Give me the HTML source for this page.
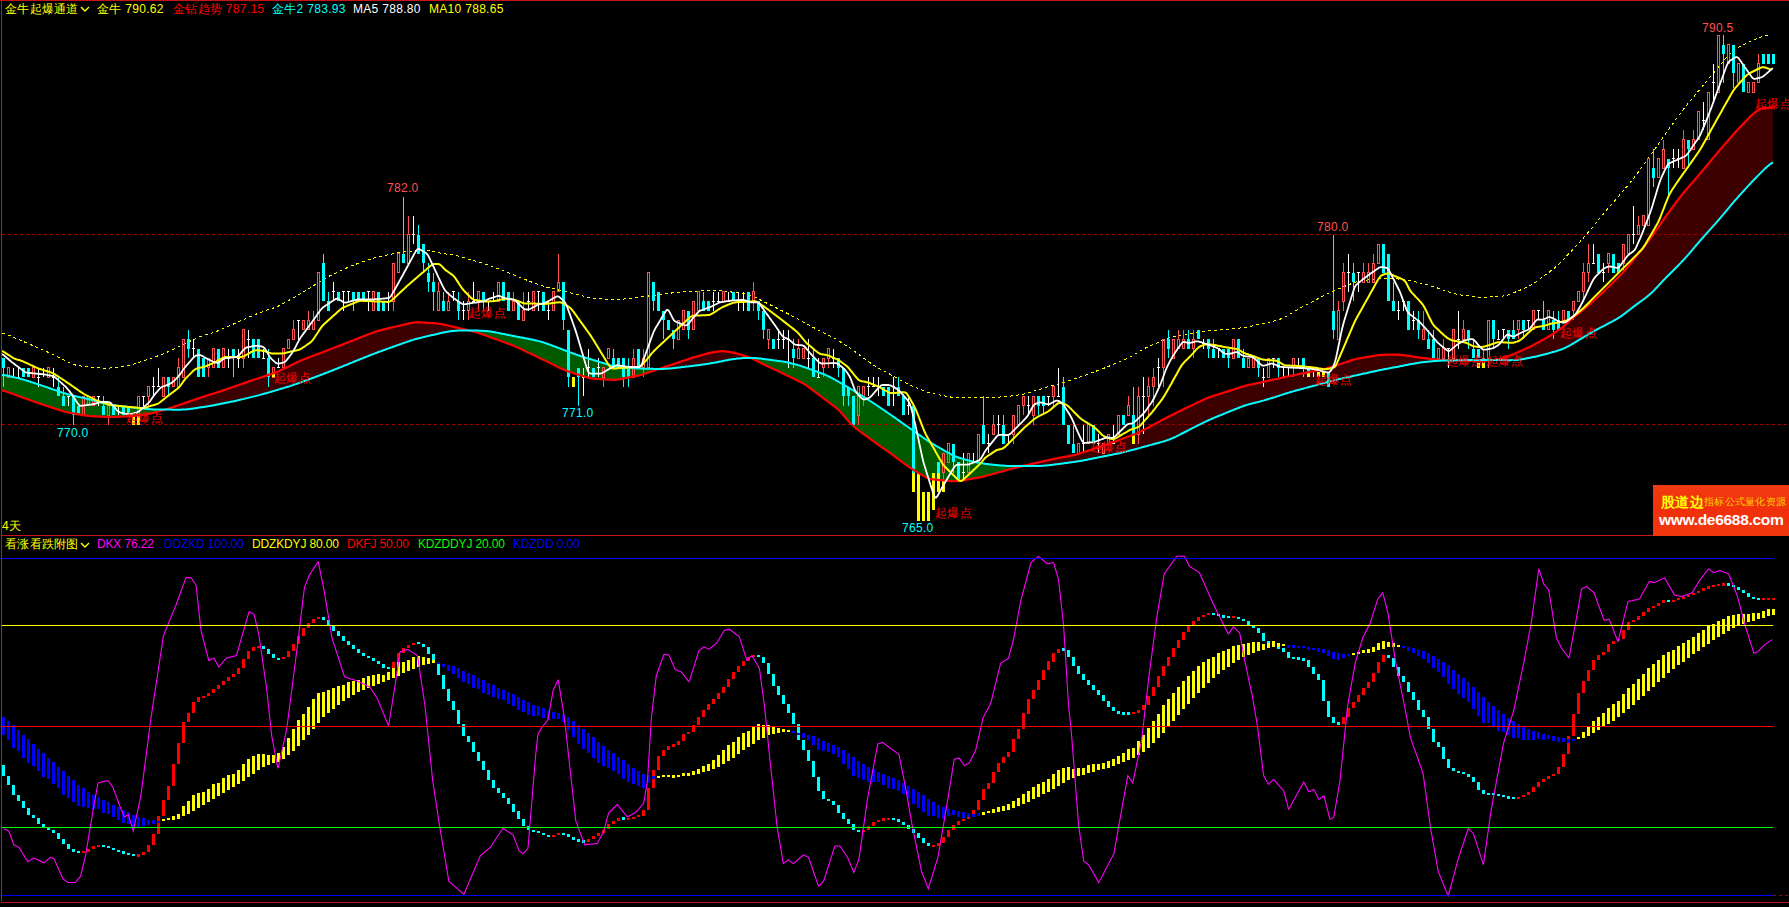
<!DOCTYPE html>
<html><head><meta charset="utf-8"><style>
html,body{margin:0;padding:0;background:#000;width:1789px;height:907px;overflow:hidden}
.t{position:absolute;font-family:"Liberation Sans",sans-serif;font-size:12px;line-height:12px;white-space:pre;letter-spacing:0.3px}
</style></head><body>
<svg width="1789" height="907" viewBox="0 0 1789 907" style="position:absolute;left:0;top:0">
<polygon points="2.0,390.4 3.0,390.6 4.0,390.8 5.0,391.1 6.0,391.4 7.0,391.8 8.0,392.1 9.0,392.5 10.0,392.9 11.0,393.2 12.0,393.6 13.0,394.0 14.0,394.3 15.0,394.7 16.0,395.1 17.0,395.5 18.0,395.8 19.0,396.2 20.0,396.6 21.0,396.9 22.0,397.3 23.0,397.6 24.0,398.0 25.0,398.3 26.0,398.7 27.0,399.0 28.0,399.4 29.0,399.7 30.0,400.1 31.0,400.5 32.0,400.8 33.0,401.2 34.0,401.5 35.0,401.9 36.0,402.2 37.0,402.5 38.0,402.9 39.0,403.2 40.0,403.6 41.0,403.9 42.0,404.3 43.0,404.6 44.0,405.0 45.0,405.3 46.0,405.6 47.0,406.0 48.0,406.3 49.0,406.6 50.0,406.9 51.0,407.3 52.0,407.6 53.0,407.9 54.0,408.2 55.0,408.6 56.0,408.9 57.0,409.2 58.0,409.5 59.0,409.9 60.0,410.2 61.0,410.5 62.0,410.8 63.0,411.1 64.0,411.4 65.0,411.7 66.0,412.0 67.0,412.2 68.0,412.4 69.0,412.6 70.0,412.8 71.0,413.0 72.0,413.2 73.0,413.4 74.0,413.5 75.0,413.7 76.0,413.9 77.0,414.1 78.0,414.2 79.0,414.4 80.0,414.6 81.0,414.8 82.0,414.9 83.0,415.1 84.0,415.3 85.0,415.4 86.0,415.6 87.0,415.7 88.0,415.8 89.0,415.9 90.0,416.0 91.0,416.1 92.0,416.2 93.0,416.2 94.0,416.3 95.0,416.3 96.0,416.4 97.0,416.4 98.0,416.5 99.0,416.5 100.0,416.6 101.0,416.6 102.0,416.7 103.0,416.7 104.0,416.8 105.0,416.8 106.0,416.9 107.0,416.9 108.0,416.9 109.0,417.0 110.0,417.0 111.0,417.0 112.0,417.0 113.0,416.9 114.0,416.9 115.0,416.9 116.0,416.8 117.0,416.8 118.0,416.7 119.0,416.7 120.0,416.6 121.0,416.6 122.0,416.5 123.0,416.5 124.0,416.4 125.0,416.4 126.0,416.3 127.0,416.3 128.0,416.2 129.0,416.2 130.0,416.1 131.0,416.0 132.0,415.9 133.0,415.9 134.0,415.8 135.0,415.7 136.0,415.5 137.0,415.4 138.0,415.3 139.0,415.2 140.0,415.0 141.0,414.9 142.0,414.8 143.0,414.7 144.0,414.5 145.0,414.4 146.0,414.3 147.0,414.1 148.0,414.0 149.0,413.8 150.0,413.6 151.0,413.4 152.0,413.2 153.0,412.9 154.0,412.7 155.0,412.4 156.0,412.1 157.0,411.8 158.0,411.5 159.0,411.3 160.0,411.0 161.0,410.7 162.0,410.4 163.0,410.1 164.0,409.8 165.0,409.6 165.0,409.6 164.0,409.6 163.0,409.5 162.0,409.5 161.0,409.5 160.0,409.5 159.0,409.5 158.0,409.5 157.0,409.5 156.0,409.4 155.0,409.4 154.0,409.4 153.0,409.4 152.0,409.3 151.0,409.3 150.0,409.2 149.0,409.1 148.0,409.1 147.0,409.0 146.0,408.9 145.0,408.8 144.0,408.7 143.0,408.6 142.0,408.5 141.0,408.4 140.0,408.3 139.0,408.2 138.0,408.1 137.0,408.0 136.0,407.8 135.0,407.7 134.0,407.6 133.0,407.5 132.0,407.4 131.0,407.3 130.0,407.2 129.0,407.1 128.0,407.0 127.0,406.9 126.0,406.7 125.0,406.6 124.0,406.5 123.0,406.4 122.0,406.3 121.0,406.2 120.0,406.1 119.0,406.0 118.0,405.8 117.0,405.7 116.0,405.6 115.0,405.4 114.0,405.3 113.0,405.2 112.0,405.0 111.0,404.8 110.0,404.6 109.0,404.4 108.0,404.2 107.0,404.0 106.0,403.7 105.0,403.5 104.0,403.3 103.0,403.0 102.0,402.7 101.0,402.5 100.0,402.2 99.0,401.9 98.0,401.7 97.0,401.4 96.0,401.1 95.0,400.9 94.0,400.6 93.0,400.3 92.0,400.1 91.0,399.8 90.0,399.5 89.0,399.3 88.0,399.0 87.0,398.8 86.0,398.5 85.0,398.3 84.0,398.1 83.0,397.8 82.0,397.6 81.0,397.4 80.0,397.1 79.0,396.9 78.0,396.7 77.0,396.5 76.0,396.2 75.0,396.0 74.0,395.8 73.0,395.5 72.0,395.3 71.0,395.0 70.0,394.8 69.0,394.5 68.0,394.3 67.0,394.0 66.0,393.7 65.0,393.4 64.0,393.1 63.0,392.8 62.0,392.5 61.0,392.1 60.0,391.8 59.0,391.5 58.0,391.1 57.0,390.8 56.0,390.4 55.0,390.1 54.0,389.7 53.0,389.4 52.0,389.0 51.0,388.7 50.0,388.3 49.0,388.0 48.0,387.6 47.0,387.3 46.0,386.9 45.0,386.6 44.0,386.2 43.0,385.9 42.0,385.6 41.0,385.2 40.0,384.9 39.0,384.6 38.0,384.2 37.0,383.9 36.0,383.6 35.0,383.3 34.0,382.9 33.0,382.6 32.0,382.3 31.0,382.0 30.0,381.6 29.0,381.3 28.0,381.0 27.0,380.7 26.0,380.4 25.0,380.1 24.0,379.8 23.0,379.5 22.0,379.2 21.0,378.9 20.0,378.7 19.0,378.4 18.0,378.1 17.0,377.9 16.0,377.6 15.0,377.4 14.0,377.2 13.0,376.9 12.0,376.7 11.0,376.5 10.0,376.3 9.0,376.1 8.0,375.8 7.0,375.6 6.0,375.5 5.0,375.3 4.0,375.1 3.0,375.0 2.0,374.9" fill="#005a00"/>
<polygon points="165.0,409.6 166.0,409.3 167.0,409.0 168.0,408.7 169.0,408.4 170.0,408.0 171.0,407.7 172.0,407.4 173.0,407.1 174.0,406.7 175.0,406.4 176.0,406.0 177.0,405.7 178.0,405.3 179.0,405.0 180.0,404.7 181.0,404.3 182.0,404.0 183.0,403.6 184.0,403.3 185.0,402.9 186.0,402.6 187.0,402.2 188.0,401.9 189.0,401.6 190.0,401.2 191.0,400.9 192.0,400.5 193.0,400.2 194.0,399.8 195.0,399.5 196.0,399.2 197.0,398.8 198.0,398.5 199.0,398.2 200.0,397.8 201.0,397.5 202.0,397.2 203.0,396.9 204.0,396.5 205.0,396.2 206.0,395.9 207.0,395.6 208.0,395.3 209.0,394.9 210.0,394.6 211.0,394.3 212.0,394.0 213.0,393.7 214.0,393.3 215.0,393.0 216.0,392.7 217.0,392.4 218.0,392.1 219.0,391.7 220.0,391.4 221.0,391.1 222.0,390.8 223.0,390.4 224.0,390.1 225.0,389.8 226.0,389.4 227.0,389.1 228.0,388.7 229.0,388.4 230.0,388.0 231.0,387.7 232.0,387.3 233.0,387.0 234.0,386.6 235.0,386.3 236.0,385.9 237.0,385.6 238.0,385.2 239.0,384.9 240.0,384.5 241.0,384.2 242.0,383.8 243.0,383.4 244.0,383.1 245.0,382.7 246.0,382.4 247.0,382.0 248.0,381.7 249.0,381.3 250.0,381.0 251.0,380.7 252.0,380.3 253.0,380.0 254.0,379.7 255.0,379.3 256.0,379.0 257.0,378.7 258.0,378.3 259.0,378.0 260.0,377.7 261.0,377.4 262.0,377.0 263.0,376.7 264.0,376.4 265.0,376.0 266.0,375.7 267.0,375.4 268.0,375.1 269.0,374.7 270.0,374.4 271.0,374.1 272.0,373.7 273.0,373.4 274.0,373.1 275.0,372.7 276.0,372.3 277.0,371.9 278.0,371.5 279.0,371.1 280.0,370.6 281.0,370.1 282.0,369.7 283.0,369.2 284.0,368.7 285.0,368.2 286.0,367.7 287.0,367.2 288.0,366.7 289.0,366.2 290.0,365.7 291.0,365.2 292.0,364.7 293.0,364.3 294.0,363.8 295.0,363.3 296.0,362.8 297.0,362.3 298.0,361.8 299.0,361.4 300.0,360.9 301.0,360.5 302.0,360.1 303.0,359.7 304.0,359.3 305.0,358.9 306.0,358.5 307.0,358.1 308.0,357.7 309.0,357.4 310.0,357.0 311.0,356.6 312.0,356.2 313.0,355.8 314.0,355.5 315.0,355.1 316.0,354.7 317.0,354.3 318.0,353.9 319.0,353.6 320.0,353.2 321.0,352.8 322.0,352.4 323.0,352.0 324.0,351.6 325.0,351.3 326.0,350.9 327.0,350.5 328.0,350.1 329.0,349.7 330.0,349.3 331.0,348.9 332.0,348.5 333.0,348.2 334.0,347.8 335.0,347.4 336.0,347.0 337.0,346.6 338.0,346.2 339.0,345.8 340.0,345.4 341.0,345.0 342.0,344.7 343.0,344.3 344.0,343.9 345.0,343.5 346.0,343.1 347.0,342.7 348.0,342.3 349.0,341.9 350.0,341.5 351.0,341.1 352.0,340.8 353.0,340.4 354.0,340.0 355.0,339.6 356.0,339.2 357.0,338.8 358.0,338.4 359.0,338.0 360.0,337.6 361.0,337.2 362.0,336.9 363.0,336.5 364.0,336.1 365.0,335.7 366.0,335.3 367.0,334.9 368.0,334.5 369.0,334.1 370.0,333.7 371.0,333.3 372.0,333.0 373.0,332.6 374.0,332.2 375.0,331.8 376.0,331.5 377.0,331.2 378.0,330.9 379.0,330.6 380.0,330.3 381.0,330.1 382.0,329.8 383.0,329.6 384.0,329.3 385.0,329.1 386.0,328.9 387.0,328.6 388.0,328.4 389.0,328.2 390.0,327.9 391.0,327.7 392.0,327.4 393.0,327.2 394.0,327.0 395.0,326.7 396.0,326.5 397.0,326.3 398.0,326.0 399.0,325.8 400.0,325.6 401.0,325.3 402.0,325.1 403.0,324.8 404.0,324.6 405.0,324.4 406.0,324.1 407.0,323.9 408.0,323.7 409.0,323.4 410.0,323.2 411.0,323.0 412.0,322.8 413.0,322.6 414.0,322.5 415.0,322.4 416.0,322.3 417.0,322.3 418.0,322.3 419.0,322.3 420.0,322.3 421.0,322.4 422.0,322.5 423.0,322.5 424.0,322.6 425.0,322.6 426.0,322.7 427.0,322.8 428.0,322.8 429.0,322.9 430.0,323.0 431.0,323.0 432.0,323.1 433.0,323.2 434.0,323.2 435.0,323.3 436.0,323.4 437.0,323.4 438.0,323.5 439.0,323.7 440.0,323.8 441.0,324.0 442.0,324.2 443.0,324.4 444.0,324.6 445.0,324.8 446.0,325.0 447.0,325.3 448.0,325.5 449.0,325.7 450.0,326.0 451.0,326.2 452.0,326.5 453.0,326.7 454.0,326.9 455.0,327.2 456.0,327.4 457.0,327.7 458.0,327.9 459.0,328.1 460.0,328.4 461.0,328.6 462.0,328.9 463.0,329.1 464.0,329.3 465.0,329.6 466.0,329.8 467.0,330.0 468.0,330.3 469.0,330.5 469.0,330.4 468.0,330.4 467.0,330.4 466.0,330.4 465.0,330.4 464.0,330.4 463.0,330.4 462.0,330.4 461.0,330.5 460.0,330.5 459.0,330.6 458.0,330.6 457.0,330.7 456.0,330.7 455.0,330.8 454.0,330.9 453.0,331.0 452.0,331.1 451.0,331.2 450.0,331.3 449.0,331.5 448.0,331.7 447.0,331.8 446.0,332.0 445.0,332.2 444.0,332.4 443.0,332.6 442.0,332.8 441.0,333.1 440.0,333.3 439.0,333.5 438.0,333.7 437.0,334.0 436.0,334.2 435.0,334.4 434.0,334.7 433.0,334.9 432.0,335.1 431.0,335.3 430.0,335.6 429.0,335.8 428.0,336.0 427.0,336.3 426.0,336.5 425.0,336.7 424.0,337.0 423.0,337.2 422.0,337.4 421.0,337.7 420.0,337.9 419.0,338.2 418.0,338.4 417.0,338.7 416.0,339.0 415.0,339.3 414.0,339.5 413.0,339.9 412.0,340.2 411.0,340.5 410.0,340.8 409.0,341.2 408.0,341.5 407.0,341.9 406.0,342.2 405.0,342.6 404.0,342.9 403.0,343.3 402.0,343.6 401.0,344.0 400.0,344.3 399.0,344.7 398.0,345.0 397.0,345.4 396.0,345.8 395.0,346.1 394.0,346.5 393.0,346.8 392.0,347.2 391.0,347.5 390.0,347.9 389.0,348.2 388.0,348.6 387.0,348.9 386.0,349.3 385.0,349.7 384.0,350.0 383.0,350.4 382.0,350.7 381.0,351.1 380.0,351.5 379.0,351.8 378.0,352.2 377.0,352.6 376.0,353.0 375.0,353.4 374.0,353.7 373.0,354.1 372.0,354.5 371.0,354.9 370.0,355.3 369.0,355.7 368.0,356.1 367.0,356.5 366.0,356.9 365.0,357.3 364.0,357.7 363.0,358.1 362.0,358.5 361.0,358.9 360.0,359.3 359.0,359.7 358.0,360.1 357.0,360.5 356.0,360.9 355.0,361.3 354.0,361.7 353.0,362.1 352.0,362.6 351.0,363.0 350.0,363.4 349.0,363.8 348.0,364.2 347.0,364.6 346.0,365.0 345.0,365.4 344.0,365.8 343.0,366.2 342.0,366.6 341.0,367.0 340.0,367.4 339.0,367.8 338.0,368.2 337.0,368.6 336.0,369.0 335.0,369.4 334.0,369.8 333.0,370.2 332.0,370.6 331.0,371.0 330.0,371.4 329.0,371.8 328.0,372.2 327.0,372.5 326.0,372.9 325.0,373.3 324.0,373.7 323.0,374.1 322.0,374.5 321.0,374.8 320.0,375.2 319.0,375.6 318.0,376.0 317.0,376.3 316.0,376.7 315.0,377.1 314.0,377.5 313.0,377.8 312.0,378.2 311.0,378.6 310.0,379.0 309.0,379.3 308.0,379.7 307.0,380.1 306.0,380.4 305.0,380.8 304.0,381.2 303.0,381.6 302.0,381.9 301.0,382.3 300.0,382.6 299.0,383.0 298.0,383.4 297.0,383.7 296.0,384.1 295.0,384.4 294.0,384.7 293.0,385.1 292.0,385.4 291.0,385.7 290.0,386.1 289.0,386.4 288.0,386.7 287.0,387.0 286.0,387.3 285.0,387.6 284.0,387.9 283.0,388.2 282.0,388.5 281.0,388.8 280.0,389.1 279.0,389.4 278.0,389.7 277.0,390.0 276.0,390.3 275.0,390.6 274.0,390.9 273.0,391.2 272.0,391.5 271.0,391.8 270.0,392.1 269.0,392.4 268.0,392.7 267.0,393.0 266.0,393.2 265.0,393.5 264.0,393.8 263.0,394.1 262.0,394.3 261.0,394.6 260.0,394.9 259.0,395.1 258.0,395.4 257.0,395.6 256.0,395.9 255.0,396.1 254.0,396.4 253.0,396.6 252.0,396.9 251.0,397.1 250.0,397.4 249.0,397.6 248.0,397.9 247.0,398.1 246.0,398.4 245.0,398.6 244.0,398.9 243.0,399.1 242.0,399.4 241.0,399.6 240.0,399.8 239.0,400.1 238.0,400.3 237.0,400.5 236.0,400.8 235.0,401.0 234.0,401.2 233.0,401.4 232.0,401.6 231.0,401.8 230.0,402.0 229.0,402.2 228.0,402.4 227.0,402.6 226.0,402.8 225.0,403.0 224.0,403.2 223.0,403.4 222.0,403.6 221.0,403.8 220.0,404.0 219.0,404.2 218.0,404.4 217.0,404.6 216.0,404.8 215.0,405.0 214.0,405.2 213.0,405.4 212.0,405.5 211.0,405.7 210.0,405.9 209.0,406.1 208.0,406.2 207.0,406.4 206.0,406.6 205.0,406.7 204.0,406.9 203.0,407.0 202.0,407.2 201.0,407.3 200.0,407.5 199.0,407.6 198.0,407.8 197.0,407.9 196.0,408.1 195.0,408.2 194.0,408.4 193.0,408.5 192.0,408.7 191.0,408.8 190.0,408.9 189.0,409.1 188.0,409.2 187.0,409.3 186.0,409.4 185.0,409.5 184.0,409.5 183.0,409.6 182.0,409.6 181.0,409.7 180.0,409.7 179.0,409.7 178.0,409.7 177.0,409.7 176.0,409.7 175.0,409.7 174.0,409.7 173.0,409.7 172.0,409.7 171.0,409.6 170.0,409.6 169.0,409.6 168.0,409.6 167.0,409.6 166.0,409.6 165.0,409.6" fill="#3c0000"/>
<polygon points="469.0,330.5 470.0,330.8 471.0,331.0 472.0,331.2 473.0,331.5 474.0,331.7 475.0,332.0 476.0,332.3 477.0,332.5 478.0,332.8 479.0,333.2 480.0,333.5 481.0,333.8 482.0,334.2 483.0,334.5 484.0,334.9 485.0,335.2 486.0,335.6 487.0,336.0 488.0,336.3 489.0,336.7 490.0,337.1 491.0,337.4 492.0,337.8 493.0,338.1 494.0,338.5 495.0,338.9 496.0,339.2 497.0,339.6 498.0,340.0 499.0,340.3 500.0,340.7 501.0,341.0 502.0,341.4 503.0,341.8 504.0,342.1 505.0,342.5 506.0,342.9 507.0,343.2 508.0,343.6 509.0,343.9 510.0,344.3 511.0,344.7 512.0,345.1 513.0,345.4 514.0,345.8 515.0,346.2 516.0,346.7 517.0,347.1 518.0,347.6 519.0,348.0 520.0,348.5 521.0,349.0 522.0,349.5 523.0,349.9 524.0,350.4 525.0,350.9 526.0,351.4 527.0,351.9 528.0,352.4 529.0,352.8 530.0,353.3 531.0,353.8 532.0,354.3 533.0,354.8 534.0,355.3 535.0,355.8 536.0,356.2 537.0,356.7 538.0,357.2 539.0,357.7 540.0,358.2 541.0,358.7 542.0,359.2 543.0,359.6 544.0,360.1 545.0,360.6 546.0,361.1 547.0,361.6 548.0,362.1 549.0,362.6 550.0,363.0 551.0,363.5 552.0,364.0 553.0,364.5 554.0,365.0 555.0,365.5 556.0,365.9 557.0,366.4 558.0,366.9 559.0,367.4 560.0,367.9 561.0,368.4 562.0,368.8 563.0,369.3 564.0,369.7 565.0,370.2 566.0,370.6 567.0,371.0 568.0,371.3 569.0,371.7 570.0,372.0 571.0,372.3 572.0,372.6 573.0,373.0 574.0,373.3 575.0,373.6 576.0,373.9 577.0,374.2 578.0,374.5 579.0,374.8 580.0,375.2 581.0,375.5 582.0,375.8 583.0,376.1 584.0,376.4 585.0,376.7 586.0,377.0 587.0,377.3 588.0,377.6 589.0,377.9 590.0,378.1 591.0,378.3 592.0,378.5 593.0,378.6 594.0,378.7 595.0,378.8 596.0,378.9 597.0,378.9 598.0,379.0 599.0,379.0 600.0,379.1 601.0,379.2 602.0,379.2 603.0,379.3 604.0,379.3 605.0,379.4 606.0,379.4 607.0,379.5 608.0,379.6 609.0,379.6 610.0,379.7 611.0,379.7 612.0,379.7 613.0,379.8 614.0,379.8 615.0,379.8 616.0,379.7 617.0,379.6 618.0,379.5 619.0,379.3 620.0,379.2 621.0,379.0 622.0,378.8 623.0,378.6 624.0,378.4 625.0,378.2 626.0,378.0 627.0,377.8 628.0,377.6 629.0,377.4 630.0,377.2 631.0,377.0 632.0,376.8 633.0,376.6 634.0,376.4 635.0,376.2 636.0,376.0 637.0,375.8 638.0,375.6 639.0,375.3 640.0,375.1 641.0,374.8 642.0,374.6 643.0,374.3 644.0,374.0 645.0,373.6 646.0,373.3 647.0,373.0 648.0,372.6 649.0,372.3 650.0,372.0 651.0,371.6 652.0,371.3 653.0,371.0 654.0,370.6 655.0,370.3 656.0,370.0 657.0,369.6 658.0,369.3 659.0,369.0 660.0,368.6 660.0,368.9 659.0,368.9 658.0,368.9 657.0,368.9 656.0,368.9 655.0,368.9 654.0,368.9 653.0,368.8 652.0,368.8 651.0,368.8 650.0,368.8 649.0,368.8 648.0,368.8 647.0,368.8 646.0,368.7 645.0,368.7 644.0,368.7 643.0,368.7 642.0,368.6 641.0,368.6 640.0,368.5 639.0,368.5 638.0,368.4 637.0,368.4 636.0,368.3 635.0,368.3 634.0,368.2 633.0,368.2 632.0,368.1 631.0,368.0 630.0,368.0 629.0,367.9 628.0,367.8 627.0,367.7 626.0,367.7 625.0,367.6 624.0,367.5 623.0,367.4 622.0,367.3 621.0,367.2 620.0,367.1 619.0,367.0 618.0,366.9 617.0,366.7 616.0,366.5 615.0,366.3 614.0,366.1 613.0,365.9 612.0,365.6 611.0,365.4 610.0,365.1 609.0,364.8 608.0,364.5 607.0,364.2 606.0,363.9 605.0,363.6 604.0,363.3 603.0,363.0 602.0,362.7 601.0,362.4 600.0,362.1 599.0,361.8 598.0,361.5 597.0,361.1 596.0,360.8 595.0,360.5 594.0,360.2 593.0,359.9 592.0,359.6 591.0,359.3 590.0,359.0 589.0,358.7 588.0,358.4 587.0,358.1 586.0,357.8 585.0,357.4 584.0,357.1 583.0,356.8 582.0,356.5 581.0,356.2 580.0,355.8 579.0,355.5 578.0,355.2 577.0,354.8 576.0,354.5 575.0,354.1 574.0,353.8 573.0,353.4 572.0,353.0 571.0,352.6 570.0,352.3 569.0,351.9 568.0,351.5 567.0,351.2 566.0,350.8 565.0,350.4 564.0,350.0 563.0,349.6 562.0,349.3 561.0,348.9 560.0,348.5 559.0,348.1 558.0,347.8 557.0,347.4 556.0,347.0 555.0,346.6 554.0,346.3 553.0,345.9 552.0,345.5 551.0,345.1 550.0,344.8 549.0,344.4 548.0,344.0 547.0,343.7 546.0,343.3 545.0,343.0 544.0,342.6 543.0,342.3 542.0,342.0 541.0,341.7 540.0,341.4 539.0,341.1 538.0,340.9 537.0,340.6 536.0,340.4 535.0,340.2 534.0,340.0 533.0,339.8 532.0,339.6 531.0,339.4 530.0,339.2 529.0,339.0 528.0,338.8 527.0,338.6 526.0,338.4 525.0,338.2 524.0,338.0 523.0,337.8 522.0,337.6 521.0,337.4 520.0,337.3 519.0,337.1 518.0,336.9 517.0,336.7 516.0,336.5 515.0,336.3 514.0,336.1 513.0,335.9 512.0,335.7 511.0,335.5 510.0,335.3 509.0,335.1 508.0,334.9 507.0,334.7 506.0,334.5 505.0,334.3 504.0,334.1 503.0,333.9 502.0,333.7 501.0,333.5 500.0,333.3 499.0,333.1 498.0,332.9 497.0,332.6 496.0,332.4 495.0,332.2 494.0,332.0 493.0,331.9 492.0,331.7 491.0,331.5 490.0,331.4 489.0,331.3 488.0,331.2 487.0,331.1 486.0,331.0 485.0,330.9 484.0,330.9 483.0,330.8 482.0,330.8 481.0,330.7 480.0,330.7 479.0,330.7 478.0,330.6 477.0,330.6 476.0,330.6 475.0,330.5 474.0,330.5 473.0,330.5 472.0,330.4 471.0,330.4 470.0,330.4 469.0,330.4" fill="#005a00"/>
<polygon points="660.0,368.6 661.0,368.3 662.0,367.9 663.0,367.6 664.0,367.3 665.0,366.9 666.0,366.6 667.0,366.3 668.0,365.9 669.0,365.6 670.0,365.3 671.0,364.9 672.0,364.6 673.0,364.2 674.0,363.9 675.0,363.6 676.0,363.2 677.0,362.9 678.0,362.6 679.0,362.2 680.0,361.9 681.0,361.5 682.0,361.2 683.0,360.9 684.0,360.5 685.0,360.2 686.0,359.9 687.0,359.5 688.0,359.2 689.0,358.9 690.0,358.5 691.0,358.2 692.0,357.9 693.0,357.6 694.0,357.3 695.0,357.0 696.0,356.7 697.0,356.4 698.0,356.1 699.0,355.9 700.0,355.6 701.0,355.3 702.0,355.0 703.0,354.7 704.0,354.4 705.0,354.1 706.0,353.9 707.0,353.6 708.0,353.3 709.0,353.1 710.0,352.9 711.0,352.6 712.0,352.4 713.0,352.3 714.0,352.1 715.0,351.9 716.0,351.8 717.0,351.6 718.0,351.5 719.0,351.4 720.0,351.3 721.0,351.2 722.0,351.2 723.0,351.2 724.0,351.2 725.0,351.3 726.0,351.4 727.0,351.6 728.0,351.7 729.0,351.9 730.0,352.0 731.0,352.2 732.0,352.4 733.0,352.6 734.0,352.8 735.0,353.0 736.0,353.3 737.0,353.6 738.0,353.9 739.0,354.1 740.0,354.4 741.0,354.8 742.0,355.1 743.0,355.4 744.0,355.7 745.0,356.0 746.0,356.3 747.0,356.6 748.0,357.0 749.0,357.3 750.0,357.7 751.0,358.1 751.0,357.9 750.0,357.9 749.0,357.9 748.0,357.9 747.0,357.9 746.0,358.0 745.0,358.0 744.0,358.1 743.0,358.1 742.0,358.2 741.0,358.3 740.0,358.4 739.0,358.5 738.0,358.5 737.0,358.6 736.0,358.8 735.0,358.9 734.0,359.0 733.0,359.2 732.0,359.3 731.0,359.5 730.0,359.6 729.0,359.8 728.0,360.0 727.0,360.2 726.0,360.4 725.0,360.6 724.0,360.8 723.0,361.0 722.0,361.2 721.0,361.4 720.0,361.6 719.0,361.8 718.0,362.0 717.0,362.2 716.0,362.4 715.0,362.6 714.0,362.8 713.0,362.9 712.0,363.1 711.0,363.3 710.0,363.5 709.0,363.6 708.0,363.8 707.0,363.9 706.0,364.1 705.0,364.2 704.0,364.4 703.0,364.5 702.0,364.6 701.0,364.8 700.0,364.9 699.0,365.0 698.0,365.2 697.0,365.3 696.0,365.4 695.0,365.5 694.0,365.7 693.0,365.8 692.0,365.9 691.0,366.0 690.0,366.2 689.0,366.3 688.0,366.4 687.0,366.5 686.0,366.6 685.0,366.8 684.0,366.9 683.0,367.0 682.0,367.1 681.0,367.2 680.0,367.4 679.0,367.5 678.0,367.6 677.0,367.7 676.0,367.8 675.0,367.9 674.0,368.0 673.0,368.2 672.0,368.3 671.0,368.4 670.0,368.5 669.0,368.5 668.0,368.6 667.0,368.7 666.0,368.7 665.0,368.8 664.0,368.8 663.0,368.9 662.0,368.9 661.0,368.9 660.0,368.9" fill="#3c0000"/>
<polygon points="751.0,358.1 752.0,358.6 753.0,359.0 754.0,359.5 755.0,360.0 756.0,360.5 757.0,361.0 758.0,361.5 759.0,362.0 760.0,362.5 761.0,363.0 762.0,363.5 763.0,364.0 764.0,364.5 765.0,365.0 766.0,365.4 767.0,365.9 768.0,366.4 769.0,366.9 770.0,367.3 771.0,367.8 772.0,368.3 773.0,368.7 774.0,369.2 775.0,369.7 776.0,370.1 777.0,370.6 778.0,371.1 779.0,371.5 780.0,372.0 781.0,372.5 782.0,372.9 783.0,373.4 784.0,373.9 785.0,374.4 786.0,374.9 787.0,375.4 788.0,375.9 789.0,376.3 790.0,376.8 791.0,377.3 792.0,377.8 793.0,378.3 794.0,378.8 795.0,379.3 796.0,379.8 797.0,380.3 798.0,380.8 799.0,381.3 800.0,381.8 801.0,382.3 802.0,382.8 803.0,383.3 804.0,383.9 805.0,384.5 806.0,385.2 807.0,385.8 808.0,386.5 809.0,387.3 810.0,388.0 811.0,388.8 812.0,389.5 813.0,390.3 814.0,391.0 815.0,391.8 816.0,392.5 817.0,393.3 818.0,394.0 819.0,394.8 820.0,395.6 821.0,396.3 822.0,397.1 823.0,397.8 824.0,398.6 825.0,399.3 826.0,400.1 827.0,400.8 828.0,401.6 829.0,402.3 830.0,403.1 831.0,403.8 832.0,404.6 833.0,405.3 834.0,406.1 835.0,406.9 836.0,407.7 837.0,408.5 838.0,409.4 839.0,410.3 840.0,411.3 841.0,412.4 842.0,413.5 843.0,414.7 844.0,415.8 845.0,417.0 846.0,418.2 847.0,419.4 848.0,420.6 849.0,421.7 850.0,422.8 851.0,423.8 852.0,424.8 853.0,425.7 854.0,426.6 855.0,427.4 856.0,428.2 857.0,429.0 858.0,429.8 859.0,430.5 860.0,431.3 861.0,432.0 862.0,432.8 863.0,433.5 864.0,434.3 865.0,435.0 866.0,435.7 867.0,436.5 868.0,437.2 869.0,438.0 870.0,438.7 871.0,439.5 872.0,440.2 873.0,440.9 874.0,441.6 875.0,442.3 876.0,443.0 877.0,443.8 878.0,444.5 879.0,445.2 880.0,445.9 881.0,446.6 882.0,447.3 883.0,448.0 884.0,448.7 885.0,449.4 886.0,450.1 887.0,450.8 888.0,451.5 889.0,452.2 890.0,452.9 891.0,453.6 892.0,454.4 893.0,455.1 894.0,455.8 895.0,456.6 896.0,457.3 897.0,458.1 898.0,458.8 899.0,459.6 900.0,460.3 901.0,461.1 902.0,461.8 903.0,462.6 904.0,463.3 905.0,464.0 906.0,464.8 907.0,465.5 908.0,466.2 909.0,466.9 910.0,467.6 911.0,468.3 912.0,468.9 913.0,469.6 914.0,470.2 915.0,470.8 916.0,471.4 917.0,472.0 918.0,472.6 919.0,473.2 920.0,473.8 921.0,474.4 922.0,475.0 923.0,475.6 924.0,476.1 925.0,476.7 926.0,477.2 927.0,477.7 928.0,478.1 929.0,478.5 930.0,478.8 931.0,479.0 932.0,479.2 933.0,479.3 934.0,479.5 935.0,479.6 936.0,479.7 937.0,479.8 938.0,479.9 939.0,480.0 940.0,480.1 941.0,480.1 942.0,480.2 943.0,480.3 944.0,480.4 945.0,480.5 946.0,480.6 947.0,480.7 948.0,480.8 949.0,480.9 950.0,481.0 951.0,481.1 952.0,481.1 953.0,481.2 954.0,481.2 955.0,481.2 956.0,481.2 957.0,481.1 958.0,481.0 959.0,480.9 960.0,480.7 961.0,480.6 962.0,480.4 963.0,480.2 964.0,480.1 965.0,479.9 966.0,479.7 967.0,479.6 968.0,479.4 969.0,479.2 970.0,479.1 971.0,478.9 972.0,478.7 973.0,478.6 974.0,478.4 975.0,478.2 976.0,478.1 977.0,477.9 978.0,477.7 979.0,477.5 980.0,477.3 981.0,477.1 982.0,476.9 983.0,476.6 984.0,476.4 985.0,476.1 986.0,475.8 987.0,475.5 988.0,475.3 989.0,475.0 990.0,474.7 991.0,474.5 992.0,474.2 993.0,473.9 994.0,473.6 995.0,473.4 996.0,473.1 997.0,472.8 998.0,472.5 999.0,472.3 1000.0,472.0 1001.0,471.7 1002.0,471.5 1003.0,471.2 1004.0,470.9 1005.0,470.6 1006.0,470.4 1007.0,470.1 1008.0,469.8 1009.0,469.5 1010.0,469.3 1011.0,469.0 1012.0,468.7 1013.0,468.4 1014.0,468.2 1015.0,467.9 1016.0,467.6 1017.0,467.4 1018.0,467.1 1019.0,466.9 1020.0,466.6 1021.0,466.4 1022.0,466.2 1023.0,465.9 1023.0,466.0 1022.0,466.0 1021.0,466.0 1020.0,466.0 1019.0,466.0 1018.0,466.0 1017.0,466.0 1016.0,466.0 1015.0,466.0 1014.0,466.0 1013.0,466.0 1012.0,466.0 1011.0,466.0 1010.0,465.9 1009.0,465.9 1008.0,465.9 1007.0,465.9 1006.0,465.8 1005.0,465.8 1004.0,465.7 1003.0,465.6 1002.0,465.5 1001.0,465.5 1000.0,465.4 999.0,465.3 998.0,465.2 997.0,465.1 996.0,465.0 995.0,464.9 994.0,464.8 993.0,464.7 992.0,464.6 991.0,464.5 990.0,464.4 989.0,464.3 988.0,464.1 987.0,464.0 986.0,463.9 985.0,463.8 984.0,463.6 983.0,463.5 982.0,463.3 981.0,463.2 980.0,463.0 979.0,462.8 978.0,462.6 977.0,462.4 976.0,462.2 975.0,461.9 974.0,461.7 973.0,461.4 972.0,461.2 971.0,460.9 970.0,460.7 969.0,460.4 968.0,460.2 967.0,459.9 966.0,459.7 965.0,459.4 964.0,459.1 963.0,458.9 962.0,458.6 961.0,458.3 960.0,458.0 959.0,457.7 958.0,457.3 957.0,457.0 956.0,456.6 955.0,456.2 954.0,455.7 953.0,455.2 952.0,454.8 951.0,454.3 950.0,453.7 949.0,453.2 948.0,452.6 947.0,452.1 946.0,451.5 945.0,450.9 944.0,450.4 943.0,449.8 942.0,449.2 941.0,448.7 940.0,448.1 939.0,447.5 938.0,446.9 937.0,446.3 936.0,445.8 935.0,445.2 934.0,444.6 933.0,444.0 932.0,443.4 931.0,442.8 930.0,442.1 929.0,441.5 928.0,440.9 927.0,440.2 926.0,439.5 925.0,438.9 924.0,438.2 923.0,437.5 922.0,436.8 921.0,436.1 920.0,435.4 919.0,434.7 918.0,434.0 917.0,433.3 916.0,432.6 915.0,431.9 914.0,431.2 913.0,430.5 912.0,429.8 911.0,429.1 910.0,428.4 909.0,427.7 908.0,427.0 907.0,426.3 906.0,425.6 905.0,424.9 904.0,424.2 903.0,423.5 902.0,422.8 901.0,422.1 900.0,421.4 899.0,420.6 898.0,419.9 897.0,419.2 896.0,418.5 895.0,417.8 894.0,417.1 893.0,416.4 892.0,415.7 891.0,415.0 890.0,414.3 889.0,413.7 888.0,413.0 887.0,412.3 886.0,411.6 885.0,410.9 884.0,410.2 883.0,409.5 882.0,408.9 881.0,408.2 880.0,407.5 879.0,406.8 878.0,406.1 877.0,405.5 876.0,404.8 875.0,404.1 874.0,403.5 873.0,402.8 872.0,402.2 871.0,401.5 870.0,400.9 869.0,400.2 868.0,399.6 867.0,398.9 866.0,398.3 865.0,397.7 864.0,397.1 863.0,396.4 862.0,395.8 861.0,395.2 860.0,394.6 859.0,393.9 858.0,393.3 857.0,392.7 856.0,392.1 855.0,391.5 854.0,390.9 853.0,390.2 852.0,389.6 851.0,389.0 850.0,388.4 849.0,387.8 848.0,387.2 847.0,386.6 846.0,386.1 845.0,385.5 844.0,384.9 843.0,384.3 842.0,383.7 841.0,383.2 840.0,382.6 839.0,382.0 838.0,381.4 837.0,380.9 836.0,380.3 835.0,379.7 834.0,379.2 833.0,378.6 832.0,378.1 831.0,377.6 830.0,377.0 829.0,376.5 828.0,376.1 827.0,375.6 826.0,375.2 825.0,374.7 824.0,374.3 823.0,373.9 822.0,373.5 821.0,373.1 820.0,372.7 819.0,372.4 818.0,372.0 817.0,371.6 816.0,371.3 815.0,370.9 814.0,370.5 813.0,370.2 812.0,369.8 811.0,369.4 810.0,369.1 809.0,368.7 808.0,368.4 807.0,368.0 806.0,367.7 805.0,367.3 804.0,367.0 803.0,366.7 802.0,366.4 801.0,366.0 800.0,365.7 799.0,365.4 798.0,365.1 797.0,364.8 796.0,364.5 795.0,364.3 794.0,364.0 793.0,363.7 792.0,363.5 791.0,363.2 790.0,363.0 789.0,362.7 788.0,362.5 787.0,362.3 786.0,362.1 785.0,362.0 784.0,361.8 783.0,361.6 782.0,361.5 781.0,361.3 780.0,361.2 779.0,361.0 778.0,360.9 777.0,360.8 776.0,360.6 775.0,360.5 774.0,360.4 773.0,360.2 772.0,360.1 771.0,360.0 770.0,359.8 769.0,359.7 768.0,359.5 767.0,359.4 766.0,359.3 765.0,359.2 764.0,359.0 763.0,358.9 762.0,358.8 761.0,358.6 760.0,358.5 759.0,358.4 758.0,358.3 757.0,358.2 756.0,358.1 755.0,358.0 754.0,358.0 753.0,357.9 752.0,357.9 751.0,357.9" fill="#005a00"/>
<polygon points="1023.0,465.9 1024.0,465.7 1025.0,465.5 1026.0,465.2 1027.0,465.0 1028.0,464.8 1029.0,464.6 1030.0,464.3 1031.0,464.1 1032.0,463.9 1033.0,463.6 1034.0,463.4 1035.0,463.2 1036.0,463.0 1037.0,462.7 1038.0,462.5 1039.0,462.3 1040.0,462.0 1041.0,461.8 1042.0,461.6 1043.0,461.4 1044.0,461.1 1045.0,460.9 1046.0,460.7 1047.0,460.5 1048.0,460.2 1049.0,460.0 1050.0,459.8 1051.0,459.5 1052.0,459.3 1053.0,459.1 1054.0,458.9 1055.0,458.7 1056.0,458.5 1057.0,458.3 1058.0,458.1 1059.0,457.9 1060.0,457.7 1061.0,457.5 1062.0,457.3 1063.0,457.1 1064.0,457.0 1065.0,456.8 1066.0,456.6 1067.0,456.4 1068.0,456.3 1069.0,456.1 1070.0,455.9 1071.0,455.7 1072.0,455.5 1073.0,455.3 1074.0,455.1 1075.0,454.8 1076.0,454.6 1077.0,454.3 1078.0,454.0 1079.0,453.7 1080.0,453.4 1081.0,453.0 1082.0,452.7 1083.0,452.4 1084.0,452.0 1085.0,451.7 1086.0,451.4 1087.0,451.1 1088.0,450.7 1089.0,450.4 1090.0,450.1 1091.0,449.8 1092.0,449.4 1093.0,449.1 1094.0,448.8 1095.0,448.4 1096.0,448.1 1097.0,447.8 1098.0,447.5 1099.0,447.1 1100.0,446.8 1101.0,446.5 1102.0,446.1 1103.0,445.8 1104.0,445.5 1105.0,445.1 1106.0,444.8 1107.0,444.4 1108.0,444.1 1109.0,443.7 1110.0,443.4 1111.0,443.0 1112.0,442.6 1113.0,442.2 1114.0,441.9 1115.0,441.5 1116.0,441.1 1117.0,440.8 1118.0,440.4 1119.0,440.0 1120.0,439.6 1121.0,439.3 1122.0,438.9 1123.0,438.5 1124.0,438.1 1125.0,437.8 1126.0,437.4 1127.0,437.0 1128.0,436.6 1129.0,436.3 1130.0,435.9 1131.0,435.5 1132.0,435.1 1133.0,434.7 1134.0,434.4 1135.0,434.0 1136.0,433.6 1137.0,433.2 1138.0,432.8 1139.0,432.3 1140.0,431.8 1141.0,431.4 1142.0,430.8 1143.0,430.3 1144.0,429.8 1145.0,429.3 1146.0,428.7 1147.0,428.2 1148.0,427.7 1149.0,427.1 1150.0,426.6 1151.0,426.0 1152.0,425.5 1153.0,425.0 1154.0,424.4 1155.0,423.9 1156.0,423.3 1157.0,422.8 1158.0,422.3 1159.0,421.7 1160.0,421.2 1161.0,420.6 1162.0,420.1 1163.0,419.6 1164.0,419.0 1165.0,418.5 1166.0,418.0 1167.0,417.4 1168.0,416.9 1169.0,416.4 1170.0,415.9 1171.0,415.4 1172.0,414.9 1173.0,414.4 1174.0,413.9 1175.0,413.4 1176.0,412.9 1177.0,412.4 1178.0,412.0 1179.0,411.5 1180.0,411.0 1181.0,410.5 1182.0,410.0 1183.0,409.5 1184.0,409.1 1185.0,408.6 1186.0,408.1 1187.0,407.6 1188.0,407.1 1189.0,406.7 1190.0,406.2 1191.0,405.7 1192.0,405.2 1193.0,404.7 1194.0,404.3 1195.0,403.8 1196.0,403.3 1197.0,402.8 1198.0,402.3 1199.0,401.8 1200.0,401.4 1201.0,400.9 1202.0,400.4 1203.0,399.9 1204.0,399.5 1205.0,399.0 1206.0,398.6 1207.0,398.2 1208.0,397.8 1209.0,397.4 1210.0,397.1 1211.0,396.7 1212.0,396.4 1213.0,396.1 1214.0,395.8 1215.0,395.4 1216.0,395.1 1217.0,394.8 1218.0,394.5 1219.0,394.1 1220.0,393.8 1221.0,393.5 1222.0,393.2 1223.0,392.9 1224.0,392.5 1225.0,392.2 1226.0,391.9 1227.0,391.6 1228.0,391.3 1229.0,390.9 1230.0,390.6 1231.0,390.3 1232.0,390.0 1233.0,389.7 1234.0,389.3 1235.0,389.0 1236.0,388.7 1237.0,388.4 1238.0,388.0 1239.0,387.7 1240.0,387.4 1241.0,387.1 1242.0,386.8 1243.0,386.5 1244.0,386.2 1245.0,385.9 1246.0,385.7 1247.0,385.4 1248.0,385.2 1249.0,384.9 1250.0,384.7 1251.0,384.5 1252.0,384.3 1253.0,384.0 1254.0,383.8 1255.0,383.6 1256.0,383.4 1257.0,383.2 1258.0,383.0 1259.0,382.7 1260.0,382.5 1261.0,382.3 1262.0,382.1 1263.0,381.9 1264.0,381.6 1265.0,381.4 1266.0,381.2 1267.0,381.0 1268.0,380.8 1269.0,380.5 1270.0,380.3 1271.0,380.1 1272.0,379.9 1273.0,379.7 1274.0,379.5 1275.0,379.2 1276.0,379.0 1277.0,378.8 1278.0,378.6 1279.0,378.4 1280.0,378.2 1281.0,378.0 1282.0,377.7 1283.0,377.5 1284.0,377.3 1285.0,377.1 1286.0,376.9 1287.0,376.7 1288.0,376.5 1289.0,376.2 1290.0,376.0 1291.0,375.8 1292.0,375.6 1293.0,375.4 1294.0,375.2 1295.0,374.9 1296.0,374.7 1297.0,374.5 1298.0,374.3 1299.0,374.1 1300.0,373.9 1301.0,373.7 1302.0,373.5 1303.0,373.3 1304.0,373.1 1305.0,372.9 1306.0,372.7 1307.0,372.5 1308.0,372.3 1309.0,372.1 1310.0,371.9 1311.0,371.7 1312.0,371.5 1313.0,371.3 1314.0,371.1 1315.0,370.9 1316.0,370.7 1317.0,370.5 1318.0,370.3 1319.0,370.1 1320.0,369.9 1321.0,369.7 1322.0,369.4 1323.0,369.2 1324.0,369.0 1325.0,368.7 1326.0,368.5 1327.0,368.2 1328.0,367.9 1329.0,367.6 1330.0,367.4 1331.0,367.1 1332.0,366.8 1333.0,366.5 1334.0,366.2 1335.0,365.8 1336.0,365.5 1337.0,365.2 1338.0,364.9 1339.0,364.5 1340.0,364.2 1341.0,363.8 1342.0,363.5 1343.0,363.1 1344.0,362.8 1345.0,362.5 1346.0,362.1 1347.0,361.8 1348.0,361.4 1349.0,361.1 1350.0,360.7 1351.0,360.4 1352.0,360.1 1353.0,359.8 1354.0,359.5 1355.0,359.2 1356.0,359.0 1357.0,358.7 1358.0,358.5 1359.0,358.4 1360.0,358.2 1361.0,358.0 1362.0,357.8 1363.0,357.7 1364.0,357.5 1365.0,357.3 1366.0,357.2 1367.0,357.0 1368.0,356.8 1369.0,356.7 1370.0,356.5 1371.0,356.3 1372.0,356.2 1373.0,356.0 1374.0,355.8 1375.0,355.7 1376.0,355.5 1377.0,355.4 1378.0,355.2 1379.0,355.1 1380.0,355.0 1381.0,354.9 1382.0,354.9 1383.0,354.8 1384.0,354.8 1385.0,354.8 1386.0,354.7 1387.0,354.7 1388.0,354.7 1389.0,354.7 1390.0,354.7 1391.0,354.7 1392.0,354.7 1393.0,354.7 1394.0,354.7 1395.0,354.7 1396.0,354.7 1397.0,354.7 1398.0,354.7 1399.0,354.7 1400.0,354.8 1401.0,354.9 1402.0,355.0 1403.0,355.1 1404.0,355.2 1405.0,355.4 1406.0,355.5 1407.0,355.6 1408.0,355.8 1409.0,355.9 1410.0,356.1 1411.0,356.2 1412.0,356.4 1413.0,356.5 1414.0,356.7 1415.0,356.8 1416.0,357.0 1417.0,357.1 1418.0,357.3 1419.0,357.4 1420.0,357.6 1421.0,357.7 1422.0,357.8 1423.0,357.9 1424.0,358.1 1425.0,358.2 1426.0,358.3 1427.0,358.5 1428.0,358.6 1429.0,358.7 1430.0,358.8 1431.0,359.0 1432.0,359.1 1433.0,359.2 1434.0,359.3 1435.0,359.4 1436.0,359.6 1437.0,359.6 1438.0,359.7 1439.0,359.8 1440.0,359.9 1441.0,359.9 1442.0,359.9 1443.0,360.0 1444.0,360.0 1445.0,360.0 1446.0,360.1 1447.0,360.1 1448.0,360.1 1449.0,360.2 1450.0,360.2 1451.0,360.2 1452.0,360.3 1453.0,360.3 1454.0,360.3 1455.0,360.4 1455.0,360.3 1454.0,360.4 1453.0,360.4 1452.0,360.4 1451.0,360.4 1450.0,360.4 1449.0,360.5 1448.0,360.5 1447.0,360.5 1446.0,360.5 1445.0,360.6 1444.0,360.6 1443.0,360.6 1442.0,360.6 1441.0,360.7 1440.0,360.7 1439.0,360.8 1438.0,360.8 1437.0,360.9 1436.0,361.0 1435.0,361.0 1434.0,361.1 1433.0,361.2 1432.0,361.3 1431.0,361.4 1430.0,361.5 1429.0,361.6 1428.0,361.7 1427.0,361.8 1426.0,361.9 1425.0,362.0 1424.0,362.1 1423.0,362.2 1422.0,362.3 1421.0,362.5 1420.0,362.6 1419.0,362.7 1418.0,362.9 1417.0,363.1 1416.0,363.2 1415.0,363.4 1414.0,363.6 1413.0,363.8 1412.0,363.9 1411.0,364.1 1410.0,364.3 1409.0,364.5 1408.0,364.7 1407.0,364.9 1406.0,365.1 1405.0,365.3 1404.0,365.5 1403.0,365.7 1402.0,365.9 1401.0,366.1 1400.0,366.3 1399.0,366.5 1398.0,366.7 1397.0,366.9 1396.0,367.0 1395.0,367.2 1394.0,367.4 1393.0,367.6 1392.0,367.8 1391.0,368.0 1390.0,368.2 1389.0,368.4 1388.0,368.6 1387.0,368.7 1386.0,368.9 1385.0,369.1 1384.0,369.3 1383.0,369.5 1382.0,369.7 1381.0,369.9 1380.0,370.1 1379.0,370.3 1378.0,370.5 1377.0,370.8 1376.0,371.0 1375.0,371.2 1374.0,371.4 1373.0,371.6 1372.0,371.8 1371.0,372.1 1370.0,372.3 1369.0,372.5 1368.0,372.7 1367.0,372.9 1366.0,373.2 1365.0,373.4 1364.0,373.6 1363.0,373.8 1362.0,374.0 1361.0,374.3 1360.0,374.5 1359.0,374.7 1358.0,374.9 1357.0,375.1 1356.0,375.4 1355.0,375.6 1354.0,375.8 1353.0,376.0 1352.0,376.2 1351.0,376.5 1350.0,376.7 1349.0,376.9 1348.0,377.1 1347.0,377.4 1346.0,377.6 1345.0,377.8 1344.0,378.0 1343.0,378.2 1342.0,378.5 1341.0,378.7 1340.0,378.9 1339.0,379.1 1338.0,379.4 1337.0,379.6 1336.0,379.9 1335.0,380.1 1334.0,380.4 1333.0,380.6 1332.0,380.9 1331.0,381.1 1330.0,381.4 1329.0,381.7 1328.0,381.9 1327.0,382.2 1326.0,382.5 1325.0,382.7 1324.0,383.0 1323.0,383.3 1322.0,383.6 1321.0,383.8 1320.0,384.1 1319.0,384.4 1318.0,384.6 1317.0,384.9 1316.0,385.2 1315.0,385.5 1314.0,385.7 1313.0,386.0 1312.0,386.3 1311.0,386.5 1310.0,386.8 1309.0,387.1 1308.0,387.3 1307.0,387.6 1306.0,387.9 1305.0,388.1 1304.0,388.4 1303.0,388.7 1302.0,388.9 1301.0,389.2 1300.0,389.5 1299.0,389.7 1298.0,390.0 1297.0,390.3 1296.0,390.6 1295.0,390.8 1294.0,391.1 1293.0,391.4 1292.0,391.7 1291.0,392.0 1290.0,392.3 1289.0,392.6 1288.0,392.9 1287.0,393.2 1286.0,393.5 1285.0,393.8 1284.0,394.1 1283.0,394.4 1282.0,394.8 1281.0,395.1 1280.0,395.4 1279.0,395.8 1278.0,396.1 1277.0,396.4 1276.0,396.7 1275.0,397.1 1274.0,397.4 1273.0,397.7 1272.0,398.0 1271.0,398.3 1270.0,398.6 1269.0,398.9 1268.0,399.2 1267.0,399.5 1266.0,399.8 1265.0,400.1 1264.0,400.4 1263.0,400.6 1262.0,400.9 1261.0,401.2 1260.0,401.4 1259.0,401.7 1258.0,401.9 1257.0,402.2 1256.0,402.4 1255.0,402.7 1254.0,403.0 1253.0,403.2 1252.0,403.5 1251.0,403.7 1250.0,404.0 1249.0,404.3 1248.0,404.6 1247.0,404.9 1246.0,405.2 1245.0,405.5 1244.0,405.8 1243.0,406.2 1242.0,406.5 1241.0,406.9 1240.0,407.3 1239.0,407.7 1238.0,408.1 1237.0,408.5 1236.0,408.9 1235.0,409.3 1234.0,409.7 1233.0,410.1 1232.0,410.5 1231.0,410.9 1230.0,411.3 1229.0,411.7 1228.0,412.1 1227.0,412.5 1226.0,412.9 1225.0,413.3 1224.0,413.8 1223.0,414.2 1222.0,414.6 1221.0,415.0 1220.0,415.4 1219.0,415.8 1218.0,416.2 1217.0,416.6 1216.0,417.0 1215.0,417.4 1214.0,417.9 1213.0,418.3 1212.0,418.7 1211.0,419.1 1210.0,419.6 1209.0,420.0 1208.0,420.5 1207.0,420.9 1206.0,421.4 1205.0,421.8 1204.0,422.3 1203.0,422.8 1202.0,423.3 1201.0,423.8 1200.0,424.3 1199.0,424.8 1198.0,425.3 1197.0,425.8 1196.0,426.4 1195.0,426.9 1194.0,427.4 1193.0,427.9 1192.0,428.4 1191.0,428.9 1190.0,429.4 1189.0,429.9 1188.0,430.5 1187.0,431.0 1186.0,431.5 1185.0,432.0 1184.0,432.5 1183.0,433.0 1182.0,433.5 1181.0,434.0 1180.0,434.6 1179.0,435.1 1178.0,435.6 1177.0,436.1 1176.0,436.6 1175.0,437.0 1174.0,437.5 1173.0,438.0 1172.0,438.4 1171.0,438.8 1170.0,439.2 1169.0,439.6 1168.0,440.0 1167.0,440.3 1166.0,440.6 1165.0,441.0 1164.0,441.3 1163.0,441.6 1162.0,441.9 1161.0,442.1 1160.0,442.4 1159.0,442.7 1158.0,443.0 1157.0,443.2 1156.0,443.5 1155.0,443.8 1154.0,444.1 1153.0,444.3 1152.0,444.6 1151.0,444.9 1150.0,445.1 1149.0,445.4 1148.0,445.7 1147.0,446.0 1146.0,446.2 1145.0,446.5 1144.0,446.8 1143.0,447.1 1142.0,447.3 1141.0,447.6 1140.0,447.9 1139.0,448.1 1138.0,448.4 1137.0,448.7 1136.0,449.0 1135.0,449.2 1134.0,449.5 1133.0,449.8 1132.0,450.0 1131.0,450.3 1130.0,450.6 1129.0,450.8 1128.0,451.1 1127.0,451.4 1126.0,451.6 1125.0,451.9 1124.0,452.1 1123.0,452.4 1122.0,452.6 1121.0,452.8 1120.0,453.0 1119.0,453.3 1118.0,453.5 1117.0,453.7 1116.0,453.9 1115.0,454.1 1114.0,454.3 1113.0,454.5 1112.0,454.7 1111.0,454.9 1110.0,455.1 1109.0,455.3 1108.0,455.5 1107.0,455.7 1106.0,455.9 1105.0,456.1 1104.0,456.3 1103.0,456.5 1102.0,456.7 1101.0,456.9 1100.0,457.1 1099.0,457.3 1098.0,457.5 1097.0,457.7 1096.0,457.9 1095.0,458.1 1094.0,458.3 1093.0,458.5 1092.0,458.7 1091.0,458.9 1090.0,459.1 1089.0,459.3 1088.0,459.5 1087.0,459.7 1086.0,459.9 1085.0,460.1 1084.0,460.3 1083.0,460.5 1082.0,460.7 1081.0,460.8 1080.0,461.0 1079.0,461.2 1078.0,461.3 1077.0,461.5 1076.0,461.6 1075.0,461.8 1074.0,461.9 1073.0,462.1 1072.0,462.2 1071.0,462.3 1070.0,462.5 1069.0,462.6 1068.0,462.7 1067.0,462.9 1066.0,463.0 1065.0,463.1 1064.0,463.3 1063.0,463.4 1062.0,463.5 1061.0,463.7 1060.0,463.8 1059.0,463.9 1058.0,464.1 1057.0,464.2 1056.0,464.3 1055.0,464.5 1054.0,464.6 1053.0,464.7 1052.0,464.9 1051.0,465.0 1050.0,465.1 1049.0,465.2 1048.0,465.3 1047.0,465.4 1046.0,465.5 1045.0,465.6 1044.0,465.7 1043.0,465.8 1042.0,465.8 1041.0,465.9 1040.0,465.9 1039.0,465.9 1038.0,466.0 1037.0,466.0 1036.0,466.0 1035.0,466.0 1034.0,466.0 1033.0,466.0 1032.0,466.0 1031.0,466.0 1030.0,466.0 1029.0,466.0 1028.0,466.0 1027.0,466.0 1026.0,466.0 1025.0,466.0 1024.0,466.0 1023.0,466.0" fill="#3c0000"/>
<polygon points="1455.0,360.4 1456.0,360.4 1457.0,360.4 1458.0,360.5 1459.0,360.5 1460.0,360.5 1461.0,360.6 1462.0,360.6 1463.0,360.6 1464.0,360.7 1465.0,360.7 1466.0,360.7 1467.0,360.8 1468.0,360.8 1469.0,360.8 1470.0,360.9 1471.0,360.9 1472.0,360.9 1473.0,361.0 1474.0,361.0 1475.0,361.0 1476.0,361.1 1477.0,361.1 1478.0,361.1 1479.0,361.1 1480.0,361.0 1481.0,361.0 1482.0,360.9 1483.0,360.9 1484.0,360.8 1485.0,360.7 1486.0,360.6 1487.0,360.5 1488.0,360.4 1489.0,360.3 1490.0,360.2 1491.0,360.1 1492.0,360.0 1493.0,359.9 1493.0,360.0 1492.0,360.0 1491.0,359.9 1490.0,359.9 1489.0,359.9 1488.0,359.9 1487.0,359.9 1486.0,359.9 1485.0,359.9 1484.0,359.9 1483.0,359.9 1482.0,359.9 1481.0,359.9 1480.0,359.9 1479.0,359.9 1478.0,359.9 1477.0,359.9 1476.0,359.9 1475.0,359.9 1474.0,359.9 1473.0,360.0 1472.0,360.0 1471.0,360.0 1470.0,360.0 1469.0,360.0 1468.0,360.1 1467.0,360.1 1466.0,360.1 1465.0,360.1 1464.0,360.1 1463.0,360.2 1462.0,360.2 1461.0,360.2 1460.0,360.2 1459.0,360.2 1458.0,360.3 1457.0,360.3 1456.0,360.3 1455.0,360.3" fill="#005a00"/>
<polygon points="1493.0,359.9 1494.0,359.8 1495.0,359.7 1496.0,359.6 1497.0,359.4 1498.0,359.2 1499.0,359.0 1500.0,358.7 1501.0,358.5 1502.0,358.2 1503.0,357.8 1504.0,357.5 1505.0,357.2 1506.0,356.9 1507.0,356.5 1508.0,356.2 1509.0,355.8 1510.0,355.5 1511.0,355.1 1512.0,354.7 1513.0,354.4 1514.0,353.9 1515.0,353.5 1516.0,353.1 1517.0,352.6 1518.0,352.2 1519.0,351.7 1520.0,351.3 1521.0,350.8 1522.0,350.4 1523.0,349.9 1524.0,349.5 1525.0,349.0 1526.0,348.6 1527.0,348.1 1528.0,347.6 1529.0,347.2 1530.0,346.7 1531.0,346.2 1532.0,345.7 1533.0,345.2 1534.0,344.6 1535.0,344.1 1536.0,343.6 1537.0,343.0 1538.0,342.5 1539.0,341.9 1540.0,341.4 1541.0,340.8 1542.0,340.3 1543.0,339.7 1544.0,339.2 1545.0,338.6 1546.0,338.1 1547.0,337.5 1548.0,336.9 1549.0,336.3 1550.0,335.7 1551.0,335.1 1552.0,334.5 1553.0,333.8 1554.0,333.1 1555.0,332.5 1556.0,331.8 1557.0,331.1 1558.0,330.4 1559.0,329.7 1560.0,329.0 1561.0,328.3 1562.0,327.6 1563.0,326.8 1564.0,326.0 1565.0,325.1 1566.0,324.2 1567.0,323.3 1568.0,322.4 1569.0,321.4 1570.0,320.5 1571.0,319.7 1572.0,318.8 1573.0,318.0 1574.0,317.1 1575.0,316.3 1576.0,315.5 1577.0,314.7 1578.0,313.9 1579.0,313.1 1580.0,312.3 1581.0,311.5 1582.0,310.7 1583.0,309.9 1584.0,309.1 1585.0,308.3 1586.0,307.5 1587.0,306.7 1588.0,305.8 1589.0,305.0 1590.0,304.1 1591.0,303.2 1592.0,302.3 1593.0,301.4 1594.0,300.5 1595.0,299.5 1596.0,298.6 1597.0,297.7 1598.0,296.7 1599.0,295.8 1600.0,294.9 1601.0,293.9 1602.0,293.0 1603.0,292.1 1604.0,291.1 1605.0,290.2 1606.0,289.2 1607.0,288.3 1608.0,287.3 1609.0,286.4 1610.0,285.4 1611.0,284.5 1612.0,283.5 1613.0,282.5 1614.0,281.5 1615.0,280.5 1616.0,279.5 1617.0,278.5 1618.0,277.6 1619.0,276.5 1620.0,275.5 1621.0,274.5 1622.0,273.5 1623.0,272.4 1624.0,271.3 1625.0,270.2 1626.0,269.0 1627.0,267.8 1628.0,266.6 1629.0,265.4 1630.0,264.1 1631.0,262.9 1632.0,261.6 1633.0,260.4 1634.0,259.2 1635.0,257.9 1636.0,256.7 1637.0,255.4 1638.0,254.2 1639.0,252.9 1640.0,251.7 1641.0,250.5 1642.0,249.2 1643.0,248.0 1644.0,246.7 1645.0,245.4 1646.0,244.2 1647.0,242.9 1648.0,241.6 1649.0,240.3 1650.0,238.9 1651.0,237.6 1652.0,236.2 1653.0,234.8 1654.0,233.4 1655.0,231.9 1656.0,230.5 1657.0,229.0 1658.0,227.6 1659.0,226.1 1660.0,224.7 1661.0,223.2 1662.0,221.8 1663.0,220.3 1664.0,218.9 1665.0,217.5 1666.0,216.1 1667.0,214.7 1668.0,213.3 1669.0,211.9 1670.0,210.6 1671.0,209.2 1672.0,207.9 1673.0,206.5 1674.0,205.2 1675.0,203.8 1676.0,202.5 1677.0,201.2 1678.0,199.8 1679.0,198.5 1680.0,197.2 1681.0,195.9 1682.0,194.7 1683.0,193.4 1684.0,192.2 1685.0,191.0 1686.0,189.9 1687.0,188.7 1688.0,187.5 1689.0,186.4 1690.0,185.2 1691.0,184.1 1692.0,182.9 1693.0,181.8 1694.0,180.6 1695.0,179.5 1696.0,178.3 1697.0,177.2 1698.0,176.0 1699.0,174.8 1700.0,173.6 1701.0,172.5 1702.0,171.3 1703.0,170.1 1704.0,168.9 1705.0,167.7 1706.0,166.5 1707.0,165.3 1708.0,164.1 1709.0,162.9 1710.0,161.7 1711.0,160.5 1712.0,159.3 1713.0,158.1 1714.0,156.9 1715.0,155.7 1716.0,154.5 1717.0,153.4 1718.0,152.2 1719.0,151.0 1720.0,149.8 1721.0,148.7 1722.0,147.5 1723.0,146.4 1724.0,145.2 1725.0,144.1 1726.0,142.9 1727.0,141.8 1728.0,140.6 1729.0,139.5 1730.0,138.3 1731.0,137.2 1732.0,136.0 1733.0,134.9 1734.0,133.8 1735.0,132.6 1736.0,131.6 1737.0,130.5 1738.0,129.4 1739.0,128.3 1740.0,127.3 1741.0,126.2 1742.0,125.2 1743.0,124.1 1744.0,123.1 1745.0,122.1 1746.0,121.0 1747.0,120.0 1748.0,118.9 1749.0,117.9 1750.0,116.9 1751.0,115.9 1752.0,115.0 1753.0,114.1 1754.0,113.2 1755.0,112.4 1756.0,111.6 1757.0,110.9 1758.0,110.3 1759.0,109.7 1760.0,109.2 1761.0,108.8 1762.0,108.4 1763.0,108.2 1764.0,108.0 1765.0,107.9 1766.0,107.9 1767.0,107.8 1768.0,107.8 1769.0,107.7 1770.0,107.7 1771.0,107.7 1772.0,107.7 1773.0,107.6 1773.0,162.5 1772.0,163.0 1771.0,163.6 1770.0,164.3 1769.0,165.1 1768.0,165.9 1767.0,166.8 1766.0,167.7 1765.0,168.6 1764.0,169.6 1763.0,170.6 1762.0,171.6 1761.0,172.6 1760.0,173.6 1759.0,174.6 1758.0,175.6 1757.0,176.6 1756.0,177.7 1755.0,178.7 1754.0,179.7 1753.0,180.8 1752.0,181.8 1751.0,182.9 1750.0,184.0 1749.0,185.0 1748.0,186.1 1747.0,187.2 1746.0,188.3 1745.0,189.4 1744.0,190.5 1743.0,191.6 1742.0,192.7 1741.0,193.8 1740.0,194.9 1739.0,196.0 1738.0,197.1 1737.0,198.3 1736.0,199.4 1735.0,200.5 1734.0,201.7 1733.0,202.9 1732.0,204.0 1731.0,205.2 1730.0,206.4 1729.0,207.6 1728.0,208.8 1727.0,210.0 1726.0,211.2 1725.0,212.4 1724.0,213.6 1723.0,214.8 1722.0,215.9 1721.0,217.1 1720.0,218.3 1719.0,219.5 1718.0,220.6 1717.0,221.8 1716.0,222.9 1715.0,224.1 1714.0,225.2 1713.0,226.3 1712.0,227.4 1711.0,228.6 1710.0,229.7 1709.0,230.8 1708.0,231.9 1707.0,233.0 1706.0,234.1 1705.0,235.2 1704.0,236.3 1703.0,237.5 1702.0,238.6 1701.0,239.7 1700.0,240.9 1699.0,242.0 1698.0,243.2 1697.0,244.4 1696.0,245.5 1695.0,246.7 1694.0,247.9 1693.0,249.1 1692.0,250.3 1691.0,251.4 1690.0,252.6 1689.0,253.8 1688.0,254.9 1687.0,256.1 1686.0,257.2 1685.0,258.3 1684.0,259.4 1683.0,260.5 1682.0,261.5 1681.0,262.6 1680.0,263.6 1679.0,264.6 1678.0,265.7 1677.0,266.7 1676.0,267.7 1675.0,268.7 1674.0,269.7 1673.0,270.7 1672.0,271.7 1671.0,272.7 1670.0,273.7 1669.0,274.7 1668.0,275.7 1667.0,276.7 1666.0,277.7 1665.0,278.8 1664.0,279.8 1663.0,280.8 1662.0,281.9 1661.0,283.0 1660.0,284.0 1659.0,285.1 1658.0,286.2 1657.0,287.3 1656.0,288.3 1655.0,289.4 1654.0,290.4 1653.0,291.4 1652.0,292.4 1651.0,293.3 1650.0,294.2 1649.0,295.1 1648.0,295.9 1647.0,296.7 1646.0,297.5 1645.0,298.3 1644.0,299.0 1643.0,299.8 1642.0,300.5 1641.0,301.2 1640.0,301.9 1639.0,302.7 1638.0,303.4 1637.0,304.1 1636.0,304.9 1635.0,305.6 1634.0,306.4 1633.0,307.1 1632.0,307.9 1631.0,308.7 1630.0,309.5 1629.0,310.3 1628.0,311.0 1627.0,311.8 1626.0,312.6 1625.0,313.4 1624.0,314.1 1623.0,314.8 1622.0,315.6 1621.0,316.3 1620.0,316.9 1619.0,317.6 1618.0,318.2 1617.0,318.8 1616.0,319.4 1615.0,320.0 1614.0,320.5 1613.0,321.1 1612.0,321.6 1611.0,322.2 1610.0,322.7 1609.0,323.2 1608.0,323.7 1607.0,324.2 1606.0,324.8 1605.0,325.3 1604.0,325.8 1603.0,326.3 1602.0,326.9 1601.0,327.4 1600.0,327.9 1599.0,328.4 1598.0,329.0 1597.0,329.5 1596.0,330.1 1595.0,330.6 1594.0,331.2 1593.0,331.7 1592.0,332.3 1591.0,332.9 1590.0,333.4 1589.0,334.0 1588.0,334.6 1587.0,335.2 1586.0,335.8 1585.0,336.4 1584.0,337.0 1583.0,337.6 1582.0,338.2 1581.0,338.8 1580.0,339.4 1579.0,340.0 1578.0,340.6 1577.0,341.2 1576.0,341.8 1575.0,342.4 1574.0,343.0 1573.0,343.6 1572.0,344.2 1571.0,344.8 1570.0,345.3 1569.0,345.9 1568.0,346.4 1567.0,346.9 1566.0,347.4 1565.0,347.9 1564.0,348.4 1563.0,348.8 1562.0,349.2 1561.0,349.5 1560.0,349.9 1559.0,350.2 1558.0,350.5 1557.0,350.9 1556.0,351.2 1555.0,351.5 1554.0,351.7 1553.0,352.0 1552.0,352.3 1551.0,352.6 1550.0,352.9 1549.0,353.2 1548.0,353.5 1547.0,353.7 1546.0,354.0 1545.0,354.3 1544.0,354.6 1543.0,354.8 1542.0,355.1 1541.0,355.3 1540.0,355.6 1539.0,355.8 1538.0,356.0 1537.0,356.3 1536.0,356.5 1535.0,356.7 1534.0,356.9 1533.0,357.1 1532.0,357.3 1531.0,357.5 1530.0,357.7 1529.0,357.9 1528.0,358.1 1527.0,358.3 1526.0,358.5 1525.0,358.7 1524.0,358.9 1523.0,359.1 1522.0,359.2 1521.0,359.4 1520.0,359.5 1519.0,359.7 1518.0,359.8 1517.0,359.9 1516.0,360.0 1515.0,360.0 1514.0,360.1 1513.0,360.1 1512.0,360.1 1511.0,360.2 1510.0,360.2 1509.0,360.2 1508.0,360.2 1507.0,360.2 1506.0,360.1 1505.0,360.1 1504.0,360.1 1503.0,360.1 1502.0,360.1 1501.0,360.1 1500.0,360.1 1499.0,360.1 1498.0,360.0 1497.0,360.0 1496.0,360.0 1495.0,360.0 1494.0,360.0 1493.0,360.0" fill="#3c0000"/>
<line x1="2" y1="234.5" x2="1789" y2="234.5" stroke="#a00000" stroke-width="1" stroke-dasharray="3 3"/>
<line x1="2" y1="424.5" x2="1789" y2="424.5" stroke="#a00000" stroke-width="1" stroke-dasharray="3 3"/>
<polyline points="2.0,333.1 3.0,333.3 4.0,333.6 5.0,333.9 6.0,334.2 7.0,334.6 8.0,335.0 9.0,335.4 10.0,335.8 11.0,336.3 12.0,336.7 13.0,337.1 14.0,337.5 15.0,338.0 16.0,338.4 17.0,338.8 18.0,339.3 19.0,339.7 20.0,340.1 21.0,340.5 22.0,341.0 23.0,341.4 24.0,341.8 25.0,342.3 26.0,342.7 27.0,343.1 28.0,343.6 29.0,344.0 30.0,344.4 31.0,344.8 32.0,345.3 33.0,345.7 34.0,346.1 35.0,346.6 36.0,347.0 37.0,347.4 38.0,347.8 39.0,348.3 40.0,348.7 41.0,349.1 42.0,349.6 43.0,350.0 44.0,350.4 45.0,350.9 46.0,351.3 47.0,351.7 48.0,352.2 49.0,352.7 50.0,353.1 51.0,353.6 52.0,354.1 53.0,354.5 54.0,355.0 55.0,355.5 56.0,356.0 57.0,356.5 58.0,357.0 59.0,357.5 60.0,358.0 61.0,358.5 62.0,359.0 63.0,359.5 64.0,360.0 65.0,360.5 66.0,361.0 67.0,361.5 68.0,362.0 69.0,362.5 70.0,362.9 71.0,363.4 72.0,363.8 73.0,364.2 74.0,364.5 75.0,364.9 76.0,365.1 77.0,365.4 78.0,365.6 79.0,365.7 80.0,365.9 81.0,366.0 82.0,366.1 83.0,366.2 84.0,366.3 85.0,366.4 86.0,366.5 87.0,366.6 88.0,366.7 89.0,366.8 90.0,366.9 91.0,367.0 92.0,367.1 93.0,367.2 94.0,367.3 95.0,367.4 96.0,367.5 97.0,367.6 98.0,367.6 99.0,367.7 100.0,367.8 101.0,367.9 102.0,368.0 103.0,368.0 104.0,368.1 105.0,368.1 106.0,368.1 107.0,368.1 108.0,368.1 109.0,368.0 110.0,368.0 111.0,367.9 112.0,367.8 113.0,367.8 114.0,367.7 115.0,367.6 116.0,367.5 117.0,367.4 118.0,367.3 119.0,367.2 120.0,367.1 121.0,367.0 122.0,366.9 123.0,366.7 124.0,366.6 125.0,366.4 126.0,366.2 127.0,366.0 128.0,365.7 129.0,365.5 130.0,365.2 131.0,364.9 132.0,364.6 133.0,364.2 134.0,363.9 135.0,363.6 136.0,363.2 137.0,362.9 138.0,362.6 139.0,362.2 140.0,361.9 141.0,361.6 142.0,361.2 143.0,360.9 144.0,360.6 145.0,360.2 146.0,359.9 147.0,359.5 148.0,359.2 149.0,358.9 150.0,358.5 151.0,358.2 152.0,357.9 153.0,357.5 154.0,357.2 155.0,356.9 156.0,356.5 157.0,356.2 158.0,355.8 159.0,355.5 160.0,355.1 161.0,354.7 162.0,354.4 163.0,354.0 164.0,353.6 165.0,353.1 166.0,352.7 167.0,352.3 168.0,351.8 169.0,351.3 170.0,350.9 171.0,350.4 172.0,349.9 173.0,349.4 174.0,349.0 175.0,348.5 176.0,348.0 177.0,347.5 178.0,347.0 179.0,346.6 180.0,346.1 181.0,345.6 182.0,345.1 183.0,344.6 184.0,344.2 185.0,343.7 186.0,343.2 187.0,342.7 188.0,342.2 189.0,341.8 190.0,341.3 191.0,340.8 192.0,340.3 193.0,339.8 194.0,339.4 195.0,338.9 196.0,338.4 197.0,338.0 198.0,337.6 199.0,337.1 200.0,336.7 201.0,336.3 202.0,336.0 203.0,335.6 204.0,335.3 205.0,335.0 206.0,334.7 207.0,334.4 208.0,334.2 209.0,333.9 210.0,333.6 211.0,333.3 212.0,333.0 213.0,332.7 214.0,332.3 215.0,332.0 216.0,331.6 217.0,331.2 218.0,330.8 219.0,330.4 220.0,329.9 221.0,329.5 222.0,329.1 223.0,328.6 224.0,328.2 225.0,327.7 226.0,327.3 227.0,326.8 228.0,326.4 229.0,326.0 230.0,325.5 231.0,325.1 232.0,324.6 233.0,324.2 234.0,323.7 235.0,323.3 236.0,322.9 237.0,322.4 238.0,322.0 239.0,321.5 240.0,321.1 241.0,320.6 242.0,320.2 243.0,319.8 244.0,319.3 245.0,318.9 246.0,318.4 247.0,318.0 248.0,317.6 249.0,317.1 250.0,316.7 251.0,316.3 252.0,315.9 253.0,315.4 254.0,315.0 255.0,314.6 256.0,314.2 257.0,313.8 258.0,313.4 259.0,313.0 260.0,312.6 261.0,312.2 262.0,311.9 263.0,311.5 264.0,311.1 265.0,310.8 266.0,310.5 267.0,310.1 268.0,309.8 269.0,309.5 270.0,309.1 271.0,308.8 272.0,308.5 273.0,308.2 274.0,307.8 275.0,307.4 276.0,307.0 277.0,306.6 278.0,306.2 279.0,305.7 280.0,305.2 281.0,304.7 282.0,304.2 283.0,303.6 284.0,303.1 285.0,302.5 286.0,302.0 287.0,301.4 288.0,300.8 289.0,300.3 290.0,299.7 291.0,299.2 292.0,298.6 293.0,298.0 294.0,297.5 295.0,296.9 296.0,296.4 297.0,295.8 298.0,295.2 299.0,294.6 300.0,294.1 301.0,293.5 302.0,292.9 303.0,292.3 304.0,291.7 305.0,291.0 306.0,290.4 307.0,289.8 308.0,289.2 309.0,288.5 310.0,287.9 311.0,287.2 312.0,286.6 313.0,286.0 314.0,285.3 315.0,284.7 316.0,284.0 317.0,283.4 318.0,282.8 319.0,282.1 320.0,281.5 321.0,280.9 322.0,280.2 323.0,279.6 324.0,279.0 325.0,278.4 326.0,277.8 327.0,277.3 328.0,276.7 329.0,276.2 330.0,275.7 331.0,275.2 332.0,274.7 333.0,274.3 334.0,273.8 335.0,273.3 336.0,272.9 337.0,272.4 338.0,271.9 339.0,271.5 340.0,271.0 341.0,270.6 342.0,270.1 343.0,269.6 344.0,269.2 345.0,268.7 346.0,268.3 347.0,267.8 348.0,267.4 349.0,266.9 350.0,266.5 351.0,266.1 352.0,265.7 353.0,265.3 354.0,264.9 355.0,264.5 356.0,264.2 357.0,263.8 358.0,263.5 359.0,263.1 360.0,262.8 361.0,262.4 362.0,262.1 363.0,261.8 364.0,261.4 365.0,261.1 366.0,260.7 367.0,260.4 368.0,260.1 369.0,259.7 370.0,259.4 371.0,259.1 372.0,258.7 373.0,258.4 374.0,258.1 375.0,257.8 376.0,257.5 377.0,257.2 378.0,257.0 379.0,256.7 380.0,256.5 381.0,256.2 382.0,256.0 383.0,255.8 384.0,255.6 385.0,255.4 386.0,255.2 387.0,255.0 388.0,254.8 389.0,254.6 390.0,254.4 391.0,254.2 392.0,254.0 393.0,253.8 394.0,253.6 395.0,253.4 396.0,253.2 397.0,253.0 398.0,252.8 399.0,252.7 400.0,252.5 401.0,252.3 402.0,252.2 403.0,252.1 404.0,251.9 405.0,251.8 406.0,251.7 407.0,251.6 408.0,251.5 409.0,251.5 410.0,251.4 411.0,251.3 412.0,251.2 413.0,251.1 414.0,251.1 415.0,251.0 416.0,250.9 417.0,250.8 418.0,250.8 419.0,250.7 420.0,250.6 421.0,250.5 422.0,250.5 423.0,250.4 424.0,250.4 425.0,250.4 426.0,250.4 427.0,250.5 428.0,250.6 429.0,250.7 430.0,250.9 431.0,251.1 432.0,251.3 433.0,251.5 434.0,251.8 435.0,252.0 436.0,252.3 437.0,252.5 438.0,252.7 439.0,252.9 440.0,253.1 441.0,253.3 442.0,253.5 443.0,253.6 444.0,253.8 445.0,253.9 446.0,254.0 447.0,254.1 448.0,254.3 449.0,254.4 450.0,254.5 451.0,254.6 452.0,254.8 453.0,254.9 454.0,255.1 455.0,255.3 456.0,255.5 457.0,255.7 458.0,256.0 459.0,256.3 460.0,256.5 461.0,256.8 462.0,257.1 463.0,257.4 464.0,257.7 465.0,258.0 466.0,258.3 467.0,258.6 468.0,258.9 469.0,259.2 470.0,259.5 471.0,259.8 472.0,260.1 473.0,260.4 474.0,260.7 475.0,261.0 476.0,261.3 477.0,261.6 478.0,261.9 479.0,262.2 480.0,262.5 481.0,262.8 482.0,263.1 483.0,263.4 484.0,263.7 485.0,264.0 486.0,264.3 487.0,264.6 488.0,265.0 489.0,265.3 490.0,265.7 491.0,266.0 492.0,266.4 493.0,266.7 494.0,267.1 495.0,267.5 496.0,267.9 497.0,268.3 498.0,268.7 499.0,269.1 500.0,269.5 501.0,269.9 502.0,270.3 503.0,270.7 504.0,271.1 505.0,271.5 506.0,271.9 507.0,272.3 508.0,272.7 509.0,273.0 510.0,273.4 511.0,273.8 512.0,274.2 513.0,274.6 514.0,275.0 515.0,275.4 516.0,275.8 517.0,276.2 518.0,276.6 519.0,277.0 520.0,277.4 521.0,277.8 522.0,278.2 523.0,278.6 524.0,279.0 525.0,279.4 526.0,279.8 527.0,280.2 528.0,280.6 529.0,281.0 530.0,281.4 531.0,281.8 532.0,282.2 533.0,282.6 534.0,283.0 535.0,283.4 536.0,283.7 537.0,284.1 538.0,284.5 539.0,284.8 540.0,285.2 541.0,285.5 542.0,285.8 543.0,286.1 544.0,286.4 545.0,286.6 546.0,286.9 547.0,287.2 548.0,287.4 549.0,287.7 550.0,287.9 551.0,288.2 552.0,288.4 553.0,288.7 554.0,288.9 555.0,289.1 556.0,289.4 557.0,289.6 558.0,289.9 559.0,290.1 560.0,290.4 561.0,290.6 562.0,290.9 563.0,291.1 564.0,291.4 565.0,291.6 566.0,291.8 567.0,292.1 568.0,292.3 569.0,292.6 570.0,292.8 571.0,293.1 572.0,293.3 573.0,293.6 574.0,293.8 575.0,294.1 576.0,294.3 577.0,294.6 578.0,294.8 579.0,295.0 580.0,295.3 581.0,295.5 582.0,295.8 583.0,296.0 584.0,296.3 585.0,296.5 586.0,296.7 587.0,297.0 588.0,297.2 589.0,297.4 590.0,297.6 591.0,297.7 592.0,297.9 593.0,298.0 594.0,298.2 595.0,298.3 596.0,298.4 597.0,298.5 598.0,298.6 599.0,298.6 600.0,298.7 601.0,298.8 602.0,298.9 603.0,299.0 604.0,299.0 605.0,299.1 606.0,299.2 607.0,299.3 608.0,299.4 609.0,299.4 610.0,299.5 611.0,299.6 612.0,299.6 613.0,299.7 614.0,299.7 615.0,299.7 616.0,299.7 617.0,299.7 618.0,299.6 619.0,299.5 620.0,299.5 621.0,299.4 622.0,299.3 623.0,299.1 624.0,299.0 625.0,298.9 626.0,298.8 627.0,298.7 628.0,298.6 629.0,298.4 630.0,298.3 631.0,298.2 632.0,298.1 633.0,298.0 634.0,297.8 635.0,297.7 636.0,297.6 637.0,297.5 638.0,297.4 639.0,297.2 640.0,297.1 641.0,297.0 642.0,296.9 643.0,296.7 644.0,296.6 645.0,296.5 646.0,296.3 647.0,296.2 648.0,296.1 649.0,295.9 650.0,295.8 651.0,295.7 652.0,295.6 653.0,295.4 654.0,295.3 655.0,295.2 656.0,295.0 657.0,294.9 658.0,294.8 659.0,294.6 660.0,294.5 661.0,294.4 662.0,294.2 663.0,294.1 664.0,294.0 665.0,293.8 666.0,293.7 667.0,293.6 668.0,293.4 669.0,293.3 670.0,293.2 671.0,293.1 672.0,292.9 673.0,292.8 674.0,292.7 675.0,292.6 676.0,292.4 677.0,292.3 678.0,292.2 679.0,292.1 680.0,292.0 681.0,292.0 682.0,291.9 683.0,291.8 684.0,291.7 685.0,291.7 686.0,291.6 687.0,291.6 688.0,291.5 689.0,291.5 690.0,291.4 691.0,291.4 692.0,291.3 693.0,291.3 694.0,291.2 695.0,291.2 696.0,291.1 697.0,291.0 698.0,291.0 699.0,290.9 700.0,290.9 701.0,290.8 702.0,290.8 703.0,290.7 704.0,290.7 705.0,290.6 706.0,290.6 707.0,290.5 708.0,290.5 709.0,290.4 710.0,290.4 711.0,290.3 712.0,290.3 713.0,290.3 714.0,290.3 715.0,290.3 716.0,290.3 717.0,290.3 718.0,290.4 719.0,290.4 720.0,290.5 721.0,290.6 722.0,290.7 723.0,290.9 724.0,291.0 725.0,291.1 726.0,291.3 727.0,291.4 728.0,291.5 729.0,291.7 730.0,291.8 731.0,291.9 732.0,292.1 733.0,292.2 734.0,292.3 735.0,292.5 736.0,292.6 737.0,292.7 738.0,292.9 739.0,293.0 740.0,293.1 741.0,293.3 742.0,293.4 743.0,293.6 744.0,293.7 745.0,293.9 746.0,294.1 747.0,294.3 748.0,294.6 749.0,294.9 750.0,295.2 751.0,295.5 752.0,295.9 753.0,296.4 754.0,296.8 755.0,297.3 756.0,297.7 757.0,298.2 758.0,298.7 759.0,299.2 760.0,299.7 761.0,300.2 762.0,300.7 763.0,301.2 764.0,301.7 765.0,302.2 766.0,302.7 767.0,303.2 768.0,303.7 769.0,304.2 770.0,304.7 771.0,305.3 772.0,305.8 773.0,306.3 774.0,306.8 775.0,307.3 776.0,307.8 777.0,308.3 778.0,308.8 779.0,309.3 780.0,309.8 781.0,310.3 782.0,310.8 783.0,311.3 784.0,311.8 785.0,312.3 786.0,312.8 787.0,313.3 788.0,313.8 789.0,314.3 790.0,314.8 791.0,315.3 792.0,315.9 793.0,316.4 794.0,316.9 795.0,317.5 796.0,318.0 797.0,318.5 798.0,319.1 799.0,319.6 800.0,320.2 801.0,320.7 802.0,321.3 803.0,321.8 804.0,322.4 805.0,322.9 806.0,323.4 807.0,324.0 808.0,324.5 809.0,325.1 810.0,325.6 811.0,326.2 812.0,326.7 813.0,327.3 814.0,327.8 815.0,328.3 816.0,328.9 817.0,329.4 818.0,329.9 819.0,330.4 820.0,330.9 821.0,331.5 822.0,332.0 823.0,332.5 824.0,333.0 825.0,333.5 826.0,334.0 827.0,334.5 828.0,334.9 829.0,335.5 830.0,336.0 831.0,336.5 832.0,337.0 833.0,337.5 834.0,338.1 835.0,338.6 836.0,339.2 837.0,339.8 838.0,340.4 839.0,341.1 840.0,341.7 841.0,342.3 842.0,343.0 843.0,343.6 844.0,344.3 845.0,344.9 846.0,345.6 847.0,346.2 848.0,346.9 849.0,347.5 850.0,348.2 851.0,348.9 852.0,349.5 853.0,350.2 854.0,350.9 855.0,351.6 856.0,352.4 857.0,353.1 858.0,353.8 859.0,354.6 860.0,355.3 861.0,356.1 862.0,356.8 863.0,357.6 864.0,358.3 865.0,359.1 866.0,359.8 867.0,360.5 868.0,361.3 869.0,362.0 870.0,362.7 871.0,363.4 872.0,364.0 873.0,364.7 874.0,365.3 875.0,365.9 876.0,366.5 877.0,367.1 878.0,367.7 879.0,368.3 880.0,368.8 881.0,369.4 882.0,369.9 883.0,370.5 884.0,371.0 885.0,371.6 886.0,372.1 887.0,372.7 888.0,373.2 889.0,373.8 890.0,374.3 891.0,374.9 892.0,375.4 893.0,376.0 894.0,376.5 895.0,377.1 896.0,377.6 897.0,378.2 898.0,378.7 899.0,379.3 900.0,379.8 901.0,380.4 902.0,380.9 903.0,381.4 904.0,382.0 905.0,382.5 906.0,383.1 907.0,383.6 908.0,384.1 909.0,384.6 910.0,385.1 911.0,385.5 912.0,386.0 913.0,386.4 914.0,386.9 915.0,387.3 916.0,387.7 917.0,388.1 918.0,388.5 919.0,388.9 920.0,389.3 921.0,389.7 922.0,390.1 923.0,390.5 924.0,390.9 925.0,391.2 926.0,391.6 927.0,391.9 928.0,392.2 929.0,392.5 930.0,392.8 931.0,393.1 932.0,393.3 933.0,393.6 934.0,393.8 935.0,394.0 936.0,394.2 937.0,394.4 938.0,394.6 939.0,394.8 940.0,395.0 941.0,395.2 942.0,395.4 943.0,395.6 944.0,395.8 945.0,396.0 946.0,396.2 947.0,396.3 948.0,396.5 949.0,396.7 950.0,396.9 951.0,397.1 952.0,397.2 953.0,397.4 954.0,397.5 955.0,397.6 956.0,397.7 957.0,397.8 958.0,397.8 959.0,397.9 960.0,397.9 961.0,397.9 962.0,397.9 963.0,397.9 964.0,397.9 965.0,397.8 966.0,397.8 967.0,397.8 968.0,397.8 969.0,397.8 970.0,397.8 971.0,397.8 972.0,397.7 973.0,397.7 974.0,397.7 975.0,397.7 976.0,397.7 977.0,397.7 978.0,397.6 979.0,397.6 980.0,397.6 981.0,397.6 982.0,397.5 983.0,397.5 984.0,397.5 985.0,397.5 986.0,397.4 987.0,397.4 988.0,397.4 989.0,397.3 990.0,397.3 991.0,397.3 992.0,397.2 993.0,397.2 994.0,397.2 995.0,397.1 996.0,397.1 997.0,397.1 998.0,397.0 999.0,397.0 1000.0,397.0 1001.0,396.9 1002.0,396.9 1003.0,396.8 1004.0,396.8 1005.0,396.7 1006.0,396.6 1007.0,396.5 1008.0,396.4 1009.0,396.3 1010.0,396.1 1011.0,396.0 1012.0,395.9 1013.0,395.7 1014.0,395.6 1015.0,395.4 1016.0,395.3 1017.0,395.1 1018.0,395.0 1019.0,394.8 1020.0,394.7 1021.0,394.5 1022.0,394.3 1023.0,394.2 1024.0,394.0 1025.0,393.7 1026.0,393.5 1027.0,393.3 1028.0,393.0 1029.0,392.7 1030.0,392.4 1031.0,392.1 1032.0,391.8 1033.0,391.5 1034.0,391.1 1035.0,390.8 1036.0,390.5 1037.0,390.2 1038.0,389.8 1039.0,389.5 1040.0,389.2 1041.0,388.9 1042.0,388.5 1043.0,388.2 1044.0,387.9 1045.0,387.6 1046.0,387.3 1047.0,387.1 1048.0,386.8 1049.0,386.5 1050.0,386.2 1051.0,385.9 1052.0,385.6 1053.0,385.4 1054.0,385.1 1055.0,384.8 1056.0,384.5 1057.0,384.2 1058.0,384.0 1059.0,383.7 1060.0,383.4 1061.0,383.1 1062.0,382.9 1063.0,382.6 1064.0,382.3 1065.0,382.0 1066.0,381.7 1067.0,381.4 1068.0,381.1 1069.0,380.8 1070.0,380.5 1071.0,380.1 1072.0,379.8 1073.0,379.5 1074.0,379.1 1075.0,378.8 1076.0,378.4 1077.0,378.1 1078.0,377.7 1079.0,377.4 1080.0,377.0 1081.0,376.7 1082.0,376.3 1083.0,376.0 1084.0,375.6 1085.0,375.2 1086.0,374.9 1087.0,374.5 1088.0,374.1 1089.0,373.8 1090.0,373.4 1091.0,373.0 1092.0,372.7 1093.0,372.3 1094.0,371.9 1095.0,371.6 1096.0,371.2 1097.0,370.8 1098.0,370.5 1099.0,370.1 1100.0,369.7 1101.0,369.4 1102.0,369.0 1103.0,368.6 1104.0,368.2 1105.0,367.8 1106.0,367.5 1107.0,367.1 1108.0,366.6 1109.0,366.2 1110.0,365.8 1111.0,365.4 1112.0,365.0 1113.0,364.5 1114.0,364.1 1115.0,363.7 1116.0,363.2 1117.0,362.8 1118.0,362.4 1119.0,361.9 1120.0,361.5 1121.0,361.1 1122.0,360.6 1123.0,360.2 1124.0,359.7 1125.0,359.3 1126.0,358.9 1127.0,358.4 1128.0,357.9 1129.0,357.5 1130.0,357.0 1131.0,356.4 1132.0,355.9 1133.0,355.3 1134.0,354.8 1135.0,354.2 1136.0,353.6 1137.0,353.0 1138.0,352.3 1139.0,351.7 1140.0,351.1 1141.0,350.5 1142.0,349.9 1143.0,349.4 1144.0,348.8 1145.0,348.3 1146.0,347.8 1147.0,347.3 1148.0,346.9 1149.0,346.4 1150.0,346.0 1151.0,345.5 1152.0,345.1 1153.0,344.7 1154.0,344.2 1155.0,343.8 1156.0,343.4 1157.0,343.0 1158.0,342.5 1159.0,342.1 1160.0,341.7 1161.0,341.2 1162.0,340.8 1163.0,340.4 1164.0,340.0 1165.0,339.6 1166.0,339.2 1167.0,338.8 1168.0,338.4 1169.0,338.1 1170.0,337.8 1171.0,337.5 1172.0,337.2 1173.0,336.9 1174.0,336.6 1175.0,336.4 1176.0,336.1 1177.0,335.9 1178.0,335.6 1179.0,335.4 1180.0,335.2 1181.0,335.0 1182.0,334.8 1183.0,334.6 1184.0,334.4 1185.0,334.3 1186.0,334.1 1187.0,334.0 1188.0,333.8 1189.0,333.6 1190.0,333.5 1191.0,333.4 1192.0,333.2 1193.0,333.1 1194.0,332.9 1195.0,332.8 1196.0,332.6 1197.0,332.5 1198.0,332.3 1199.0,332.2 1200.0,332.0 1201.0,331.9 1202.0,331.7 1203.0,331.6 1204.0,331.5 1205.0,331.3 1206.0,331.2 1207.0,331.1 1208.0,331.0 1209.0,330.9 1210.0,330.8 1211.0,330.7 1212.0,330.6 1213.0,330.5 1214.0,330.4 1215.0,330.3 1216.0,330.2 1217.0,330.1 1218.0,330.0 1219.0,329.9 1220.0,329.8 1221.0,329.7 1222.0,329.6 1223.0,329.6 1224.0,329.5 1225.0,329.4 1226.0,329.3 1227.0,329.2 1228.0,329.1 1229.0,329.0 1230.0,328.9 1231.0,328.8 1232.0,328.7 1233.0,328.7 1234.0,328.6 1235.0,328.5 1236.0,328.4 1237.0,328.3 1238.0,328.2 1239.0,328.1 1240.0,328.0 1241.0,327.9 1242.0,327.8 1243.0,327.6 1244.0,327.5 1245.0,327.3 1246.0,327.2 1247.0,327.0 1248.0,326.8 1249.0,326.6 1250.0,326.4 1251.0,326.2 1252.0,326.0 1253.0,325.8 1254.0,325.5 1255.0,325.3 1256.0,325.1 1257.0,324.9 1258.0,324.7 1259.0,324.4 1260.0,324.2 1261.0,324.0 1262.0,323.8 1263.0,323.5 1264.0,323.3 1265.0,323.1 1266.0,322.9 1267.0,322.6 1268.0,322.4 1269.0,322.2 1270.0,321.9 1271.0,321.7 1272.0,321.5 1273.0,321.2 1274.0,321.0 1275.0,320.7 1276.0,320.4 1277.0,320.1 1278.0,319.9 1279.0,319.5 1280.0,319.2 1281.0,318.8 1282.0,318.4 1283.0,318.0 1284.0,317.5 1285.0,317.0 1286.0,316.4 1287.0,315.8 1288.0,315.2 1289.0,314.6 1290.0,314.0 1291.0,313.4 1292.0,312.8 1293.0,312.2 1294.0,311.6 1295.0,311.0 1296.0,310.4 1297.0,309.8 1298.0,309.3 1299.0,308.7 1300.0,308.2 1301.0,307.7 1302.0,307.1 1303.0,306.6 1304.0,306.1 1305.0,305.6 1306.0,305.0 1307.0,304.5 1308.0,304.0 1309.0,303.5 1310.0,303.0 1311.0,302.4 1312.0,301.9 1313.0,301.4 1314.0,300.9 1315.0,300.3 1316.0,299.8 1317.0,299.3 1318.0,298.8 1319.0,298.3 1320.0,297.7 1321.0,297.2 1322.0,296.7 1323.0,296.2 1324.0,295.6 1325.0,295.1 1326.0,294.6 1327.0,294.1 1328.0,293.6 1329.0,293.1 1330.0,292.7 1331.0,292.2 1332.0,291.7 1333.0,291.3 1334.0,290.9 1335.0,290.4 1336.0,290.0 1337.0,289.6 1338.0,289.1 1339.0,288.7 1340.0,288.3 1341.0,287.9 1342.0,287.5 1343.0,287.0 1344.0,286.6 1345.0,286.2 1346.0,285.8 1347.0,285.4 1348.0,285.0 1349.0,284.5 1350.0,284.2 1351.0,283.8 1352.0,283.4 1353.0,283.0 1354.0,282.7 1355.0,282.4 1356.0,282.1 1357.0,281.9 1358.0,281.7 1359.0,281.5 1360.0,281.3 1361.0,281.1 1362.0,280.9 1363.0,280.7 1364.0,280.6 1365.0,280.4 1366.0,280.3 1367.0,280.1 1368.0,279.9 1369.0,279.8 1370.0,279.6 1371.0,279.5 1372.0,279.3 1373.0,279.2 1374.0,279.0 1375.0,278.9 1376.0,278.7 1377.0,278.6 1378.0,278.5 1379.0,278.4 1380.0,278.4 1381.0,278.3 1382.0,278.3 1383.0,278.3 1384.0,278.3 1385.0,278.3 1386.0,278.3 1387.0,278.4 1388.0,278.4 1389.0,278.5 1390.0,278.5 1391.0,278.6 1392.0,278.7 1393.0,278.7 1394.0,278.8 1395.0,278.8 1396.0,278.9 1397.0,278.9 1398.0,279.0 1399.0,279.1 1400.0,279.1 1401.0,279.2 1402.0,279.3 1403.0,279.4 1404.0,279.5 1405.0,279.6 1406.0,279.8 1407.0,280.0 1408.0,280.1 1409.0,280.3 1410.0,280.6 1411.0,280.8 1412.0,281.0 1413.0,281.3 1414.0,281.5 1415.0,281.7 1416.0,282.0 1417.0,282.2 1418.0,282.5 1419.0,282.7 1420.0,283.0 1421.0,283.2 1422.0,283.5 1423.0,283.7 1424.0,284.0 1425.0,284.2 1426.0,284.5 1427.0,284.8 1428.0,285.0 1429.0,285.3 1430.0,285.6 1431.0,285.9 1432.0,286.2 1433.0,286.5 1434.0,286.8 1435.0,287.2 1436.0,287.5 1437.0,287.8 1438.0,288.2 1439.0,288.5 1440.0,288.9 1441.0,289.2 1442.0,289.6 1443.0,289.9 1444.0,290.3 1445.0,290.6 1446.0,291.0 1447.0,291.3 1448.0,291.7 1449.0,292.0 1450.0,292.3 1451.0,292.7 1452.0,293.0 1453.0,293.3 1454.0,293.6 1455.0,293.8 1456.0,294.1 1457.0,294.3 1458.0,294.5 1459.0,294.7 1460.0,294.9 1461.0,295.0 1462.0,295.1 1463.0,295.3 1464.0,295.4 1465.0,295.5 1466.0,295.7 1467.0,295.8 1468.0,295.9 1469.0,296.0 1470.0,296.1 1471.0,296.3 1472.0,296.4 1473.0,296.5 1474.0,296.6 1475.0,296.7 1476.0,296.8 1477.0,296.9 1478.0,297.0 1479.0,297.1 1480.0,297.2 1481.0,297.2 1482.0,297.2 1483.0,297.2 1484.0,297.2 1485.0,297.2 1486.0,297.2 1487.0,297.1 1488.0,297.1 1489.0,297.0 1490.0,297.0 1491.0,296.9 1492.0,296.8 1493.0,296.8 1494.0,296.7 1495.0,296.7 1496.0,296.6 1497.0,296.5 1498.0,296.5 1499.0,296.4 1500.0,296.3 1501.0,296.2 1502.0,296.1 1503.0,296.0 1504.0,295.8 1505.0,295.7 1506.0,295.4 1507.0,295.2 1508.0,294.9 1509.0,294.6 1510.0,294.2 1511.0,293.9 1512.0,293.5 1513.0,293.1 1514.0,292.7 1515.0,292.3 1516.0,291.8 1517.0,291.4 1518.0,291.0 1519.0,290.6 1520.0,290.2 1521.0,289.8 1522.0,289.3 1523.0,288.9 1524.0,288.5 1525.0,288.1 1526.0,287.6 1527.0,287.2 1528.0,286.7 1529.0,286.2 1530.0,285.7 1531.0,285.1 1532.0,284.5 1533.0,283.9 1534.0,283.2 1535.0,282.5 1536.0,281.8 1537.0,281.1 1538.0,280.4 1539.0,279.7 1540.0,278.9 1541.0,278.2 1542.0,277.5 1543.0,276.7 1544.0,276.0 1545.0,275.2 1546.0,274.5 1547.0,273.8 1548.0,273.0 1549.0,272.3 1550.0,271.5 1551.0,270.7 1552.0,270.0 1553.0,269.2 1554.0,268.4 1555.0,267.5 1556.0,266.7 1557.0,265.8 1558.0,264.8 1559.0,263.9 1560.0,262.9 1561.0,261.9 1562.0,260.9 1563.0,259.8 1564.0,258.8 1565.0,257.7 1566.0,256.7 1567.0,255.7 1568.0,254.6 1569.0,253.5 1570.0,252.5 1571.0,251.4 1572.0,250.4 1573.0,249.3 1574.0,248.3 1575.0,247.2 1576.0,246.2 1577.0,245.1 1578.0,244.0 1579.0,242.9 1580.0,241.8 1581.0,240.7 1582.0,239.6 1583.0,238.4 1584.0,237.3 1585.0,236.1 1586.0,234.9 1587.0,233.7 1588.0,232.5 1589.0,231.3 1590.0,230.1 1591.0,228.9 1592.0,227.7 1593.0,226.5 1594.0,225.3 1595.0,224.1 1596.0,222.9 1597.0,221.7 1598.0,220.5 1599.0,219.3 1600.0,218.1 1601.0,216.9 1602.0,215.7 1603.0,214.5 1604.0,213.3 1605.0,212.1 1606.0,210.9 1607.0,209.7 1608.0,208.6 1609.0,207.4 1610.0,206.2 1611.0,205.0 1612.0,203.9 1613.0,202.7 1614.0,201.6 1615.0,200.4 1616.0,199.3 1617.0,198.1 1618.0,196.9 1619.0,195.8 1620.0,194.6 1621.0,193.5 1622.0,192.3 1623.0,191.2 1624.0,190.0 1625.0,188.8 1626.0,187.7 1627.0,186.5 1628.0,185.3 1629.0,184.1 1630.0,182.9 1631.0,181.6 1632.0,180.4 1633.0,179.1 1634.0,177.8 1635.0,176.4 1636.0,175.1 1637.0,173.7 1638.0,172.4 1639.0,171.0 1640.0,169.6 1641.0,168.2 1642.0,166.8 1643.0,165.4 1644.0,164.1 1645.0,162.7 1646.0,161.3 1647.0,159.9 1648.0,158.5 1649.0,157.1 1650.0,155.7 1651.0,154.3 1652.0,152.9 1653.0,151.5 1654.0,150.2 1655.0,148.8 1656.0,147.4 1657.0,146.0 1658.0,144.6 1659.0,143.2 1660.0,141.8 1661.0,140.3 1662.0,138.9 1663.0,137.5 1664.0,136.1 1665.0,134.7 1666.0,133.3 1667.0,131.9 1668.0,130.5 1669.0,129.1 1670.0,127.6 1671.0,126.2 1672.0,124.8 1673.0,123.4 1674.0,122.0 1675.0,120.6 1676.0,119.2 1677.0,117.8 1678.0,116.4 1679.0,115.0 1680.0,113.7 1681.0,112.4 1682.0,111.0 1683.0,109.8 1684.0,108.5 1685.0,107.2 1686.0,106.0 1687.0,104.8 1688.0,103.6 1689.0,102.4 1690.0,101.2 1691.0,100.0 1692.0,98.8 1693.0,97.6 1694.0,96.4 1695.0,95.2 1696.0,94.0 1697.0,92.8 1698.0,91.6 1699.0,90.4 1700.0,89.2 1701.0,88.0 1702.0,86.8 1703.0,85.6 1704.0,84.4 1705.0,83.2 1706.0,82.0 1707.0,80.9 1708.0,79.7 1709.0,78.5 1710.0,77.3 1711.0,76.1 1712.0,74.9 1713.0,73.7 1714.0,72.5 1715.0,71.3 1716.0,70.1 1717.0,68.9 1718.0,67.7 1719.0,66.5 1720.0,65.3 1721.0,64.1 1722.0,62.9 1723.0,61.7 1724.0,60.5 1725.0,59.3 1726.0,58.1 1727.0,57.0 1728.0,55.9 1729.0,54.8 1730.0,53.7 1731.0,52.8 1732.0,51.8 1733.0,51.0 1734.0,50.2 1735.0,49.5 1736.0,48.8 1737.0,48.2 1738.0,47.6 1739.0,47.0 1740.0,46.5 1741.0,46.0 1742.0,45.4 1743.0,44.9 1744.0,44.4 1745.0,43.9 1746.0,43.4 1747.0,42.9 1748.0,42.4 1749.0,41.9 1750.0,41.4 1751.0,41.0 1752.0,40.5 1753.0,40.1 1754.0,39.7 1755.0,39.3 1756.0,38.9 1757.0,38.5 1758.0,38.2 1759.0,37.8 1760.0,37.5 1761.0,37.1 1762.0,36.8 1763.0,36.4 1764.0,36.1 1765.0,35.8 1766.0,35.5 1767.0,35.2 1768.0,35.0 1769.0,34.7 1770.0,34.5" fill="none" stroke="#ffff00" stroke-width="1" stroke-dasharray="3 3" shape-rendering="crispEdges"/>
<g shape-rendering="crispEdges"><line x1="3.5" y1="358.0" x2="3.5" y2="386.5" stroke="#00ffff"/><rect x="2" y="358.0" width="3" height="9.5" fill="#00ffff"/><rect x="7.5" y="367.5" width="2" height="9.5" fill="none" stroke="#ff5252" stroke-width="1"/><line x1="8.5" y1="367.5" x2="8.5" y2="367.5" stroke="#ff5252"/><line x1="8.5" y1="377.0" x2="8.5" y2="377.0" stroke="#ff5252"/><line x1="13.5" y1="367.5" x2="13.5" y2="377.0" stroke="#ffffff"/><line x1="12" y1="377.0" x2="15" y2="377.0" stroke="#ffffff"/><line x1="18.5" y1="367.5" x2="18.5" y2="377.0" stroke="#ffffff"/><line x1="17" y1="377.0" x2="20" y2="377.0" stroke="#ffffff"/><line x1="23.5" y1="367.5" x2="23.5" y2="377.0" stroke="#00ffff"/><rect x="22" y="367.5" width="3" height="9.5" fill="#00ffff"/><line x1="28.5" y1="367.5" x2="28.5" y2="377.0" stroke="#00ffff"/><rect x="27" y="367.5" width="3" height="9.5" fill="#00ffff"/><rect x="32.5" y="367.5" width="2" height="9.5" fill="none" stroke="#ff5252" stroke-width="1"/><line x1="33.5" y1="367.5" x2="33.5" y2="367.5" stroke="#ff5252"/><line x1="33.5" y1="377.0" x2="33.5" y2="377.0" stroke="#ff5252"/><line x1="38.5" y1="367.5" x2="38.5" y2="386.5" stroke="#ffffff"/><line x1="37" y1="377.0" x2="40" y2="377.0" stroke="#ffffff"/><line x1="43.5" y1="367.5" x2="43.5" y2="377.0" stroke="#ffffff"/><line x1="42" y1="374.0" x2="45" y2="374.0" stroke="#ffffff"/><rect x="47.5" y="367.5" width="2" height="9.5" fill="none" stroke="#ff5252" stroke-width="1"/><line x1="48.5" y1="367.5" x2="48.5" y2="367.5" stroke="#ff5252"/><line x1="48.5" y1="377.0" x2="48.5" y2="377.0" stroke="#ff5252"/><line x1="53.5" y1="367.5" x2="53.5" y2="386.5" stroke="#ffffff"/><line x1="52" y1="377.0" x2="55" y2="377.0" stroke="#ffffff"/><line x1="58.5" y1="377.0" x2="58.5" y2="396.0" stroke="#00ffff"/><rect x="57" y="386.5" width="3" height="9.5" fill="#00ffff"/><line x1="63.5" y1="386.5" x2="63.5" y2="405.5" stroke="#00ffff"/><rect x="62" y="396.0" width="3" height="9.5" fill="#00ffff"/><line x1="68.5" y1="396.0" x2="68.5" y2="405.5" stroke="#ffffff"/><line x1="67" y1="396.0" x2="70" y2="396.0" stroke="#ffffff"/><line x1="73.5" y1="396.0" x2="73.5" y2="424.5" stroke="#00ffff"/><rect x="72" y="396.0" width="3" height="19.0" fill="#00ffff"/><line x1="78.5" y1="405.5" x2="78.5" y2="415.0" stroke="#00ffff"/><rect x="77" y="405.5" width="3" height="9.5" fill="#00ffff"/><rect x="82.5" y="396.0" width="2" height="19.0" fill="none" stroke="#ff5252" stroke-width="1"/><line x1="83.5" y1="396.0" x2="83.5" y2="396.0" stroke="#ff5252"/><line x1="83.5" y1="415.0" x2="83.5" y2="415.0" stroke="#ff5252"/><rect x="87.5" y="396.0" width="2" height="9.5" fill="none" stroke="#ff5252" stroke-width="1"/><line x1="88.5" y1="396.0" x2="88.5" y2="396.0" stroke="#ff5252"/><line x1="88.5" y1="405.5" x2="88.5" y2="405.5" stroke="#ff5252"/><rect x="92.5" y="396.0" width="2" height="9.5" fill="none" stroke="#ff5252" stroke-width="1"/><line x1="93.5" y1="396.0" x2="93.5" y2="396.0" stroke="#ff5252"/><line x1="93.5" y1="405.5" x2="93.5" y2="405.5" stroke="#ff5252"/><line x1="98.5" y1="396.0" x2="98.5" y2="405.5" stroke="#ffffff"/><line x1="97" y1="396.0" x2="100" y2="396.0" stroke="#ffffff"/><line x1="103.5" y1="396.0" x2="103.5" y2="415.0" stroke="#00ffff"/><rect x="102" y="405.5" width="3" height="9.5" fill="#00ffff"/><rect x="107.5" y="405.5" width="2" height="9.5" fill="none" stroke="#ff5252" stroke-width="1"/><line x1="108.5" y1="405.5" x2="108.5" y2="405.5" stroke="#ff5252"/><line x1="108.5" y1="415.0" x2="108.5" y2="424.5" stroke="#ff5252"/><line x1="113.5" y1="405.5" x2="113.5" y2="415.0" stroke="#00ffff"/><rect x="112" y="405.5" width="3" height="9.5" fill="#00ffff"/><line x1="118.5" y1="405.5" x2="118.5" y2="415.0" stroke="#ffffff"/><line x1="117" y1="405.5" x2="120" y2="405.5" stroke="#ffffff"/><line x1="123.5" y1="405.5" x2="123.5" y2="415.0" stroke="#00ffff"/><rect x="122" y="405.5" width="3" height="9.5" fill="#00ffff"/><line x1="128.5" y1="405.5" x2="128.5" y2="415.0" stroke="#00ffff"/><rect x="127" y="405.5" width="3" height="9.5" fill="#00ffff"/><rect x="132" y="415.0" width="3" height="9.5" fill="#ffff00"/><rect x="137.5" y="396.0" width="2" height="19.0" fill="none" stroke="#ff5252" stroke-width="1"/><line x1="138.5" y1="396.0" x2="138.5" y2="396.0" stroke="#ff5252"/><line x1="138.5" y1="415.0" x2="138.5" y2="415.0" stroke="#ff5252"/><line x1="143.5" y1="396.0" x2="143.5" y2="405.5" stroke="#ffffff"/><line x1="142" y1="396.0" x2="145" y2="396.0" stroke="#ffffff"/><rect x="147.5" y="386.5" width="2" height="9.5" fill="none" stroke="#ff5252" stroke-width="1"/><line x1="148.5" y1="386.5" x2="148.5" y2="386.5" stroke="#ff5252"/><line x1="148.5" y1="396.0" x2="148.5" y2="405.5" stroke="#ff5252"/><line x1="153.5" y1="377.0" x2="153.5" y2="396.0" stroke="#ffffff"/><line x1="152" y1="386.5" x2="155" y2="386.5" stroke="#ffffff"/><line x1="158.5" y1="367.5" x2="158.5" y2="386.5" stroke="#ffffff"/><line x1="157" y1="386.5" x2="160" y2="386.5" stroke="#ffffff"/><rect x="162.5" y="377.0" width="2" height="19.0" fill="none" stroke="#ff5252" stroke-width="1"/><line x1="163.5" y1="377.0" x2="163.5" y2="377.0" stroke="#ff5252"/><line x1="163.5" y1="396.0" x2="163.5" y2="396.0" stroke="#ff5252"/><line x1="168.5" y1="377.0" x2="168.5" y2="396.0" stroke="#00ffff"/><rect x="167" y="377.0" width="3" height="9.5" fill="#00ffff"/><rect x="172.5" y="377.0" width="2" height="9.5" fill="none" stroke="#ff5252" stroke-width="1"/><line x1="173.5" y1="377.0" x2="173.5" y2="377.0" stroke="#ff5252"/><line x1="173.5" y1="386.5" x2="173.5" y2="386.5" stroke="#ff5252"/><rect x="177.5" y="367.5" width="2" height="19.0" fill="none" stroke="#ff5252" stroke-width="1"/><line x1="178.5" y1="358.0" x2="178.5" y2="367.5" stroke="#ff5252"/><line x1="178.5" y1="386.5" x2="178.5" y2="386.5" stroke="#ff5252"/><rect x="182.5" y="339.0" width="2" height="38.0" fill="none" stroke="#ff5252" stroke-width="1"/><line x1="183.5" y1="339.0" x2="183.5" y2="339.0" stroke="#ff5252"/><line x1="183.5" y1="377.0" x2="183.5" y2="377.0" stroke="#ff5252"/><line x1="188.5" y1="329.5" x2="188.5" y2="358.0" stroke="#00ffff"/><rect x="187" y="339.0" width="3" height="9.5" fill="#00ffff"/><line x1="193.5" y1="339.0" x2="193.5" y2="358.0" stroke="#ffffff"/><line x1="192" y1="348.5" x2="195" y2="348.5" stroke="#ffffff"/><line x1="198.5" y1="348.5" x2="198.5" y2="377.0" stroke="#00ffff"/><rect x="197" y="348.5" width="3" height="28.5" fill="#00ffff"/><line x1="203.5" y1="358.0" x2="203.5" y2="377.0" stroke="#00ffff"/><rect x="202" y="358.0" width="3" height="19.0" fill="#00ffff"/><rect x="207.5" y="358.0" width="2" height="9.5" fill="none" stroke="#ff5252" stroke-width="1"/><line x1="208.5" y1="358.0" x2="208.5" y2="358.0" stroke="#ff5252"/><line x1="208.5" y1="367.5" x2="208.5" y2="377.0" stroke="#ff5252"/><rect x="212.5" y="348.5" width="2" height="19.0" fill="none" stroke="#ff5252" stroke-width="1"/><line x1="213.5" y1="348.5" x2="213.5" y2="348.5" stroke="#ff5252"/><line x1="213.5" y1="367.5" x2="213.5" y2="367.5" stroke="#ff5252"/><line x1="218.5" y1="348.5" x2="218.5" y2="367.5" stroke="#00ffff"/><rect x="217" y="348.5" width="3" height="19.0" fill="#00ffff"/><rect x="222.5" y="348.5" width="2" height="19.0" fill="none" stroke="#ff5252" stroke-width="1"/><line x1="223.5" y1="348.5" x2="223.5" y2="348.5" stroke="#ff5252"/><line x1="223.5" y1="367.5" x2="223.5" y2="367.5" stroke="#ff5252"/><line x1="228.5" y1="348.5" x2="228.5" y2="367.5" stroke="#ffffff"/><line x1="227" y1="358.0" x2="230" y2="358.0" stroke="#ffffff"/><line x1="233.5" y1="348.5" x2="233.5" y2="377.0" stroke="#00ffff"/><rect x="232" y="348.5" width="3" height="9.5" fill="#00ffff"/><line x1="238.5" y1="348.5" x2="238.5" y2="367.5" stroke="#ffffff"/><line x1="237" y1="358.0" x2="240" y2="358.0" stroke="#ffffff"/><rect x="242.5" y="329.5" width="2" height="28.5" fill="none" stroke="#ff5252" stroke-width="1"/><line x1="243.5" y1="329.5" x2="243.5" y2="329.5" stroke="#ff5252"/><line x1="243.5" y1="358.0" x2="243.5" y2="367.5" stroke="#ff5252"/><line x1="248.5" y1="329.5" x2="248.5" y2="358.0" stroke="#ffffff"/><line x1="247" y1="339.0" x2="250" y2="339.0" stroke="#ffffff"/><line x1="253.5" y1="339.0" x2="253.5" y2="358.0" stroke="#00ffff"/><rect x="252" y="339.0" width="3" height="19.0" fill="#00ffff"/><line x1="258.5" y1="339.0" x2="258.5" y2="358.0" stroke="#00ffff"/><rect x="257" y="339.0" width="3" height="19.0" fill="#00ffff"/><line x1="263.5" y1="348.5" x2="263.5" y2="358.0" stroke="#ffffff"/><line x1="262" y1="358.0" x2="265" y2="358.0" stroke="#ffffff"/><line x1="268.5" y1="348.5" x2="268.5" y2="386.5" stroke="#00ffff"/><rect x="267" y="358.0" width="3" height="19.0" fill="#00ffff"/><rect x="272.5" y="367.5" width="2" height="9.5" fill="none" stroke="#ff5252" stroke-width="1"/><line x1="273.5" y1="367.5" x2="273.5" y2="367.5" stroke="#ff5252"/><line x1="273.5" y1="377.0" x2="273.5" y2="377.0" stroke="#ff5252"/><line x1="278.5" y1="358.0" x2="278.5" y2="367.5" stroke="#ffffff"/><line x1="277" y1="367.5" x2="280" y2="367.5" stroke="#ffffff"/><rect x="282.5" y="348.5" width="2" height="19.0" fill="none" stroke="#ff5252" stroke-width="1"/><line x1="283.5" y1="348.5" x2="283.5" y2="348.5" stroke="#ff5252"/><line x1="283.5" y1="367.5" x2="283.5" y2="367.5" stroke="#ff5252"/><rect x="287.5" y="339.0" width="2" height="9.5" fill="none" stroke="#ff5252" stroke-width="1"/><line x1="288.5" y1="339.0" x2="288.5" y2="339.0" stroke="#ff5252"/><line x1="288.5" y1="348.5" x2="288.5" y2="348.5" stroke="#ff5252"/><rect x="292.5" y="329.5" width="2" height="9.5" fill="none" stroke="#ff5252" stroke-width="1"/><line x1="293.5" y1="320.0" x2="293.5" y2="329.5" stroke="#ff5252"/><line x1="293.5" y1="339.0" x2="293.5" y2="339.0" stroke="#ff5252"/><line x1="298.5" y1="320.0" x2="298.5" y2="339.5" stroke="#ffffff"/><line x1="297" y1="320.0" x2="300" y2="320.0" stroke="#ffffff"/><rect x="302.5" y="320.0" width="2" height="9.5" fill="none" stroke="#ff5252" stroke-width="1"/><line x1="303.5" y1="320.0" x2="303.5" y2="320.0" stroke="#ff5252"/><line x1="303.5" y1="329.5" x2="303.5" y2="329.5" stroke="#ff5252"/><rect x="307.5" y="320.0" width="2" height="9.5" fill="none" stroke="#ff5252" stroke-width="1"/><line x1="308.5" y1="310.5" x2="308.5" y2="320.0" stroke="#ff5252"/><line x1="308.5" y1="329.5" x2="308.5" y2="329.5" stroke="#ff5252"/><rect x="312.5" y="320.0" width="2" height="9.5" fill="none" stroke="#ff5252" stroke-width="1"/><line x1="313.5" y1="310.5" x2="313.5" y2="320.0" stroke="#ff5252"/><line x1="313.5" y1="329.5" x2="313.5" y2="329.5" stroke="#ff5252"/><rect x="317.5" y="272.5" width="2" height="47.5" fill="none" stroke="#ff5252" stroke-width="1"/><line x1="318.5" y1="272.5" x2="318.5" y2="272.5" stroke="#ff5252"/><line x1="318.5" y1="320.0" x2="318.5" y2="320.0" stroke="#ff5252"/><line x1="323.5" y1="253.5" x2="323.5" y2="301.0" stroke="#00ffff"/><rect x="322" y="263.0" width="3" height="38.0" fill="#00ffff"/><line x1="328.5" y1="291.5" x2="328.5" y2="310.5" stroke="#00ffff"/><rect x="327" y="301.0" width="3" height="9.5" fill="#00ffff"/><line x1="333.5" y1="282.0" x2="333.5" y2="301.0" stroke="#ffffff"/><line x1="332" y1="291.5" x2="335" y2="291.5" stroke="#ffffff"/><line x1="338.5" y1="291.5" x2="338.5" y2="301.0" stroke="#00ffff"/><rect x="337" y="291.5" width="3" height="9.5" fill="#00ffff"/><line x1="343.5" y1="291.5" x2="343.5" y2="310.5" stroke="#ffffff"/><line x1="342" y1="291.5" x2="345" y2="291.5" stroke="#ffffff"/><line x1="348.5" y1="291.5" x2="348.5" y2="301.0" stroke="#ffffff"/><line x1="347" y1="291.5" x2="350" y2="291.5" stroke="#ffffff"/><line x1="353.5" y1="291.5" x2="353.5" y2="310.5" stroke="#00ffff"/><rect x="352" y="291.5" width="3" height="9.5" fill="#00ffff"/><line x1="358.5" y1="291.5" x2="358.5" y2="301.0" stroke="#00ffff"/><rect x="357" y="291.5" width="3" height="9.5" fill="#00ffff"/><line x1="363.5" y1="291.5" x2="363.5" y2="301.0" stroke="#00ffff"/><rect x="362" y="291.5" width="3" height="9.5" fill="#00ffff"/><line x1="368.5" y1="291.5" x2="368.5" y2="310.5" stroke="#ffffff"/><line x1="367" y1="291.5" x2="370" y2="291.5" stroke="#ffffff"/><rect x="372.5" y="291.5" width="2" height="19.0" fill="none" stroke="#ff5252" stroke-width="1"/><line x1="373.5" y1="291.5" x2="373.5" y2="291.5" stroke="#ff5252"/><line x1="373.5" y1="310.5" x2="373.5" y2="310.5" stroke="#ff5252"/><line x1="378.5" y1="291.5" x2="378.5" y2="310.5" stroke="#00ffff"/><rect x="377" y="291.5" width="3" height="19.0" fill="#00ffff"/><line x1="383.5" y1="301.0" x2="383.5" y2="310.5" stroke="#00ffff"/><rect x="382" y="301.0" width="3" height="9.5" fill="#00ffff"/><line x1="388.5" y1="291.5" x2="388.5" y2="310.5" stroke="#ffffff"/><line x1="387" y1="301.0" x2="390" y2="301.0" stroke="#ffffff"/><rect x="392.5" y="263.0" width="2" height="38.0" fill="none" stroke="#ff5252" stroke-width="1"/><line x1="393.5" y1="263.0" x2="393.5" y2="263.0" stroke="#ff5252"/><line x1="393.5" y1="301.0" x2="393.5" y2="310.5" stroke="#ff5252"/><rect x="397.5" y="253.5" width="2" height="19.0" fill="none" stroke="#ff5252" stroke-width="1"/><line x1="398.5" y1="253.5" x2="398.5" y2="253.5" stroke="#ff5252"/><line x1="398.5" y1="272.5" x2="398.5" y2="272.5" stroke="#ff5252"/><line x1="403.5" y1="196.5" x2="403.5" y2="263.0" stroke="#00ffff"/><rect x="402" y="253.5" width="3" height="9.5" fill="#00ffff"/><rect x="407.5" y="234.5" width="2" height="28.5" fill="none" stroke="#ff5252" stroke-width="1"/><line x1="408.5" y1="215.5" x2="408.5" y2="234.5" stroke="#ff5252"/><line x1="408.5" y1="263.0" x2="408.5" y2="263.0" stroke="#ff5252"/><line x1="413.5" y1="215.5" x2="413.5" y2="244.0" stroke="#ffffff"/><line x1="412" y1="234.5" x2="415" y2="234.5" stroke="#ffffff"/><line x1="418.5" y1="225.0" x2="418.5" y2="253.5" stroke="#00ffff"/><rect x="417" y="234.5" width="3" height="19.0" fill="#00ffff"/><line x1="423.5" y1="244.0" x2="423.5" y2="272.5" stroke="#00ffff"/><rect x="422" y="244.0" width="3" height="19.0" fill="#00ffff"/><line x1="428.5" y1="263.0" x2="428.5" y2="291.5" stroke="#00ffff"/><rect x="427" y="272.5" width="3" height="9.5" fill="#00ffff"/><line x1="433.5" y1="272.5" x2="433.5" y2="310.5" stroke="#00ffff"/><rect x="432" y="282.0" width="3" height="9.5" fill="#00ffff"/><rect x="437.5" y="291.5" width="2" height="19.0" fill="none" stroke="#ff5252" stroke-width="1"/><line x1="438.5" y1="282.0" x2="438.5" y2="291.5" stroke="#ff5252"/><line x1="438.5" y1="310.5" x2="438.5" y2="310.5" stroke="#ff5252"/><line x1="443.5" y1="291.5" x2="443.5" y2="310.5" stroke="#00ffff"/><rect x="442" y="301.0" width="3" height="9.5" fill="#00ffff"/><rect x="447.5" y="301.0" width="2" height="9.5" fill="none" stroke="#ff5252" stroke-width="1"/><line x1="448.5" y1="291.5" x2="448.5" y2="301.0" stroke="#ff5252"/><line x1="448.5" y1="310.5" x2="448.5" y2="310.5" stroke="#ff5252"/><line x1="453.5" y1="291.5" x2="453.5" y2="301.0" stroke="#ffffff"/><line x1="452" y1="291.5" x2="455" y2="291.5" stroke="#ffffff"/><line x1="458.5" y1="291.5" x2="458.5" y2="320.0" stroke="#00ffff"/><rect x="457" y="301.0" width="3" height="9.5" fill="#00ffff"/><line x1="463.5" y1="301.0" x2="463.5" y2="320.0" stroke="#ffffff"/><line x1="462" y1="310.5" x2="465" y2="310.5" stroke="#ffffff"/><rect x="467.5" y="301.0" width="2" height="9.5" fill="none" stroke="#ff5252" stroke-width="1"/><line x1="468.5" y1="291.5" x2="468.5" y2="301.0" stroke="#ff5252"/><line x1="468.5" y1="310.5" x2="468.5" y2="320.0" stroke="#ff5252"/><line x1="473.5" y1="282.0" x2="473.5" y2="301.0" stroke="#ffffff"/><line x1="472" y1="301.0" x2="475" y2="301.0" stroke="#ffffff"/><rect x="477.5" y="291.5" width="2" height="9.5" fill="none" stroke="#ff5252" stroke-width="1"/><line x1="478.5" y1="291.5" x2="478.5" y2="291.5" stroke="#ff5252"/><line x1="478.5" y1="301.0" x2="478.5" y2="310.5" stroke="#ff5252"/><line x1="483.5" y1="291.5" x2="483.5" y2="310.5" stroke="#00ffff"/><rect x="482" y="291.5" width="3" height="9.5" fill="#00ffff"/><line x1="488.5" y1="301.0" x2="488.5" y2="310.5" stroke="#ffffff"/><line x1="487" y1="310.5" x2="490" y2="310.5" stroke="#ffffff"/><line x1="493.5" y1="291.5" x2="493.5" y2="301.0" stroke="#ffffff"/><line x1="492" y1="301.0" x2="495" y2="301.0" stroke="#ffffff"/><rect x="497.5" y="282.0" width="2" height="19.0" fill="none" stroke="#ff5252" stroke-width="1"/><line x1="498.5" y1="282.0" x2="498.5" y2="282.0" stroke="#ff5252"/><line x1="498.5" y1="301.0" x2="498.5" y2="301.0" stroke="#ff5252"/><line x1="503.5" y1="282.0" x2="503.5" y2="301.0" stroke="#00ffff"/><rect x="502" y="282.0" width="3" height="19.0" fill="#00ffff"/><line x1="508.5" y1="291.5" x2="508.5" y2="310.5" stroke="#00ffff"/><rect x="507" y="291.5" width="3" height="19.0" fill="#00ffff"/><rect x="512.5" y="301.0" width="2" height="9.5" fill="none" stroke="#ff5252" stroke-width="1"/><line x1="513.5" y1="291.5" x2="513.5" y2="301.0" stroke="#ff5252"/><line x1="513.5" y1="310.5" x2="513.5" y2="310.5" stroke="#ff5252"/><line x1="518.5" y1="301.0" x2="518.5" y2="320.0" stroke="#00ffff"/><rect x="517" y="301.0" width="3" height="19.0" fill="#00ffff"/><rect x="522.5" y="310.5" width="2" height="9.5" fill="none" stroke="#ff5252" stroke-width="1"/><line x1="523.5" y1="291.5" x2="523.5" y2="310.5" stroke="#ff5252"/><line x1="523.5" y1="320.0" x2="523.5" y2="320.0" stroke="#ff5252"/><line x1="528.5" y1="291.5" x2="528.5" y2="310.5" stroke="#ffffff"/><line x1="527" y1="301.0" x2="530" y2="301.0" stroke="#ffffff"/><rect x="532.5" y="291.5" width="2" height="19.0" fill="none" stroke="#ff5252" stroke-width="1"/><line x1="533.5" y1="291.5" x2="533.5" y2="291.5" stroke="#ff5252"/><line x1="533.5" y1="310.5" x2="533.5" y2="310.5" stroke="#ff5252"/><line x1="538.5" y1="291.5" x2="538.5" y2="310.5" stroke="#ffffff"/><line x1="537" y1="291.5" x2="540" y2="291.5" stroke="#ffffff"/><line x1="543.5" y1="291.5" x2="543.5" y2="310.5" stroke="#00ffff"/><rect x="542" y="291.5" width="3" height="19.0" fill="#00ffff"/><line x1="548.5" y1="301.0" x2="548.5" y2="320.0" stroke="#ffffff"/><line x1="547" y1="310.5" x2="550" y2="310.5" stroke="#ffffff"/><rect x="552.5" y="291.5" width="2" height="19.0" fill="none" stroke="#ff5252" stroke-width="1"/><line x1="553.5" y1="291.5" x2="553.5" y2="291.5" stroke="#ff5252"/><line x1="553.5" y1="310.5" x2="553.5" y2="310.5" stroke="#ff5252"/><rect x="557.5" y="282.0" width="2" height="9.5" fill="none" stroke="#ff5252" stroke-width="1"/><line x1="558.5" y1="253.5" x2="558.5" y2="282.0" stroke="#ff5252"/><line x1="558.5" y1="291.5" x2="558.5" y2="291.5" stroke="#ff5252"/><line x1="563.5" y1="282.0" x2="563.5" y2="329.5" stroke="#00ffff"/><rect x="562" y="282.0" width="3" height="38.0" fill="#00ffff"/><line x1="568.5" y1="329.5" x2="568.5" y2="386.5" stroke="#00ffff"/><rect x="567" y="329.5" width="3" height="47.5" fill="#00ffff"/><rect x="572" y="377.0" width="3" height="9.5" fill="#ffff00"/><line x1="578.5" y1="367.5" x2="578.5" y2="405.5" stroke="#00ffff"/><rect x="577" y="367.5" width="3" height="9.5" fill="#00ffff"/><line x1="583.5" y1="367.5" x2="583.5" y2="396.0" stroke="#ffffff"/><line x1="582" y1="377.0" x2="585" y2="377.0" stroke="#ffffff"/><line x1="588.5" y1="348.5" x2="588.5" y2="377.0" stroke="#ffffff"/><line x1="587" y1="367.5" x2="590" y2="367.5" stroke="#ffffff"/><line x1="593.5" y1="367.5" x2="593.5" y2="377.0" stroke="#00ffff"/><rect x="592" y="367.5" width="3" height="9.5" fill="#00ffff"/><line x1="598.5" y1="358.0" x2="598.5" y2="377.0" stroke="#ffffff"/><line x1="597" y1="367.5" x2="600" y2="367.5" stroke="#ffffff"/><rect x="602.5" y="367.5" width="2" height="9.5" fill="none" stroke="#ff5252" stroke-width="1"/><line x1="603.5" y1="367.5" x2="603.5" y2="367.5" stroke="#ff5252"/><line x1="603.5" y1="377.0" x2="603.5" y2="386.5" stroke="#ff5252"/><rect x="607.5" y="348.5" width="2" height="9.5" fill="none" stroke="#ff5252" stroke-width="1"/><line x1="608.5" y1="348.5" x2="608.5" y2="348.5" stroke="#ff5252"/><line x1="608.5" y1="358.0" x2="608.5" y2="358.0" stroke="#ff5252"/><line x1="613.5" y1="348.5" x2="613.5" y2="367.5" stroke="#00ffff"/><rect x="612" y="358.0" width="3" height="9.5" fill="#00ffff"/><line x1="618.5" y1="358.0" x2="618.5" y2="367.5" stroke="#00ffff"/><rect x="617" y="358.0" width="3" height="9.5" fill="#00ffff"/><line x1="623.5" y1="358.0" x2="623.5" y2="386.5" stroke="#00ffff"/><rect x="622" y="358.0" width="3" height="19.0" fill="#00ffff"/><line x1="628.5" y1="358.0" x2="628.5" y2="386.5" stroke="#00ffff"/><rect x="627" y="367.5" width="3" height="9.5" fill="#00ffff"/><rect x="632.5" y="358.0" width="2" height="19.0" fill="none" stroke="#ff5252" stroke-width="1"/><line x1="633.5" y1="348.5" x2="633.5" y2="358.0" stroke="#ff5252"/><line x1="633.5" y1="377.0" x2="633.5" y2="377.0" stroke="#ff5252"/><line x1="638.5" y1="348.5" x2="638.5" y2="367.5" stroke="#00ffff"/><rect x="637" y="348.5" width="3" height="19.0" fill="#00ffff"/><rect x="642.5" y="358.0" width="2" height="9.5" fill="none" stroke="#ff5252" stroke-width="1"/><line x1="643.5" y1="348.5" x2="643.5" y2="358.0" stroke="#ff5252"/><line x1="643.5" y1="367.5" x2="643.5" y2="377.0" stroke="#ff5252"/><rect x="647.5" y="272.5" width="2" height="95.0" fill="none" stroke="#ff5252" stroke-width="1"/><line x1="648.5" y1="272.5" x2="648.5" y2="272.5" stroke="#ff5252"/><line x1="648.5" y1="367.5" x2="648.5" y2="367.5" stroke="#ff5252"/><line x1="653.5" y1="282.0" x2="653.5" y2="310.5" stroke="#00ffff"/><rect x="652" y="282.0" width="3" height="19.0" fill="#00ffff"/><line x1="658.5" y1="291.5" x2="658.5" y2="310.5" stroke="#00ffff"/><rect x="657" y="291.5" width="3" height="19.0" fill="#00ffff"/><line x1="663.5" y1="310.5" x2="663.5" y2="339.0" stroke="#00ffff"/><rect x="662" y="310.5" width="3" height="9.5" fill="#00ffff"/><line x1="668.5" y1="320.0" x2="668.5" y2="329.5" stroke="#00ffff"/><rect x="667" y="320.0" width="3" height="9.5" fill="#00ffff"/><line x1="673.5" y1="329.5" x2="673.5" y2="348.5" stroke="#00ffff"/><rect x="672" y="329.5" width="3" height="9.5" fill="#00ffff"/><rect x="677.5" y="320.0" width="2" height="19.0" fill="none" stroke="#ff5252" stroke-width="1"/><line x1="678.5" y1="320.0" x2="678.5" y2="320.0" stroke="#ff5252"/><line x1="678.5" y1="339.0" x2="678.5" y2="339.0" stroke="#ff5252"/><rect x="682.5" y="310.5" width="2" height="19.0" fill="none" stroke="#ff5252" stroke-width="1"/><line x1="683.5" y1="310.5" x2="683.5" y2="310.5" stroke="#ff5252"/><line x1="683.5" y1="329.5" x2="683.5" y2="329.5" stroke="#ff5252"/><line x1="688.5" y1="310.5" x2="688.5" y2="339.0" stroke="#00ffff"/><rect x="687" y="310.5" width="3" height="19.0" fill="#00ffff"/><rect x="692.5" y="301.0" width="2" height="28.5" fill="none" stroke="#ff5252" stroke-width="1"/><line x1="693.5" y1="301.0" x2="693.5" y2="301.0" stroke="#ff5252"/><line x1="693.5" y1="329.5" x2="693.5" y2="329.5" stroke="#ff5252"/><rect x="697.5" y="291.5" width="2" height="19.0" fill="none" stroke="#ff5252" stroke-width="1"/><line x1="698.5" y1="291.5" x2="698.5" y2="291.5" stroke="#ff5252"/><line x1="698.5" y1="310.5" x2="698.5" y2="310.5" stroke="#ff5252"/><line x1="703.5" y1="291.5" x2="703.5" y2="310.5" stroke="#00ffff"/><rect x="702" y="301.0" width="3" height="9.5" fill="#00ffff"/><line x1="708.5" y1="301.0" x2="708.5" y2="310.5" stroke="#00ffff"/><rect x="707" y="301.0" width="3" height="9.5" fill="#00ffff"/><line x1="713.5" y1="291.5" x2="713.5" y2="310.5" stroke="#ffffff"/><line x1="712" y1="301.0" x2="715" y2="301.0" stroke="#ffffff"/><line x1="718.5" y1="291.5" x2="718.5" y2="301.0" stroke="#ffffff"/><line x1="717" y1="301.0" x2="720" y2="301.0" stroke="#ffffff"/><rect x="722.5" y="291.5" width="2" height="9.5" fill="none" stroke="#ff5252" stroke-width="1"/><line x1="723.5" y1="291.5" x2="723.5" y2="291.5" stroke="#ff5252"/><line x1="723.5" y1="301.0" x2="723.5" y2="301.0" stroke="#ff5252"/><line x1="728.5" y1="291.5" x2="728.5" y2="301.0" stroke="#ffffff"/><line x1="727" y1="301.0" x2="730" y2="301.0" stroke="#ffffff"/><line x1="733.5" y1="291.5" x2="733.5" y2="301.0" stroke="#00ffff"/><rect x="732" y="291.5" width="3" height="9.5" fill="#00ffff"/><line x1="738.5" y1="291.5" x2="738.5" y2="310.5" stroke="#ffffff"/><line x1="737" y1="301.0" x2="740" y2="301.0" stroke="#ffffff"/><line x1="743.5" y1="291.5" x2="743.5" y2="310.5" stroke="#ffffff"/><line x1="742" y1="301.0" x2="745" y2="301.0" stroke="#ffffff"/><line x1="748.5" y1="291.5" x2="748.5" y2="310.5" stroke="#00ffff"/><rect x="747" y="291.5" width="3" height="19.0" fill="#00ffff"/><rect x="752.5" y="291.5" width="2" height="9.5" fill="none" stroke="#ff5252" stroke-width="1"/><line x1="753.5" y1="282.0" x2="753.5" y2="291.5" stroke="#ff5252"/><line x1="753.5" y1="301.0" x2="753.5" y2="310.5" stroke="#ff5252"/><line x1="758.5" y1="301.0" x2="758.5" y2="320.0" stroke="#00ffff"/><rect x="757" y="301.0" width="3" height="9.5" fill="#00ffff"/><line x1="763.5" y1="310.5" x2="763.5" y2="339.0" stroke="#00ffff"/><rect x="762" y="310.5" width="3" height="19.0" fill="#00ffff"/><rect x="767.5" y="329.5" width="2" height="9.5" fill="none" stroke="#ff5252" stroke-width="1"/><line x1="768.5" y1="329.5" x2="768.5" y2="329.5" stroke="#ff5252"/><line x1="768.5" y1="339.0" x2="768.5" y2="348.5" stroke="#ff5252"/><line x1="773.5" y1="339.0" x2="773.5" y2="348.5" stroke="#00ffff"/><rect x="772" y="339.0" width="3" height="9.5" fill="#00ffff"/><line x1="778.5" y1="329.5" x2="778.5" y2="348.5" stroke="#ffffff"/><line x1="777" y1="339.0" x2="780" y2="339.0" stroke="#ffffff"/><line x1="783.5" y1="329.5" x2="783.5" y2="348.5" stroke="#ffffff"/><line x1="782" y1="339.0" x2="785" y2="339.0" stroke="#ffffff"/><line x1="788.5" y1="329.5" x2="788.5" y2="367.5" stroke="#ffffff"/><line x1="787" y1="339.0" x2="790" y2="339.0" stroke="#ffffff"/><line x1="793.5" y1="339.0" x2="793.5" y2="367.5" stroke="#00ffff"/><rect x="792" y="348.5" width="3" height="9.5" fill="#00ffff"/><rect x="797.5" y="348.5" width="2" height="9.5" fill="none" stroke="#ff5252" stroke-width="1"/><line x1="798.5" y1="339.0" x2="798.5" y2="348.5" stroke="#ff5252"/><line x1="798.5" y1="358.0" x2="798.5" y2="358.0" stroke="#ff5252"/><rect x="802.5" y="348.5" width="2" height="9.5" fill="none" stroke="#ff5252" stroke-width="1"/><line x1="803.5" y1="348.5" x2="803.5" y2="348.5" stroke="#ff5252"/><line x1="803.5" y1="358.0" x2="803.5" y2="358.0" stroke="#ff5252"/><line x1="808.5" y1="339.0" x2="808.5" y2="367.5" stroke="#ffffff"/><line x1="807" y1="358.0" x2="810" y2="358.0" stroke="#ffffff"/><line x1="813.5" y1="348.5" x2="813.5" y2="377.0" stroke="#00ffff"/><rect x="812" y="358.0" width="3" height="19.0" fill="#00ffff"/><line x1="818.5" y1="358.0" x2="818.5" y2="377.0" stroke="#ffffff"/><line x1="817" y1="377.0" x2="820" y2="377.0" stroke="#ffffff"/><rect x="822.5" y="358.0" width="2" height="9.5" fill="none" stroke="#ff5252" stroke-width="1"/><line x1="823.5" y1="358.0" x2="823.5" y2="358.0" stroke="#ff5252"/><line x1="823.5" y1="367.5" x2="823.5" y2="377.0" stroke="#ff5252"/><rect x="827.5" y="348.5" width="2" height="9.5" fill="none" stroke="#ff5252" stroke-width="1"/><line x1="828.5" y1="348.5" x2="828.5" y2="348.5" stroke="#ff5252"/><line x1="828.5" y1="358.0" x2="828.5" y2="367.5" stroke="#ff5252"/><line x1="833.5" y1="348.5" x2="833.5" y2="367.5" stroke="#ffffff"/><line x1="832" y1="358.0" x2="835" y2="358.0" stroke="#ffffff"/><line x1="838.5" y1="358.0" x2="838.5" y2="377.0" stroke="#00ffff"/><rect x="837" y="358.0" width="3" height="9.5" fill="#00ffff"/><line x1="843.5" y1="367.5" x2="843.5" y2="405.5" stroke="#00ffff"/><rect x="842" y="367.5" width="3" height="28.5" fill="#00ffff"/><line x1="848.5" y1="386.5" x2="848.5" y2="405.5" stroke="#00ffff"/><rect x="847" y="386.5" width="3" height="9.5" fill="#00ffff"/><line x1="853.5" y1="396.0" x2="853.5" y2="424.5" stroke="#00ffff"/><rect x="852" y="396.0" width="3" height="28.5" fill="#00ffff"/><rect x="857.5" y="386.5" width="2" height="28.5" fill="none" stroke="#ff5252" stroke-width="1"/><line x1="858.5" y1="386.5" x2="858.5" y2="386.5" stroke="#ff5252"/><line x1="858.5" y1="415.0" x2="858.5" y2="424.5" stroke="#ff5252"/><rect x="862.5" y="386.5" width="2" height="9.5" fill="none" stroke="#ff5252" stroke-width="1"/><line x1="863.5" y1="386.5" x2="863.5" y2="386.5" stroke="#ff5252"/><line x1="863.5" y1="396.0" x2="863.5" y2="405.5" stroke="#ff5252"/><line x1="868.5" y1="377.0" x2="868.5" y2="396.0" stroke="#ffffff"/><line x1="867" y1="386.5" x2="870" y2="386.5" stroke="#ffffff"/><line x1="873.5" y1="377.0" x2="873.5" y2="386.5" stroke="#ffffff"/><line x1="872" y1="386.5" x2="875" y2="386.5" stroke="#ffffff"/><line x1="878.5" y1="377.0" x2="878.5" y2="396.0" stroke="#ffffff"/><line x1="877" y1="386.5" x2="880" y2="386.5" stroke="#ffffff"/><line x1="883.5" y1="386.5" x2="883.5" y2="396.0" stroke="#00ffff"/><rect x="882" y="386.5" width="3" height="9.5" fill="#00ffff"/><line x1="888.5" y1="386.5" x2="888.5" y2="405.5" stroke="#00ffff"/><rect x="887" y="386.5" width="3" height="19.0" fill="#00ffff"/><line x1="893.5" y1="377.0" x2="893.5" y2="405.5" stroke="#ffffff"/><line x1="892" y1="386.5" x2="895" y2="386.5" stroke="#ffffff"/><line x1="898.5" y1="377.0" x2="898.5" y2="396.0" stroke="#00ffff"/><rect x="897" y="386.5" width="3" height="9.5" fill="#00ffff"/><line x1="903.5" y1="396.0" x2="903.5" y2="415.0" stroke="#00ffff"/><rect x="902" y="396.0" width="3" height="19.0" fill="#00ffff"/><line x1="908.5" y1="396.0" x2="908.5" y2="415.0" stroke="#ffffff"/><line x1="907" y1="405.5" x2="910" y2="405.5" stroke="#ffffff"/><line x1="913.5" y1="405.5" x2="913.5" y2="491.5" stroke="#00ffff"/><rect x="912" y="405.5" width="3" height="67.0" fill="#00ffff"/><rect x="917" y="472.5" width="3" height="48.0" fill="#ffff00"/><rect x="922" y="491.5" width="3" height="29.0" fill="#ffff00"/><rect x="927" y="491.5" width="3" height="29.0" fill="#ffff00"/><rect x="932" y="472.5" width="3" height="37.5" fill="#ffff00"/><line x1="938.5" y1="462.0" x2="938.5" y2="491.5" stroke="#00ffff"/><rect x="937" y="462.0" width="3" height="10.5" fill="#00ffff"/><rect x="942.5" y="453.0" width="2" height="19.5" fill="none" stroke="#ff5252" stroke-width="1"/><line x1="943.5" y1="453.0" x2="943.5" y2="453.0" stroke="#ff5252"/><line x1="943.5" y1="472.5" x2="943.5" y2="491.5" stroke="#ff5252"/><rect x="947.5" y="443.5" width="2" height="18.5" fill="none" stroke="#ff5252" stroke-width="1"/><line x1="948.5" y1="443.5" x2="948.5" y2="443.5" stroke="#ff5252"/><line x1="948.5" y1="462.0" x2="948.5" y2="462.0" stroke="#ff5252"/><line x1="953.5" y1="443.5" x2="953.5" y2="472.5" stroke="#00ffff"/><rect x="952" y="443.5" width="3" height="18.5" fill="#00ffff"/><line x1="958.5" y1="462.0" x2="958.5" y2="481.0" stroke="#00ffff"/><rect x="957" y="462.0" width="3" height="19.0" fill="#00ffff"/><line x1="963.5" y1="453.0" x2="963.5" y2="481.0" stroke="#ffffff"/><line x1="962" y1="472.5" x2="965" y2="472.5" stroke="#ffffff"/><rect x="967.5" y="453.0" width="2" height="19.5" fill="none" stroke="#ff5252" stroke-width="1"/><line x1="968.5" y1="453.0" x2="968.5" y2="453.0" stroke="#ff5252"/><line x1="968.5" y1="472.5" x2="968.5" y2="472.5" stroke="#ff5252"/><line x1="973.5" y1="453.0" x2="973.5" y2="462.0" stroke="#ffffff"/><line x1="972" y1="462.0" x2="975" y2="462.0" stroke="#ffffff"/><rect x="977.5" y="434.0" width="2" height="28.0" fill="none" stroke="#ff5252" stroke-width="1"/><line x1="978.5" y1="434.0" x2="978.5" y2="434.0" stroke="#ff5252"/><line x1="978.5" y1="462.0" x2="978.5" y2="462.0" stroke="#ff5252"/><line x1="983.5" y1="396.0" x2="983.5" y2="443.5" stroke="#00ffff"/><rect x="982" y="424.5" width="3" height="19.0" fill="#00ffff"/><line x1="988.5" y1="434.0" x2="988.5" y2="453.0" stroke="#ffffff"/><line x1="987" y1="443.5" x2="990" y2="443.5" stroke="#ffffff"/><rect x="992.5" y="424.5" width="2" height="9.5" fill="none" stroke="#ff5252" stroke-width="1"/><line x1="993.5" y1="415.0" x2="993.5" y2="424.5" stroke="#ff5252"/><line x1="993.5" y1="434.0" x2="993.5" y2="434.0" stroke="#ff5252"/><line x1="998.5" y1="415.0" x2="998.5" y2="434.0" stroke="#ffffff"/><line x1="997" y1="424.5" x2="1000" y2="424.5" stroke="#ffffff"/><line x1="1003.5" y1="415.0" x2="1003.5" y2="443.5" stroke="#00ffff"/><rect x="1002" y="424.5" width="3" height="19.0" fill="#00ffff"/><line x1="1008.5" y1="434.0" x2="1008.5" y2="443.5" stroke="#ffffff"/><line x1="1007" y1="434.0" x2="1010" y2="434.0" stroke="#ffffff"/><rect x="1012.5" y="415.0" width="2" height="19.0" fill="none" stroke="#ff5252" stroke-width="1"/><line x1="1013.5" y1="415.0" x2="1013.5" y2="415.0" stroke="#ff5252"/><line x1="1013.5" y1="434.0" x2="1013.5" y2="443.5" stroke="#ff5252"/><rect x="1017.5" y="405.5" width="2" height="19.0" fill="none" stroke="#ff5252" stroke-width="1"/><line x1="1018.5" y1="405.5" x2="1018.5" y2="405.5" stroke="#ff5252"/><line x1="1018.5" y1="424.5" x2="1018.5" y2="424.5" stroke="#ff5252"/><rect x="1022.5" y="396.0" width="2" height="9.5" fill="none" stroke="#ff5252" stroke-width="1"/><line x1="1023.5" y1="396.0" x2="1023.5" y2="396.0" stroke="#ff5252"/><line x1="1023.5" y1="405.5" x2="1023.5" y2="415.0" stroke="#ff5252"/><line x1="1028.5" y1="396.0" x2="1028.5" y2="415.0" stroke="#ffffff"/><line x1="1027" y1="405.5" x2="1030" y2="405.5" stroke="#ffffff"/><rect x="1032.5" y="396.0" width="2" height="19.0" fill="none" stroke="#ff5252" stroke-width="1"/><line x1="1033.5" y1="396.0" x2="1033.5" y2="396.0" stroke="#ff5252"/><line x1="1033.5" y1="415.0" x2="1033.5" y2="424.5" stroke="#ff5252"/><line x1="1038.5" y1="396.0" x2="1038.5" y2="415.0" stroke="#00ffff"/><rect x="1037" y="396.0" width="3" height="9.5" fill="#00ffff"/><line x1="1043.5" y1="396.0" x2="1043.5" y2="415.0" stroke="#00ffff"/><rect x="1042" y="396.0" width="3" height="9.5" fill="#00ffff"/><line x1="1048.5" y1="396.0" x2="1048.5" y2="405.5" stroke="#ffffff"/><line x1="1047" y1="396.0" x2="1050" y2="396.0" stroke="#ffffff"/><rect x="1052.5" y="386.5" width="2" height="9.5" fill="none" stroke="#ff5252" stroke-width="1"/><line x1="1053.5" y1="386.5" x2="1053.5" y2="386.5" stroke="#ff5252"/><line x1="1053.5" y1="396.0" x2="1053.5" y2="405.5" stroke="#ff5252"/><line x1="1058.5" y1="367.5" x2="1058.5" y2="396.0" stroke="#ffffff"/><line x1="1057" y1="396.0" x2="1060" y2="396.0" stroke="#ffffff"/><line x1="1063.5" y1="377.0" x2="1063.5" y2="424.5" stroke="#00ffff"/><rect x="1062" y="386.5" width="3" height="38.0" fill="#00ffff"/><line x1="1068.5" y1="424.5" x2="1068.5" y2="443.5" stroke="#00ffff"/><rect x="1067" y="424.5" width="3" height="19.0" fill="#00ffff"/><line x1="1073.5" y1="424.5" x2="1073.5" y2="453.0" stroke="#00ffff"/><rect x="1072" y="443.5" width="3" height="9.5" fill="#00ffff"/><rect x="1077.5" y="443.5" width="2" height="9.5" fill="none" stroke="#ff5252" stroke-width="1"/><line x1="1078.5" y1="443.5" x2="1078.5" y2="443.5" stroke="#ff5252"/><line x1="1078.5" y1="453.0" x2="1078.5" y2="453.0" stroke="#ff5252"/><line x1="1083.5" y1="424.5" x2="1083.5" y2="453.0" stroke="#ffffff"/><line x1="1082" y1="443.5" x2="1085" y2="443.5" stroke="#ffffff"/><rect x="1087.5" y="424.5" width="2" height="19.0" fill="none" stroke="#ff5252" stroke-width="1"/><line x1="1088.5" y1="424.5" x2="1088.5" y2="424.5" stroke="#ff5252"/><line x1="1088.5" y1="443.5" x2="1088.5" y2="443.5" stroke="#ff5252"/><line x1="1093.5" y1="424.5" x2="1093.5" y2="443.5" stroke="#00ffff"/><rect x="1092" y="424.5" width="3" height="19.0" fill="#00ffff"/><line x1="1098.5" y1="434.0" x2="1098.5" y2="453.0" stroke="#ffffff"/><line x1="1097" y1="443.5" x2="1100" y2="443.5" stroke="#ffffff"/><rect x="1102.5" y="443.5" width="2" height="9.5" fill="none" stroke="#ff5252" stroke-width="1"/><line x1="1103.5" y1="443.5" x2="1103.5" y2="443.5" stroke="#ff5252"/><line x1="1103.5" y1="453.0" x2="1103.5" y2="453.0" stroke="#ff5252"/><rect x="1107.5" y="434.0" width="2" height="9.5" fill="none" stroke="#ff5252" stroke-width="1"/><line x1="1108.5" y1="434.0" x2="1108.5" y2="434.0" stroke="#ff5252"/><line x1="1108.5" y1="443.5" x2="1108.5" y2="443.5" stroke="#ff5252"/><line x1="1113.5" y1="424.5" x2="1113.5" y2="443.5" stroke="#ffffff"/><line x1="1112" y1="443.5" x2="1115" y2="443.5" stroke="#ffffff"/><rect x="1117.5" y="415.0" width="2" height="19.0" fill="none" stroke="#ff5252" stroke-width="1"/><line x1="1118.5" y1="415.0" x2="1118.5" y2="415.0" stroke="#ff5252"/><line x1="1118.5" y1="434.0" x2="1118.5" y2="434.0" stroke="#ff5252"/><line x1="1123.5" y1="415.0" x2="1123.5" y2="424.5" stroke="#00ffff"/><rect x="1122" y="415.0" width="3" height="9.5" fill="#00ffff"/><rect x="1127.5" y="405.5" width="2" height="9.5" fill="none" stroke="#ff5252" stroke-width="1"/><line x1="1128.5" y1="396.0" x2="1128.5" y2="405.5" stroke="#ff5252"/><line x1="1128.5" y1="415.0" x2="1128.5" y2="415.0" stroke="#ff5252"/><line x1="1133.5" y1="386.5" x2="1133.5" y2="434.0" stroke="#00ffff"/><rect x="1132" y="415.0" width="3" height="19.0" fill="#00ffff"/><rect x="1137.5" y="396.0" width="2" height="38.0" fill="none" stroke="#ff5252" stroke-width="1"/><line x1="1138.5" y1="386.5" x2="1138.5" y2="396.0" stroke="#ff5252"/><line x1="1138.5" y1="434.0" x2="1138.5" y2="443.5" stroke="#ff5252"/><line x1="1143.5" y1="377.0" x2="1143.5" y2="434.0" stroke="#ffffff"/><line x1="1142" y1="396.0" x2="1145" y2="396.0" stroke="#ffffff"/><rect x="1147.5" y="386.5" width="2" height="9.5" fill="none" stroke="#ff5252" stroke-width="1"/><line x1="1148.5" y1="377.0" x2="1148.5" y2="386.5" stroke="#ff5252"/><line x1="1148.5" y1="396.0" x2="1148.5" y2="415.0" stroke="#ff5252"/><rect x="1152.5" y="377.0" width="2" height="9.5" fill="none" stroke="#ff5252" stroke-width="1"/><line x1="1153.5" y1="367.5" x2="1153.5" y2="377.0" stroke="#ff5252"/><line x1="1153.5" y1="386.5" x2="1153.5" y2="405.5" stroke="#ff5252"/><line x1="1158.5" y1="358.0" x2="1158.5" y2="386.5" stroke="#ffffff"/><line x1="1157" y1="367.5" x2="1160" y2="367.5" stroke="#ffffff"/><rect x="1162.5" y="339.0" width="2" height="28.5" fill="none" stroke="#ff5252" stroke-width="1"/><line x1="1163.5" y1="339.0" x2="1163.5" y2="339.0" stroke="#ff5252"/><line x1="1163.5" y1="367.5" x2="1163.5" y2="386.5" stroke="#ff5252"/><line x1="1168.5" y1="329.5" x2="1168.5" y2="358.0" stroke="#00ffff"/><rect x="1167" y="339.0" width="3" height="9.5" fill="#00ffff"/><rect x="1172.5" y="339.0" width="2" height="19.0" fill="none" stroke="#ff5252" stroke-width="1"/><line x1="1173.5" y1="339.0" x2="1173.5" y2="339.0" stroke="#ff5252"/><line x1="1173.5" y1="358.0" x2="1173.5" y2="358.0" stroke="#ff5252"/><rect x="1177.5" y="339.0" width="2" height="9.5" fill="none" stroke="#ff5252" stroke-width="1"/><line x1="1178.5" y1="329.5" x2="1178.5" y2="339.0" stroke="#ff5252"/><line x1="1178.5" y1="348.5" x2="1178.5" y2="348.5" stroke="#ff5252"/><rect x="1182.5" y="339.0" width="2" height="9.5" fill="none" stroke="#ff5252" stroke-width="1"/><line x1="1183.5" y1="329.5" x2="1183.5" y2="339.0" stroke="#ff5252"/><line x1="1183.5" y1="348.5" x2="1183.5" y2="348.5" stroke="#ff5252"/><line x1="1188.5" y1="329.5" x2="1188.5" y2="348.5" stroke="#00ffff"/><rect x="1187" y="339.0" width="3" height="9.5" fill="#00ffff"/><rect x="1192.5" y="339.0" width="2" height="9.5" fill="none" stroke="#ff5252" stroke-width="1"/><line x1="1193.5" y1="329.5" x2="1193.5" y2="339.0" stroke="#ff5252"/><line x1="1193.5" y1="348.5" x2="1193.5" y2="358.0" stroke="#ff5252"/><line x1="1198.5" y1="329.5" x2="1198.5" y2="339.0" stroke="#00ffff"/><rect x="1197" y="329.5" width="3" height="9.5" fill="#00ffff"/><line x1="1203.5" y1="339.0" x2="1203.5" y2="348.5" stroke="#ffffff"/><line x1="1202" y1="343.0" x2="1205" y2="343.0" stroke="#ffffff"/><line x1="1208.5" y1="339.0" x2="1208.5" y2="358.0" stroke="#00ffff"/><rect x="1207" y="339.0" width="3" height="9.5" fill="#00ffff"/><line x1="1213.5" y1="339.0" x2="1213.5" y2="358.0" stroke="#00ffff"/><rect x="1212" y="348.5" width="3" height="9.5" fill="#00ffff"/><line x1="1218.5" y1="348.5" x2="1218.5" y2="358.0" stroke="#ffffff"/><line x1="1217" y1="348.5" x2="1220" y2="348.5" stroke="#ffffff"/><line x1="1223.5" y1="348.5" x2="1223.5" y2="358.0" stroke="#00ffff"/><rect x="1222" y="348.5" width="3" height="9.5" fill="#00ffff"/><line x1="1228.5" y1="348.5" x2="1228.5" y2="367.5" stroke="#00ffff"/><rect x="1227" y="348.5" width="3" height="9.5" fill="#00ffff"/><rect x="1232.5" y="339.0" width="2" height="19.0" fill="none" stroke="#ff5252" stroke-width="1"/><line x1="1233.5" y1="339.0" x2="1233.5" y2="339.0" stroke="#ff5252"/><line x1="1233.5" y1="358.0" x2="1233.5" y2="358.0" stroke="#ff5252"/><line x1="1238.5" y1="339.0" x2="1238.5" y2="358.0" stroke="#00ffff"/><rect x="1237" y="339.0" width="3" height="19.0" fill="#00ffff"/><line x1="1243.5" y1="348.5" x2="1243.5" y2="367.5" stroke="#00ffff"/><rect x="1242" y="358.0" width="3" height="9.5" fill="#00ffff"/><rect x="1247.5" y="358.0" width="2" height="9.5" fill="none" stroke="#ff5252" stroke-width="1"/><line x1="1248.5" y1="358.0" x2="1248.5" y2="358.0" stroke="#ff5252"/><line x1="1248.5" y1="367.5" x2="1248.5" y2="367.5" stroke="#ff5252"/><rect x="1252.5" y="358.0" width="2" height="9.5" fill="none" stroke="#ff5252" stroke-width="1"/><line x1="1253.5" y1="358.0" x2="1253.5" y2="358.0" stroke="#ff5252"/><line x1="1253.5" y1="367.5" x2="1253.5" y2="367.5" stroke="#ff5252"/><line x1="1258.5" y1="358.0" x2="1258.5" y2="377.0" stroke="#00ffff"/><rect x="1257" y="358.0" width="3" height="9.5" fill="#00ffff"/><line x1="1263.5" y1="367.5" x2="1263.5" y2="386.5" stroke="#ffffff"/><line x1="1262" y1="377.0" x2="1265" y2="377.0" stroke="#ffffff"/><rect x="1267.5" y="358.0" width="2" height="19.0" fill="none" stroke="#ff5252" stroke-width="1"/><line x1="1268.5" y1="358.0" x2="1268.5" y2="358.0" stroke="#ff5252"/><line x1="1268.5" y1="377.0" x2="1268.5" y2="377.0" stroke="#ff5252"/><line x1="1273.5" y1="358.0" x2="1273.5" y2="367.5" stroke="#ffffff"/><line x1="1272" y1="358.0" x2="1275" y2="358.0" stroke="#ffffff"/><line x1="1278.5" y1="358.0" x2="1278.5" y2="377.0" stroke="#00ffff"/><rect x="1277" y="358.0" width="3" height="9.5" fill="#00ffff"/><line x1="1283.5" y1="367.5" x2="1283.5" y2="377.0" stroke="#ffffff"/><line x1="1282" y1="367.5" x2="1285" y2="367.5" stroke="#ffffff"/><line x1="1288.5" y1="367.5" x2="1288.5" y2="377.0" stroke="#ffffff"/><line x1="1287" y1="367.5" x2="1290" y2="367.5" stroke="#ffffff"/><rect x="1292.5" y="358.0" width="2" height="9.5" fill="none" stroke="#ff5252" stroke-width="1"/><line x1="1293.5" y1="358.0" x2="1293.5" y2="358.0" stroke="#ff5252"/><line x1="1293.5" y1="367.5" x2="1293.5" y2="377.0" stroke="#ff5252"/><line x1="1298.5" y1="358.0" x2="1298.5" y2="367.5" stroke="#ffffff"/><line x1="1297" y1="367.5" x2="1300" y2="367.5" stroke="#ffffff"/><line x1="1303.5" y1="358.0" x2="1303.5" y2="377.0" stroke="#00ffff"/><rect x="1302" y="358.0" width="3" height="9.5" fill="#00ffff"/><line x1="1308.5" y1="367.5" x2="1308.5" y2="377.0" stroke="#00ffff"/><rect x="1307" y="367.5" width="3" height="4.5" fill="#00ffff"/><line x1="1313.5" y1="367.5" x2="1313.5" y2="377.0" stroke="#ffffff"/><line x1="1312" y1="367.5" x2="1315" y2="367.5" stroke="#ffffff"/><rect x="1317" y="372.0" width="3" height="5.0" fill="#ffff00"/><rect x="1322" y="372.0" width="3" height="5.0" fill="#ffff00"/><line x1="1328.5" y1="372.0" x2="1328.5" y2="386.5" stroke="#00ffff"/><rect x="1327" y="372.0" width="3" height="14.5" fill="#00ffff"/><line x1="1333.5" y1="234.5" x2="1333.5" y2="339.0" stroke="#00ffff"/><rect x="1332" y="310.5" width="3" height="19.0" fill="#00ffff"/><rect x="1337.5" y="310.5" width="2" height="28.5" fill="none" stroke="#ff5252" stroke-width="1"/><line x1="1338.5" y1="301.0" x2="1338.5" y2="310.5" stroke="#ff5252"/><line x1="1338.5" y1="339.0" x2="1338.5" y2="339.0" stroke="#ff5252"/><rect x="1342.5" y="272.5" width="2" height="28.5" fill="none" stroke="#ff5252" stroke-width="1"/><line x1="1343.5" y1="263.0" x2="1343.5" y2="272.5" stroke="#ff5252"/><line x1="1343.5" y1="301.0" x2="1343.5" y2="310.5" stroke="#ff5252"/><line x1="1348.5" y1="253.5" x2="1348.5" y2="291.5" stroke="#ffffff"/><line x1="1347" y1="272.5" x2="1350" y2="272.5" stroke="#ffffff"/><line x1="1353.5" y1="263.0" x2="1353.5" y2="301.0" stroke="#00ffff"/><rect x="1352" y="272.5" width="3" height="9.5" fill="#00ffff"/><line x1="1358.5" y1="272.5" x2="1358.5" y2="291.5" stroke="#ffffff"/><line x1="1357" y1="272.5" x2="1360" y2="272.5" stroke="#ffffff"/><rect x="1362.5" y="272.5" width="2" height="9.5" fill="none" stroke="#ff5252" stroke-width="1"/><line x1="1363.5" y1="263.0" x2="1363.5" y2="272.5" stroke="#ff5252"/><line x1="1363.5" y1="282.0" x2="1363.5" y2="282.0" stroke="#ff5252"/><rect x="1367.5" y="272.5" width="2" height="9.5" fill="none" stroke="#ff5252" stroke-width="1"/><line x1="1368.5" y1="263.0" x2="1368.5" y2="272.5" stroke="#ff5252"/><line x1="1368.5" y1="282.0" x2="1368.5" y2="282.0" stroke="#ff5252"/><rect x="1372.5" y="263.0" width="2" height="19.0" fill="none" stroke="#ff5252" stroke-width="1"/><line x1="1373.5" y1="253.5" x2="1373.5" y2="263.0" stroke="#ff5252"/><line x1="1373.5" y1="282.0" x2="1373.5" y2="282.0" stroke="#ff5252"/><rect x="1377.5" y="244.0" width="2" height="19.0" fill="none" stroke="#ff5252" stroke-width="1"/><line x1="1378.5" y1="244.0" x2="1378.5" y2="244.0" stroke="#ff5252"/><line x1="1378.5" y1="263.0" x2="1378.5" y2="263.0" stroke="#ff5252"/><line x1="1383.5" y1="244.0" x2="1383.5" y2="272.5" stroke="#00ffff"/><rect x="1382" y="244.0" width="3" height="28.5" fill="#00ffff"/><line x1="1388.5" y1="253.5" x2="1388.5" y2="301.0" stroke="#00ffff"/><rect x="1387" y="253.5" width="3" height="47.5" fill="#00ffff"/><line x1="1393.5" y1="282.0" x2="1393.5" y2="310.5" stroke="#00ffff"/><rect x="1392" y="301.0" width="3" height="9.5" fill="#00ffff"/><line x1="1398.5" y1="301.0" x2="1398.5" y2="320.0" stroke="#ffffff"/><line x1="1397" y1="310.5" x2="1400" y2="310.5" stroke="#ffffff"/><line x1="1403.5" y1="301.0" x2="1403.5" y2="310.5" stroke="#ffffff"/><line x1="1402" y1="301.0" x2="1405" y2="301.0" stroke="#ffffff"/><line x1="1408.5" y1="301.0" x2="1408.5" y2="329.5" stroke="#00ffff"/><rect x="1407" y="301.0" width="3" height="28.5" fill="#00ffff"/><line x1="1413.5" y1="310.5" x2="1413.5" y2="329.5" stroke="#ffffff"/><line x1="1412" y1="320.0" x2="1415" y2="320.0" stroke="#ffffff"/><line x1="1418.5" y1="310.5" x2="1418.5" y2="339.0" stroke="#00ffff"/><rect x="1417" y="320.0" width="3" height="9.5" fill="#00ffff"/><rect x="1422.5" y="329.5" width="2" height="9.5" fill="none" stroke="#ff5252" stroke-width="1"/><line x1="1423.5" y1="310.5" x2="1423.5" y2="329.5" stroke="#ff5252"/><line x1="1423.5" y1="339.0" x2="1423.5" y2="339.0" stroke="#ff5252"/><line x1="1428.5" y1="329.5" x2="1428.5" y2="348.5" stroke="#00ffff"/><rect x="1427" y="339.0" width="3" height="9.5" fill="#00ffff"/><line x1="1433.5" y1="329.5" x2="1433.5" y2="358.0" stroke="#00ffff"/><rect x="1432" y="339.0" width="3" height="19.0" fill="#00ffff"/><rect x="1437.5" y="348.5" width="2" height="9.5" fill="none" stroke="#ff5252" stroke-width="1"/><line x1="1438.5" y1="348.5" x2="1438.5" y2="348.5" stroke="#ff5252"/><line x1="1438.5" y1="358.0" x2="1438.5" y2="358.0" stroke="#ff5252"/><rect x="1442.5" y="348.5" width="2" height="9.5" fill="none" stroke="#ff5252" stroke-width="1"/><line x1="1443.5" y1="339.0" x2="1443.5" y2="348.5" stroke="#ff5252"/><line x1="1443.5" y1="358.0" x2="1443.5" y2="358.0" stroke="#ff5252"/><line x1="1448.5" y1="348.5" x2="1448.5" y2="367.5" stroke="#ffffff"/><line x1="1447" y1="348.5" x2="1450" y2="348.5" stroke="#ffffff"/><rect x="1452.5" y="329.5" width="2" height="28.5" fill="none" stroke="#ff5252" stroke-width="1"/><line x1="1453.5" y1="329.5" x2="1453.5" y2="329.5" stroke="#ff5252"/><line x1="1453.5" y1="358.0" x2="1453.5" y2="358.0" stroke="#ff5252"/><line x1="1458.5" y1="310.5" x2="1458.5" y2="348.5" stroke="#ffffff"/><line x1="1457" y1="339.0" x2="1460" y2="339.0" stroke="#ffffff"/><rect x="1462.5" y="329.5" width="2" height="9.5" fill="none" stroke="#ff5252" stroke-width="1"/><line x1="1463.5" y1="320.0" x2="1463.5" y2="329.5" stroke="#ff5252"/><line x1="1463.5" y1="339.0" x2="1463.5" y2="339.0" stroke="#ff5252"/><line x1="1468.5" y1="329.5" x2="1468.5" y2="348.5" stroke="#00ffff"/><rect x="1467" y="329.5" width="3" height="9.5" fill="#00ffff"/><line x1="1473.5" y1="339.0" x2="1473.5" y2="358.0" stroke="#00ffff"/><rect x="1472" y="348.5" width="3" height="9.5" fill="#00ffff"/><line x1="1478.5" y1="348.5" x2="1478.5" y2="358.0" stroke="#00ffff"/><rect x="1477" y="348.5" width="3" height="9.5" fill="#00ffff"/><rect x="1482.5" y="358.0" width="2" height="9.5" fill="none" stroke="#ff5252" stroke-width="1"/><line x1="1483.5" y1="348.5" x2="1483.5" y2="358.0" stroke="#ff5252"/><line x1="1483.5" y1="367.5" x2="1483.5" y2="367.5" stroke="#ff5252"/><rect x="1487.5" y="320.0" width="2" height="38.0" fill="none" stroke="#ff5252" stroke-width="1"/><line x1="1488.5" y1="320.0" x2="1488.5" y2="320.0" stroke="#ff5252"/><line x1="1488.5" y1="358.0" x2="1488.5" y2="367.5" stroke="#ff5252"/><line x1="1493.5" y1="320.0" x2="1493.5" y2="348.5" stroke="#00ffff"/><rect x="1492" y="320.0" width="3" height="19.0" fill="#00ffff"/><line x1="1498.5" y1="329.5" x2="1498.5" y2="339.0" stroke="#ffffff"/><line x1="1497" y1="339.0" x2="1500" y2="339.0" stroke="#ffffff"/><line x1="1503.5" y1="329.5" x2="1503.5" y2="339.0" stroke="#ffffff"/><line x1="1502" y1="329.5" x2="1505" y2="329.5" stroke="#ffffff"/><line x1="1508.5" y1="329.5" x2="1508.5" y2="348.5" stroke="#00ffff"/><rect x="1507" y="329.5" width="3" height="9.5" fill="#00ffff"/><line x1="1513.5" y1="320.0" x2="1513.5" y2="339.0" stroke="#00ffff"/><rect x="1512" y="329.5" width="3" height="9.5" fill="#00ffff"/><rect x="1517.5" y="320.0" width="2" height="9.5" fill="none" stroke="#ff5252" stroke-width="1"/><line x1="1518.5" y1="320.0" x2="1518.5" y2="320.0" stroke="#ff5252"/><line x1="1518.5" y1="329.5" x2="1518.5" y2="339.0" stroke="#ff5252"/><line x1="1523.5" y1="320.0" x2="1523.5" y2="339.0" stroke="#00ffff"/><rect x="1522" y="320.0" width="3" height="9.5" fill="#00ffff"/><line x1="1528.5" y1="320.0" x2="1528.5" y2="329.5" stroke="#ffffff"/><line x1="1527" y1="320.0" x2="1530" y2="320.0" stroke="#ffffff"/><rect x="1532.5" y="310.5" width="2" height="19.0" fill="none" stroke="#ff5252" stroke-width="1"/><line x1="1533.5" y1="310.5" x2="1533.5" y2="310.5" stroke="#ff5252"/><line x1="1533.5" y1="329.5" x2="1533.5" y2="329.5" stroke="#ff5252"/><line x1="1538.5" y1="310.5" x2="1538.5" y2="320.0" stroke="#ffffff"/><line x1="1537" y1="310.5" x2="1540" y2="310.5" stroke="#ffffff"/><line x1="1543.5" y1="301.0" x2="1543.5" y2="329.5" stroke="#00ffff"/><rect x="1542" y="320.0" width="3" height="9.5" fill="#00ffff"/><rect x="1547.5" y="310.5" width="2" height="19.0" fill="none" stroke="#ff5252" stroke-width="1"/><line x1="1548.5" y1="310.5" x2="1548.5" y2="310.5" stroke="#ff5252"/><line x1="1548.5" y1="329.5" x2="1548.5" y2="329.5" stroke="#ff5252"/><line x1="1553.5" y1="310.5" x2="1553.5" y2="339.0" stroke="#00ffff"/><rect x="1552" y="320.0" width="3" height="9.5" fill="#00ffff"/><line x1="1558.5" y1="310.5" x2="1558.5" y2="329.5" stroke="#00ffff"/><rect x="1557" y="320.0" width="3" height="9.5" fill="#00ffff"/><rect x="1562.5" y="310.5" width="2" height="9.5" fill="none" stroke="#ff5252" stroke-width="1"/><line x1="1563.5" y1="310.5" x2="1563.5" y2="310.5" stroke="#ff5252"/><line x1="1563.5" y1="320.0" x2="1563.5" y2="324.0" stroke="#ff5252"/><line x1="1568.5" y1="310.5" x2="1568.5" y2="320.0" stroke="#00ffff"/><rect x="1567" y="310.5" width="3" height="9.5" fill="#00ffff"/><rect x="1572.5" y="301.0" width="2" height="9.5" fill="none" stroke="#ff5252" stroke-width="1"/><line x1="1573.5" y1="301.0" x2="1573.5" y2="301.0" stroke="#ff5252"/><line x1="1573.5" y1="310.5" x2="1573.5" y2="320.0" stroke="#ff5252"/><rect x="1577.5" y="291.5" width="2" height="9.5" fill="none" stroke="#ff5252" stroke-width="1"/><line x1="1578.5" y1="291.5" x2="1578.5" y2="291.5" stroke="#ff5252"/><line x1="1578.5" y1="301.0" x2="1578.5" y2="301.0" stroke="#ff5252"/><rect x="1582.5" y="272.5" width="2" height="19.0" fill="none" stroke="#ff5252" stroke-width="1"/><line x1="1583.5" y1="263.0" x2="1583.5" y2="272.5" stroke="#ff5252"/><line x1="1583.5" y1="291.5" x2="1583.5" y2="301.0" stroke="#ff5252"/><rect x="1587.5" y="263.0" width="2" height="9.5" fill="none" stroke="#ff5252" stroke-width="1"/><line x1="1588.5" y1="244.0" x2="1588.5" y2="263.0" stroke="#ff5252"/><line x1="1588.5" y1="272.5" x2="1588.5" y2="282.0" stroke="#ff5252"/><line x1="1593.5" y1="244.0" x2="1593.5" y2="263.0" stroke="#ffffff"/><line x1="1592" y1="263.0" x2="1595" y2="263.0" stroke="#ffffff"/><line x1="1598.5" y1="253.5" x2="1598.5" y2="272.5" stroke="#00ffff"/><rect x="1597" y="253.5" width="3" height="19.0" fill="#00ffff"/><line x1="1603.5" y1="263.0" x2="1603.5" y2="282.0" stroke="#ffffff"/><line x1="1602" y1="272.5" x2="1605" y2="272.5" stroke="#ffffff"/><rect x="1607.5" y="253.5" width="2" height="9.5" fill="none" stroke="#ff5252" stroke-width="1"/><line x1="1608.5" y1="253.5" x2="1608.5" y2="253.5" stroke="#ff5252"/><line x1="1608.5" y1="263.0" x2="1608.5" y2="272.5" stroke="#ff5252"/><line x1="1613.5" y1="253.5" x2="1613.5" y2="272.5" stroke="#00ffff"/><rect x="1612" y="253.5" width="3" height="19.0" fill="#00ffff"/><line x1="1618.5" y1="263.0" x2="1618.5" y2="272.5" stroke="#00ffff"/><rect x="1617" y="263.0" width="3" height="9.5" fill="#00ffff"/><rect x="1622.5" y="244.0" width="2" height="19.0" fill="none" stroke="#ff5252" stroke-width="1"/><line x1="1623.5" y1="244.0" x2="1623.5" y2="244.0" stroke="#ff5252"/><line x1="1623.5" y1="263.0" x2="1623.5" y2="272.5" stroke="#ff5252"/><rect x="1627.5" y="234.5" width="2" height="19.0" fill="none" stroke="#ff5252" stroke-width="1"/><line x1="1628.5" y1="234.5" x2="1628.5" y2="234.5" stroke="#ff5252"/><line x1="1628.5" y1="253.5" x2="1628.5" y2="253.5" stroke="#ff5252"/><line x1="1633.5" y1="206.0" x2="1633.5" y2="244.0" stroke="#ffffff"/><line x1="1632" y1="234.5" x2="1635" y2="234.5" stroke="#ffffff"/><rect x="1637.5" y="225.0" width="2" height="9.5" fill="none" stroke="#ff5252" stroke-width="1"/><line x1="1638.5" y1="215.5" x2="1638.5" y2="225.0" stroke="#ff5252"/><line x1="1638.5" y1="234.5" x2="1638.5" y2="234.5" stroke="#ff5252"/><rect x="1642.5" y="215.5" width="2" height="9.5" fill="none" stroke="#ff5252" stroke-width="1"/><line x1="1643.5" y1="215.5" x2="1643.5" y2="215.5" stroke="#ff5252"/><line x1="1643.5" y1="225.0" x2="1643.5" y2="225.0" stroke="#ff5252"/><rect x="1647.5" y="158.5" width="2" height="66.5" fill="none" stroke="#ff5252" stroke-width="1"/><line x1="1648.5" y1="158.5" x2="1648.5" y2="158.5" stroke="#ff5252"/><line x1="1648.5" y1="225.0" x2="1648.5" y2="225.0" stroke="#ff5252"/><line x1="1653.5" y1="149.0" x2="1653.5" y2="187.0" stroke="#00ffff"/><rect x="1652" y="168.0" width="3" height="9.5" fill="#00ffff"/><rect x="1657.5" y="158.5" width="2" height="19.0" fill="none" stroke="#ff5252" stroke-width="1"/><line x1="1658.5" y1="158.5" x2="1658.5" y2="158.5" stroke="#ff5252"/><line x1="1658.5" y1="177.5" x2="1658.5" y2="177.5" stroke="#ff5252"/><rect x="1662.5" y="149.0" width="2" height="19.0" fill="none" stroke="#ff5252" stroke-width="1"/><line x1="1663.5" y1="139.5" x2="1663.5" y2="149.0" stroke="#ff5252"/><line x1="1663.5" y1="168.0" x2="1663.5" y2="168.0" stroke="#ff5252"/><line x1="1668.5" y1="158.5" x2="1668.5" y2="196.5" stroke="#00ffff"/><rect x="1667" y="158.5" width="3" height="9.5" fill="#00ffff"/><line x1="1673.5" y1="149.0" x2="1673.5" y2="168.0" stroke="#ffffff"/><line x1="1672" y1="158.5" x2="1675" y2="158.5" stroke="#ffffff"/><line x1="1678.5" y1="149.0" x2="1678.5" y2="168.0" stroke="#ffffff"/><line x1="1677" y1="158.5" x2="1680" y2="158.5" stroke="#ffffff"/><rect x="1682.5" y="139.5" width="2" height="28.5" fill="none" stroke="#ff5252" stroke-width="1"/><line x1="1683.5" y1="130.0" x2="1683.5" y2="139.5" stroke="#ff5252"/><line x1="1683.5" y1="168.0" x2="1683.5" y2="168.0" stroke="#ff5252"/><line x1="1688.5" y1="139.5" x2="1688.5" y2="168.0" stroke="#00ffff"/><rect x="1687" y="139.5" width="3" height="9.5" fill="#00ffff"/><rect x="1692.5" y="139.5" width="2" height="9.5" fill="none" stroke="#ff5252" stroke-width="1"/><line x1="1693.5" y1="130.0" x2="1693.5" y2="139.5" stroke="#ff5252"/><line x1="1693.5" y1="149.0" x2="1693.5" y2="149.0" stroke="#ff5252"/><rect x="1697.5" y="111.0" width="2" height="28.5" fill="none" stroke="#ff5252" stroke-width="1"/><line x1="1698.5" y1="111.0" x2="1698.5" y2="111.0" stroke="#ff5252"/><line x1="1698.5" y1="139.5" x2="1698.5" y2="139.5" stroke="#ff5252"/><line x1="1703.5" y1="101.5" x2="1703.5" y2="130.0" stroke="#ffffff"/><line x1="1702" y1="120.5" x2="1705" y2="120.5" stroke="#ffffff"/><rect x="1707.5" y="92.0" width="2" height="47.5" fill="none" stroke="#ff5252" stroke-width="1"/><line x1="1708.5" y1="92.0" x2="1708.5" y2="92.0" stroke="#ff5252"/><line x1="1708.5" y1="139.5" x2="1708.5" y2="139.5" stroke="#ff5252"/><line x1="1713.5" y1="63.5" x2="1713.5" y2="101.5" stroke="#ffffff"/><line x1="1712" y1="82.5" x2="1715" y2="82.5" stroke="#ffffff"/><rect x="1717.5" y="35.0" width="2" height="57.0" fill="none" stroke="#ff5252" stroke-width="1"/><line x1="1718.5" y1="35.0" x2="1718.5" y2="35.0" stroke="#ff5252"/><line x1="1718.5" y1="92.0" x2="1718.5" y2="92.0" stroke="#ff5252"/><line x1="1723.5" y1="35.0" x2="1723.5" y2="82.5" stroke="#00ffff"/><rect x="1722" y="44.5" width="3" height="9.5" fill="#00ffff"/><rect x="1727.5" y="44.5" width="2" height="19.0" fill="none" stroke="#ff5252" stroke-width="1"/><line x1="1728.5" y1="44.5" x2="1728.5" y2="44.5" stroke="#ff5252"/><line x1="1728.5" y1="63.5" x2="1728.5" y2="63.5" stroke="#ff5252"/><line x1="1733.5" y1="44.5" x2="1733.5" y2="87.5" stroke="#00ffff"/><rect x="1732" y="44.5" width="3" height="28.5" fill="#00ffff"/><rect x="1737.5" y="63.5" width="2" height="19.0" fill="none" stroke="#ff5252" stroke-width="1"/><line x1="1738.5" y1="63.5" x2="1738.5" y2="63.5" stroke="#ff5252"/><line x1="1738.5" y1="82.5" x2="1738.5" y2="82.5" stroke="#ff5252"/><line x1="1743.5" y1="63.5" x2="1743.5" y2="92.0" stroke="#00ffff"/><rect x="1742" y="63.5" width="3" height="28.5" fill="#00ffff"/><rect x="1747.5" y="82.5" width="2" height="9.5" fill="none" stroke="#ff5252" stroke-width="1"/><line x1="1748.5" y1="82.5" x2="1748.5" y2="82.5" stroke="#ff5252"/><line x1="1748.5" y1="92.0" x2="1748.5" y2="92.0" stroke="#ff5252"/><rect x="1752.5" y="82.5" width="2" height="9.5" fill="none" stroke="#ff5252" stroke-width="1"/><line x1="1753.5" y1="82.5" x2="1753.5" y2="82.5" stroke="#ff5252"/><line x1="1753.5" y1="92.0" x2="1753.5" y2="92.0" stroke="#ff5252"/><rect x="1757.5" y="63.5" width="2" height="19.0" fill="none" stroke="#ff5252" stroke-width="1"/><line x1="1758.5" y1="54.0" x2="1758.5" y2="63.5" stroke="#ff5252"/><line x1="1758.5" y1="82.5" x2="1758.5" y2="82.5" stroke="#ff5252"/><line x1="1763.5" y1="54.0" x2="1763.5" y2="63.5" stroke="#00ffff"/><rect x="1762" y="54.0" width="3" height="9.5" fill="#00ffff"/><line x1="1768.5" y1="54.0" x2="1768.5" y2="63.5" stroke="#00ffff"/><rect x="1767" y="54.0" width="3" height="9.5" fill="#00ffff"/><line x1="1773.5" y1="54.0" x2="1773.5" y2="63.5" stroke="#00ffff"/><rect x="1772" y="54.0" width="3" height="9.5" fill="#00ffff"/><rect x="912" y="472.5" width="3" height="19.0" fill="#ffff00"/><rect x="937" y="472.5" width="3" height="19.0" fill="#ffff00"/><rect x="942" y="481" width="3" height="10.5" fill="#ffff00"/><rect x="137" y="415" width="3" height="9.5" fill="#ffff00"/><rect x="272" y="372" width="3" height="5" fill="#ffff00"/><rect x="1132" y="434" width="3" height="9.5" fill="#ffff00"/><rect x="1307" y="372" width="3" height="5" fill="#ffff00"/><rect x="1482" y="363" width="3" height="4.5" fill="#ffff00"/><rect x="1477" y="363" width="3" height="4.5" fill="#ffff00"/></g>
<polyline points="2.0,390.4 3.0,390.6 4.0,390.8 5.0,391.1 6.0,391.4 7.0,391.8 8.0,392.1 9.0,392.5 10.0,392.9 11.0,393.2 12.0,393.6 13.0,394.0 14.0,394.3 15.0,394.7 16.0,395.1 17.0,395.5 18.0,395.8 19.0,396.2 20.0,396.6 21.0,396.9 22.0,397.3 23.0,397.6 24.0,398.0 25.0,398.3 26.0,398.7 27.0,399.0 28.0,399.4 29.0,399.7 30.0,400.1 31.0,400.5 32.0,400.8 33.0,401.2 34.0,401.5 35.0,401.9 36.0,402.2 37.0,402.5 38.0,402.9 39.0,403.2 40.0,403.6 41.0,403.9 42.0,404.3 43.0,404.6 44.0,405.0 45.0,405.3 46.0,405.6 47.0,406.0 48.0,406.3 49.0,406.6 50.0,406.9 51.0,407.3 52.0,407.6 53.0,407.9 54.0,408.2 55.0,408.6 56.0,408.9 57.0,409.2 58.0,409.5 59.0,409.9 60.0,410.2 61.0,410.5 62.0,410.8 63.0,411.1 64.0,411.4 65.0,411.7 66.0,412.0 67.0,412.2 68.0,412.4 69.0,412.6 70.0,412.8 71.0,413.0 72.0,413.2 73.0,413.4 74.0,413.5 75.0,413.7 76.0,413.9 77.0,414.1 78.0,414.2 79.0,414.4 80.0,414.6 81.0,414.8 82.0,414.9 83.0,415.1 84.0,415.3 85.0,415.4 86.0,415.6 87.0,415.7 88.0,415.8 89.0,415.9 90.0,416.0 91.0,416.1 92.0,416.2 93.0,416.2 94.0,416.3 95.0,416.3 96.0,416.4 97.0,416.4 98.0,416.5 99.0,416.5 100.0,416.6 101.0,416.6 102.0,416.7 103.0,416.7 104.0,416.8 105.0,416.8 106.0,416.9 107.0,416.9 108.0,416.9 109.0,417.0 110.0,417.0 111.0,417.0 112.0,417.0 113.0,416.9 114.0,416.9 115.0,416.9 116.0,416.8 117.0,416.8 118.0,416.7 119.0,416.7 120.0,416.6 121.0,416.6 122.0,416.5 123.0,416.5 124.0,416.4 125.0,416.4 126.0,416.3 127.0,416.3 128.0,416.2 129.0,416.2 130.0,416.1 131.0,416.0 132.0,415.9 133.0,415.9 134.0,415.8 135.0,415.7 136.0,415.5 137.0,415.4 138.0,415.3 139.0,415.2 140.0,415.0 141.0,414.9 142.0,414.8 143.0,414.7 144.0,414.5 145.0,414.4 146.0,414.3 147.0,414.1 148.0,414.0 149.0,413.8 150.0,413.6 151.0,413.4 152.0,413.2 153.0,412.9 154.0,412.7 155.0,412.4 156.0,412.1 157.0,411.8 158.0,411.5 159.0,411.3 160.0,411.0 161.0,410.7 162.0,410.4 163.0,410.1 164.0,409.8 165.0,409.6 166.0,409.3 167.0,409.0 168.0,408.7 169.0,408.4 170.0,408.0 171.0,407.7 172.0,407.4 173.0,407.1 174.0,406.7 175.0,406.4 176.0,406.0 177.0,405.7 178.0,405.3 179.0,405.0 180.0,404.7 181.0,404.3 182.0,404.0 183.0,403.6 184.0,403.3 185.0,402.9 186.0,402.6 187.0,402.2 188.0,401.9 189.0,401.6 190.0,401.2 191.0,400.9 192.0,400.5 193.0,400.2 194.0,399.8 195.0,399.5 196.0,399.2 197.0,398.8 198.0,398.5 199.0,398.2 200.0,397.8 201.0,397.5 202.0,397.2 203.0,396.9 204.0,396.5 205.0,396.2 206.0,395.9 207.0,395.6 208.0,395.3 209.0,394.9 210.0,394.6 211.0,394.3 212.0,394.0 213.0,393.7 214.0,393.3 215.0,393.0 216.0,392.7 217.0,392.4 218.0,392.1 219.0,391.7 220.0,391.4 221.0,391.1 222.0,390.8 223.0,390.4 224.0,390.1 225.0,389.8 226.0,389.4 227.0,389.1 228.0,388.7 229.0,388.4 230.0,388.0 231.0,387.7 232.0,387.3 233.0,387.0 234.0,386.6 235.0,386.3 236.0,385.9 237.0,385.6 238.0,385.2 239.0,384.9 240.0,384.5 241.0,384.2 242.0,383.8 243.0,383.4 244.0,383.1 245.0,382.7 246.0,382.4 247.0,382.0 248.0,381.7 249.0,381.3 250.0,381.0 251.0,380.7 252.0,380.3 253.0,380.0 254.0,379.7 255.0,379.3 256.0,379.0 257.0,378.7 258.0,378.3 259.0,378.0 260.0,377.7 261.0,377.4 262.0,377.0 263.0,376.7 264.0,376.4 265.0,376.0 266.0,375.7 267.0,375.4 268.0,375.1 269.0,374.7 270.0,374.4 271.0,374.1 272.0,373.7 273.0,373.4 274.0,373.1 275.0,372.7 276.0,372.3 277.0,371.9 278.0,371.5 279.0,371.1 280.0,370.6 281.0,370.1 282.0,369.7 283.0,369.2 284.0,368.7 285.0,368.2 286.0,367.7 287.0,367.2 288.0,366.7 289.0,366.2 290.0,365.7 291.0,365.2 292.0,364.7 293.0,364.3 294.0,363.8 295.0,363.3 296.0,362.8 297.0,362.3 298.0,361.8 299.0,361.4 300.0,360.9 301.0,360.5 302.0,360.1 303.0,359.7 304.0,359.3 305.0,358.9 306.0,358.5 307.0,358.1 308.0,357.7 309.0,357.4 310.0,357.0 311.0,356.6 312.0,356.2 313.0,355.8 314.0,355.5 315.0,355.1 316.0,354.7 317.0,354.3 318.0,353.9 319.0,353.6 320.0,353.2 321.0,352.8 322.0,352.4 323.0,352.0 324.0,351.6 325.0,351.3 326.0,350.9 327.0,350.5 328.0,350.1 329.0,349.7 330.0,349.3 331.0,348.9 332.0,348.5 333.0,348.2 334.0,347.8 335.0,347.4 336.0,347.0 337.0,346.6 338.0,346.2 339.0,345.8 340.0,345.4 341.0,345.0 342.0,344.7 343.0,344.3 344.0,343.9 345.0,343.5 346.0,343.1 347.0,342.7 348.0,342.3 349.0,341.9 350.0,341.5 351.0,341.1 352.0,340.8 353.0,340.4 354.0,340.0 355.0,339.6 356.0,339.2 357.0,338.8 358.0,338.4 359.0,338.0 360.0,337.6 361.0,337.2 362.0,336.9 363.0,336.5 364.0,336.1 365.0,335.7 366.0,335.3 367.0,334.9 368.0,334.5 369.0,334.1 370.0,333.7 371.0,333.3 372.0,333.0 373.0,332.6 374.0,332.2 375.0,331.8 376.0,331.5 377.0,331.2 378.0,330.9 379.0,330.6 380.0,330.3 381.0,330.1 382.0,329.8 383.0,329.6 384.0,329.3 385.0,329.1 386.0,328.9 387.0,328.6 388.0,328.4 389.0,328.2 390.0,327.9 391.0,327.7 392.0,327.4 393.0,327.2 394.0,327.0 395.0,326.7 396.0,326.5 397.0,326.3 398.0,326.0 399.0,325.8 400.0,325.6 401.0,325.3 402.0,325.1 403.0,324.8 404.0,324.6 405.0,324.4 406.0,324.1 407.0,323.9 408.0,323.7 409.0,323.4 410.0,323.2 411.0,323.0 412.0,322.8 413.0,322.6 414.0,322.5 415.0,322.4 416.0,322.3 417.0,322.3 418.0,322.3 419.0,322.3 420.0,322.3 421.0,322.4 422.0,322.5 423.0,322.5 424.0,322.6 425.0,322.6 426.0,322.7 427.0,322.8 428.0,322.8 429.0,322.9 430.0,323.0 431.0,323.0 432.0,323.1 433.0,323.2 434.0,323.2 435.0,323.3 436.0,323.4 437.0,323.4 438.0,323.5 439.0,323.7 440.0,323.8 441.0,324.0 442.0,324.2 443.0,324.4 444.0,324.6 445.0,324.8 446.0,325.0 447.0,325.3 448.0,325.5 449.0,325.7 450.0,326.0 451.0,326.2 452.0,326.5 453.0,326.7 454.0,326.9 455.0,327.2 456.0,327.4 457.0,327.7 458.0,327.9 459.0,328.1 460.0,328.4 461.0,328.6 462.0,328.9 463.0,329.1 464.0,329.3 465.0,329.6 466.0,329.8 467.0,330.0 468.0,330.3 469.0,330.5 470.0,330.8 471.0,331.0 472.0,331.2 473.0,331.5 474.0,331.7 475.0,332.0 476.0,332.3 477.0,332.5 478.0,332.8 479.0,333.2 480.0,333.5 481.0,333.8 482.0,334.2 483.0,334.5 484.0,334.9 485.0,335.2 486.0,335.6 487.0,336.0 488.0,336.3 489.0,336.7 490.0,337.1 491.0,337.4 492.0,337.8 493.0,338.1 494.0,338.5 495.0,338.9 496.0,339.2 497.0,339.6 498.0,340.0 499.0,340.3 500.0,340.7 501.0,341.0 502.0,341.4 503.0,341.8 504.0,342.1 505.0,342.5 506.0,342.9 507.0,343.2 508.0,343.6 509.0,343.9 510.0,344.3 511.0,344.7 512.0,345.1 513.0,345.4 514.0,345.8 515.0,346.2 516.0,346.7 517.0,347.1 518.0,347.6 519.0,348.0 520.0,348.5 521.0,349.0 522.0,349.5 523.0,349.9 524.0,350.4 525.0,350.9 526.0,351.4 527.0,351.9 528.0,352.4 529.0,352.8 530.0,353.3 531.0,353.8 532.0,354.3 533.0,354.8 534.0,355.3 535.0,355.8 536.0,356.2 537.0,356.7 538.0,357.2 539.0,357.7 540.0,358.2 541.0,358.7 542.0,359.2 543.0,359.6 544.0,360.1 545.0,360.6 546.0,361.1 547.0,361.6 548.0,362.1 549.0,362.6 550.0,363.0 551.0,363.5 552.0,364.0 553.0,364.5 554.0,365.0 555.0,365.5 556.0,365.9 557.0,366.4 558.0,366.9 559.0,367.4 560.0,367.9 561.0,368.4 562.0,368.8 563.0,369.3 564.0,369.7 565.0,370.2 566.0,370.6 567.0,371.0 568.0,371.3 569.0,371.7 570.0,372.0 571.0,372.3 572.0,372.6 573.0,373.0 574.0,373.3 575.0,373.6 576.0,373.9 577.0,374.2 578.0,374.5 579.0,374.8 580.0,375.2 581.0,375.5 582.0,375.8 583.0,376.1 584.0,376.4 585.0,376.7 586.0,377.0 587.0,377.3 588.0,377.6 589.0,377.9 590.0,378.1 591.0,378.3 592.0,378.5 593.0,378.6 594.0,378.7 595.0,378.8 596.0,378.9 597.0,378.9 598.0,379.0 599.0,379.0 600.0,379.1 601.0,379.2 602.0,379.2 603.0,379.3 604.0,379.3 605.0,379.4 606.0,379.4 607.0,379.5 608.0,379.6 609.0,379.6 610.0,379.7 611.0,379.7 612.0,379.7 613.0,379.8 614.0,379.8 615.0,379.8 616.0,379.7 617.0,379.6 618.0,379.5 619.0,379.3 620.0,379.2 621.0,379.0 622.0,378.8 623.0,378.6 624.0,378.4 625.0,378.2 626.0,378.0 627.0,377.8 628.0,377.6 629.0,377.4 630.0,377.2 631.0,377.0 632.0,376.8 633.0,376.6 634.0,376.4 635.0,376.2 636.0,376.0 637.0,375.8 638.0,375.6 639.0,375.3 640.0,375.1 641.0,374.8 642.0,374.6 643.0,374.3 644.0,374.0 645.0,373.6 646.0,373.3 647.0,373.0 648.0,372.6 649.0,372.3 650.0,372.0 651.0,371.6 652.0,371.3 653.0,371.0 654.0,370.6 655.0,370.3 656.0,370.0 657.0,369.6 658.0,369.3 659.0,369.0 660.0,368.6 661.0,368.3 662.0,367.9 663.0,367.6 664.0,367.3 665.0,366.9 666.0,366.6 667.0,366.3 668.0,365.9 669.0,365.6 670.0,365.3 671.0,364.9 672.0,364.6 673.0,364.2 674.0,363.9 675.0,363.6 676.0,363.2 677.0,362.9 678.0,362.6 679.0,362.2 680.0,361.9 681.0,361.5 682.0,361.2 683.0,360.9 684.0,360.5 685.0,360.2 686.0,359.9 687.0,359.5 688.0,359.2 689.0,358.9 690.0,358.5 691.0,358.2 692.0,357.9 693.0,357.6 694.0,357.3 695.0,357.0 696.0,356.7 697.0,356.4 698.0,356.1 699.0,355.9 700.0,355.6 701.0,355.3 702.0,355.0 703.0,354.7 704.0,354.4 705.0,354.1 706.0,353.9 707.0,353.6 708.0,353.3 709.0,353.1 710.0,352.9 711.0,352.6 712.0,352.4 713.0,352.3 714.0,352.1 715.0,351.9 716.0,351.8 717.0,351.6 718.0,351.5 719.0,351.4 720.0,351.3 721.0,351.2 722.0,351.2 723.0,351.2 724.0,351.2 725.0,351.3 726.0,351.4 727.0,351.6 728.0,351.7 729.0,351.9 730.0,352.0 731.0,352.2 732.0,352.4 733.0,352.6 734.0,352.8 735.0,353.0 736.0,353.3 737.0,353.6 738.0,353.9 739.0,354.1 740.0,354.4 741.0,354.8 742.0,355.1 743.0,355.4 744.0,355.7 745.0,356.0 746.0,356.3 747.0,356.6 748.0,357.0 749.0,357.3 750.0,357.7 751.0,358.1 752.0,358.6 753.0,359.0 754.0,359.5 755.0,360.0 756.0,360.5 757.0,361.0 758.0,361.5 759.0,362.0 760.0,362.5 761.0,363.0 762.0,363.5 763.0,364.0 764.0,364.5 765.0,365.0 766.0,365.4 767.0,365.9 768.0,366.4 769.0,366.9 770.0,367.3 771.0,367.8 772.0,368.3 773.0,368.7 774.0,369.2 775.0,369.7 776.0,370.1 777.0,370.6 778.0,371.1 779.0,371.5 780.0,372.0 781.0,372.5 782.0,372.9 783.0,373.4 784.0,373.9 785.0,374.4 786.0,374.9 787.0,375.4 788.0,375.9 789.0,376.3 790.0,376.8 791.0,377.3 792.0,377.8 793.0,378.3 794.0,378.8 795.0,379.3 796.0,379.8 797.0,380.3 798.0,380.8 799.0,381.3 800.0,381.8 801.0,382.3 802.0,382.8 803.0,383.3 804.0,383.9 805.0,384.5 806.0,385.2 807.0,385.8 808.0,386.5 809.0,387.3 810.0,388.0 811.0,388.8 812.0,389.5 813.0,390.3 814.0,391.0 815.0,391.8 816.0,392.5 817.0,393.3 818.0,394.0 819.0,394.8 820.0,395.6 821.0,396.3 822.0,397.1 823.0,397.8 824.0,398.6 825.0,399.3 826.0,400.1 827.0,400.8 828.0,401.6 829.0,402.3 830.0,403.1 831.0,403.8 832.0,404.6 833.0,405.3 834.0,406.1 835.0,406.9 836.0,407.7 837.0,408.5 838.0,409.4 839.0,410.3 840.0,411.3 841.0,412.4 842.0,413.5 843.0,414.7 844.0,415.8 845.0,417.0 846.0,418.2 847.0,419.4 848.0,420.6 849.0,421.7 850.0,422.8 851.0,423.8 852.0,424.8 853.0,425.7 854.0,426.6 855.0,427.4 856.0,428.2 857.0,429.0 858.0,429.8 859.0,430.5 860.0,431.3 861.0,432.0 862.0,432.8 863.0,433.5 864.0,434.3 865.0,435.0 866.0,435.7 867.0,436.5 868.0,437.2 869.0,438.0 870.0,438.7 871.0,439.5 872.0,440.2 873.0,440.9 874.0,441.6 875.0,442.3 876.0,443.0 877.0,443.8 878.0,444.5 879.0,445.2 880.0,445.9 881.0,446.6 882.0,447.3 883.0,448.0 884.0,448.7 885.0,449.4 886.0,450.1 887.0,450.8 888.0,451.5 889.0,452.2 890.0,452.9 891.0,453.6 892.0,454.4 893.0,455.1 894.0,455.8 895.0,456.6 896.0,457.3 897.0,458.1 898.0,458.8 899.0,459.6 900.0,460.3 901.0,461.1 902.0,461.8 903.0,462.6 904.0,463.3 905.0,464.0 906.0,464.8 907.0,465.5 908.0,466.2 909.0,466.9 910.0,467.6 911.0,468.3 912.0,468.9 913.0,469.6 914.0,470.2 915.0,470.8 916.0,471.4 917.0,472.0 918.0,472.6 919.0,473.2 920.0,473.8 921.0,474.4 922.0,475.0 923.0,475.6 924.0,476.1 925.0,476.7 926.0,477.2 927.0,477.7 928.0,478.1 929.0,478.5 930.0,478.8 931.0,479.0 932.0,479.2 933.0,479.3 934.0,479.5 935.0,479.6 936.0,479.7 937.0,479.8 938.0,479.9 939.0,480.0 940.0,480.1 941.0,480.1 942.0,480.2 943.0,480.3 944.0,480.4 945.0,480.5 946.0,480.6 947.0,480.7 948.0,480.8 949.0,480.9 950.0,481.0 951.0,481.1 952.0,481.1 953.0,481.2 954.0,481.2 955.0,481.2 956.0,481.2 957.0,481.1 958.0,481.0 959.0,480.9 960.0,480.7 961.0,480.6 962.0,480.4 963.0,480.2 964.0,480.1 965.0,479.9 966.0,479.7 967.0,479.6 968.0,479.4 969.0,479.2 970.0,479.1 971.0,478.9 972.0,478.7 973.0,478.6 974.0,478.4 975.0,478.2 976.0,478.1 977.0,477.9 978.0,477.7 979.0,477.5 980.0,477.3 981.0,477.1 982.0,476.9 983.0,476.6 984.0,476.4 985.0,476.1 986.0,475.8 987.0,475.5 988.0,475.3 989.0,475.0 990.0,474.7 991.0,474.5 992.0,474.2 993.0,473.9 994.0,473.6 995.0,473.4 996.0,473.1 997.0,472.8 998.0,472.5 999.0,472.3 1000.0,472.0 1001.0,471.7 1002.0,471.5 1003.0,471.2 1004.0,470.9 1005.0,470.6 1006.0,470.4 1007.0,470.1 1008.0,469.8 1009.0,469.5 1010.0,469.3 1011.0,469.0 1012.0,468.7 1013.0,468.4 1014.0,468.2 1015.0,467.9 1016.0,467.6 1017.0,467.4 1018.0,467.1 1019.0,466.9 1020.0,466.6 1021.0,466.4 1022.0,466.2 1023.0,465.9 1024.0,465.7 1025.0,465.5 1026.0,465.2 1027.0,465.0 1028.0,464.8 1029.0,464.6 1030.0,464.3 1031.0,464.1 1032.0,463.9 1033.0,463.6 1034.0,463.4 1035.0,463.2 1036.0,463.0 1037.0,462.7 1038.0,462.5 1039.0,462.3 1040.0,462.0 1041.0,461.8 1042.0,461.6 1043.0,461.4 1044.0,461.1 1045.0,460.9 1046.0,460.7 1047.0,460.5 1048.0,460.2 1049.0,460.0 1050.0,459.8 1051.0,459.5 1052.0,459.3 1053.0,459.1 1054.0,458.9 1055.0,458.7 1056.0,458.5 1057.0,458.3 1058.0,458.1 1059.0,457.9 1060.0,457.7 1061.0,457.5 1062.0,457.3 1063.0,457.1 1064.0,457.0 1065.0,456.8 1066.0,456.6 1067.0,456.4 1068.0,456.3 1069.0,456.1 1070.0,455.9 1071.0,455.7 1072.0,455.5 1073.0,455.3 1074.0,455.1 1075.0,454.8 1076.0,454.6 1077.0,454.3 1078.0,454.0 1079.0,453.7 1080.0,453.4 1081.0,453.0 1082.0,452.7 1083.0,452.4 1084.0,452.0 1085.0,451.7 1086.0,451.4 1087.0,451.1 1088.0,450.7 1089.0,450.4 1090.0,450.1 1091.0,449.8 1092.0,449.4 1093.0,449.1 1094.0,448.8 1095.0,448.4 1096.0,448.1 1097.0,447.8 1098.0,447.5 1099.0,447.1 1100.0,446.8 1101.0,446.5 1102.0,446.1 1103.0,445.8 1104.0,445.5 1105.0,445.1 1106.0,444.8 1107.0,444.4 1108.0,444.1 1109.0,443.7 1110.0,443.4 1111.0,443.0 1112.0,442.6 1113.0,442.2 1114.0,441.9 1115.0,441.5 1116.0,441.1 1117.0,440.8 1118.0,440.4 1119.0,440.0 1120.0,439.6 1121.0,439.3 1122.0,438.9 1123.0,438.5 1124.0,438.1 1125.0,437.8 1126.0,437.4 1127.0,437.0 1128.0,436.6 1129.0,436.3 1130.0,435.9 1131.0,435.5 1132.0,435.1 1133.0,434.7 1134.0,434.4 1135.0,434.0 1136.0,433.6 1137.0,433.2 1138.0,432.8 1139.0,432.3 1140.0,431.8 1141.0,431.4 1142.0,430.8 1143.0,430.3 1144.0,429.8 1145.0,429.3 1146.0,428.7 1147.0,428.2 1148.0,427.7 1149.0,427.1 1150.0,426.6 1151.0,426.0 1152.0,425.5 1153.0,425.0 1154.0,424.4 1155.0,423.9 1156.0,423.3 1157.0,422.8 1158.0,422.3 1159.0,421.7 1160.0,421.2 1161.0,420.6 1162.0,420.1 1163.0,419.6 1164.0,419.0 1165.0,418.5 1166.0,418.0 1167.0,417.4 1168.0,416.9 1169.0,416.4 1170.0,415.9 1171.0,415.4 1172.0,414.9 1173.0,414.4 1174.0,413.9 1175.0,413.4 1176.0,412.9 1177.0,412.4 1178.0,412.0 1179.0,411.5 1180.0,411.0 1181.0,410.5 1182.0,410.0 1183.0,409.5 1184.0,409.1 1185.0,408.6 1186.0,408.1 1187.0,407.6 1188.0,407.1 1189.0,406.7 1190.0,406.2 1191.0,405.7 1192.0,405.2 1193.0,404.7 1194.0,404.3 1195.0,403.8 1196.0,403.3 1197.0,402.8 1198.0,402.3 1199.0,401.8 1200.0,401.4 1201.0,400.9 1202.0,400.4 1203.0,399.9 1204.0,399.5 1205.0,399.0 1206.0,398.6 1207.0,398.2 1208.0,397.8 1209.0,397.4 1210.0,397.1 1211.0,396.7 1212.0,396.4 1213.0,396.1 1214.0,395.8 1215.0,395.4 1216.0,395.1 1217.0,394.8 1218.0,394.5 1219.0,394.1 1220.0,393.8 1221.0,393.5 1222.0,393.2 1223.0,392.9 1224.0,392.5 1225.0,392.2 1226.0,391.9 1227.0,391.6 1228.0,391.3 1229.0,390.9 1230.0,390.6 1231.0,390.3 1232.0,390.0 1233.0,389.7 1234.0,389.3 1235.0,389.0 1236.0,388.7 1237.0,388.4 1238.0,388.0 1239.0,387.7 1240.0,387.4 1241.0,387.1 1242.0,386.8 1243.0,386.5 1244.0,386.2 1245.0,385.9 1246.0,385.7 1247.0,385.4 1248.0,385.2 1249.0,384.9 1250.0,384.7 1251.0,384.5 1252.0,384.3 1253.0,384.0 1254.0,383.8 1255.0,383.6 1256.0,383.4 1257.0,383.2 1258.0,383.0 1259.0,382.7 1260.0,382.5 1261.0,382.3 1262.0,382.1 1263.0,381.9 1264.0,381.6 1265.0,381.4 1266.0,381.2 1267.0,381.0 1268.0,380.8 1269.0,380.5 1270.0,380.3 1271.0,380.1 1272.0,379.9 1273.0,379.7 1274.0,379.5 1275.0,379.2 1276.0,379.0 1277.0,378.8 1278.0,378.6 1279.0,378.4 1280.0,378.2 1281.0,378.0 1282.0,377.7 1283.0,377.5 1284.0,377.3 1285.0,377.1 1286.0,376.9 1287.0,376.7 1288.0,376.5 1289.0,376.2 1290.0,376.0 1291.0,375.8 1292.0,375.6 1293.0,375.4 1294.0,375.2 1295.0,374.9 1296.0,374.7 1297.0,374.5 1298.0,374.3 1299.0,374.1 1300.0,373.9 1301.0,373.7 1302.0,373.5 1303.0,373.3 1304.0,373.1 1305.0,372.9 1306.0,372.7 1307.0,372.5 1308.0,372.3 1309.0,372.1 1310.0,371.9 1311.0,371.7 1312.0,371.5 1313.0,371.3 1314.0,371.1 1315.0,370.9 1316.0,370.7 1317.0,370.5 1318.0,370.3 1319.0,370.1 1320.0,369.9 1321.0,369.7 1322.0,369.4 1323.0,369.2 1324.0,369.0 1325.0,368.7 1326.0,368.5 1327.0,368.2 1328.0,367.9 1329.0,367.6 1330.0,367.4 1331.0,367.1 1332.0,366.8 1333.0,366.5 1334.0,366.2 1335.0,365.8 1336.0,365.5 1337.0,365.2 1338.0,364.9 1339.0,364.5 1340.0,364.2 1341.0,363.8 1342.0,363.5 1343.0,363.1 1344.0,362.8 1345.0,362.5 1346.0,362.1 1347.0,361.8 1348.0,361.4 1349.0,361.1 1350.0,360.7 1351.0,360.4 1352.0,360.1 1353.0,359.8 1354.0,359.5 1355.0,359.2 1356.0,359.0 1357.0,358.7 1358.0,358.5 1359.0,358.4 1360.0,358.2 1361.0,358.0 1362.0,357.8 1363.0,357.7 1364.0,357.5 1365.0,357.3 1366.0,357.2 1367.0,357.0 1368.0,356.8 1369.0,356.7 1370.0,356.5 1371.0,356.3 1372.0,356.2 1373.0,356.0 1374.0,355.8 1375.0,355.7 1376.0,355.5 1377.0,355.4 1378.0,355.2 1379.0,355.1 1380.0,355.0 1381.0,354.9 1382.0,354.9 1383.0,354.8 1384.0,354.8 1385.0,354.8 1386.0,354.7 1387.0,354.7 1388.0,354.7 1389.0,354.7 1390.0,354.7 1391.0,354.7 1392.0,354.7 1393.0,354.7 1394.0,354.7 1395.0,354.7 1396.0,354.7 1397.0,354.7 1398.0,354.7 1399.0,354.7 1400.0,354.8 1401.0,354.9 1402.0,355.0 1403.0,355.1 1404.0,355.2 1405.0,355.4 1406.0,355.5 1407.0,355.6 1408.0,355.8 1409.0,355.9 1410.0,356.1 1411.0,356.2 1412.0,356.4 1413.0,356.5 1414.0,356.7 1415.0,356.8 1416.0,357.0 1417.0,357.1 1418.0,357.3 1419.0,357.4 1420.0,357.6 1421.0,357.7 1422.0,357.8 1423.0,357.9 1424.0,358.1 1425.0,358.2 1426.0,358.3 1427.0,358.5 1428.0,358.6 1429.0,358.7 1430.0,358.8 1431.0,359.0 1432.0,359.1 1433.0,359.2 1434.0,359.3 1435.0,359.4 1436.0,359.6 1437.0,359.6 1438.0,359.7 1439.0,359.8 1440.0,359.9 1441.0,359.9 1442.0,359.9 1443.0,360.0 1444.0,360.0 1445.0,360.0 1446.0,360.1 1447.0,360.1 1448.0,360.1 1449.0,360.2 1450.0,360.2 1451.0,360.2 1452.0,360.3 1453.0,360.3 1454.0,360.3 1455.0,360.4 1456.0,360.4 1457.0,360.4 1458.0,360.5 1459.0,360.5 1460.0,360.5 1461.0,360.6 1462.0,360.6 1463.0,360.6 1464.0,360.7 1465.0,360.7 1466.0,360.7 1467.0,360.8 1468.0,360.8 1469.0,360.8 1470.0,360.9 1471.0,360.9 1472.0,360.9 1473.0,361.0 1474.0,361.0 1475.0,361.0 1476.0,361.1 1477.0,361.1 1478.0,361.1 1479.0,361.1 1480.0,361.0 1481.0,361.0 1482.0,360.9 1483.0,360.9 1484.0,360.8 1485.0,360.7 1486.0,360.6 1487.0,360.5 1488.0,360.4 1489.0,360.3 1490.0,360.2 1491.0,360.1 1492.0,360.0 1493.0,359.9 1494.0,359.8 1495.0,359.7 1496.0,359.6 1497.0,359.4 1498.0,359.2 1499.0,359.0 1500.0,358.7 1501.0,358.5 1502.0,358.2 1503.0,357.8 1504.0,357.5 1505.0,357.2 1506.0,356.9 1507.0,356.5 1508.0,356.2 1509.0,355.8 1510.0,355.5 1511.0,355.1 1512.0,354.7 1513.0,354.4 1514.0,353.9 1515.0,353.5 1516.0,353.1 1517.0,352.6 1518.0,352.2 1519.0,351.7 1520.0,351.3 1521.0,350.8 1522.0,350.4 1523.0,349.9 1524.0,349.5 1525.0,349.0 1526.0,348.6 1527.0,348.1 1528.0,347.6 1529.0,347.2 1530.0,346.7 1531.0,346.2 1532.0,345.7 1533.0,345.2 1534.0,344.6 1535.0,344.1 1536.0,343.6 1537.0,343.0 1538.0,342.5 1539.0,341.9 1540.0,341.4 1541.0,340.8 1542.0,340.3 1543.0,339.7 1544.0,339.2 1545.0,338.6 1546.0,338.1 1547.0,337.5 1548.0,336.9 1549.0,336.3 1550.0,335.7 1551.0,335.1 1552.0,334.5 1553.0,333.8 1554.0,333.1 1555.0,332.5 1556.0,331.8 1557.0,331.1 1558.0,330.4 1559.0,329.7 1560.0,329.0 1561.0,328.3 1562.0,327.6 1563.0,326.8 1564.0,326.0 1565.0,325.1 1566.0,324.2 1567.0,323.3 1568.0,322.4 1569.0,321.4 1570.0,320.5 1571.0,319.7 1572.0,318.8 1573.0,318.0 1574.0,317.1 1575.0,316.3 1576.0,315.5 1577.0,314.7 1578.0,313.9 1579.0,313.1 1580.0,312.3 1581.0,311.5 1582.0,310.7 1583.0,309.9 1584.0,309.1 1585.0,308.3 1586.0,307.5 1587.0,306.7 1588.0,305.8 1589.0,305.0 1590.0,304.1 1591.0,303.2 1592.0,302.3 1593.0,301.4 1594.0,300.5 1595.0,299.5 1596.0,298.6 1597.0,297.7 1598.0,296.7 1599.0,295.8 1600.0,294.9 1601.0,293.9 1602.0,293.0 1603.0,292.1 1604.0,291.1 1605.0,290.2 1606.0,289.2 1607.0,288.3 1608.0,287.3 1609.0,286.4 1610.0,285.4 1611.0,284.5 1612.0,283.5 1613.0,282.5 1614.0,281.5 1615.0,280.5 1616.0,279.5 1617.0,278.5 1618.0,277.6 1619.0,276.5 1620.0,275.5 1621.0,274.5 1622.0,273.5 1623.0,272.4 1624.0,271.3 1625.0,270.2 1626.0,269.0 1627.0,267.8 1628.0,266.6 1629.0,265.4 1630.0,264.1 1631.0,262.9 1632.0,261.6 1633.0,260.4 1634.0,259.2 1635.0,257.9 1636.0,256.7 1637.0,255.4 1638.0,254.2 1639.0,252.9 1640.0,251.7 1641.0,250.5 1642.0,249.2 1643.0,248.0 1644.0,246.7 1645.0,245.4 1646.0,244.2 1647.0,242.9 1648.0,241.6 1649.0,240.3 1650.0,238.9 1651.0,237.6 1652.0,236.2 1653.0,234.8 1654.0,233.4 1655.0,231.9 1656.0,230.5 1657.0,229.0 1658.0,227.6 1659.0,226.1 1660.0,224.7 1661.0,223.2 1662.0,221.8 1663.0,220.3 1664.0,218.9 1665.0,217.5 1666.0,216.1 1667.0,214.7 1668.0,213.3 1669.0,211.9 1670.0,210.6 1671.0,209.2 1672.0,207.9 1673.0,206.5 1674.0,205.2 1675.0,203.8 1676.0,202.5 1677.0,201.2 1678.0,199.8 1679.0,198.5 1680.0,197.2 1681.0,195.9 1682.0,194.7 1683.0,193.4 1684.0,192.2 1685.0,191.0 1686.0,189.9 1687.0,188.7 1688.0,187.5 1689.0,186.4 1690.0,185.2 1691.0,184.1 1692.0,182.9 1693.0,181.8 1694.0,180.6 1695.0,179.5 1696.0,178.3 1697.0,177.2 1698.0,176.0 1699.0,174.8 1700.0,173.6 1701.0,172.5 1702.0,171.3 1703.0,170.1 1704.0,168.9 1705.0,167.7 1706.0,166.5 1707.0,165.3 1708.0,164.1 1709.0,162.9 1710.0,161.7 1711.0,160.5 1712.0,159.3 1713.0,158.1 1714.0,156.9 1715.0,155.7 1716.0,154.5 1717.0,153.4 1718.0,152.2 1719.0,151.0 1720.0,149.8 1721.0,148.7 1722.0,147.5 1723.0,146.4 1724.0,145.2 1725.0,144.1 1726.0,142.9 1727.0,141.8 1728.0,140.6 1729.0,139.5 1730.0,138.3 1731.0,137.2 1732.0,136.0 1733.0,134.9 1734.0,133.8 1735.0,132.6 1736.0,131.6 1737.0,130.5 1738.0,129.4 1739.0,128.3 1740.0,127.3 1741.0,126.2 1742.0,125.2 1743.0,124.1 1744.0,123.1 1745.0,122.1 1746.0,121.0 1747.0,120.0 1748.0,118.9 1749.0,117.9 1750.0,116.9 1751.0,115.9 1752.0,115.0 1753.0,114.1 1754.0,113.2 1755.0,112.4 1756.0,111.6 1757.0,110.9 1758.0,110.3 1759.0,109.7 1760.0,109.2 1761.0,108.8 1762.0,108.4 1763.0,108.2 1764.0,108.0 1765.0,107.9 1766.0,107.9 1767.0,107.8 1768.0,107.8 1769.0,107.7 1770.0,107.7 1771.0,107.7 1772.0,107.7 1773.0,107.6" fill="none" stroke="#ff0000" stroke-width="2.2"/>
<polyline points="2.0,374.9 3.0,375.0 4.0,375.1 5.0,375.3 6.0,375.5 7.0,375.6 8.0,375.8 9.0,376.1 10.0,376.3 11.0,376.5 12.0,376.7 13.0,376.9 14.0,377.2 15.0,377.4 16.0,377.6 17.0,377.9 18.0,378.1 19.0,378.4 20.0,378.7 21.0,378.9 22.0,379.2 23.0,379.5 24.0,379.8 25.0,380.1 26.0,380.4 27.0,380.7 28.0,381.0 29.0,381.3 30.0,381.6 31.0,382.0 32.0,382.3 33.0,382.6 34.0,382.9 35.0,383.3 36.0,383.6 37.0,383.9 38.0,384.2 39.0,384.6 40.0,384.9 41.0,385.2 42.0,385.6 43.0,385.9 44.0,386.2 45.0,386.6 46.0,386.9 47.0,387.3 48.0,387.6 49.0,388.0 50.0,388.3 51.0,388.7 52.0,389.0 53.0,389.4 54.0,389.7 55.0,390.1 56.0,390.4 57.0,390.8 58.0,391.1 59.0,391.5 60.0,391.8 61.0,392.1 62.0,392.5 63.0,392.8 64.0,393.1 65.0,393.4 66.0,393.7 67.0,394.0 68.0,394.3 69.0,394.5 70.0,394.8 71.0,395.0 72.0,395.3 73.0,395.5 74.0,395.8 75.0,396.0 76.0,396.2 77.0,396.5 78.0,396.7 79.0,396.9 80.0,397.1 81.0,397.4 82.0,397.6 83.0,397.8 84.0,398.1 85.0,398.3 86.0,398.5 87.0,398.8 88.0,399.0 89.0,399.3 90.0,399.5 91.0,399.8 92.0,400.1 93.0,400.3 94.0,400.6 95.0,400.9 96.0,401.1 97.0,401.4 98.0,401.7 99.0,401.9 100.0,402.2 101.0,402.5 102.0,402.7 103.0,403.0 104.0,403.3 105.0,403.5 106.0,403.7 107.0,404.0 108.0,404.2 109.0,404.4 110.0,404.6 111.0,404.8 112.0,405.0 113.0,405.2 114.0,405.3 115.0,405.4 116.0,405.6 117.0,405.7 118.0,405.8 119.0,406.0 120.0,406.1 121.0,406.2 122.0,406.3 123.0,406.4 124.0,406.5 125.0,406.6 126.0,406.7 127.0,406.9 128.0,407.0 129.0,407.1 130.0,407.2 131.0,407.3 132.0,407.4 133.0,407.5 134.0,407.6 135.0,407.7 136.0,407.8 137.0,408.0 138.0,408.1 139.0,408.2 140.0,408.3 141.0,408.4 142.0,408.5 143.0,408.6 144.0,408.7 145.0,408.8 146.0,408.9 147.0,409.0 148.0,409.1 149.0,409.1 150.0,409.2 151.0,409.3 152.0,409.3 153.0,409.4 154.0,409.4 155.0,409.4 156.0,409.4 157.0,409.5 158.0,409.5 159.0,409.5 160.0,409.5 161.0,409.5 162.0,409.5 163.0,409.5 164.0,409.6 165.0,409.6 166.0,409.6 167.0,409.6 168.0,409.6 169.0,409.6 170.0,409.6 171.0,409.6 172.0,409.7 173.0,409.7 174.0,409.7 175.0,409.7 176.0,409.7 177.0,409.7 178.0,409.7 179.0,409.7 180.0,409.7 181.0,409.7 182.0,409.6 183.0,409.6 184.0,409.5 185.0,409.5 186.0,409.4 187.0,409.3 188.0,409.2 189.0,409.1 190.0,408.9 191.0,408.8 192.0,408.7 193.0,408.5 194.0,408.4 195.0,408.2 196.0,408.1 197.0,407.9 198.0,407.8 199.0,407.6 200.0,407.5 201.0,407.3 202.0,407.2 203.0,407.0 204.0,406.9 205.0,406.7 206.0,406.6 207.0,406.4 208.0,406.2 209.0,406.1 210.0,405.9 211.0,405.7 212.0,405.5 213.0,405.4 214.0,405.2 215.0,405.0 216.0,404.8 217.0,404.6 218.0,404.4 219.0,404.2 220.0,404.0 221.0,403.8 222.0,403.6 223.0,403.4 224.0,403.2 225.0,403.0 226.0,402.8 227.0,402.6 228.0,402.4 229.0,402.2 230.0,402.0 231.0,401.8 232.0,401.6 233.0,401.4 234.0,401.2 235.0,401.0 236.0,400.8 237.0,400.5 238.0,400.3 239.0,400.1 240.0,399.8 241.0,399.6 242.0,399.4 243.0,399.1 244.0,398.9 245.0,398.6 246.0,398.4 247.0,398.1 248.0,397.9 249.0,397.6 250.0,397.4 251.0,397.1 252.0,396.9 253.0,396.6 254.0,396.4 255.0,396.1 256.0,395.9 257.0,395.6 258.0,395.4 259.0,395.1 260.0,394.9 261.0,394.6 262.0,394.3 263.0,394.1 264.0,393.8 265.0,393.5 266.0,393.2 267.0,393.0 268.0,392.7 269.0,392.4 270.0,392.1 271.0,391.8 272.0,391.5 273.0,391.2 274.0,390.9 275.0,390.6 276.0,390.3 277.0,390.0 278.0,389.7 279.0,389.4 280.0,389.1 281.0,388.8 282.0,388.5 283.0,388.2 284.0,387.9 285.0,387.6 286.0,387.3 287.0,387.0 288.0,386.7 289.0,386.4 290.0,386.1 291.0,385.7 292.0,385.4 293.0,385.1 294.0,384.7 295.0,384.4 296.0,384.1 297.0,383.7 298.0,383.4 299.0,383.0 300.0,382.6 301.0,382.3 302.0,381.9 303.0,381.6 304.0,381.2 305.0,380.8 306.0,380.4 307.0,380.1 308.0,379.7 309.0,379.3 310.0,379.0 311.0,378.6 312.0,378.2 313.0,377.8 314.0,377.5 315.0,377.1 316.0,376.7 317.0,376.3 318.0,376.0 319.0,375.6 320.0,375.2 321.0,374.8 322.0,374.5 323.0,374.1 324.0,373.7 325.0,373.3 326.0,372.9 327.0,372.5 328.0,372.2 329.0,371.8 330.0,371.4 331.0,371.0 332.0,370.6 333.0,370.2 334.0,369.8 335.0,369.4 336.0,369.0 337.0,368.6 338.0,368.2 339.0,367.8 340.0,367.4 341.0,367.0 342.0,366.6 343.0,366.2 344.0,365.8 345.0,365.4 346.0,365.0 347.0,364.6 348.0,364.2 349.0,363.8 350.0,363.4 351.0,363.0 352.0,362.6 353.0,362.1 354.0,361.7 355.0,361.3 356.0,360.9 357.0,360.5 358.0,360.1 359.0,359.7 360.0,359.3 361.0,358.9 362.0,358.5 363.0,358.1 364.0,357.7 365.0,357.3 366.0,356.9 367.0,356.5 368.0,356.1 369.0,355.7 370.0,355.3 371.0,354.9 372.0,354.5 373.0,354.1 374.0,353.7 375.0,353.4 376.0,353.0 377.0,352.6 378.0,352.2 379.0,351.8 380.0,351.5 381.0,351.1 382.0,350.7 383.0,350.4 384.0,350.0 385.0,349.7 386.0,349.3 387.0,348.9 388.0,348.6 389.0,348.2 390.0,347.9 391.0,347.5 392.0,347.2 393.0,346.8 394.0,346.5 395.0,346.1 396.0,345.8 397.0,345.4 398.0,345.0 399.0,344.7 400.0,344.3 401.0,344.0 402.0,343.6 403.0,343.3 404.0,342.9 405.0,342.6 406.0,342.2 407.0,341.9 408.0,341.5 409.0,341.2 410.0,340.8 411.0,340.5 412.0,340.2 413.0,339.9 414.0,339.5 415.0,339.3 416.0,339.0 417.0,338.7 418.0,338.4 419.0,338.2 420.0,337.9 421.0,337.7 422.0,337.4 423.0,337.2 424.0,337.0 425.0,336.7 426.0,336.5 427.0,336.3 428.0,336.0 429.0,335.8 430.0,335.6 431.0,335.3 432.0,335.1 433.0,334.9 434.0,334.7 435.0,334.4 436.0,334.2 437.0,334.0 438.0,333.7 439.0,333.5 440.0,333.3 441.0,333.1 442.0,332.8 443.0,332.6 444.0,332.4 445.0,332.2 446.0,332.0 447.0,331.8 448.0,331.7 449.0,331.5 450.0,331.3 451.0,331.2 452.0,331.1 453.0,331.0 454.0,330.9 455.0,330.8 456.0,330.7 457.0,330.7 458.0,330.6 459.0,330.6 460.0,330.5 461.0,330.5 462.0,330.4 463.0,330.4 464.0,330.4 465.0,330.4 466.0,330.4 467.0,330.4 468.0,330.4 469.0,330.4 470.0,330.4 471.0,330.4 472.0,330.4 473.0,330.5 474.0,330.5 475.0,330.5 476.0,330.6 477.0,330.6 478.0,330.6 479.0,330.7 480.0,330.7 481.0,330.7 482.0,330.8 483.0,330.8 484.0,330.9 485.0,330.9 486.0,331.0 487.0,331.1 488.0,331.2 489.0,331.3 490.0,331.4 491.0,331.5 492.0,331.7 493.0,331.9 494.0,332.0 495.0,332.2 496.0,332.4 497.0,332.6 498.0,332.9 499.0,333.1 500.0,333.3 501.0,333.5 502.0,333.7 503.0,333.9 504.0,334.1 505.0,334.3 506.0,334.5 507.0,334.7 508.0,334.9 509.0,335.1 510.0,335.3 511.0,335.5 512.0,335.7 513.0,335.9 514.0,336.1 515.0,336.3 516.0,336.5 517.0,336.7 518.0,336.9 519.0,337.1 520.0,337.3 521.0,337.4 522.0,337.6 523.0,337.8 524.0,338.0 525.0,338.2 526.0,338.4 527.0,338.6 528.0,338.8 529.0,339.0 530.0,339.2 531.0,339.4 532.0,339.6 533.0,339.8 534.0,340.0 535.0,340.2 536.0,340.4 537.0,340.6 538.0,340.9 539.0,341.1 540.0,341.4 541.0,341.7 542.0,342.0 543.0,342.3 544.0,342.6 545.0,343.0 546.0,343.3 547.0,343.7 548.0,344.0 549.0,344.4 550.0,344.8 551.0,345.1 552.0,345.5 553.0,345.9 554.0,346.3 555.0,346.6 556.0,347.0 557.0,347.4 558.0,347.8 559.0,348.1 560.0,348.5 561.0,348.9 562.0,349.3 563.0,349.6 564.0,350.0 565.0,350.4 566.0,350.8 567.0,351.2 568.0,351.5 569.0,351.9 570.0,352.3 571.0,352.6 572.0,353.0 573.0,353.4 574.0,353.8 575.0,354.1 576.0,354.5 577.0,354.8 578.0,355.2 579.0,355.5 580.0,355.8 581.0,356.2 582.0,356.5 583.0,356.8 584.0,357.1 585.0,357.4 586.0,357.8 587.0,358.1 588.0,358.4 589.0,358.7 590.0,359.0 591.0,359.3 592.0,359.6 593.0,359.9 594.0,360.2 595.0,360.5 596.0,360.8 597.0,361.1 598.0,361.5 599.0,361.8 600.0,362.1 601.0,362.4 602.0,362.7 603.0,363.0 604.0,363.3 605.0,363.6 606.0,363.9 607.0,364.2 608.0,364.5 609.0,364.8 610.0,365.1 611.0,365.4 612.0,365.6 613.0,365.9 614.0,366.1 615.0,366.3 616.0,366.5 617.0,366.7 618.0,366.9 619.0,367.0 620.0,367.1 621.0,367.2 622.0,367.3 623.0,367.4 624.0,367.5 625.0,367.6 626.0,367.7 627.0,367.7 628.0,367.8 629.0,367.9 630.0,368.0 631.0,368.0 632.0,368.1 633.0,368.2 634.0,368.2 635.0,368.3 636.0,368.3 637.0,368.4 638.0,368.4 639.0,368.5 640.0,368.5 641.0,368.6 642.0,368.6 643.0,368.7 644.0,368.7 645.0,368.7 646.0,368.7 647.0,368.8 648.0,368.8 649.0,368.8 650.0,368.8 651.0,368.8 652.0,368.8 653.0,368.8 654.0,368.9 655.0,368.9 656.0,368.9 657.0,368.9 658.0,368.9 659.0,368.9 660.0,368.9 661.0,368.9 662.0,368.9 663.0,368.9 664.0,368.8 665.0,368.8 666.0,368.7 667.0,368.7 668.0,368.6 669.0,368.5 670.0,368.5 671.0,368.4 672.0,368.3 673.0,368.2 674.0,368.0 675.0,367.9 676.0,367.8 677.0,367.7 678.0,367.6 679.0,367.5 680.0,367.4 681.0,367.2 682.0,367.1 683.0,367.0 684.0,366.9 685.0,366.8 686.0,366.6 687.0,366.5 688.0,366.4 689.0,366.3 690.0,366.2 691.0,366.0 692.0,365.9 693.0,365.8 694.0,365.7 695.0,365.5 696.0,365.4 697.0,365.3 698.0,365.2 699.0,365.0 700.0,364.9 701.0,364.8 702.0,364.6 703.0,364.5 704.0,364.4 705.0,364.2 706.0,364.1 707.0,363.9 708.0,363.8 709.0,363.6 710.0,363.5 711.0,363.3 712.0,363.1 713.0,362.9 714.0,362.8 715.0,362.6 716.0,362.4 717.0,362.2 718.0,362.0 719.0,361.8 720.0,361.6 721.0,361.4 722.0,361.2 723.0,361.0 724.0,360.8 725.0,360.6 726.0,360.4 727.0,360.2 728.0,360.0 729.0,359.8 730.0,359.6 731.0,359.5 732.0,359.3 733.0,359.2 734.0,359.0 735.0,358.9 736.0,358.8 737.0,358.6 738.0,358.5 739.0,358.5 740.0,358.4 741.0,358.3 742.0,358.2 743.0,358.1 744.0,358.1 745.0,358.0 746.0,358.0 747.0,357.9 748.0,357.9 749.0,357.9 750.0,357.9 751.0,357.9 752.0,357.9 753.0,357.9 754.0,358.0 755.0,358.0 756.0,358.1 757.0,358.2 758.0,358.3 759.0,358.4 760.0,358.5 761.0,358.6 762.0,358.8 763.0,358.9 764.0,359.0 765.0,359.2 766.0,359.3 767.0,359.4 768.0,359.5 769.0,359.7 770.0,359.8 771.0,360.0 772.0,360.1 773.0,360.2 774.0,360.4 775.0,360.5 776.0,360.6 777.0,360.8 778.0,360.9 779.0,361.0 780.0,361.2 781.0,361.3 782.0,361.5 783.0,361.6 784.0,361.8 785.0,362.0 786.0,362.1 787.0,362.3 788.0,362.5 789.0,362.7 790.0,363.0 791.0,363.2 792.0,363.5 793.0,363.7 794.0,364.0 795.0,364.3 796.0,364.5 797.0,364.8 798.0,365.1 799.0,365.4 800.0,365.7 801.0,366.0 802.0,366.4 803.0,366.7 804.0,367.0 805.0,367.3 806.0,367.7 807.0,368.0 808.0,368.4 809.0,368.7 810.0,369.1 811.0,369.4 812.0,369.8 813.0,370.2 814.0,370.5 815.0,370.9 816.0,371.3 817.0,371.6 818.0,372.0 819.0,372.4 820.0,372.7 821.0,373.1 822.0,373.5 823.0,373.9 824.0,374.3 825.0,374.7 826.0,375.2 827.0,375.6 828.0,376.1 829.0,376.5 830.0,377.0 831.0,377.6 832.0,378.1 833.0,378.6 834.0,379.2 835.0,379.7 836.0,380.3 837.0,380.9 838.0,381.4 839.0,382.0 840.0,382.6 841.0,383.2 842.0,383.7 843.0,384.3 844.0,384.9 845.0,385.5 846.0,386.1 847.0,386.6 848.0,387.2 849.0,387.8 850.0,388.4 851.0,389.0 852.0,389.6 853.0,390.2 854.0,390.9 855.0,391.5 856.0,392.1 857.0,392.7 858.0,393.3 859.0,393.9 860.0,394.6 861.0,395.2 862.0,395.8 863.0,396.4 864.0,397.1 865.0,397.7 866.0,398.3 867.0,398.9 868.0,399.6 869.0,400.2 870.0,400.9 871.0,401.5 872.0,402.2 873.0,402.8 874.0,403.5 875.0,404.1 876.0,404.8 877.0,405.5 878.0,406.1 879.0,406.8 880.0,407.5 881.0,408.2 882.0,408.9 883.0,409.5 884.0,410.2 885.0,410.9 886.0,411.6 887.0,412.3 888.0,413.0 889.0,413.7 890.0,414.3 891.0,415.0 892.0,415.7 893.0,416.4 894.0,417.1 895.0,417.8 896.0,418.5 897.0,419.2 898.0,419.9 899.0,420.6 900.0,421.4 901.0,422.1 902.0,422.8 903.0,423.5 904.0,424.2 905.0,424.9 906.0,425.6 907.0,426.3 908.0,427.0 909.0,427.7 910.0,428.4 911.0,429.1 912.0,429.8 913.0,430.5 914.0,431.2 915.0,431.9 916.0,432.6 917.0,433.3 918.0,434.0 919.0,434.7 920.0,435.4 921.0,436.1 922.0,436.8 923.0,437.5 924.0,438.2 925.0,438.9 926.0,439.5 927.0,440.2 928.0,440.9 929.0,441.5 930.0,442.1 931.0,442.8 932.0,443.4 933.0,444.0 934.0,444.6 935.0,445.2 936.0,445.8 937.0,446.3 938.0,446.9 939.0,447.5 940.0,448.1 941.0,448.7 942.0,449.2 943.0,449.8 944.0,450.4 945.0,450.9 946.0,451.5 947.0,452.1 948.0,452.6 949.0,453.2 950.0,453.7 951.0,454.3 952.0,454.8 953.0,455.2 954.0,455.7 955.0,456.2 956.0,456.6 957.0,457.0 958.0,457.3 959.0,457.7 960.0,458.0 961.0,458.3 962.0,458.6 963.0,458.9 964.0,459.1 965.0,459.4 966.0,459.7 967.0,459.9 968.0,460.2 969.0,460.4 970.0,460.7 971.0,460.9 972.0,461.2 973.0,461.4 974.0,461.7 975.0,461.9 976.0,462.2 977.0,462.4 978.0,462.6 979.0,462.8 980.0,463.0 981.0,463.2 982.0,463.3 983.0,463.5 984.0,463.6 985.0,463.8 986.0,463.9 987.0,464.0 988.0,464.1 989.0,464.3 990.0,464.4 991.0,464.5 992.0,464.6 993.0,464.7 994.0,464.8 995.0,464.9 996.0,465.0 997.0,465.1 998.0,465.2 999.0,465.3 1000.0,465.4 1001.0,465.5 1002.0,465.5 1003.0,465.6 1004.0,465.7 1005.0,465.8 1006.0,465.8 1007.0,465.9 1008.0,465.9 1009.0,465.9 1010.0,465.9 1011.0,466.0 1012.0,466.0 1013.0,466.0 1014.0,466.0 1015.0,466.0 1016.0,466.0 1017.0,466.0 1018.0,466.0 1019.0,466.0 1020.0,466.0 1021.0,466.0 1022.0,466.0 1023.0,466.0 1024.0,466.0 1025.0,466.0 1026.0,466.0 1027.0,466.0 1028.0,466.0 1029.0,466.0 1030.0,466.0 1031.0,466.0 1032.0,466.0 1033.0,466.0 1034.0,466.0 1035.0,466.0 1036.0,466.0 1037.0,466.0 1038.0,466.0 1039.0,465.9 1040.0,465.9 1041.0,465.9 1042.0,465.8 1043.0,465.8 1044.0,465.7 1045.0,465.6 1046.0,465.5 1047.0,465.4 1048.0,465.3 1049.0,465.2 1050.0,465.1 1051.0,465.0 1052.0,464.9 1053.0,464.7 1054.0,464.6 1055.0,464.5 1056.0,464.3 1057.0,464.2 1058.0,464.1 1059.0,463.9 1060.0,463.8 1061.0,463.7 1062.0,463.5 1063.0,463.4 1064.0,463.3 1065.0,463.1 1066.0,463.0 1067.0,462.9 1068.0,462.7 1069.0,462.6 1070.0,462.5 1071.0,462.3 1072.0,462.2 1073.0,462.1 1074.0,461.9 1075.0,461.8 1076.0,461.6 1077.0,461.5 1078.0,461.3 1079.0,461.2 1080.0,461.0 1081.0,460.8 1082.0,460.7 1083.0,460.5 1084.0,460.3 1085.0,460.1 1086.0,459.9 1087.0,459.7 1088.0,459.5 1089.0,459.3 1090.0,459.1 1091.0,458.9 1092.0,458.7 1093.0,458.5 1094.0,458.3 1095.0,458.1 1096.0,457.9 1097.0,457.7 1098.0,457.5 1099.0,457.3 1100.0,457.1 1101.0,456.9 1102.0,456.7 1103.0,456.5 1104.0,456.3 1105.0,456.1 1106.0,455.9 1107.0,455.7 1108.0,455.5 1109.0,455.3 1110.0,455.1 1111.0,454.9 1112.0,454.7 1113.0,454.5 1114.0,454.3 1115.0,454.1 1116.0,453.9 1117.0,453.7 1118.0,453.5 1119.0,453.3 1120.0,453.0 1121.0,452.8 1122.0,452.6 1123.0,452.4 1124.0,452.1 1125.0,451.9 1126.0,451.6 1127.0,451.4 1128.0,451.1 1129.0,450.8 1130.0,450.6 1131.0,450.3 1132.0,450.0 1133.0,449.8 1134.0,449.5 1135.0,449.2 1136.0,449.0 1137.0,448.7 1138.0,448.4 1139.0,448.1 1140.0,447.9 1141.0,447.6 1142.0,447.3 1143.0,447.1 1144.0,446.8 1145.0,446.5 1146.0,446.2 1147.0,446.0 1148.0,445.7 1149.0,445.4 1150.0,445.1 1151.0,444.9 1152.0,444.6 1153.0,444.3 1154.0,444.1 1155.0,443.8 1156.0,443.5 1157.0,443.2 1158.0,443.0 1159.0,442.7 1160.0,442.4 1161.0,442.1 1162.0,441.9 1163.0,441.6 1164.0,441.3 1165.0,441.0 1166.0,440.6 1167.0,440.3 1168.0,440.0 1169.0,439.6 1170.0,439.2 1171.0,438.8 1172.0,438.4 1173.0,438.0 1174.0,437.5 1175.0,437.0 1176.0,436.6 1177.0,436.1 1178.0,435.6 1179.0,435.1 1180.0,434.6 1181.0,434.0 1182.0,433.5 1183.0,433.0 1184.0,432.5 1185.0,432.0 1186.0,431.5 1187.0,431.0 1188.0,430.5 1189.0,429.9 1190.0,429.4 1191.0,428.9 1192.0,428.4 1193.0,427.9 1194.0,427.4 1195.0,426.9 1196.0,426.4 1197.0,425.8 1198.0,425.3 1199.0,424.8 1200.0,424.3 1201.0,423.8 1202.0,423.3 1203.0,422.8 1204.0,422.3 1205.0,421.8 1206.0,421.4 1207.0,420.9 1208.0,420.5 1209.0,420.0 1210.0,419.6 1211.0,419.1 1212.0,418.7 1213.0,418.3 1214.0,417.9 1215.0,417.4 1216.0,417.0 1217.0,416.6 1218.0,416.2 1219.0,415.8 1220.0,415.4 1221.0,415.0 1222.0,414.6 1223.0,414.2 1224.0,413.8 1225.0,413.3 1226.0,412.9 1227.0,412.5 1228.0,412.1 1229.0,411.7 1230.0,411.3 1231.0,410.9 1232.0,410.5 1233.0,410.1 1234.0,409.7 1235.0,409.3 1236.0,408.9 1237.0,408.5 1238.0,408.1 1239.0,407.7 1240.0,407.3 1241.0,406.9 1242.0,406.5 1243.0,406.2 1244.0,405.8 1245.0,405.5 1246.0,405.2 1247.0,404.9 1248.0,404.6 1249.0,404.3 1250.0,404.0 1251.0,403.7 1252.0,403.5 1253.0,403.2 1254.0,403.0 1255.0,402.7 1256.0,402.4 1257.0,402.2 1258.0,401.9 1259.0,401.7 1260.0,401.4 1261.0,401.2 1262.0,400.9 1263.0,400.6 1264.0,400.4 1265.0,400.1 1266.0,399.8 1267.0,399.5 1268.0,399.2 1269.0,398.9 1270.0,398.6 1271.0,398.3 1272.0,398.0 1273.0,397.7 1274.0,397.4 1275.0,397.1 1276.0,396.7 1277.0,396.4 1278.0,396.1 1279.0,395.8 1280.0,395.4 1281.0,395.1 1282.0,394.8 1283.0,394.4 1284.0,394.1 1285.0,393.8 1286.0,393.5 1287.0,393.2 1288.0,392.9 1289.0,392.6 1290.0,392.3 1291.0,392.0 1292.0,391.7 1293.0,391.4 1294.0,391.1 1295.0,390.8 1296.0,390.6 1297.0,390.3 1298.0,390.0 1299.0,389.7 1300.0,389.5 1301.0,389.2 1302.0,388.9 1303.0,388.7 1304.0,388.4 1305.0,388.1 1306.0,387.9 1307.0,387.6 1308.0,387.3 1309.0,387.1 1310.0,386.8 1311.0,386.5 1312.0,386.3 1313.0,386.0 1314.0,385.7 1315.0,385.5 1316.0,385.2 1317.0,384.9 1318.0,384.6 1319.0,384.4 1320.0,384.1 1321.0,383.8 1322.0,383.6 1323.0,383.3 1324.0,383.0 1325.0,382.7 1326.0,382.5 1327.0,382.2 1328.0,381.9 1329.0,381.7 1330.0,381.4 1331.0,381.1 1332.0,380.9 1333.0,380.6 1334.0,380.4 1335.0,380.1 1336.0,379.9 1337.0,379.6 1338.0,379.4 1339.0,379.1 1340.0,378.9 1341.0,378.7 1342.0,378.5 1343.0,378.2 1344.0,378.0 1345.0,377.8 1346.0,377.6 1347.0,377.4 1348.0,377.1 1349.0,376.9 1350.0,376.7 1351.0,376.5 1352.0,376.2 1353.0,376.0 1354.0,375.8 1355.0,375.6 1356.0,375.4 1357.0,375.1 1358.0,374.9 1359.0,374.7 1360.0,374.5 1361.0,374.3 1362.0,374.0 1363.0,373.8 1364.0,373.6 1365.0,373.4 1366.0,373.2 1367.0,372.9 1368.0,372.7 1369.0,372.5 1370.0,372.3 1371.0,372.1 1372.0,371.8 1373.0,371.6 1374.0,371.4 1375.0,371.2 1376.0,371.0 1377.0,370.8 1378.0,370.5 1379.0,370.3 1380.0,370.1 1381.0,369.9 1382.0,369.7 1383.0,369.5 1384.0,369.3 1385.0,369.1 1386.0,368.9 1387.0,368.7 1388.0,368.6 1389.0,368.4 1390.0,368.2 1391.0,368.0 1392.0,367.8 1393.0,367.6 1394.0,367.4 1395.0,367.2 1396.0,367.0 1397.0,366.9 1398.0,366.7 1399.0,366.5 1400.0,366.3 1401.0,366.1 1402.0,365.9 1403.0,365.7 1404.0,365.5 1405.0,365.3 1406.0,365.1 1407.0,364.9 1408.0,364.7 1409.0,364.5 1410.0,364.3 1411.0,364.1 1412.0,363.9 1413.0,363.8 1414.0,363.6 1415.0,363.4 1416.0,363.2 1417.0,363.1 1418.0,362.9 1419.0,362.7 1420.0,362.6 1421.0,362.5 1422.0,362.3 1423.0,362.2 1424.0,362.1 1425.0,362.0 1426.0,361.9 1427.0,361.8 1428.0,361.7 1429.0,361.6 1430.0,361.5 1431.0,361.4 1432.0,361.3 1433.0,361.2 1434.0,361.1 1435.0,361.0 1436.0,361.0 1437.0,360.9 1438.0,360.8 1439.0,360.8 1440.0,360.7 1441.0,360.7 1442.0,360.6 1443.0,360.6 1444.0,360.6 1445.0,360.6 1446.0,360.5 1447.0,360.5 1448.0,360.5 1449.0,360.5 1450.0,360.4 1451.0,360.4 1452.0,360.4 1453.0,360.4 1454.0,360.4 1455.0,360.3 1456.0,360.3 1457.0,360.3 1458.0,360.3 1459.0,360.2 1460.0,360.2 1461.0,360.2 1462.0,360.2 1463.0,360.2 1464.0,360.1 1465.0,360.1 1466.0,360.1 1467.0,360.1 1468.0,360.1 1469.0,360.0 1470.0,360.0 1471.0,360.0 1472.0,360.0 1473.0,360.0 1474.0,359.9 1475.0,359.9 1476.0,359.9 1477.0,359.9 1478.0,359.9 1479.0,359.9 1480.0,359.9 1481.0,359.9 1482.0,359.9 1483.0,359.9 1484.0,359.9 1485.0,359.9 1486.0,359.9 1487.0,359.9 1488.0,359.9 1489.0,359.9 1490.0,359.9 1491.0,359.9 1492.0,360.0 1493.0,360.0 1494.0,360.0 1495.0,360.0 1496.0,360.0 1497.0,360.0 1498.0,360.0 1499.0,360.1 1500.0,360.1 1501.0,360.1 1502.0,360.1 1503.0,360.1 1504.0,360.1 1505.0,360.1 1506.0,360.1 1507.0,360.2 1508.0,360.2 1509.0,360.2 1510.0,360.2 1511.0,360.2 1512.0,360.1 1513.0,360.1 1514.0,360.1 1515.0,360.0 1516.0,360.0 1517.0,359.9 1518.0,359.8 1519.0,359.7 1520.0,359.5 1521.0,359.4 1522.0,359.2 1523.0,359.1 1524.0,358.9 1525.0,358.7 1526.0,358.5 1527.0,358.3 1528.0,358.1 1529.0,357.9 1530.0,357.7 1531.0,357.5 1532.0,357.3 1533.0,357.1 1534.0,356.9 1535.0,356.7 1536.0,356.5 1537.0,356.3 1538.0,356.0 1539.0,355.8 1540.0,355.6 1541.0,355.3 1542.0,355.1 1543.0,354.8 1544.0,354.6 1545.0,354.3 1546.0,354.0 1547.0,353.7 1548.0,353.5 1549.0,353.2 1550.0,352.9 1551.0,352.6 1552.0,352.3 1553.0,352.0 1554.0,351.7 1555.0,351.5 1556.0,351.2 1557.0,350.9 1558.0,350.5 1559.0,350.2 1560.0,349.9 1561.0,349.5 1562.0,349.2 1563.0,348.8 1564.0,348.4 1565.0,347.9 1566.0,347.4 1567.0,346.9 1568.0,346.4 1569.0,345.9 1570.0,345.3 1571.0,344.8 1572.0,344.2 1573.0,343.6 1574.0,343.0 1575.0,342.4 1576.0,341.8 1577.0,341.2 1578.0,340.6 1579.0,340.0 1580.0,339.4 1581.0,338.8 1582.0,338.2 1583.0,337.6 1584.0,337.0 1585.0,336.4 1586.0,335.8 1587.0,335.2 1588.0,334.6 1589.0,334.0 1590.0,333.4 1591.0,332.9 1592.0,332.3 1593.0,331.7 1594.0,331.2 1595.0,330.6 1596.0,330.1 1597.0,329.5 1598.0,329.0 1599.0,328.4 1600.0,327.9 1601.0,327.4 1602.0,326.9 1603.0,326.3 1604.0,325.8 1605.0,325.3 1606.0,324.8 1607.0,324.2 1608.0,323.7 1609.0,323.2 1610.0,322.7 1611.0,322.2 1612.0,321.6 1613.0,321.1 1614.0,320.5 1615.0,320.0 1616.0,319.4 1617.0,318.8 1618.0,318.2 1619.0,317.6 1620.0,316.9 1621.0,316.3 1622.0,315.6 1623.0,314.8 1624.0,314.1 1625.0,313.4 1626.0,312.6 1627.0,311.8 1628.0,311.0 1629.0,310.3 1630.0,309.5 1631.0,308.7 1632.0,307.9 1633.0,307.1 1634.0,306.4 1635.0,305.6 1636.0,304.9 1637.0,304.1 1638.0,303.4 1639.0,302.7 1640.0,301.9 1641.0,301.2 1642.0,300.5 1643.0,299.8 1644.0,299.0 1645.0,298.3 1646.0,297.5 1647.0,296.7 1648.0,295.9 1649.0,295.1 1650.0,294.2 1651.0,293.3 1652.0,292.4 1653.0,291.4 1654.0,290.4 1655.0,289.4 1656.0,288.3 1657.0,287.3 1658.0,286.2 1659.0,285.1 1660.0,284.0 1661.0,283.0 1662.0,281.9 1663.0,280.8 1664.0,279.8 1665.0,278.8 1666.0,277.7 1667.0,276.7 1668.0,275.7 1669.0,274.7 1670.0,273.7 1671.0,272.7 1672.0,271.7 1673.0,270.7 1674.0,269.7 1675.0,268.7 1676.0,267.7 1677.0,266.7 1678.0,265.7 1679.0,264.6 1680.0,263.6 1681.0,262.6 1682.0,261.5 1683.0,260.5 1684.0,259.4 1685.0,258.3 1686.0,257.2 1687.0,256.1 1688.0,254.9 1689.0,253.8 1690.0,252.6 1691.0,251.4 1692.0,250.3 1693.0,249.1 1694.0,247.9 1695.0,246.7 1696.0,245.5 1697.0,244.4 1698.0,243.2 1699.0,242.0 1700.0,240.9 1701.0,239.7 1702.0,238.6 1703.0,237.5 1704.0,236.3 1705.0,235.2 1706.0,234.1 1707.0,233.0 1708.0,231.9 1709.0,230.8 1710.0,229.7 1711.0,228.6 1712.0,227.4 1713.0,226.3 1714.0,225.2 1715.0,224.1 1716.0,222.9 1717.0,221.8 1718.0,220.6 1719.0,219.5 1720.0,218.3 1721.0,217.1 1722.0,215.9 1723.0,214.8 1724.0,213.6 1725.0,212.4 1726.0,211.2 1727.0,210.0 1728.0,208.8 1729.0,207.6 1730.0,206.4 1731.0,205.2 1732.0,204.0 1733.0,202.9 1734.0,201.7 1735.0,200.5 1736.0,199.4 1737.0,198.3 1738.0,197.1 1739.0,196.0 1740.0,194.9 1741.0,193.8 1742.0,192.7 1743.0,191.6 1744.0,190.5 1745.0,189.4 1746.0,188.3 1747.0,187.2 1748.0,186.1 1749.0,185.0 1750.0,184.0 1751.0,182.9 1752.0,181.8 1753.0,180.8 1754.0,179.7 1755.0,178.7 1756.0,177.7 1757.0,176.6 1758.0,175.6 1759.0,174.6 1760.0,173.6 1761.0,172.6 1762.0,171.6 1763.0,170.6 1764.0,169.6 1765.0,168.6 1766.0,167.7 1767.0,166.8 1768.0,165.9 1769.0,165.1 1770.0,164.3 1771.0,163.6 1772.0,163.0 1773.0,162.5" fill="none" stroke="#00ffff" stroke-width="2"/>
<polyline points="2.0,351.0 3.0,351.4 4.0,352.0 5.0,352.6 6.0,353.3 7.0,353.9 8.0,354.6 9.0,355.2 10.0,355.9 11.0,356.5 12.0,357.2 13.0,357.8 14.0,358.3 15.0,358.8 16.0,359.1 17.0,359.5 18.0,359.8 19.0,360.0 20.0,360.3 21.0,360.7 22.0,361.0 23.0,361.4 24.0,361.8 25.0,362.3 26.0,362.8 27.0,363.2 28.0,363.7 29.0,364.1 30.0,364.6 31.0,365.1 32.0,365.5 33.0,366.0 34.0,366.5 35.0,366.9 36.0,367.4 37.0,367.8 38.0,368.3 39.0,368.7 40.0,369.0 41.0,369.3 42.0,369.6 43.0,370.0 44.0,370.3 45.0,370.6 46.0,370.9 47.0,371.2 48.0,371.5 49.0,371.8 50.0,372.1 51.0,372.4 52.0,372.8 53.0,373.3 54.0,373.8 55.0,374.4 56.0,375.1 57.0,375.7 58.0,376.4 59.0,377.0 60.0,377.7 61.0,378.4 62.0,379.0 63.0,379.7 64.0,380.3 65.0,381.0 66.0,381.7 67.0,382.4 68.0,383.1 69.0,383.7 70.0,384.4 71.0,385.1 72.0,385.8 73.0,386.5 74.0,387.2 75.0,387.9 76.0,388.6 77.0,389.3 78.0,390.0 79.0,390.7 80.0,391.4 81.0,392.1 82.0,392.7 83.0,393.4 84.0,394.0 85.0,394.6 86.0,395.1 87.0,395.6 88.0,396.1 89.0,396.6 90.0,397.1 91.0,397.6 92.0,398.1 93.0,398.6 94.0,399.1 95.0,399.6 96.0,400.1 97.0,400.5 98.0,400.9 99.0,401.3 100.0,401.6 101.0,401.9 102.0,402.3 103.0,402.6 104.0,402.9 105.0,403.2 106.0,403.6 107.0,403.9 108.0,404.2 109.0,404.5 110.0,404.8 111.0,405.0 112.0,405.1 113.0,405.3 114.0,405.4 115.0,405.5 116.0,405.6 117.0,405.7 118.0,405.8 119.0,405.9 120.0,406.0 121.0,406.1 122.0,406.2 123.0,406.3 124.0,406.4 125.0,406.5 126.0,406.6 127.0,406.7 128.0,406.8 129.0,406.9 130.0,407.0 131.0,407.1 132.0,407.2 133.0,407.3 134.0,407.4 135.0,407.5 136.0,407.6 137.0,407.7 138.0,407.8 139.0,407.9 140.0,408.0 141.0,408.0 142.0,408.1 143.0,408.1 144.0,407.9 145.0,407.7 146.0,407.4 147.0,407.1 148.0,406.8 149.0,406.4 150.0,406.1 151.0,405.8 152.0,405.5 153.0,405.3 154.0,405.0 155.0,404.7 156.0,404.4 157.0,404.0 158.0,403.6 159.0,403.0 160.0,402.3 161.0,401.5 162.0,400.7 163.0,399.9 164.0,399.1 165.0,398.3 166.0,397.5 167.0,396.7 168.0,395.9 169.0,395.1 170.0,394.3 171.0,393.6 172.0,392.8 173.0,392.1 174.0,391.3 175.0,390.6 176.0,389.8 177.0,389.1 178.0,388.2 179.0,387.3 180.0,386.1 181.0,384.8 182.0,383.4 183.0,382.0 184.0,380.6 185.0,379.3 186.0,378.2 187.0,377.1 188.0,376.1 189.0,375.1 190.0,374.1 191.0,373.1 192.0,372.1 193.0,371.1 194.0,370.2 195.0,369.5 196.0,368.9 197.0,368.5 198.0,368.2 199.0,368.0 200.0,367.8 201.0,367.6 202.0,367.3 203.0,367.1 204.0,366.8 205.0,366.5 206.0,366.1 207.0,365.7 208.0,365.3 209.0,364.8 210.0,364.4 211.0,364.0 212.0,363.5 213.0,363.1 214.0,362.7 215.0,362.2 216.0,361.7 217.0,361.1 218.0,360.5 219.0,360.0 220.0,359.4 221.0,358.8 222.0,358.3 223.0,357.8 224.0,357.4 225.0,357.1 226.0,357.0 227.0,356.9 228.0,356.9 229.0,356.9 230.0,356.9 231.0,356.9 232.0,356.9 233.0,356.9 234.0,356.9 235.0,356.9 236.0,356.9 237.0,356.9 238.0,356.9 239.0,356.9 240.0,356.9 241.0,356.9 242.0,356.8 243.0,356.5 244.0,356.2 245.0,355.7 246.0,355.1 247.0,354.5 248.0,353.9 249.0,353.4 250.0,352.8 251.0,352.2 252.0,351.6 253.0,351.1 254.0,350.7 255.0,350.4 256.0,350.2 257.0,350.2 258.0,350.3 259.0,350.4 260.0,350.5 261.0,350.6 262.0,350.7 263.0,350.9 264.0,351.0 265.0,351.3 266.0,351.6 267.0,351.9 268.0,352.2 269.0,352.6 270.0,352.9 271.0,353.2 272.0,353.4 273.0,353.5 274.0,353.6 275.0,353.6 276.0,353.6 277.0,353.6 278.0,353.6 279.0,353.6 280.0,353.6 281.0,353.6 282.0,353.5 283.0,353.4 284.0,353.2 285.0,353.0 286.0,352.7 287.0,352.5 288.0,352.2 289.0,352.0 290.0,351.7 291.0,351.5 292.0,351.3 293.0,351.1 294.0,350.9 295.0,350.7 296.0,350.4 297.0,350.2 298.0,350.0 299.0,349.7 300.0,349.3 301.0,348.8 302.0,348.2 303.0,347.5 304.0,346.9 305.0,346.2 306.0,345.5 307.0,344.8 308.0,344.1 309.0,343.4 310.0,342.7 311.0,341.9 312.0,340.9 313.0,339.7 314.0,338.3 315.0,336.8 316.0,335.2 317.0,333.7 318.0,332.2 319.0,330.6 320.0,329.1 321.0,327.7 322.0,326.4 323.0,325.2 324.0,324.2 325.0,323.3 326.0,322.4 327.0,321.5 328.0,320.6 329.0,319.7 330.0,318.8 331.0,317.9 332.0,317.0 333.0,316.1 334.0,315.2 335.0,314.3 336.0,313.4 337.0,312.5 338.0,311.6 339.0,310.7 340.0,309.8 341.0,309.0 342.0,308.3 343.0,307.7 344.0,307.2 345.0,306.8 346.0,306.4 347.0,305.9 348.0,305.5 349.0,305.1 350.0,304.7 351.0,304.3 352.0,303.9 353.0,303.5 354.0,303.1 355.0,302.6 356.0,302.2 357.0,301.8 358.0,301.4 359.0,301.1 360.0,300.9 361.0,300.8 362.0,300.8 363.0,300.8 364.0,300.9 365.0,300.9 366.0,301.0 367.0,301.0 368.0,301.1 369.0,301.1 370.0,301.1 371.0,301.2 372.0,301.2 373.0,301.3 374.0,301.3 375.0,301.4 376.0,301.4 377.0,301.4 378.0,301.5 379.0,301.5 380.0,301.6 381.0,301.6 382.0,301.7 383.0,301.7 384.0,301.7 385.0,301.8 386.0,301.8 387.0,301.9 388.0,301.9 389.0,301.8 390.0,301.4 391.0,300.9 392.0,300.1 393.0,299.2 394.0,298.3 395.0,297.3 396.0,296.4 397.0,295.4 398.0,294.5 399.0,293.6 400.0,292.6 401.0,291.7 402.0,290.8 403.0,289.8 404.0,288.9 405.0,287.9 406.0,287.0 407.0,286.1 408.0,285.2 409.0,284.3 410.0,283.5 411.0,282.6 412.0,281.7 413.0,280.9 414.0,280.0 415.0,279.1 416.0,278.3 417.0,277.4 418.0,276.6 419.0,275.7 420.0,274.8 421.0,274.0 422.0,273.1 423.0,272.3 424.0,271.4 425.0,270.5 426.0,269.7 427.0,268.8 428.0,268.0 429.0,267.1 430.0,266.3 431.0,265.5 432.0,264.8 433.0,264.4 434.0,264.1 435.0,264.0 436.0,264.0 437.0,264.0 438.0,264.1 439.0,264.2 440.0,264.7 441.0,265.4 442.0,266.4 443.0,267.5 444.0,268.5 445.0,269.5 446.0,270.4 447.0,271.1 448.0,271.8 449.0,272.5 450.0,273.2 451.0,273.9 452.0,274.6 453.0,275.4 454.0,276.4 455.0,277.7 456.0,279.1 457.0,280.6 458.0,282.1 459.0,283.7 460.0,285.2 461.0,286.7 462.0,288.2 463.0,289.5 464.0,290.7 465.0,291.8 466.0,292.8 467.0,293.8 468.0,294.8 469.0,295.8 470.0,296.8 471.0,297.7 472.0,298.6 473.0,299.2 474.0,299.7 475.0,299.9 476.0,300.1 477.0,300.3 478.0,300.5 479.0,300.6 480.0,300.8 481.0,301.0 482.0,301.1 483.0,301.3 484.0,301.4 485.0,301.5 486.0,301.5 487.0,301.5 488.0,301.4 489.0,301.4 490.0,301.3 491.0,301.3 492.0,301.2 493.0,301.2 494.0,301.1 495.0,300.9 496.0,300.7 497.0,300.5 498.0,300.2 499.0,300.0 500.0,299.7 501.0,299.5 502.0,299.2 503.0,299.0 504.0,298.9 505.0,298.8 506.0,298.8 507.0,298.9 508.0,299.0 509.0,299.1 510.0,299.2 511.0,299.3 512.0,299.4 513.0,299.5 514.0,299.7 515.0,299.9 516.0,300.3 517.0,300.6 518.0,301.0 519.0,301.4 520.0,301.8 521.0,302.2 522.0,302.6 523.0,303.0 524.0,303.3 525.0,303.5 526.0,303.6 527.0,303.6 528.0,303.6 529.0,303.6 530.0,303.6 531.0,303.6 532.0,303.6 533.0,303.6 534.0,303.6 535.0,303.6 536.0,303.7 537.0,303.7 538.0,303.7 539.0,303.8 540.0,303.8 541.0,303.9 542.0,303.9 543.0,303.9 544.0,303.9 545.0,303.9 546.0,303.8 547.0,303.7 548.0,303.6 549.0,303.5 550.0,303.4 551.0,303.2 552.0,303.1 553.0,303.0 554.0,302.9 555.0,302.7 556.0,302.6 557.0,302.5 558.0,302.4 559.0,302.3 560.0,302.3 561.0,302.5 562.0,302.9 563.0,303.4 564.0,304.0 565.0,304.6 566.0,305.1 567.0,305.7 568.0,306.3 569.0,307.0 570.0,307.7 571.0,308.7 572.0,309.8 573.0,311.1 574.0,312.4 575.0,313.8 576.0,315.2 577.0,316.6 578.0,318.0 579.0,319.4 580.0,320.8 581.0,322.1 582.0,323.5 583.0,324.9 584.0,326.3 585.0,327.7 586.0,329.1 587.0,330.5 588.0,331.8 589.0,333.2 590.0,334.7 591.0,336.1 592.0,337.7 593.0,339.3 594.0,340.9 595.0,342.5 596.0,344.2 597.0,345.8 598.0,347.4 599.0,349.1 600.0,350.7 601.0,352.4 602.0,354.0 603.0,355.6 604.0,357.3 605.0,358.9 606.0,360.5 607.0,362.2 608.0,363.8 609.0,365.3 610.0,366.7 611.0,367.7 612.0,368.3 613.0,368.5 614.0,368.5 615.0,368.4 616.0,368.4 617.0,368.3 618.0,368.2 619.0,368.1 620.0,368.1 621.0,368.0 622.0,367.9 623.0,367.9 624.0,367.8 625.0,367.7 626.0,367.7 627.0,367.6 628.0,367.5 629.0,367.4 630.0,367.4 631.0,367.3 632.0,367.2 633.0,367.2 634.0,367.1 635.0,367.0 636.0,367.0 637.0,366.9 638.0,366.8 639.0,366.7 640.0,366.4 641.0,365.9 642.0,365.1 643.0,364.1 644.0,362.9 645.0,361.7 646.0,360.5 647.0,359.3 648.0,358.1 649.0,356.9 650.0,355.6 651.0,354.4 652.0,353.2 653.0,352.1 654.0,351.0 655.0,349.9 656.0,349.0 657.0,348.0 658.0,347.1 659.0,346.1 660.0,345.2 661.0,344.3 662.0,343.3 663.0,342.4 664.0,341.5 665.0,340.5 666.0,339.6 667.0,338.7 668.0,337.7 669.0,336.8 670.0,335.9 671.0,334.9 672.0,334.0 673.0,333.1 674.0,332.1 675.0,331.2 676.0,330.3 677.0,329.3 678.0,328.4 679.0,327.5 680.0,326.5 681.0,325.6 682.0,324.7 683.0,323.7 684.0,322.8 685.0,321.9 686.0,320.9 687.0,320.0 688.0,319.1 689.0,318.2 690.0,317.3 691.0,316.6 692.0,316.1 693.0,315.8 694.0,315.7 695.0,315.7 696.0,315.6 697.0,315.6 698.0,315.5 699.0,315.5 700.0,315.4 701.0,315.4 702.0,315.3 703.0,315.3 704.0,315.3 705.0,315.2 706.0,315.2 707.0,315.1 708.0,315.1 709.0,314.9 710.0,314.7 711.0,314.2 712.0,313.7 713.0,313.1 714.0,312.4 715.0,311.8 716.0,311.1 717.0,310.5 718.0,309.8 719.0,309.2 720.0,308.6 721.0,308.0 722.0,307.4 723.0,306.9 724.0,306.5 725.0,306.0 726.0,305.6 727.0,305.2 728.0,304.8 729.0,304.4 730.0,304.0 731.0,303.6 732.0,303.2 733.0,302.9 734.0,302.6 735.0,302.4 736.0,302.2 737.0,302.2 738.0,302.1 739.0,302.1 740.0,302.0 741.0,302.0 742.0,301.9 743.0,301.9 744.0,301.8 745.0,301.8 746.0,301.7 747.0,301.7 748.0,301.6 749.0,301.5 750.0,301.5 751.0,301.4 752.0,301.4 753.0,301.3 754.0,301.3 755.0,301.3 756.0,301.5 757.0,301.9 758.0,302.5 759.0,303.1 760.0,303.8 761.0,304.5 762.0,305.2 763.0,305.9 764.0,306.6 765.0,307.3 766.0,308.0 767.0,308.7 768.0,309.4 769.0,310.2 770.0,310.9 771.0,311.7 772.0,312.4 773.0,313.2 774.0,313.9 775.0,314.7 776.0,315.4 777.0,316.2 778.0,316.9 779.0,317.7 780.0,318.5 781.0,319.2 782.0,320.0 783.0,320.8 784.0,321.6 785.0,322.4 786.0,323.1 787.0,323.9 788.0,324.7 789.0,325.5 790.0,326.3 791.0,327.0 792.0,327.8 793.0,328.6 794.0,329.4 795.0,330.2 796.0,331.0 797.0,331.9 798.0,332.9 799.0,334.0 800.0,335.2 801.0,336.4 802.0,337.7 803.0,338.9 804.0,340.1 805.0,341.3 806.0,342.4 807.0,343.4 808.0,344.3 809.0,345.1 810.0,346.0 811.0,346.8 812.0,347.6 813.0,348.5 814.0,349.3 815.0,350.2 816.0,351.0 817.0,351.8 818.0,352.6 819.0,353.2 820.0,353.7 821.0,354.0 822.0,354.2 823.0,354.4 824.0,354.6 825.0,354.7 826.0,354.9 827.0,355.2 828.0,355.4 829.0,355.8 830.0,356.2 831.0,356.6 832.0,357.1 833.0,357.5 834.0,358.0 835.0,358.4 836.0,358.9 837.0,359.4 838.0,359.9 839.0,360.4 840.0,361.0 841.0,361.7 842.0,362.5 843.0,363.2 844.0,364.0 845.0,364.7 846.0,365.5 847.0,366.3 848.0,367.3 849.0,368.4 850.0,369.6 851.0,370.8 852.0,372.0 853.0,373.3 854.0,374.6 855.0,375.8 856.0,377.0 857.0,378.2 858.0,379.3 859.0,380.1 860.0,380.7 861.0,381.0 862.0,381.3 863.0,381.4 864.0,381.6 865.0,381.8 866.0,382.0 867.0,382.2 868.0,382.5 869.0,382.8 870.0,383.2 871.0,383.6 872.0,384.0 873.0,384.4 874.0,384.8 875.0,385.2 876.0,385.6 877.0,386.0 878.0,386.4 879.0,386.9 880.0,387.4 881.0,388.0 882.0,388.6 883.0,389.2 884.0,389.8 885.0,390.4 886.0,390.9 887.0,391.5 888.0,392.1 889.0,392.6 890.0,392.9 891.0,393.1 892.0,393.1 893.0,393.1 894.0,393.0 895.0,392.9 896.0,392.8 897.0,392.7 898.0,392.7 899.0,392.6 900.0,392.5 901.0,392.4 902.0,392.3 903.0,392.3 904.0,392.3 905.0,392.4 906.0,392.9 907.0,393.9 908.0,395.3 909.0,397.0 910.0,398.7 911.0,400.5 912.0,402.3 913.0,404.1 914.0,406.0 915.0,408.0 916.0,410.1 917.0,412.5 918.0,415.0 919.0,417.5 920.0,420.1 921.0,422.7 922.0,425.3 923.0,427.8 924.0,430.3 925.0,432.5 926.0,434.6 927.0,436.5 928.0,438.3 929.0,440.0 930.0,441.8 931.0,443.6 932.0,445.3 933.0,447.1 934.0,448.8 935.0,450.6 936.0,452.4 937.0,454.1 938.0,455.9 939.0,457.7 940.0,459.4 941.0,461.1 942.0,462.8 943.0,464.3 944.0,465.6 945.0,466.7 946.0,467.7 947.0,468.7 948.0,469.7 949.0,470.7 950.0,471.7 951.0,472.7 952.0,473.8 953.0,474.8 954.0,475.8 955.0,476.8 956.0,477.8 957.0,478.8 958.0,479.7 959.0,480.5 960.0,481.0 961.0,481.1 962.0,480.6 963.0,479.9 964.0,479.0 965.0,478.1 966.0,477.1 967.0,476.2 968.0,475.2 969.0,474.3 970.0,473.4 971.0,472.4 972.0,471.5 973.0,470.5 974.0,469.6 975.0,468.7 976.0,467.7 977.0,466.8 978.0,465.8 979.0,464.9 980.0,463.8 981.0,462.7 982.0,461.6 983.0,460.4 984.0,459.2 985.0,458.1 986.0,457.3 987.0,456.5 988.0,455.8 989.0,455.1 990.0,454.4 991.0,453.8 992.0,453.1 993.0,452.4 994.0,451.8 995.0,451.1 996.0,450.5 997.0,450.0 998.0,449.7 999.0,449.4 1000.0,449.2 1001.0,449.0 1002.0,448.7 1003.0,448.3 1004.0,447.7 1005.0,446.9 1006.0,446.0 1007.0,445.0 1008.0,444.0 1009.0,443.0 1010.0,442.0 1011.0,441.0 1012.0,440.0 1013.0,439.0 1014.0,438.0 1015.0,437.0 1016.0,436.0 1017.0,435.0 1018.0,434.0 1019.0,433.0 1020.0,432.0 1021.0,431.0 1022.0,430.0 1023.0,429.0 1024.0,428.0 1025.0,427.1 1026.0,426.2 1027.0,425.3 1028.0,424.4 1029.0,423.6 1030.0,422.7 1031.0,421.8 1032.0,421.0 1033.0,420.1 1034.0,419.3 1035.0,418.5 1036.0,417.9 1037.0,417.3 1038.0,416.7 1039.0,416.2 1040.0,415.7 1041.0,415.2 1042.0,414.7 1043.0,414.2 1044.0,413.7 1045.0,413.2 1046.0,412.7 1047.0,412.1 1048.0,411.5 1049.0,410.8 1050.0,410.1 1051.0,409.2 1052.0,408.4 1053.0,407.5 1054.0,406.6 1055.0,405.8 1056.0,404.9 1057.0,404.1 1058.0,403.4 1059.0,402.9 1060.0,402.8 1061.0,402.9 1062.0,403.2 1063.0,403.5 1064.0,403.8 1065.0,404.2 1066.0,404.6 1067.0,405.2 1068.0,406.0 1069.0,406.9 1070.0,407.9 1071.0,408.9 1072.0,409.9 1073.0,410.9 1074.0,412.0 1075.0,413.0 1076.0,414.0 1077.0,415.0 1078.0,416.0 1079.0,417.0 1080.0,417.9 1081.0,418.7 1082.0,419.5 1083.0,420.2 1084.0,420.8 1085.0,421.5 1086.0,422.1 1087.0,422.7 1088.0,423.3 1089.0,423.9 1090.0,424.5 1091.0,425.1 1092.0,425.7 1093.0,426.4 1094.0,427.1 1095.0,427.9 1096.0,428.8 1097.0,429.8 1098.0,430.8 1099.0,431.7 1100.0,432.7 1101.0,433.7 1102.0,434.7 1103.0,435.5 1104.0,436.2 1105.0,436.8 1106.0,437.2 1107.0,437.6 1108.0,437.9 1109.0,438.2 1110.0,438.6 1111.0,438.9 1112.0,439.1 1113.0,439.2 1114.0,439.0 1115.0,438.7 1116.0,438.1 1117.0,437.6 1118.0,437.0 1119.0,436.4 1120.0,435.8 1121.0,435.2 1122.0,434.6 1123.0,434.0 1124.0,433.4 1125.0,432.8 1126.0,432.3 1127.0,431.7 1128.0,431.1 1129.0,430.5 1130.0,430.0 1131.0,429.5 1132.0,429.1 1133.0,428.7 1134.0,428.4 1135.0,428.2 1136.0,427.9 1137.0,427.5 1138.0,427.1 1139.0,426.5 1140.0,425.7 1141.0,424.7 1142.0,423.6 1143.0,422.5 1144.0,421.4 1145.0,420.2 1146.0,419.1 1147.0,418.0 1148.0,416.9 1149.0,415.7 1150.0,414.6 1151.0,413.5 1152.0,412.3 1153.0,411.0 1154.0,409.8 1155.0,408.5 1156.0,407.2 1157.0,405.9 1158.0,404.6 1159.0,403.3 1160.0,402.1 1161.0,400.7 1162.0,399.4 1163.0,397.9 1164.0,396.3 1165.0,394.7 1166.0,392.9 1167.0,391.2 1168.0,389.4 1169.0,387.7 1170.0,385.9 1171.0,384.2 1172.0,382.4 1173.0,380.6 1174.0,378.8 1175.0,377.0 1176.0,375.2 1177.0,373.4 1178.0,371.6 1179.0,369.8 1180.0,368.1 1181.0,366.4 1182.0,364.9 1183.0,363.6 1184.0,362.5 1185.0,361.4 1186.0,360.4 1187.0,359.5 1188.0,358.5 1189.0,357.5 1190.0,356.5 1191.0,355.4 1192.0,354.4 1193.0,353.3 1194.0,352.1 1195.0,351.0 1196.0,349.9 1197.0,348.9 1198.0,347.9 1199.0,347.1 1200.0,346.5 1201.0,346.0 1202.0,345.6 1203.0,345.2 1204.0,344.9 1205.0,344.6 1206.0,344.4 1207.0,344.3 1208.0,344.3 1209.0,344.4 1210.0,344.5 1211.0,344.6 1212.0,344.7 1213.0,344.8 1214.0,345.0 1215.0,345.1 1216.0,345.3 1217.0,345.5 1218.0,345.7 1219.0,345.9 1220.0,346.1 1221.0,346.3 1222.0,346.5 1223.0,346.7 1224.0,346.9 1225.0,347.1 1226.0,347.3 1227.0,347.4 1228.0,347.6 1229.0,347.8 1230.0,348.0 1231.0,348.1 1232.0,348.3 1233.0,348.4 1234.0,348.5 1235.0,348.7 1236.0,348.8 1237.0,349.1 1238.0,349.4 1239.0,349.9 1240.0,350.5 1241.0,351.2 1242.0,351.8 1243.0,352.4 1244.0,352.9 1245.0,353.3 1246.0,353.7 1247.0,354.0 1248.0,354.3 1249.0,354.7 1250.0,355.0 1251.0,355.3 1252.0,355.6 1253.0,356.0 1254.0,356.3 1255.0,356.7 1256.0,357.1 1257.0,357.5 1258.0,357.9 1259.0,358.2 1260.0,358.6 1261.0,359.0 1262.0,359.3 1263.0,359.6 1264.0,359.7 1265.0,359.8 1266.0,359.9 1267.0,360.0 1268.0,360.0 1269.0,360.1 1270.0,360.2 1271.0,360.2 1272.0,360.3 1273.0,360.4 1274.0,360.4 1275.0,360.5 1276.0,360.7 1277.0,361.0 1278.0,361.4 1279.0,362.0 1280.0,362.6 1281.0,363.2 1282.0,363.8 1283.0,364.4 1284.0,364.9 1285.0,365.2 1286.0,365.4 1287.0,365.5 1288.0,365.6 1289.0,365.6 1290.0,365.7 1291.0,365.7 1292.0,365.7 1293.0,365.7 1294.0,365.8 1295.0,365.8 1296.0,365.8 1297.0,365.9 1298.0,365.9 1299.0,366.0 1300.0,366.1 1301.0,366.2 1302.0,366.3 1303.0,366.4 1304.0,366.5 1305.0,366.6 1306.0,366.7 1307.0,366.8 1308.0,366.9 1309.0,367.0 1310.0,367.1 1311.0,367.2 1312.0,367.3 1313.0,367.4 1314.0,367.5 1315.0,367.7 1316.0,367.8 1317.0,368.0 1318.0,368.2 1319.0,368.4 1320.0,368.5 1321.0,368.7 1322.0,368.9 1323.0,369.1 1324.0,369.2 1325.0,369.2 1326.0,369.1 1327.0,369.0 1328.0,368.8 1329.0,368.7 1330.0,368.5 1331.0,368.3 1332.0,368.2 1333.0,367.9 1334.0,367.4 1335.0,366.5 1336.0,364.9 1337.0,362.9 1338.0,360.7 1339.0,358.4 1340.0,356.0 1341.0,353.7 1342.0,351.4 1343.0,349.0 1344.0,346.7 1345.0,344.4 1346.0,342.0 1347.0,339.7 1348.0,337.3 1349.0,335.0 1350.0,332.7 1351.0,330.3 1352.0,328.0 1353.0,325.7 1354.0,323.4 1355.0,321.3 1356.0,319.3 1357.0,317.4 1358.0,315.6 1359.0,313.8 1360.0,312.0 1361.0,310.2 1362.0,308.4 1363.0,306.6 1364.0,304.8 1365.0,303.1 1366.0,301.3 1367.0,299.5 1368.0,297.7 1369.0,295.9 1370.0,294.1 1371.0,292.3 1372.0,290.5 1373.0,288.7 1374.0,286.9 1375.0,285.1 1376.0,283.3 1377.0,281.5 1378.0,279.8 1379.0,278.2 1380.0,276.8 1381.0,275.8 1382.0,275.2 1383.0,274.7 1384.0,274.3 1385.0,274.0 1386.0,273.7 1387.0,273.5 1388.0,273.5 1389.0,273.6 1390.0,273.9 1391.0,274.3 1392.0,274.8 1393.0,275.2 1394.0,275.6 1395.0,276.1 1396.0,276.5 1397.0,276.9 1398.0,277.4 1399.0,277.8 1400.0,278.2 1401.0,278.7 1402.0,279.1 1403.0,279.6 1404.0,280.2 1405.0,281.2 1406.0,282.6 1407.0,284.4 1408.0,286.5 1409.0,288.5 1410.0,290.2 1411.0,291.6 1412.0,292.8 1413.0,293.9 1414.0,294.9 1415.0,296.0 1416.0,297.1 1417.0,298.1 1418.0,299.2 1419.0,300.3 1420.0,301.4 1421.0,302.5 1422.0,303.6 1423.0,305.0 1424.0,306.6 1425.0,308.5 1426.0,310.5 1427.0,312.5 1428.0,314.6 1429.0,316.7 1430.0,318.8 1431.0,320.8 1432.0,322.7 1433.0,324.3 1434.0,325.6 1435.0,326.7 1436.0,327.7 1437.0,328.6 1438.0,329.6 1439.0,330.5 1440.0,331.4 1441.0,332.4 1442.0,333.3 1443.0,334.2 1444.0,335.2 1445.0,336.1 1446.0,336.9 1447.0,337.7 1448.0,338.3 1449.0,338.9 1450.0,339.4 1451.0,339.8 1452.0,340.2 1453.0,340.5 1454.0,340.8 1455.0,341.0 1456.0,341.1 1457.0,341.3 1458.0,341.4 1459.0,341.5 1460.0,341.7 1461.0,341.8 1462.0,342.0 1463.0,342.1 1464.0,342.3 1465.0,342.5 1466.0,342.8 1467.0,343.2 1468.0,343.7 1469.0,344.2 1470.0,344.7 1471.0,345.1 1472.0,345.6 1473.0,346.0 1474.0,346.2 1475.0,346.4 1476.0,346.6 1477.0,346.7 1478.0,346.8 1479.0,346.9 1480.0,347.0 1481.0,347.0 1482.0,346.9 1483.0,346.8 1484.0,346.6 1485.0,346.4 1486.0,346.1 1487.0,345.8 1488.0,345.5 1489.0,345.2 1490.0,344.8 1491.0,344.5 1492.0,344.1 1493.0,343.8 1494.0,343.5 1495.0,343.1 1496.0,342.8 1497.0,342.5 1498.0,342.3 1499.0,342.2 1500.0,342.2 1501.0,342.2 1502.0,342.3 1503.0,342.3 1504.0,342.4 1505.0,342.5 1506.0,342.5 1507.0,342.6 1508.0,342.7 1509.0,342.8 1510.0,342.8 1511.0,342.8 1512.0,342.8 1513.0,342.7 1514.0,342.5 1515.0,342.2 1516.0,341.9 1517.0,341.6 1518.0,341.2 1519.0,340.8 1520.0,340.2 1521.0,339.5 1522.0,338.7 1523.0,337.8 1524.0,336.9 1525.0,335.9 1526.0,335.0 1527.0,334.1 1528.0,333.1 1529.0,332.2 1530.0,331.2 1531.0,330.3 1532.0,329.4 1533.0,328.6 1534.0,327.9 1535.0,327.5 1536.0,327.2 1537.0,327.0 1538.0,326.8 1539.0,326.7 1540.0,326.5 1541.0,326.3 1542.0,326.2 1543.0,326.0 1544.0,325.8 1545.0,325.6 1546.0,325.3 1547.0,324.9 1548.0,324.6 1549.0,324.2 1550.0,323.9 1551.0,323.7 1552.0,323.5 1553.0,323.3 1554.0,323.2 1555.0,323.0 1556.0,322.8 1557.0,322.7 1558.0,322.5 1559.0,322.3 1560.0,322.1 1561.0,321.9 1562.0,321.6 1563.0,321.4 1564.0,321.1 1565.0,320.9 1566.0,320.6 1567.0,320.3 1568.0,320.0 1569.0,319.5 1570.0,318.8 1571.0,318.1 1572.0,317.3 1573.0,316.6 1574.0,315.8 1575.0,315.0 1576.0,314.2 1577.0,313.4 1578.0,312.6 1579.0,311.8 1580.0,311.0 1581.0,310.2 1582.0,309.3 1583.0,308.4 1584.0,307.5 1585.0,306.5 1586.0,305.5 1587.0,304.5 1588.0,303.5 1589.0,302.5 1590.0,301.4 1591.0,300.4 1592.0,299.4 1593.0,298.4 1594.0,297.4 1595.0,296.4 1596.0,295.4 1597.0,294.4 1598.0,293.4 1599.0,292.4 1600.0,291.4 1601.0,290.4 1602.0,289.4 1603.0,288.4 1604.0,287.4 1605.0,286.4 1606.0,285.4 1607.0,284.4 1608.0,283.4 1609.0,282.4 1610.0,281.4 1611.0,280.4 1612.0,279.4 1613.0,278.4 1614.0,277.4 1615.0,276.4 1616.0,275.4 1617.0,274.4 1618.0,273.4 1619.0,272.4 1620.0,271.4 1621.0,270.4 1622.0,269.4 1623.0,268.4 1624.0,267.4 1625.0,266.4 1626.0,265.4 1627.0,264.4 1628.0,263.4 1629.0,262.4 1630.0,261.4 1631.0,260.4 1632.0,259.4 1633.0,258.4 1634.0,257.4 1635.0,256.4 1636.0,255.4 1637.0,254.4 1638.0,253.4 1639.0,252.3 1640.0,251.3 1641.0,250.3 1642.0,249.1 1643.0,247.9 1644.0,246.4 1645.0,244.9 1646.0,243.2 1647.0,241.5 1648.0,239.8 1649.0,238.1 1650.0,236.4 1651.0,234.7 1652.0,233.0 1653.0,231.3 1654.0,229.6 1655.0,227.8 1656.0,226.1 1657.0,224.3 1658.0,222.4 1659.0,220.3 1660.0,218.0 1661.0,215.5 1662.0,212.9 1663.0,210.4 1664.0,207.8 1665.0,205.2 1666.0,202.7 1667.0,200.1 1668.0,197.7 1669.0,195.4 1670.0,193.4 1671.0,191.6 1672.0,190.0 1673.0,188.5 1674.0,187.0 1675.0,185.5 1676.0,184.0 1677.0,182.5 1678.0,181.1 1679.0,179.6 1680.0,178.2 1681.0,176.8 1682.0,175.4 1683.0,173.9 1684.0,172.5 1685.0,171.1 1686.0,169.7 1687.0,168.3 1688.0,166.9 1689.0,165.5 1690.0,164.1 1691.0,162.7 1692.0,161.3 1693.0,159.9 1694.0,158.5 1695.0,157.0 1696.0,155.6 1697.0,154.2 1698.0,152.8 1699.0,151.3 1700.0,149.8 1701.0,148.1 1702.0,146.4 1703.0,144.6 1704.0,142.8 1705.0,141.0 1706.0,139.2 1707.0,137.4 1708.0,135.5 1709.0,133.7 1710.0,131.9 1711.0,130.1 1712.0,128.3 1713.0,126.5 1714.0,124.7 1715.0,122.9 1716.0,121.1 1717.0,119.3 1718.0,117.5 1719.0,115.7 1720.0,113.9 1721.0,112.2 1722.0,110.4 1723.0,108.6 1724.0,106.8 1725.0,105.1 1726.0,103.3 1727.0,101.5 1728.0,99.8 1729.0,98.0 1730.0,96.2 1731.0,94.5 1732.0,92.7 1733.0,91.1 1734.0,89.7 1735.0,88.4 1736.0,87.2 1737.0,86.1 1738.0,84.9 1739.0,83.8 1740.0,82.7 1741.0,81.5 1742.0,80.4 1743.0,79.3 1744.0,78.2 1745.0,77.0 1746.0,76.0 1747.0,75.0 1748.0,74.2 1749.0,73.5 1750.0,73.0 1751.0,72.5 1752.0,72.0 1753.0,71.5 1754.0,71.0 1755.0,70.5 1756.0,70.0 1757.0,69.5 1758.0,69.0 1759.0,68.5 1760.0,68.0 1761.0,67.6 1762.0,67.3 1763.0,67.2 1764.0,67.3 1765.0,67.5 1766.0,67.8 1767.0,68.1 1768.0,68.5 1769.0,68.8 1770.0,69.1 1771.0,69.4 1772.0,69.6" fill="none" stroke="#ffff00" stroke-width="2"/>
<polyline points="2.0,354.1 3.0,354.6 4.0,355.4 5.0,356.3 6.0,357.1 7.0,358.0 8.0,358.8 9.0,359.7 10.0,360.5 11.0,361.4 12.0,362.2 13.0,362.9 14.0,363.7 15.0,364.5 16.0,365.3 17.0,366.0 18.0,366.8 19.0,367.6 20.0,368.3 21.0,369.1 22.0,369.9 23.0,370.6 24.0,371.4 25.0,372.0 26.0,372.4 27.0,372.6 28.0,372.8 29.0,372.9 30.0,373.0 31.0,373.1 32.0,373.2 33.0,373.3 34.0,373.4 35.0,373.5 36.0,373.6 37.0,373.7 38.0,373.8 39.0,373.9 40.0,374.0 41.0,374.1 42.0,374.2 43.0,374.4 44.0,374.5 45.0,374.6 46.0,374.7 47.0,374.9 48.0,375.1 49.0,375.3 50.0,375.5 51.0,375.7 52.0,375.9 53.0,376.2 54.0,376.6 55.0,377.3 56.0,378.1 57.0,379.0 58.0,379.9 59.0,380.8 60.0,381.7 61.0,382.6 62.0,383.5 63.0,384.4 64.0,385.3 65.0,386.2 66.0,387.2 67.0,388.3 68.0,389.5 69.0,390.7 70.0,391.9 71.0,393.2 72.0,394.6 73.0,396.1 74.0,397.6 75.0,399.2 76.0,400.8 77.0,402.3 78.0,403.8 79.0,404.9 80.0,405.6 81.0,405.8 82.0,405.7 83.0,405.6 84.0,405.4 85.0,405.3 86.0,405.2 87.0,405.0 88.0,404.9 89.0,404.7 90.0,404.6 91.0,404.5 92.0,404.3 93.0,404.2 94.0,404.0 95.0,403.8 96.0,403.5 97.0,403.2 98.0,402.9 99.0,402.5 100.0,402.2 101.0,402.0 102.0,401.8 103.0,401.8 104.0,401.8 105.0,401.9 106.0,402.0 107.0,402.0 108.0,402.1 109.0,402.2 110.0,402.6 111.0,403.3 112.0,404.3 113.0,405.5 114.0,406.7 115.0,407.9 116.0,409.1 117.0,410.3 118.0,411.2 119.0,411.8 120.0,412.3 121.0,412.6 122.0,412.9 123.0,413.2 124.0,413.5 125.0,413.7 126.0,413.8 127.0,413.8 128.0,413.8 129.0,413.8 130.0,413.8 131.0,413.8 132.0,413.7 133.0,413.5 134.0,413.2 135.0,412.9 136.0,412.6 137.0,412.3 138.0,411.9 139.0,411.3 140.0,410.5 141.0,409.6 142.0,408.7 143.0,407.7 144.0,406.8 145.0,405.9 146.0,405.1 147.0,404.2 148.0,403.4 149.0,402.4 150.0,401.3 151.0,399.8 152.0,398.2 153.0,396.7 154.0,395.3 155.0,394.1 156.0,392.9 157.0,391.8 158.0,390.6 159.0,389.5 160.0,388.4 161.0,387.6 162.0,387.0 163.0,386.5 164.0,386.1 165.0,385.8 166.0,385.4 167.0,385.0 168.0,384.6 169.0,384.2 170.0,383.8 171.0,383.3 172.0,382.6 173.0,381.8 174.0,380.8 175.0,379.8 176.0,378.8 177.0,377.8 178.0,376.8 179.0,375.6 180.0,374.4 181.0,373.0 182.0,371.5 183.0,370.0 184.0,368.6 185.0,367.3 186.0,366.1 187.0,364.9 188.0,363.8 189.0,362.6 190.0,361.5 191.0,360.4 192.0,359.2 193.0,358.1 194.0,357.1 195.0,356.2 196.0,355.6 197.0,355.3 198.0,355.2 199.0,355.1 200.0,355.2 201.0,355.4 202.0,355.8 203.0,356.3 204.0,356.9 205.0,357.5 206.0,358.1 207.0,358.6 208.0,359.2 209.0,359.7 210.0,360.1 211.0,360.6 212.0,361.0 213.0,361.5 214.0,361.9 215.0,362.3 216.0,362.7 217.0,362.9 218.0,362.8 219.0,362.4 220.0,361.7 221.0,360.9 222.0,360.1 223.0,359.4 224.0,358.7 225.0,358.3 226.0,358.1 227.0,357.9 228.0,357.8 229.0,357.7 230.0,357.6 231.0,357.5 232.0,357.5 233.0,357.4 234.0,357.3 235.0,357.1 236.0,357.0 237.0,356.7 238.0,356.1 239.0,355.2 240.0,354.1 241.0,352.9 242.0,351.7 243.0,350.6 244.0,349.4 245.0,348.5 246.0,347.8 247.0,347.4 248.0,347.1 249.0,346.9 250.0,346.8 251.0,346.6 252.0,346.4 253.0,346.2 254.0,346.0 255.0,345.8 256.0,345.8 257.0,345.8 258.0,345.9 259.0,346.1 260.0,346.2 261.0,346.4 262.0,346.6 263.0,346.9 264.0,347.6 265.0,348.8 266.0,350.3 267.0,352.0 268.0,353.7 269.0,355.4 270.0,357.0 271.0,358.3 272.0,359.4 273.0,360.3 274.0,361.2 275.0,362.1 276.0,362.9 277.0,363.4 278.0,363.7 279.0,363.6 280.0,363.4 281.0,363.2 282.0,363.0 283.0,362.7 284.0,362.4 285.0,361.8 286.0,360.9 287.0,359.7 288.0,358.4 289.0,357.1 290.0,355.8 291.0,354.4 292.0,353.0 293.0,351.5 294.0,349.8 295.0,348.0 296.0,346.1 297.0,344.1 298.0,342.2 299.0,340.4 300.0,338.6 301.0,337.1 302.0,335.7 303.0,334.3 304.0,332.9 305.0,331.6 306.0,330.2 307.0,328.8 308.0,327.5 309.0,326.1 310.0,324.7 311.0,323.4 312.0,322.0 313.0,320.6 314.0,319.2 315.0,317.8 316.0,316.4 317.0,315.0 318.0,313.6 319.0,312.2 320.0,310.8 321.0,309.5 322.0,308.3 323.0,307.4 324.0,306.7 325.0,306.0 326.0,305.3 327.0,304.7 328.0,304.0 329.0,303.3 330.0,302.7 331.0,302.0 332.0,301.3 333.0,300.7 334.0,300.0 335.0,299.4 336.0,298.8 337.0,298.6 338.0,298.8 339.0,299.3 340.0,300.0 341.0,300.6 342.0,301.3 343.0,301.9 344.0,302.4 345.0,302.6 346.0,302.5 347.0,302.3 348.0,302.0 349.0,301.8 350.0,301.5 351.0,301.2 352.0,300.9 353.0,300.6 354.0,300.3 355.0,300.1 356.0,299.8 357.0,299.6 358.0,299.5 359.0,299.5 360.0,299.5 361.0,299.5 362.0,299.5 363.0,299.5 364.0,299.5 365.0,299.5 366.0,299.5 367.0,299.5 368.0,299.5 369.0,299.5 370.0,299.5 371.0,299.5 372.0,299.5 373.0,299.4 374.0,299.3 375.0,299.2 376.0,299.2 377.0,299.1 378.0,299.0 379.0,298.9 380.0,298.8 381.0,298.8 382.0,298.7 383.0,298.6 384.0,298.5 385.0,298.4 386.0,298.3 387.0,298.2 388.0,298.1 389.0,297.9 390.0,297.2 391.0,296.0 392.0,294.4 393.0,292.6 394.0,290.8 395.0,289.0 396.0,287.2 397.0,285.5 398.0,283.7 399.0,281.9 400.0,280.1 401.0,278.3 402.0,276.5 403.0,274.7 404.0,272.8 405.0,271.0 406.0,269.2 407.0,267.3 408.0,265.5 409.0,263.6 410.0,261.8 411.0,260.0 412.0,258.1 413.0,256.3 414.0,254.4 415.0,252.6 416.0,250.9 417.0,249.6 418.0,249.0 419.0,249.0 420.0,249.5 421.0,250.1 422.0,250.7 423.0,251.3 424.0,251.9 425.0,252.5 426.0,253.1 427.0,254.0 428.0,255.3 429.0,257.1 430.0,259.2 431.0,261.3 432.0,263.4 433.0,265.6 434.0,267.7 435.0,269.9 436.0,272.0 437.0,274.2 438.0,276.3 439.0,278.4 440.0,280.5 441.0,282.6 442.0,284.6 443.0,286.6 444.0,288.6 445.0,290.2 446.0,291.4 447.0,292.4 448.0,293.3 449.0,294.2 450.0,295.1 451.0,295.9 452.0,296.8 453.0,297.6 454.0,298.4 455.0,299.1 456.0,299.8 457.0,300.5 458.0,301.2 459.0,301.9 460.0,302.6 461.0,303.2 462.0,303.8 463.0,304.2 464.0,304.3 465.0,304.2 466.0,304.1 467.0,303.9 468.0,303.7 469.0,303.6 470.0,303.4 471.0,303.2 472.0,303.1 473.0,302.9 474.0,302.7 475.0,302.6 476.0,302.5 477.0,302.3 478.0,302.2 479.0,302.1 480.0,301.9 481.0,301.8 482.0,301.6 483.0,301.4 484.0,301.0 485.0,300.6 486.0,300.2 487.0,299.7 488.0,299.3 489.0,298.9 490.0,298.5 491.0,298.1 492.0,297.8 493.0,297.5 494.0,297.1 495.0,296.8 496.0,296.5 497.0,296.2 498.0,296.0 499.0,296.0 500.0,296.2 501.0,296.5 502.0,296.9 503.0,297.3 504.0,297.6 505.0,298.0 506.0,298.3 507.0,298.6 508.0,298.8 509.0,298.9 510.0,299.0 511.0,299.2 512.0,299.3 513.0,299.5 514.0,299.8 515.0,300.4 516.0,301.2 517.0,302.2 518.0,303.2 519.0,304.2 520.0,305.1 521.0,306.1 522.0,307.1 523.0,308.0 524.0,308.8 525.0,309.3 526.0,309.4 527.0,309.5 528.0,309.5 529.0,309.3 530.0,309.0 531.0,308.5 532.0,308.0 533.0,307.5 534.0,306.9 535.0,306.4 536.0,305.8 537.0,305.3 538.0,304.8 539.0,304.3 540.0,304.0 541.0,303.8 542.0,303.6 543.0,303.4 544.0,303.1 545.0,302.8 546.0,302.4 547.0,301.9 548.0,301.3 549.0,300.8 550.0,300.2 551.0,299.6 552.0,299.1 553.0,298.5 554.0,297.9 555.0,297.4 556.0,296.8 557.0,296.4 558.0,296.4 559.0,296.8 560.0,297.6 561.0,298.5 562.0,299.4 563.0,300.4 564.0,301.4 565.0,302.6 566.0,304.3 567.0,306.5 568.0,309.2 569.0,312.0 570.0,314.8 571.0,317.6 572.0,320.4 573.0,323.2 574.0,326.0 575.0,328.9 576.0,331.9 577.0,335.1 578.0,338.5 579.0,341.8 580.0,345.2 581.0,348.6 582.0,352.0 583.0,355.4 584.0,358.8 585.0,362.2 586.0,365.5 587.0,368.7 588.0,371.3 589.0,372.9 590.0,373.5 591.0,373.7 592.0,373.7 593.0,373.7 594.0,373.7 595.0,373.7 596.0,373.7 597.0,373.7 598.0,373.7 599.0,373.7 600.0,373.6 601.0,373.4 602.0,373.1 603.0,372.5 604.0,372.0 605.0,371.4 606.0,370.8 607.0,370.2 608.0,369.6 609.0,369.1 610.0,368.5 611.0,367.9 612.0,367.3 613.0,366.7 614.0,366.2 615.0,365.7 616.0,365.3 617.0,365.2 618.0,365.3 619.0,365.5 620.0,365.6 621.0,365.8 622.0,365.9 623.0,366.1 624.0,366.3 625.0,366.4 626.0,366.6 627.0,366.7 628.0,366.9 629.0,366.9 630.0,367.0 631.0,367.0 632.0,367.0 633.0,367.0 634.0,367.0 635.0,367.0 636.0,367.0 637.0,367.0 638.0,367.0 639.0,367.0 640.0,366.7 641.0,365.7 642.0,363.9 643.0,361.3 644.0,358.6 645.0,355.7 646.0,352.9 647.0,350.1 648.0,347.3 649.0,344.5 650.0,341.7 651.0,338.9 652.0,336.1 653.0,333.5 654.0,331.1 655.0,329.1 656.0,327.3 657.0,325.7 658.0,324.0 659.0,322.3 660.0,320.7 661.0,319.0 662.0,317.3 663.0,315.7 664.0,314.0 665.0,312.4 666.0,310.9 667.0,309.9 668.0,310.0 669.0,311.1 670.0,312.9 671.0,314.9 672.0,316.9 673.0,318.8 674.0,320.3 675.0,321.2 676.0,321.8 677.0,322.2 678.0,322.6 679.0,323.0 680.0,323.4 681.0,323.8 682.0,324.2 683.0,324.6 684.0,325.0 685.0,325.3 686.0,325.4 687.0,325.0 688.0,324.1 689.0,323.0 690.0,321.8 691.0,320.6 692.0,319.4 693.0,318.2 694.0,317.0 695.0,315.8 696.0,314.6 697.0,313.4 698.0,312.3 699.0,311.4 700.0,310.8 701.0,310.3 702.0,310.0 703.0,309.6 704.0,309.3 705.0,308.9 706.0,308.6 707.0,308.2 708.0,307.9 709.0,307.5 710.0,307.1 711.0,306.7 712.0,306.2 713.0,305.7 714.0,305.2 715.0,304.7 716.0,304.2 717.0,303.7 718.0,303.2 719.0,302.7 720.0,302.4 721.0,302.1 722.0,302.0 723.0,301.8 724.0,301.7 725.0,301.5 726.0,301.4 727.0,301.2 728.0,301.1 729.0,300.9 730.0,300.8 731.0,300.6 732.0,300.5 733.0,300.5 734.0,300.4 735.0,300.3 736.0,300.3 737.0,300.2 738.0,300.2 739.0,300.1 740.0,300.1 741.0,300.0 742.0,300.0 743.0,300.0 744.0,300.1 745.0,300.4 746.0,300.7 747.0,301.1 748.0,301.5 749.0,301.9 750.0,302.1 751.0,302.3 752.0,302.3 753.0,302.3 754.0,302.3 755.0,302.3 756.0,302.3 757.0,302.4 758.0,302.7 759.0,303.4 760.0,304.5 761.0,305.8 762.0,307.2 763.0,308.6 764.0,310.1 765.0,311.5 766.0,312.9 767.0,314.3 768.0,315.6 769.0,317.0 770.0,318.4 771.0,319.8 772.0,321.2 773.0,322.5 774.0,323.9 775.0,325.3 776.0,326.8 777.0,328.2 778.0,329.7 779.0,331.2 780.0,332.7 781.0,334.2 782.0,335.5 783.0,336.6 784.0,337.3 785.0,337.8 786.0,338.2 787.0,338.6 788.0,339.0 789.0,339.6 790.0,340.4 791.0,341.2 792.0,342.1 793.0,343.0 794.0,343.9 795.0,344.5 796.0,344.8 797.0,344.9 798.0,345.0 799.0,345.1 800.0,345.1 801.0,345.2 802.0,345.3 803.0,345.6 804.0,346.1 805.0,347.0 806.0,348.1 807.0,349.3 808.0,350.5 809.0,351.7 810.0,353.0 811.0,354.1 812.0,355.2 813.0,356.3 814.0,357.3 815.0,358.3 816.0,359.3 817.0,360.3 818.0,361.3 819.0,362.2 820.0,362.9 821.0,363.4 822.0,363.5 823.0,363.5 824.0,363.5 825.0,363.4 826.0,363.4 827.0,363.4 828.0,363.3 829.0,363.3 830.0,363.2 831.0,363.2 832.0,363.2 833.0,363.1 834.0,363.1 835.0,363.1 836.0,363.2 837.0,363.4 838.0,364.0 839.0,364.7 840.0,365.5 841.0,366.2 842.0,367.0 843.0,367.9 844.0,368.8 845.0,369.8 846.0,371.1 847.0,372.5 848.0,373.9 849.0,375.4 850.0,377.2 851.0,379.5 852.0,382.2 853.0,384.9 854.0,387.6 855.0,390.1 856.0,392.0 857.0,393.5 858.0,394.6 859.0,395.6 860.0,396.7 861.0,397.7 862.0,398.6 863.0,399.2 864.0,399.5 865.0,399.3 866.0,399.1 867.0,398.7 868.0,398.3 869.0,397.9 870.0,397.3 871.0,396.4 872.0,395.3 873.0,394.1 874.0,393.0 875.0,391.8 876.0,390.7 877.0,389.5 878.0,388.4 879.0,387.3 880.0,386.3 881.0,385.5 882.0,385.1 883.0,385.0 884.0,385.0 885.0,385.0 886.0,385.0 887.0,385.0 888.0,385.0 889.0,385.1 890.0,385.3 891.0,385.6 892.0,386.2 893.0,386.7 894.0,387.3 895.0,387.9 896.0,388.4 897.0,389.0 898.0,389.7 899.0,390.5 900.0,391.5 901.0,392.6 902.0,393.8 903.0,394.9 904.0,396.1 905.0,397.2 906.0,398.4 907.0,399.5 908.0,400.7 909.0,402.2 910.0,404.3 911.0,407.4 912.0,411.1 913.0,415.1 914.0,419.2 915.0,423.4 916.0,427.7 917.0,432.4 918.0,437.1 919.0,441.9 920.0,446.6 921.0,451.4 922.0,456.0 923.0,460.3 924.0,464.0 925.0,467.3 926.0,470.5 927.0,473.7 928.0,476.9 929.0,480.0 930.0,483.2 931.0,486.4 932.0,489.5 933.0,492.7 934.0,495.5 935.0,497.3 936.0,497.7 937.0,496.7 938.0,495.1 939.0,493.3 940.0,491.5 941.0,489.6 942.0,487.8 943.0,486.1 944.0,484.3 945.0,482.6 946.0,480.9 947.0,479.2 948.0,477.5 949.0,475.8 950.0,474.1 951.0,472.4 952.0,470.7 953.0,469.0 954.0,467.4 955.0,466.0 956.0,465.2 957.0,464.8 958.0,464.7 959.0,464.7 960.0,464.7 961.0,464.7 962.0,464.7 963.0,464.7 964.0,464.7 965.0,464.7 966.0,464.7 967.0,464.7 968.0,464.5 969.0,464.3 970.0,463.9 971.0,463.5 972.0,463.1 973.0,462.7 974.0,462.3 975.0,461.9 976.0,461.5 977.0,461.1 978.0,460.7 979.0,460.3 980.0,459.6 981.0,458.4 982.0,456.8 983.0,455.0 984.0,453.1 985.0,451.4 986.0,449.9 987.0,448.6 988.0,447.4 989.0,446.1 990.0,444.9 991.0,443.6 992.0,442.4 993.0,441.1 994.0,439.9 995.0,438.6 996.0,437.4 997.0,436.2 998.0,435.3 999.0,434.9 1000.0,434.8 1001.0,434.8 1002.0,434.9 1003.0,434.9 1004.0,435.0 1005.0,435.0 1006.0,435.1 1007.0,435.1 1008.0,435.1 1009.0,434.7 1010.0,434.0 1011.0,433.1 1012.0,432.1 1013.0,431.1 1014.0,430.1 1015.0,429.1 1016.0,428.1 1017.0,427.1 1018.0,426.1 1019.0,425.1 1020.0,424.1 1021.0,423.1 1022.0,422.1 1023.0,421.0 1024.0,420.0 1025.0,419.0 1026.0,417.9 1027.0,416.7 1028.0,415.2 1029.0,413.5 1030.0,411.7 1031.0,409.8 1032.0,408.0 1033.0,406.2 1034.0,404.9 1035.0,404.1 1036.0,403.6 1037.0,403.3 1038.0,403.0 1039.0,402.7 1040.0,402.5 1041.0,402.5 1042.0,402.7 1043.0,403.0 1044.0,403.3 1045.0,403.6 1046.0,404.0 1047.0,404.2 1048.0,404.4 1049.0,404.3 1050.0,403.9 1051.0,403.3 1052.0,402.8 1053.0,402.2 1054.0,401.6 1055.0,401.1 1056.0,400.7 1057.0,400.7 1058.0,400.9 1059.0,401.2 1060.0,401.6 1061.0,402.2 1062.0,403.1 1063.0,404.3 1064.0,405.8 1065.0,407.3 1066.0,408.9 1067.0,410.5 1068.0,412.0 1069.0,413.6 1070.0,415.2 1071.0,417.0 1072.0,419.0 1073.0,421.2 1074.0,423.5 1075.0,425.7 1076.0,428.0 1077.0,430.2 1078.0,432.5 1079.0,434.7 1080.0,436.9 1081.0,438.9 1082.0,440.8 1083.0,442.1 1084.0,442.7 1085.0,442.8 1086.0,442.8 1087.0,442.7 1088.0,442.6 1089.0,442.5 1090.0,442.4 1091.0,442.4 1092.0,442.3 1093.0,442.2 1094.0,442.0 1095.0,441.7 1096.0,441.4 1097.0,441.0 1098.0,440.7 1099.0,440.3 1100.0,439.9 1101.0,439.5 1102.0,439.2 1103.0,438.8 1104.0,438.4 1105.0,438.1 1106.0,437.7 1107.0,437.5 1108.0,437.5 1109.0,437.6 1110.0,437.7 1111.0,437.8 1112.0,437.8 1113.0,437.7 1114.0,437.2 1115.0,436.4 1116.0,435.5 1117.0,434.5 1118.0,433.5 1119.0,432.5 1120.0,431.5 1121.0,430.5 1122.0,429.5 1123.0,428.5 1124.0,427.5 1125.0,426.5 1126.0,425.5 1127.0,424.7 1128.0,424.1 1129.0,423.8 1130.0,423.7 1131.0,423.7 1132.0,423.5 1133.0,423.0 1134.0,422.3 1135.0,421.5 1136.0,420.6 1137.0,419.7 1138.0,418.7 1139.0,417.8 1140.0,416.9 1141.0,416.0 1142.0,415.0 1143.0,414.0 1144.0,412.9 1145.0,411.7 1146.0,410.3 1147.0,408.9 1148.0,407.4 1149.0,406.0 1150.0,404.6 1151.0,403.2 1152.0,401.7 1153.0,400.1 1154.0,398.3 1155.0,396.2 1156.0,394.1 1157.0,391.9 1158.0,389.7 1159.0,387.5 1160.0,385.2 1161.0,382.9 1162.0,380.3 1163.0,377.6 1164.0,374.7 1165.0,372.0 1166.0,369.4 1167.0,367.1 1168.0,365.1 1169.0,363.1 1170.0,361.2 1171.0,359.4 1172.0,357.7 1173.0,356.0 1174.0,354.4 1175.0,352.7 1176.0,351.2 1177.0,349.7 1178.0,348.3 1179.0,346.9 1180.0,345.5 1181.0,344.2 1182.0,343.0 1183.0,342.2 1184.0,342.0 1185.0,342.1 1186.0,342.3 1187.0,342.6 1188.0,342.8 1189.0,342.9 1190.0,342.9 1191.0,342.7 1192.0,342.4 1193.0,342.1 1194.0,341.9 1195.0,341.6 1196.0,341.4 1197.0,341.3 1198.0,341.4 1199.0,341.6 1200.0,341.9 1201.0,342.2 1202.0,342.5 1203.0,342.9 1204.0,343.2 1205.0,343.5 1206.0,343.9 1207.0,344.2 1208.0,344.6 1209.0,344.9 1210.0,345.3 1211.0,345.6 1212.0,346.0 1213.0,346.3 1214.0,346.7 1215.0,347.1 1216.0,347.5 1217.0,348.0 1218.0,348.5 1219.0,349.2 1220.0,350.0 1221.0,350.8 1222.0,351.7 1223.0,352.5 1224.0,353.2 1225.0,353.6 1226.0,353.8 1227.0,353.8 1228.0,353.8 1229.0,353.8 1230.0,353.7 1231.0,353.5 1232.0,353.3 1233.0,352.9 1234.0,352.6 1235.0,352.3 1236.0,352.1 1237.0,352.1 1238.0,352.6 1239.0,353.2 1240.0,353.9 1241.0,354.6 1242.0,355.2 1243.0,355.7 1244.0,356.0 1245.0,356.2 1246.0,356.3 1247.0,356.4 1248.0,356.5 1249.0,356.6 1250.0,356.7 1251.0,356.8 1252.0,357.0 1253.0,357.4 1254.0,358.1 1255.0,358.9 1256.0,359.9 1257.0,360.8 1258.0,361.8 1259.0,362.8 1260.0,363.7 1261.0,364.6 1262.0,365.4 1263.0,365.7 1264.0,365.7 1265.0,365.5 1266.0,365.1 1267.0,364.8 1268.0,364.4 1269.0,364.1 1270.0,363.8 1271.0,363.6 1272.0,363.6 1273.0,363.9 1274.0,364.2 1275.0,364.6 1276.0,365.0 1277.0,365.4 1278.0,365.9 1279.0,366.2 1280.0,366.6 1281.0,366.8 1282.0,366.9 1283.0,367.0 1284.0,367.1 1285.0,367.1 1286.0,367.2 1287.0,367.3 1288.0,367.4 1289.0,367.4 1290.0,367.5 1291.0,367.6 1292.0,367.6 1293.0,367.7 1294.0,367.7 1295.0,367.8 1296.0,367.8 1297.0,367.9 1298.0,367.9 1299.0,367.9 1300.0,368.0 1301.0,368.0 1302.0,368.1 1303.0,368.1 1304.0,368.2 1305.0,368.3 1306.0,368.4 1307.0,368.5 1308.0,368.6 1309.0,368.7 1310.0,368.8 1311.0,368.9 1312.0,369.0 1313.0,369.1 1314.0,369.2 1315.0,369.4 1316.0,369.5 1317.0,369.8 1318.0,370.0 1319.0,370.2 1320.0,370.5 1321.0,370.8 1322.0,371.0 1323.0,371.3 1324.0,371.5 1325.0,371.8 1326.0,372.0 1327.0,372.3 1328.0,372.5 1329.0,372.4 1330.0,371.7 1331.0,370.4 1332.0,368.7 1333.0,366.9 1334.0,364.7 1335.0,361.8 1336.0,358.0 1337.0,353.4 1338.0,348.5 1339.0,343.6 1340.0,338.7 1341.0,333.9 1342.0,329.3 1343.0,325.2 1344.0,321.6 1345.0,318.2 1346.0,314.9 1347.0,311.7 1348.0,308.4 1349.0,305.1 1350.0,301.9 1351.0,298.6 1352.0,295.4 1353.0,292.2 1354.0,289.1 1355.0,286.7 1356.0,285.1 1357.0,284.1 1358.0,283.2 1359.0,282.5 1360.0,281.7 1361.0,280.9 1362.0,280.1 1363.0,279.3 1364.0,278.5 1365.0,277.7 1366.0,276.9 1367.0,276.2 1368.0,275.4 1369.0,274.7 1370.0,274.0 1371.0,273.3 1372.0,272.6 1373.0,271.9 1374.0,271.2 1375.0,270.5 1376.0,269.8 1377.0,269.1 1378.0,268.4 1379.0,267.8 1380.0,267.3 1381.0,267.1 1382.0,267.1 1383.0,267.2 1384.0,267.4 1385.0,267.5 1386.0,267.7 1387.0,268.1 1388.0,268.9 1389.0,270.4 1390.0,272.2 1391.0,274.1 1392.0,276.1 1393.0,278.1 1394.0,280.0 1395.0,282.0 1396.0,284.0 1397.0,286.0 1398.0,288.0 1399.0,290.0 1400.0,292.2 1401.0,294.7 1402.0,297.4 1403.0,300.1 1404.0,302.9 1405.0,305.6 1406.0,308.3 1407.0,310.6 1408.0,312.3 1409.0,313.5 1410.0,314.4 1411.0,315.1 1412.0,315.9 1413.0,316.6 1414.0,317.4 1415.0,318.1 1416.0,318.9 1417.0,319.6 1418.0,320.4 1419.0,321.3 1420.0,322.4 1421.0,323.4 1422.0,324.5 1423.0,325.6 1424.0,326.7 1425.0,327.8 1426.0,328.9 1427.0,330.0 1428.0,331.1 1429.0,332.3 1430.0,333.5 1431.0,334.7 1432.0,335.9 1433.0,337.1 1434.0,338.3 1435.0,339.5 1436.0,340.7 1437.0,341.8 1438.0,342.8 1439.0,343.7 1440.0,344.6 1441.0,345.4 1442.0,346.2 1443.0,347.1 1444.0,347.9 1445.0,348.7 1446.0,349.6 1447.0,350.3 1448.0,350.9 1449.0,351.0 1450.0,350.5 1451.0,349.8 1452.0,348.9 1453.0,348.1 1454.0,347.2 1455.0,346.4 1456.0,345.6 1457.0,344.8 1458.0,344.2 1459.0,343.5 1460.0,342.9 1461.0,342.3 1462.0,341.7 1463.0,341.1 1464.0,340.7 1465.0,340.4 1466.0,340.1 1467.0,339.9 1468.0,339.7 1469.0,339.5 1470.0,339.3 1471.0,339.1 1472.0,339.1 1473.0,339.3 1474.0,340.0 1475.0,341.0 1476.0,342.2 1477.0,343.4 1478.0,344.7 1479.0,345.8 1480.0,346.9 1481.0,347.9 1482.0,348.7 1483.0,349.3 1484.0,349.6 1485.0,349.6 1486.0,349.5 1487.0,349.3 1488.0,349.2 1489.0,349.0 1490.0,348.8 1491.0,348.6 1492.0,348.4 1493.0,348.1 1494.0,347.7 1495.0,347.2 1496.0,346.6 1497.0,346.0 1498.0,345.3 1499.0,344.4 1500.0,343.4 1501.0,342.2 1502.0,340.8 1503.0,339.5 1504.0,338.1 1505.0,336.8 1506.0,335.6 1507.0,334.9 1508.0,334.8 1509.0,335.0 1510.0,335.4 1511.0,335.9 1512.0,336.2 1513.0,336.4 1514.0,336.3 1515.0,336.0 1516.0,335.5 1517.0,334.9 1518.0,334.4 1519.0,333.8 1520.0,333.3 1521.0,332.7 1522.0,332.2 1523.0,331.8 1524.0,331.4 1525.0,331.0 1526.0,330.7 1527.0,330.3 1528.0,329.8 1529.0,329.2 1530.0,328.3 1531.0,327.1 1532.0,325.8 1533.0,324.5 1534.0,323.1 1535.0,321.7 1536.0,320.6 1537.0,319.7 1538.0,319.4 1539.0,319.5 1540.0,319.6 1541.0,319.7 1542.0,319.7 1543.0,319.6 1544.0,319.2 1545.0,318.7 1546.0,318.2 1547.0,317.8 1548.0,317.3 1549.0,317.1 1550.0,317.2 1551.0,317.5 1552.0,317.9 1553.0,318.4 1554.0,318.8 1555.0,319.3 1556.0,319.9 1557.0,320.5 1558.0,321.0 1559.0,321.5 1560.0,321.9 1561.0,322.1 1562.0,322.3 1563.0,322.5 1564.0,322.5 1565.0,322.4 1566.0,321.9 1567.0,321.2 1568.0,320.4 1569.0,319.7 1570.0,318.9 1571.0,318.1 1572.0,317.3 1573.0,316.5 1574.0,315.7 1575.0,314.7 1576.0,313.5 1577.0,312.0 1578.0,310.3 1579.0,308.5 1580.0,306.7 1581.0,304.9 1582.0,303.0 1583.0,301.0 1584.0,299.0 1585.0,296.9 1586.0,294.8 1587.0,292.6 1588.0,290.5 1589.0,288.4 1590.0,286.3 1591.0,284.1 1592.0,282.1 1593.0,280.2 1594.0,278.5 1595.0,277.3 1596.0,276.2 1597.0,275.2 1598.0,274.2 1599.0,273.1 1600.0,272.1 1601.0,271.1 1602.0,270.2 1603.0,269.3 1604.0,268.6 1605.0,268.0 1606.0,267.5 1607.0,267.1 1608.0,266.7 1609.0,266.5 1610.0,266.5 1611.0,266.7 1612.0,266.9 1613.0,267.1 1614.0,267.3 1615.0,267.5 1616.0,267.7 1617.0,267.8 1618.0,267.6 1619.0,267.0 1620.0,265.9 1621.0,264.6 1622.0,263.3 1623.0,261.9 1624.0,260.6 1625.0,259.2 1626.0,257.8 1627.0,256.5 1628.0,255.4 1629.0,254.5 1630.0,253.7 1631.0,253.0 1632.0,252.3 1633.0,251.6 1634.0,250.7 1635.0,249.4 1636.0,247.6 1637.0,245.5 1638.0,243.2 1639.0,240.9 1640.0,238.6 1641.0,236.3 1642.0,233.9 1643.0,231.4 1644.0,228.8 1645.0,226.2 1646.0,223.6 1647.0,221.0 1648.0,218.4 1649.0,215.8 1650.0,213.1 1651.0,210.3 1652.0,207.2 1653.0,203.9 1654.0,200.6 1655.0,197.3 1656.0,194.0 1657.0,190.6 1658.0,187.3 1659.0,184.1 1660.0,181.1 1661.0,178.5 1662.0,176.2 1663.0,174.1 1664.0,172.0 1665.0,169.8 1666.0,167.8 1667.0,165.9 1668.0,164.4 1669.0,163.5 1670.0,163.0 1671.0,162.5 1672.0,162.1 1673.0,161.6 1674.0,161.2 1675.0,160.7 1676.0,160.3 1677.0,159.9 1678.0,159.4 1679.0,159.0 1680.0,158.6 1681.0,158.1 1682.0,157.7 1683.0,157.2 1684.0,156.8 1685.0,156.3 1686.0,155.6 1687.0,154.6 1688.0,153.3 1689.0,151.9 1690.0,150.4 1691.0,148.9 1692.0,147.5 1693.0,146.0 1694.0,144.6 1695.0,143.1 1696.0,141.6 1697.0,140.2 1698.0,138.7 1699.0,137.2 1700.0,135.4 1701.0,133.3 1702.0,130.9 1703.0,128.5 1704.0,126.1 1705.0,123.7 1706.0,121.2 1707.0,118.8 1708.0,116.4 1709.0,113.9 1710.0,111.3 1711.0,108.6 1712.0,105.9 1713.0,103.1 1714.0,100.4 1715.0,97.6 1716.0,94.9 1717.0,92.2 1718.0,89.4 1719.0,86.7 1720.0,83.9 1721.0,81.2 1722.0,78.5 1723.0,75.7 1724.0,73.0 1725.0,70.2 1726.0,67.5 1727.0,65.0 1728.0,62.9 1729.0,61.6 1730.0,60.8 1731.0,60.1 1732.0,59.5 1733.0,58.8 1734.0,58.2 1735.0,57.6 1736.0,57.1 1737.0,57.1 1738.0,57.7 1739.0,58.8 1740.0,60.2 1741.0,61.6 1742.0,63.1 1743.0,64.5 1744.0,65.9 1745.0,67.4 1746.0,68.8 1747.0,70.2 1748.0,71.7 1749.0,73.1 1750.0,74.5 1751.0,75.9 1752.0,77.3 1753.0,78.3 1754.0,78.8 1755.0,78.9 1756.0,78.7 1757.0,78.5 1758.0,78.2 1759.0,78.0 1760.0,77.7 1761.0,77.4 1762.0,77.0 1763.0,76.5 1764.0,75.8 1765.0,74.9 1766.0,74.1 1767.0,73.2 1768.0,72.3 1769.0,71.4 1770.0,70.5 1771.0,69.6 1772.0,68.8 1773.0,68.2" fill="none" stroke="#ffffff" stroke-width="1.8"/>
<g shape-rendering="crispEdges"><rect x="2" y="764.9" width="3" height="11.0" fill="#00ffff"/><rect x="7" y="775.9" width="3" height="8.8" fill="#00ffff"/><rect x="12" y="784.7" width="3" height="10.0" fill="#00ffff"/><rect x="17" y="794.7" width="3" height="6.3" fill="#00ffff"/><rect x="22" y="801.0" width="3" height="7.0" fill="#00ffff"/><rect x="27" y="808.0" width="3" height="6.8" fill="#00ffff"/><rect x="32" y="814.8" width="3" height="3.0" fill="#00ffff"/><rect x="37" y="817.8" width="3" height="6.0" fill="#00ffff"/><rect x="42" y="823.8" width="3" height="3.2" fill="#00ffff"/><rect x="47" y="827.0" width="3" height="3.0" fill="#00ffff"/><rect x="52" y="830.0" width="3" height="3.4" fill="#00ffff"/><rect x="57" y="833.4" width="3" height="5.3" fill="#00ffff"/><rect x="62" y="838.8" width="3" height="5.5" fill="#00ffff"/><rect x="67" y="844.2" width="3" height="4.5" fill="#00ffff"/><rect x="72" y="848.8" width="3" height="2.7" fill="#00ffff"/><rect x="77" y="850.8" width="3" height="2.2" fill="#00ffff"/><rect x="82" y="850.8" width="3" height="2.2" fill="#ff0000"/><rect x="87" y="849.2" width="3" height="2.4" fill="#ff0000"/><rect x="92" y="846.3" width="3" height="2.9" fill="#ff0000"/><rect x="97" y="844.6" width="3" height="2.2" fill="#ff0000"/><rect x="102" y="844.5" width="3" height="2.2" fill="#00ffff"/><rect x="107" y="845.9" width="3" height="2.2" fill="#00ffff"/><rect x="112" y="847.6" width="3" height="2.2" fill="#00ffff"/><rect x="117" y="849.5" width="3" height="2.2" fill="#00ffff"/><rect x="122" y="851.4" width="3" height="2.2" fill="#00ffff"/><rect x="127" y="853.0" width="3" height="2.2" fill="#00ffff"/><rect x="132" y="854.2" width="3" height="2.2" fill="#00ffff"/><rect x="137" y="854.3" width="3" height="2.2" fill="#ff0000"/><rect x="142" y="851.6" width="3" height="3.2" fill="#ff0000"/><rect x="147" y="845.2" width="3" height="6.4" fill="#ff0000"/><rect x="152" y="833.6" width="3" height="11.6" fill="#ff0000"/><rect x="157" y="816.0" width="3" height="17.6" fill="#ff0000"/><rect x="162" y="800.0" width="3" height="16.0" fill="#ff0000"/><rect x="167" y="786.0" width="3" height="14.0" fill="#ff0000"/><rect x="172" y="764.0" width="3" height="22.0" fill="#ff0000"/><rect x="177" y="743.0" width="3" height="21.0" fill="#ff0000"/><rect x="182" y="722.0" width="3" height="21.0" fill="#ff0000"/><rect x="187" y="713.4" width="3" height="8.6" fill="#ff0000"/><rect x="192" y="701.5" width="3" height="11.9" fill="#ff0000"/><rect x="197" y="697.4" width="3" height="4.2" fill="#ff0000"/><rect x="202" y="695.5" width="3" height="2.2" fill="#ff0000"/><rect x="207" y="693.1" width="3" height="2.8" fill="#ff0000"/><rect x="212" y="688.8" width="3" height="4.3" fill="#ff0000"/><rect x="217" y="684.8" width="3" height="4.0" fill="#ff0000"/><rect x="222" y="681.1" width="3" height="3.7" fill="#ff0000"/><rect x="227" y="677.0" width="3" height="4.0" fill="#ff0000"/><rect x="232" y="673.9" width="3" height="3.1" fill="#ff0000"/><rect x="237" y="668.4" width="3" height="5.5" fill="#ff0000"/><rect x="242" y="659.0" width="3" height="9.4" fill="#ff0000"/><rect x="247" y="651.0" width="3" height="8.0" fill="#ff0000"/><rect x="252" y="647.2" width="3" height="3.8" fill="#ff0000"/><rect x="257" y="645.7" width="3" height="2.2" fill="#ff0000"/><rect x="262" y="646.3" width="3" height="2.5" fill="#00ffff"/><rect x="267" y="648.8" width="3" height="5.1" fill="#00ffff"/><rect x="272" y="653.9" width="3" height="4.3" fill="#00ffff"/><rect x="277" y="657.7" width="3" height="2.2" fill="#00ffff"/><rect x="282" y="656.9" width="3" height="2.5" fill="#ff0000"/><rect x="287" y="651.4" width="3" height="5.6" fill="#ff0000"/><rect x="292" y="643.5" width="3" height="7.9" fill="#ff0000"/><rect x="297" y="635.5" width="3" height="8.0" fill="#ff0000"/><rect x="302" y="628.4" width="3" height="7.1" fill="#ff0000"/><rect x="307" y="622.7" width="3" height="5.7" fill="#ff0000"/><rect x="312" y="618.9" width="3" height="3.8" fill="#ff0000"/><rect x="317" y="616.9" width="3" height="2.2" fill="#ff0000"/><rect x="322" y="617.0" width="3" height="2.5" fill="#00ffff"/><rect x="327" y="619.5" width="3" height="5.3" fill="#00ffff"/><rect x="332" y="624.8" width="3" height="6.0" fill="#00ffff"/><rect x="337" y="630.8" width="3" height="5.6" fill="#00ffff"/><rect x="342" y="636.4" width="3" height="4.8" fill="#00ffff"/><rect x="347" y="641.2" width="3" height="4.1" fill="#00ffff"/><rect x="352" y="645.3" width="3" height="3.7" fill="#00ffff"/><rect x="357" y="649.0" width="3" height="3.6" fill="#00ffff"/><rect x="362" y="652.6" width="3" height="3.0" fill="#00ffff"/><rect x="367" y="655.7" width="3" height="2.5" fill="#00ffff"/><rect x="372" y="658.2" width="3" height="2.5" fill="#00ffff"/><rect x="377" y="660.6" width="3" height="3.1" fill="#00ffff"/><rect x="382" y="663.7" width="3" height="3.8" fill="#00ffff"/><rect x="387" y="666.9" width="3" height="2.2" fill="#00ffff"/><rect x="392" y="662.4" width="3" height="6.0" fill="#ff0000"/><rect x="397" y="653.1" width="3" height="9.3" fill="#ff0000"/><rect x="402" y="647.5" width="3" height="5.6" fill="#ff0000"/><rect x="407" y="645.0" width="3" height="2.5" fill="#ff0000"/><rect x="412" y="642.9" width="3" height="2.2" fill="#ff0000"/><rect x="417" y="642.1" width="3" height="2.2" fill="#00ffff"/><rect x="422" y="643.5" width="3" height="3.3" fill="#00ffff"/><rect x="427" y="646.8" width="3" height="6.8" fill="#00ffff"/><rect x="432" y="653.6" width="3" height="9.3" fill="#00ffff"/><rect x="437" y="662.9" width="3" height="12.5" fill="#00ffff"/><rect x="442" y="675.4" width="3" height="13.2" fill="#00ffff"/><rect x="447" y="688.6" width="3" height="12.3" fill="#00ffff"/><rect x="452" y="700.9" width="3" height="8.9" fill="#00ffff"/><rect x="457" y="709.8" width="3" height="14.1" fill="#00ffff"/><rect x="462" y="723.9" width="3" height="11.9" fill="#00ffff"/><rect x="467" y="735.8" width="3" height="6.5" fill="#00ffff"/><rect x="472" y="742.3" width="3" height="9.5" fill="#00ffff"/><rect x="477" y="751.8" width="3" height="8.8" fill="#00ffff"/><rect x="482" y="760.6" width="3" height="9.2" fill="#00ffff"/><rect x="487" y="769.8" width="3" height="9.9" fill="#00ffff"/><rect x="492" y="779.7" width="3" height="7.9" fill="#00ffff"/><rect x="497" y="787.6" width="3" height="5.1" fill="#00ffff"/><rect x="502" y="792.7" width="3" height="5.4" fill="#00ffff"/><rect x="507" y="798.1" width="3" height="6.1" fill="#00ffff"/><rect x="512" y="804.3" width="3" height="7.2" fill="#00ffff"/><rect x="517" y="811.4" width="3" height="7.8" fill="#00ffff"/><rect x="522" y="819.3" width="3" height="6.3" fill="#00ffff"/><rect x="527" y="825.5" width="3" height="4.6" fill="#00ffff"/><rect x="532" y="829.7" width="3" height="2.2" fill="#00ffff"/><rect x="537" y="831.1" width="3" height="2.2" fill="#00ffff"/><rect x="542" y="832.8" width="3" height="2.2" fill="#00ffff"/><rect x="547" y="834.5" width="3" height="2.2" fill="#00ffff"/><rect x="552" y="834.5" width="3" height="2.2" fill="#ff0000"/><rect x="557" y="832.7" width="3" height="2.2" fill="#ff0000"/><rect x="562" y="832.5" width="3" height="2.2" fill="#00ffff"/><rect x="567" y="834.4" width="3" height="2.2" fill="#00ffff"/><rect x="572" y="836.6" width="3" height="3.1" fill="#00ffff"/><rect x="577" y="839.4" width="3" height="2.2" fill="#00ffff"/><rect x="582" y="840.3" width="3" height="2.2" fill="#00ffff"/><rect x="587" y="839.1" width="3" height="2.5" fill="#ff0000"/><rect x="592" y="836.4" width="3" height="2.7" fill="#ff0000"/><rect x="597" y="833.2" width="3" height="3.1" fill="#ff0000"/><rect x="602" y="829.5" width="3" height="3.8" fill="#ff0000"/><rect x="607" y="823.8" width="3" height="5.6" fill="#ff0000"/><rect x="612" y="820.7" width="3" height="3.2" fill="#ff0000"/><rect x="617" y="818.3" width="3" height="2.4" fill="#ff0000"/><rect x="622" y="817.4" width="3" height="2.2" fill="#00ffff"/><rect x="627" y="817.6" width="3" height="2.2" fill="#ff0000"/><rect x="632" y="816.6" width="3" height="2.2" fill="#ff0000"/><rect x="637" y="815.1" width="3" height="2.2" fill="#ff0000"/><rect x="642" y="810.3" width="3" height="5.3" fill="#ff0000"/><rect x="647" y="788.4" width="3" height="21.9" fill="#ff0000"/><rect x="652" y="770.0" width="3" height="18.4" fill="#ff0000"/><rect x="657" y="756.0" width="3" height="14.0" fill="#ff0000"/><rect x="662" y="750.0" width="3" height="6.0" fill="#ff0000"/><rect x="667" y="746.0" width="3" height="4.0" fill="#ff0000"/><rect x="672" y="744.4" width="3" height="2.2" fill="#ff0000"/><rect x="677" y="741.0" width="3" height="4.0" fill="#ff0000"/><rect x="682" y="734.0" width="3" height="7.0" fill="#ff0000"/><rect x="687" y="731.9" width="3" height="2.2" fill="#ff0000"/><rect x="692" y="725.0" width="3" height="7.0" fill="#ff0000"/><rect x="697" y="717.1" width="3" height="7.9" fill="#ff0000"/><rect x="702" y="709.9" width="3" height="7.2" fill="#ff0000"/><rect x="707" y="704.3" width="3" height="5.7" fill="#ff0000"/><rect x="712" y="698.7" width="3" height="5.6" fill="#ff0000"/><rect x="717" y="693.1" width="3" height="5.5" fill="#ff0000"/><rect x="722" y="686.9" width="3" height="6.2" fill="#ff0000"/><rect x="727" y="679.4" width="3" height="7.5" fill="#ff0000"/><rect x="732" y="672.4" width="3" height="7.0" fill="#ff0000"/><rect x="737" y="666.2" width="3" height="6.2" fill="#ff0000"/><rect x="742" y="660.8" width="3" height="5.4" fill="#ff0000"/><rect x="747" y="657.0" width="3" height="3.8" fill="#ff0000"/><rect x="752" y="654.8" width="3" height="2.2" fill="#ff0000"/><rect x="757" y="654.8" width="3" height="2.4" fill="#00ffff"/><rect x="762" y="657.2" width="3" height="6.1" fill="#00ffff"/><rect x="767" y="663.3" width="3" height="10.3" fill="#00ffff"/><rect x="772" y="673.5" width="3" height="12.2" fill="#00ffff"/><rect x="777" y="685.7" width="3" height="9.1" fill="#00ffff"/><rect x="782" y="694.8" width="3" height="8.8" fill="#00ffff"/><rect x="787" y="703.6" width="3" height="9.1" fill="#00ffff"/><rect x="792" y="712.7" width="3" height="10.9" fill="#00ffff"/><rect x="797" y="723.6" width="3" height="16.1" fill="#00ffff"/><rect x="802" y="739.7" width="3" height="10.2" fill="#00ffff"/><rect x="807" y="749.9" width="3" height="10.9" fill="#00ffff"/><rect x="812" y="760.8" width="3" height="16.0" fill="#00ffff"/><rect x="817" y="776.8" width="3" height="14.2" fill="#00ffff"/><rect x="822" y="791.0" width="3" height="7.9" fill="#00ffff"/><rect x="827" y="798.7" width="3" height="2.2" fill="#00ffff"/><rect x="832" y="800.8" width="3" height="4.0" fill="#00ffff"/><rect x="837" y="804.8" width="3" height="7.9" fill="#00ffff"/><rect x="842" y="812.7" width="3" height="6.0" fill="#00ffff"/><rect x="847" y="818.7" width="3" height="5.6" fill="#00ffff"/><rect x="852" y="824.3" width="3" height="5.8" fill="#00ffff"/><rect x="857" y="829.8" width="3" height="2.2" fill="#00ffff"/><rect x="862" y="829.7" width="3" height="2.2" fill="#ff0000"/><rect x="867" y="826.2" width="3" height="3.6" fill="#ff0000"/><rect x="872" y="822.1" width="3" height="4.1" fill="#ff0000"/><rect x="877" y="819.7" width="3" height="2.4" fill="#ff0000"/><rect x="882" y="818.3" width="3" height="2.2" fill="#ff0000"/><rect x="887" y="818.0" width="3" height="2.2" fill="#ff0000"/><rect x="892" y="818.1" width="3" height="2.2" fill="#00ffff"/><rect x="897" y="819.3" width="3" height="2.3" fill="#00ffff"/><rect x="902" y="821.6" width="3" height="3.1" fill="#00ffff"/><rect x="907" y="824.7" width="3" height="4.1" fill="#00ffff"/><rect x="912" y="828.8" width="3" height="4.2" fill="#00ffff"/><rect x="917" y="833.0" width="3" height="5.0" fill="#00ffff"/><rect x="922" y="838.0" width="3" height="5.0" fill="#00ffff"/><rect x="927" y="843.0" width="3" height="3.0" fill="#00ffff"/><rect x="932" y="844.7" width="3" height="2.2" fill="#ff0000"/><rect x="937" y="842.9" width="3" height="2.7" fill="#ff0000"/><rect x="942" y="836.9" width="3" height="6.0" fill="#ff0000"/><rect x="947" y="829.9" width="3" height="7.0" fill="#ff0000"/><rect x="952" y="824.5" width="3" height="5.4" fill="#ff0000"/><rect x="957" y="821.2" width="3" height="3.3" fill="#ff0000"/><rect x="962" y="818.7" width="3" height="2.4" fill="#ff0000"/><rect x="967" y="815.3" width="3" height="3.4" fill="#ff0000"/><rect x="972" y="810.0" width="3" height="5.3" fill="#ff0000"/><rect x="977" y="800.0" width="3" height="10.0" fill="#ff0000"/><rect x="982" y="789.3" width="3" height="10.7" fill="#ff0000"/><rect x="987" y="783.0" width="3" height="6.3" fill="#ff0000"/><rect x="992" y="772.0" width="3" height="11.0" fill="#ff0000"/><rect x="997" y="762.8" width="3" height="9.2" fill="#ff0000"/><rect x="1002" y="756.9" width="3" height="5.9" fill="#ff0000"/><rect x="1007" y="752.0" width="3" height="4.9" fill="#ff0000"/><rect x="1012" y="738.8" width="3" height="13.2" fill="#ff0000"/><rect x="1017" y="728.7" width="3" height="10.1" fill="#ff0000"/><rect x="1022" y="713.4" width="3" height="15.2" fill="#ff0000"/><rect x="1027" y="699.1" width="3" height="14.4" fill="#ff0000"/><rect x="1032" y="689.8" width="3" height="9.2" fill="#ff0000"/><rect x="1037" y="679.8" width="3" height="10.1" fill="#ff0000"/><rect x="1042" y="670.1" width="3" height="9.6" fill="#ff0000"/><rect x="1047" y="661.4" width="3" height="8.7" fill="#ff0000"/><rect x="1052" y="653.3" width="3" height="8.2" fill="#ff0000"/><rect x="1057" y="648.7" width="3" height="4.6" fill="#ff0000"/><rect x="1062" y="648.4" width="3" height="2.2" fill="#00ffff"/><rect x="1067" y="650.4" width="3" height="6.8" fill="#00ffff"/><rect x="1072" y="657.2" width="3" height="8.8" fill="#00ffff"/><rect x="1077" y="666.0" width="3" height="7.6" fill="#00ffff"/><rect x="1082" y="673.6" width="3" height="6.2" fill="#00ffff"/><rect x="1087" y="679.8" width="3" height="5.4" fill="#00ffff"/><rect x="1092" y="685.2" width="3" height="4.4" fill="#00ffff"/><rect x="1097" y="689.6" width="3" height="5.2" fill="#00ffff"/><rect x="1102" y="694.8" width="3" height="6.3" fill="#00ffff"/><rect x="1107" y="701.1" width="3" height="5.5" fill="#00ffff"/><rect x="1112" y="706.5" width="3" height="4.4" fill="#00ffff"/><rect x="1117" y="710.9" width="3" height="2.6" fill="#00ffff"/><rect x="1122" y="712.4" width="3" height="2.2" fill="#00ffff"/><rect x="1127" y="712.4" width="3" height="2.2" fill="#00ffff"/><rect x="1132" y="711.9" width="3" height="2.2" fill="#ff0000"/><rect x="1137" y="709.9" width="3" height="2.6" fill="#ff0000"/><rect x="1142" y="704.9" width="3" height="5.0" fill="#ff0000"/><rect x="1147" y="696.3" width="3" height="8.6" fill="#ff0000"/><rect x="1152" y="687.0" width="3" height="9.4" fill="#ff0000"/><rect x="1157" y="676.3" width="3" height="10.6" fill="#ff0000"/><rect x="1162" y="666.1" width="3" height="10.2" fill="#ff0000"/><rect x="1167" y="656.8" width="3" height="9.4" fill="#ff0000"/><rect x="1172" y="647.8" width="3" height="8.9" fill="#ff0000"/><rect x="1177" y="639.7" width="3" height="8.1" fill="#ff0000"/><rect x="1182" y="632.2" width="3" height="7.5" fill="#ff0000"/><rect x="1187" y="626.0" width="3" height="6.2" fill="#ff0000"/><rect x="1192" y="620.6" width="3" height="5.3" fill="#ff0000"/><rect x="1197" y="617.3" width="3" height="3.4" fill="#ff0000"/><rect x="1202" y="614.5" width="3" height="2.8" fill="#ff0000"/><rect x="1207" y="613.0" width="3" height="2.2" fill="#ff0000"/><rect x="1212" y="613.1" width="3" height="2.2" fill="#00ffff"/><rect x="1217" y="614.1" width="3" height="2.2" fill="#00ffff"/><rect x="1222" y="615.3" width="3" height="2.2" fill="#00ffff"/><rect x="1227" y="616.2" width="3" height="2.2" fill="#00ffff"/><rect x="1232" y="616.2" width="3" height="2.2" fill="#ff0000"/><rect x="1237" y="616.9" width="3" height="2.2" fill="#00ffff"/><rect x="1242" y="619.0" width="3" height="2.2" fill="#00ffff"/><rect x="1247" y="621.2" width="3" height="3.8" fill="#00ffff"/><rect x="1252" y="625.0" width="3" height="3.0" fill="#00ffff"/><rect x="1257" y="628.0" width="3" height="5.0" fill="#00ffff"/><rect x="1262" y="633.0" width="3" height="8.0" fill="#00ffff"/><rect x="1267" y="640.9" width="3" height="2.2" fill="#00ffff"/><rect x="1272" y="643.0" width="3" height="4.0" fill="#00ffff"/><rect x="1277" y="646.4" width="3" height="2.2" fill="#00ffff"/><rect x="1282" y="648.0" width="3" height="4.0" fill="#00ffff"/><rect x="1287" y="652.0" width="3" height="6.0" fill="#00ffff"/><rect x="1292" y="656.9" width="3" height="2.2" fill="#00ffff"/><rect x="1297" y="657.4" width="3" height="2.2" fill="#00ffff"/><rect x="1302" y="658.4" width="3" height="2.2" fill="#00ffff"/><rect x="1307" y="660.0" width="3" height="7.0" fill="#00ffff"/><rect x="1312" y="667.0" width="3" height="7.0" fill="#00ffff"/><rect x="1317" y="674.0" width="3" height="6.0" fill="#00ffff"/><rect x="1322" y="680.0" width="3" height="21.4" fill="#00ffff"/><rect x="1327" y="701.4" width="3" height="15.2" fill="#00ffff"/><rect x="1332" y="716.6" width="3" height="6.6" fill="#00ffff"/><rect x="1337" y="722.4" width="3" height="2.2" fill="#00ffff"/><rect x="1342" y="716.7" width="3" height="7.1" fill="#ff0000"/><rect x="1347" y="708.4" width="3" height="8.3" fill="#ff0000"/><rect x="1352" y="702.1" width="3" height="6.3" fill="#ff0000"/><rect x="1357" y="695.3" width="3" height="6.8" fill="#ff0000"/><rect x="1362" y="688.3" width="3" height="7.0" fill="#ff0000"/><rect x="1367" y="681.5" width="3" height="6.8" fill="#ff0000"/><rect x="1372" y="673.0" width="3" height="8.5" fill="#ff0000"/><rect x="1377" y="662.0" width="3" height="11.0" fill="#ff0000"/><rect x="1382" y="655.0" width="3" height="7.0" fill="#ff0000"/><rect x="1387" y="655.0" width="3" height="3.0" fill="#00ffff"/><rect x="1392" y="658.0" width="3" height="9.0" fill="#00ffff"/><rect x="1397" y="667.0" width="3" height="9.0" fill="#00ffff"/><rect x="1402" y="676.0" width="3" height="6.0" fill="#00ffff"/><rect x="1407" y="682.0" width="3" height="9.9" fill="#00ffff"/><rect x="1412" y="691.9" width="3" height="8.1" fill="#00ffff"/><rect x="1417" y="700.0" width="3" height="9.8" fill="#00ffff"/><rect x="1422" y="709.8" width="3" height="6.9" fill="#00ffff"/><rect x="1427" y="716.7" width="3" height="12.1" fill="#00ffff"/><rect x="1432" y="728.8" width="3" height="13.0" fill="#00ffff"/><rect x="1437" y="741.8" width="3" height="5.0" fill="#00ffff"/><rect x="1442" y="746.8" width="3" height="11.7" fill="#00ffff"/><rect x="1447" y="758.5" width="3" height="9.5" fill="#00ffff"/><rect x="1452" y="768.0" width="3" height="3.4" fill="#00ffff"/><rect x="1457" y="771.0" width="3" height="2.2" fill="#00ffff"/><rect x="1462" y="772.2" width="3" height="2.2" fill="#00ffff"/><rect x="1467" y="773.7" width="3" height="2.9" fill="#00ffff"/><rect x="1472" y="776.6" width="3" height="5.7" fill="#00ffff"/><rect x="1477" y="782.2" width="3" height="7.3" fill="#00ffff"/><rect x="1482" y="789.6" width="3" height="3.9" fill="#00ffff"/><rect x="1487" y="792.5" width="3" height="2.2" fill="#00ffff"/><rect x="1492" y="792.8" width="3" height="2.2" fill="#00ffff"/><rect x="1497" y="793.5" width="3" height="2.2" fill="#00ffff"/><rect x="1502" y="794.8" width="3" height="2.2" fill="#00ffff"/><rect x="1507" y="796.3" width="3" height="2.2" fill="#00ffff"/><rect x="1512" y="797.1" width="3" height="2.2" fill="#00ffff"/><rect x="1517" y="796.5" width="3" height="2.2" fill="#ff0000"/><rect x="1522" y="794.9" width="3" height="2.2" fill="#ff0000"/><rect x="1527" y="791.7" width="3" height="3.3" fill="#ff0000"/><rect x="1532" y="786.8" width="3" height="4.9" fill="#ff0000"/><rect x="1537" y="782.3" width="3" height="4.5" fill="#ff0000"/><rect x="1542" y="778.9" width="3" height="3.4" fill="#ff0000"/><rect x="1547" y="776.3" width="3" height="2.6" fill="#ff0000"/><rect x="1552" y="773.7" width="3" height="2.6" fill="#ff0000"/><rect x="1557" y="766.6" width="3" height="7.1" fill="#ff0000"/><rect x="1562" y="754.3" width="3" height="12.3" fill="#ff0000"/><rect x="1567" y="736.0" width="3" height="18.3" fill="#ff0000"/><rect x="1572" y="714.2" width="3" height="21.8" fill="#ff0000"/><rect x="1577" y="693.0" width="3" height="21.2" fill="#ff0000"/><rect x="1582" y="681.0" width="3" height="12.0" fill="#ff0000"/><rect x="1587" y="670.2" width="3" height="10.8" fill="#ff0000"/><rect x="1592" y="660.2" width="3" height="10.0" fill="#ff0000"/><rect x="1597" y="654.8" width="3" height="5.4" fill="#ff0000"/><rect x="1602" y="652.2" width="3" height="2.6" fill="#ff0000"/><rect x="1607" y="644.0" width="3" height="8.2" fill="#ff0000"/><rect x="1612" y="640.9" width="3" height="3.1" fill="#ff0000"/><rect x="1617" y="639.0" width="3" height="2.2" fill="#ff0000"/><rect x="1622" y="630.0" width="3" height="9.4" fill="#ff0000"/><rect x="1627" y="622.4" width="3" height="7.6" fill="#ff0000"/><rect x="1632" y="619.8" width="3" height="2.6" fill="#ff0000"/><rect x="1637" y="616.2" width="3" height="3.6" fill="#ff0000"/><rect x="1642" y="612.0" width="3" height="4.2" fill="#ff0000"/><rect x="1647" y="608.0" width="3" height="4.0" fill="#ff0000"/><rect x="1652" y="605.9" width="3" height="2.2" fill="#ff0000"/><rect x="1657" y="603.0" width="3" height="2.9" fill="#ff0000"/><rect x="1662" y="600.0" width="3" height="3.0" fill="#ff0000"/><rect x="1667" y="599.5" width="3" height="2.2" fill="#00ffff"/><rect x="1672" y="599.5" width="3" height="2.2" fill="#ff0000"/><rect x="1677" y="598.2" width="3" height="2.2" fill="#ff0000"/><rect x="1682" y="596.6" width="3" height="2.2" fill="#ff0000"/><rect x="1687" y="594.9" width="3" height="2.2" fill="#ff0000"/><rect x="1692" y="593.0" width="3" height="2.2" fill="#ff0000"/><rect x="1697" y="590.7" width="3" height="2.4" fill="#ff0000"/><rect x="1702" y="588.0" width="3" height="2.7" fill="#ff0000"/><rect x="1707" y="586.3" width="3" height="2.2" fill="#ff0000"/><rect x="1712" y="585.1" width="3" height="2.2" fill="#ff0000"/><rect x="1717" y="584.1" width="3" height="2.2" fill="#ff0000"/><rect x="1722" y="583.3" width="3" height="2.2" fill="#ff0000"/><rect x="1727" y="583.3" width="3" height="2.2" fill="#00ffff"/><rect x="1732" y="584.8" width="3" height="2.2" fill="#00ffff"/><rect x="1737" y="587.0" width="3" height="2.5" fill="#00ffff"/><rect x="1742" y="589.5" width="3" height="3.4" fill="#00ffff"/><rect x="1747" y="592.9" width="3" height="3.7" fill="#00ffff"/><rect x="1752" y="596.6" width="3" height="2.6" fill="#00ffff"/><rect x="1757" y="598.2" width="3" height="2.2" fill="#00ffff"/><rect x="1762" y="598.2" width="3" height="2.2" fill="#ff0000"/><rect x="1767" y="597.8" width="3" height="2.2" fill="#ff0000"/><rect x="1772" y="597.5" width="3" height="2.2" fill="#ff0000"/><rect x="2" y="716.9" width="3" height="18.0" fill="#0000ff"/><rect x="7" y="720.9" width="3" height="19.3" fill="#0000ff"/><rect x="12" y="725.4" width="3" height="22.2" fill="#0000ff"/><rect x="17" y="729.8" width="3" height="21.4" fill="#0000ff"/><rect x="22" y="734.5" width="3" height="23.0" fill="#0000ff"/><rect x="27" y="739.4" width="3" height="23.8" fill="#0000ff"/><rect x="32" y="743.9" width="3" height="21.9" fill="#0000ff"/><rect x="37" y="748.5" width="3" height="22.6" fill="#0000ff"/><rect x="42" y="753.3" width="3" height="23.4" fill="#0000ff"/><rect x="47" y="757.7" width="3" height="21.6" fill="#0000ff"/><rect x="52" y="762.2" width="3" height="21.7" fill="#0000ff"/><rect x="57" y="766.6" width="3" height="21.5" fill="#0000ff"/><rect x="62" y="771.3" width="3" height="23.3" fill="#0000ff"/><rect x="67" y="775.9" width="3" height="22.1" fill="#0000ff"/><rect x="72" y="780.2" width="3" height="21.3" fill="#0000ff"/><rect x="77" y="784.5" width="3" height="21.0" fill="#0000ff"/><rect x="82" y="788.4" width="3" height="18.8" fill="#0000ff"/><rect x="87" y="791.8" width="3" height="16.5" fill="#0000ff"/><rect x="92" y="794.7" width="3" height="14.5" fill="#0000ff"/><rect x="97" y="797.2" width="3" height="12.2" fill="#0000ff"/><rect x="102" y="799.9" width="3" height="13.3" fill="#0000ff"/><rect x="107" y="802.3" width="3" height="11.4" fill="#0000ff"/><rect x="112" y="804.8" width="3" height="12.4" fill="#0000ff"/><rect x="117" y="807.3" width="3" height="12.3" fill="#0000ff"/><rect x="122" y="810.0" width="3" height="13.0" fill="#0000ff"/><rect x="127" y="812.3" width="3" height="11.3" fill="#0000ff"/><rect x="132" y="814.8" width="3" height="12.0" fill="#0000ff"/><rect x="137" y="816.8" width="3" height="9.8" fill="#0000ff"/><rect x="142" y="818.4" width="3" height="7.9" fill="#0000ff"/><rect x="147" y="819.6" width="3" height="5.6" fill="#0000ff"/><rect x="152" y="820.4" width="3" height="4.0" fill="#0000ff"/><rect x="157" y="820.9" width="3" height="2.3" fill="#0000ff"/><rect x="162" y="818.7" width="3" height="2.2" fill="#ffff00"/><rect x="167" y="818.2" width="3" height="2.2" fill="#ffff00"/><rect x="172" y="816.1" width="3" height="3.4" fill="#ffff00"/><rect x="177" y="813.5" width="3" height="5.0" fill="#ffff00"/><rect x="182" y="805.7" width="3" height="10.6" fill="#ffff00"/><rect x="187" y="801.1" width="3" height="12.6" fill="#ffff00"/><rect x="192" y="795.4" width="3" height="15.2" fill="#ffff00"/><rect x="197" y="793.3" width="3" height="14.3" fill="#ffff00"/><rect x="202" y="791.8" width="3" height="13.1" fill="#ffff00"/><rect x="207" y="788.8" width="3" height="13.4" fill="#ffff00"/><rect x="212" y="783.9" width="3" height="15.2" fill="#ffff00"/><rect x="217" y="782.7" width="3" height="13.6" fill="#ffff00"/><rect x="222" y="777.8" width="3" height="15.3" fill="#ffff00"/><rect x="227" y="774.8" width="3" height="15.3" fill="#ffff00"/><rect x="232" y="773.7" width="3" height="13.5" fill="#ffff00"/><rect x="237" y="769.5" width="3" height="14.7" fill="#ffff00"/><rect x="242" y="764.2" width="3" height="16.7" fill="#ffff00"/><rect x="247" y="758.9" width="3" height="18.2" fill="#ffff00"/><rect x="252" y="756.4" width="3" height="17.2" fill="#ffff00"/><rect x="257" y="754.3" width="3" height="16.0" fill="#ffff00"/><rect x="262" y="753.5" width="3" height="13.9" fill="#ffff00"/><rect x="267" y="754.7" width="3" height="10.6" fill="#ffff00"/><rect x="272" y="754.5" width="3" height="8.9" fill="#ffff00"/><rect x="277" y="753.3" width="3" height="8.5" fill="#ffff00"/><rect x="282" y="746.5" width="3" height="12.7" fill="#ffff00"/><rect x="287" y="737.5" width="3" height="17.9" fill="#ffff00"/><rect x="292" y="729.0" width="3" height="21.9" fill="#ffff00"/><rect x="297" y="720.3" width="3" height="25.5" fill="#ffff00"/><rect x="302" y="713.7" width="3" height="26.6" fill="#ffff00"/><rect x="307" y="706.5" width="3" height="28.1" fill="#ffff00"/><rect x="312" y="699.4" width="3" height="29.2" fill="#ffff00"/><rect x="317" y="693.4" width="3" height="29.2" fill="#ffff00"/><rect x="322" y="691.5" width="3" height="25.8" fill="#ffff00"/><rect x="327" y="690.1" width="3" height="22.6" fill="#ffff00"/><rect x="332" y="688.1" width="3" height="20.4" fill="#ffff00"/><rect x="337" y="686.3" width="3" height="18.5" fill="#ffff00"/><rect x="342" y="684.7" width="3" height="16.6" fill="#ffff00"/><rect x="347" y="682.0" width="3" height="16.1" fill="#ffff00"/><rect x="352" y="680.5" width="3" height="14.5" fill="#ffff00"/><rect x="357" y="679.6" width="3" height="12.8" fill="#ffff00"/><rect x="362" y="678.0" width="3" height="12.0" fill="#ffff00"/><rect x="367" y="676.3" width="3" height="11.3" fill="#ffff00"/><rect x="372" y="674.6" width="3" height="10.9" fill="#ffff00"/><rect x="377" y="674.4" width="3" height="9.1" fill="#ffff00"/><rect x="382" y="674.7" width="3" height="7.3" fill="#ffff00"/><rect x="387" y="672.4" width="3" height="8.0" fill="#ffff00"/><rect x="392" y="668.1" width="3" height="10.2" fill="#ffff00"/><rect x="397" y="662.2" width="3" height="13.4" fill="#ffff00"/><rect x="402" y="662.4" width="3" height="10.9" fill="#ffff00"/><rect x="407" y="659.8" width="3" height="11.3" fill="#ffff00"/><rect x="412" y="657.1" width="3" height="11.5" fill="#ffff00"/><rect x="417" y="656.2" width="3" height="10.3" fill="#ffff00"/><rect x="422" y="656.7" width="3" height="8.2" fill="#ffff00"/><rect x="427" y="657.9" width="3" height="5.8" fill="#ffff00"/><rect x="432" y="660.1" width="3" height="3.0" fill="#ffff00"/><rect x="437" y="661.7" width="3" height="2.2" fill="#0000ff"/><rect x="442" y="663.7" width="3" height="3.4" fill="#0000ff"/><rect x="447" y="665.0" width="3" height="6.1" fill="#0000ff"/><rect x="452" y="666.4" width="3" height="7.2" fill="#0000ff"/><rect x="457" y="668.3" width="3" height="9.3" fill="#0000ff"/><rect x="462" y="670.6" width="3" height="10.9" fill="#0000ff"/><rect x="467" y="672.9" width="3" height="11.3" fill="#0000ff"/><rect x="472" y="675.4" width="3" height="12.2" fill="#0000ff"/><rect x="477" y="677.7" width="3" height="11.5" fill="#0000ff"/><rect x="482" y="680.3" width="3" height="12.6" fill="#0000ff"/><rect x="487" y="682.9" width="3" height="12.5" fill="#0000ff"/><rect x="492" y="685.3" width="3" height="12.1" fill="#0000ff"/><rect x="497" y="687.6" width="3" height="10.9" fill="#0000ff"/><rect x="502" y="689.7" width="3" height="10.5" fill="#0000ff"/><rect x="507" y="692.1" width="3" height="11.7" fill="#0000ff"/><rect x="512" y="694.4" width="3" height="11.2" fill="#0000ff"/><rect x="517" y="697.1" width="3" height="13.0" fill="#0000ff"/><rect x="522" y="699.6" width="3" height="12.1" fill="#0000ff"/><rect x="527" y="702.2" width="3" height="13.0" fill="#0000ff"/><rect x="532" y="704.5" width="3" height="11.0" fill="#0000ff"/><rect x="537" y="706.4" width="3" height="9.3" fill="#0000ff"/><rect x="542" y="708.3" width="3" height="9.4" fill="#0000ff"/><rect x="547" y="710.2" width="3" height="9.4" fill="#0000ff"/><rect x="552" y="711.8" width="3" height="7.6" fill="#0000ff"/><rect x="557" y="713.0" width="3" height="6.0" fill="#0000ff"/><rect x="562" y="714.6" width="3" height="7.8" fill="#0000ff"/><rect x="567" y="717.2" width="3" height="12.5" fill="#0000ff"/><rect x="572" y="720.6" width="3" height="16.8" fill="#0000ff"/><rect x="577" y="724.5" width="3" height="19.0" fill="#0000ff"/><rect x="582" y="728.7" width="3" height="20.6" fill="#0000ff"/><rect x="587" y="732.9" width="3" height="20.3" fill="#0000ff"/><rect x="592" y="737.1" width="3" height="20.6" fill="#0000ff"/><rect x="597" y="741.5" width="3" height="21.7" fill="#0000ff"/><rect x="602" y="745.7" width="3" height="20.5" fill="#0000ff"/><rect x="607" y="749.6" width="3" height="18.7" fill="#0000ff"/><rect x="612" y="753.1" width="3" height="17.5" fill="#0000ff"/><rect x="617" y="756.7" width="3" height="17.5" fill="#0000ff"/><rect x="622" y="760.4" width="3" height="18.1" fill="#0000ff"/><rect x="627" y="764.1" width="3" height="17.8" fill="#0000ff"/><rect x="632" y="767.5" width="3" height="16.7" fill="#0000ff"/><rect x="637" y="770.7" width="3" height="15.6" fill="#0000ff"/><rect x="642" y="773.7" width="3" height="14.6" fill="#0000ff"/><rect x="647" y="775.2" width="3" height="7.5" fill="#0000ff"/><rect x="652" y="775.9" width="3" height="3.2" fill="#0000ff"/><rect x="657" y="775.5" width="3" height="2.2" fill="#ffff00"/><rect x="662" y="774.8" width="3" height="2.2" fill="#ffff00"/><rect x="667" y="774.9" width="3" height="2.2" fill="#ffff00"/><rect x="672" y="775.3" width="3" height="2.2" fill="#ffff00"/><rect x="677" y="774.8" width="3" height="2.2" fill="#ffff00"/><rect x="682" y="773.2" width="3" height="2.4" fill="#ffff00"/><rect x="687" y="773.3" width="3" height="2.2" fill="#ffff00"/><rect x="692" y="771.4" width="3" height="3.2" fill="#ffff00"/><rect x="697" y="768.5" width="3" height="5.1" fill="#ffff00"/><rect x="702" y="765.8" width="3" height="6.4" fill="#ffff00"/><rect x="707" y="764.0" width="3" height="6.8" fill="#ffff00"/><rect x="712" y="760.0" width="3" height="9.0" fill="#ffff00"/><rect x="717" y="755.3" width="3" height="11.3" fill="#ffff00"/><rect x="722" y="750.0" width="3" height="13.9" fill="#ffff00"/><rect x="727" y="745.3" width="3" height="15.4" fill="#ffff00"/><rect x="732" y="741.6" width="3" height="15.9" fill="#ffff00"/><rect x="737" y="737.0" width="3" height="16.9" fill="#ffff00"/><rect x="742" y="733.3" width="3" height="17.1" fill="#ffff00"/><rect x="747" y="730.9" width="3" height="16.3" fill="#ffff00"/><rect x="752" y="726.1" width="3" height="17.5" fill="#ffff00"/><rect x="757" y="723.8" width="3" height="16.4" fill="#ffff00"/><rect x="762" y="724.5" width="3" height="13.0" fill="#ffff00"/><rect x="767" y="724.7" width="3" height="10.7" fill="#ffff00"/><rect x="772" y="726.0" width="3" height="7.7" fill="#ffff00"/><rect x="777" y="728.2" width="3" height="4.6" fill="#ffff00"/><rect x="782" y="728.7" width="3" height="3.4" fill="#ffff00"/><rect x="787" y="729.9" width="3" height="2.2" fill="#ffff00"/><rect x="792" y="731.2" width="3" height="2.2" fill="#0000ff"/><rect x="797" y="732.5" width="3" height="2.9" fill="#0000ff"/><rect x="802" y="733.4" width="3" height="4.3" fill="#0000ff"/><rect x="807" y="734.5" width="3" height="5.1" fill="#0000ff"/><rect x="812" y="736.2" width="3" height="8.3" fill="#0000ff"/><rect x="817" y="738.4" width="3" height="11.1" fill="#0000ff"/><rect x="822" y="740.6" width="3" height="10.7" fill="#0000ff"/><rect x="827" y="742.6" width="3" height="9.6" fill="#0000ff"/><rect x="832" y="744.6" width="3" height="9.8" fill="#0000ff"/><rect x="837" y="746.8" width="3" height="10.5" fill="#0000ff"/><rect x="842" y="749.6" width="3" height="14.0" fill="#0000ff"/><rect x="847" y="752.9" width="3" height="16.2" fill="#0000ff"/><rect x="852" y="756.9" width="3" height="19.3" fill="#0000ff"/><rect x="857" y="760.5" width="3" height="17.9" fill="#0000ff"/><rect x="862" y="763.8" width="3" height="16.1" fill="#0000ff"/><rect x="867" y="766.9" width="3" height="15.0" fill="#0000ff"/><rect x="872" y="769.4" width="3" height="12.2" fill="#0000ff"/><rect x="877" y="771.6" width="3" height="10.6" fill="#0000ff"/><rect x="882" y="773.9" width="3" height="11.2" fill="#0000ff"/><rect x="887" y="776.2" width="3" height="11.5" fill="#0000ff"/><rect x="892" y="778.4" width="3" height="10.3" fill="#0000ff"/><rect x="897" y="780.4" width="3" height="10.1" fill="#0000ff"/><rect x="902" y="782.8" width="3" height="11.5" fill="#0000ff"/><rect x="907" y="785.5" width="3" height="13.1" fill="#0000ff"/><rect x="912" y="788.5" width="3" height="15.0" fill="#0000ff"/><rect x="917" y="791.9" width="3" height="16.3" fill="#0000ff"/><rect x="922" y="795.2" width="3" height="16.5" fill="#0000ff"/><rect x="927" y="798.8" width="3" height="17.4" fill="#0000ff"/><rect x="932" y="801.8" width="3" height="14.5" fill="#0000ff"/><rect x="937" y="804.6" width="3" height="13.7" fill="#0000ff"/><rect x="942" y="807.0" width="3" height="11.8" fill="#0000ff"/><rect x="947" y="808.5" width="3" height="7.5" fill="#0000ff"/><rect x="952" y="809.7" width="3" height="5.6" fill="#0000ff"/><rect x="957" y="810.9" width="3" height="6.0" fill="#0000ff"/><rect x="962" y="812.1" width="3" height="5.7" fill="#0000ff"/><rect x="967" y="812.9" width="3" height="3.9" fill="#0000ff"/><rect x="972" y="813.5" width="3" height="3.3" fill="#0000ff"/><rect x="977" y="813.4" width="3" height="2.2" fill="#0000ff"/><rect x="982" y="812.4" width="3" height="2.2" fill="#ffff00"/><rect x="987" y="811.2" width="3" height="2.2" fill="#ffff00"/><rect x="992" y="809.0" width="3" height="3.6" fill="#ffff00"/><rect x="997" y="806.5" width="3" height="5.1" fill="#ffff00"/><rect x="1002" y="805.5" width="3" height="5.0" fill="#ffff00"/><rect x="1007" y="804.2" width="3" height="5.3" fill="#ffff00"/><rect x="1012" y="800.8" width="3" height="7.1" fill="#ffff00"/><rect x="1017" y="797.8" width="3" height="8.5" fill="#ffff00"/><rect x="1022" y="793.9" width="3" height="10.3" fill="#ffff00"/><rect x="1027" y="791.1" width="3" height="10.8" fill="#ffff00"/><rect x="1032" y="786.5" width="3" height="12.8" fill="#ffff00"/><rect x="1037" y="784.1" width="3" height="12.6" fill="#ffff00"/><rect x="1042" y="781.8" width="3" height="12.4" fill="#ffff00"/><rect x="1047" y="779.2" width="3" height="12.5" fill="#ffff00"/><rect x="1052" y="774.1" width="3" height="14.5" fill="#ffff00"/><rect x="1057" y="770.4" width="3" height="15.1" fill="#ffff00"/><rect x="1062" y="768.2" width="3" height="14.4" fill="#ffff00"/><rect x="1067" y="767.0" width="3" height="12.9" fill="#ffff00"/><rect x="1072" y="768.6" width="3" height="9.4" fill="#ffff00"/><rect x="1077" y="767.7" width="3" height="8.5" fill="#ffff00"/><rect x="1082" y="767.9" width="3" height="6.9" fill="#ffff00"/><rect x="1087" y="764.8" width="3" height="8.3" fill="#ffff00"/><rect x="1092" y="764.3" width="3" height="7.3" fill="#ffff00"/><rect x="1097" y="763.7" width="3" height="6.6" fill="#ffff00"/><rect x="1102" y="762.9" width="3" height="6.1" fill="#ffff00"/><rect x="1107" y="761.3" width="3" height="6.5" fill="#ffff00"/><rect x="1112" y="758.6" width="3" height="7.6" fill="#ffff00"/><rect x="1117" y="755.6" width="3" height="8.8" fill="#ffff00"/><rect x="1122" y="752.6" width="3" height="9.8" fill="#ffff00"/><rect x="1127" y="748.7" width="3" height="11.3" fill="#ffff00"/><rect x="1132" y="747.8" width="3" height="10.2" fill="#ffff00"/><rect x="1137" y="741.3" width="3" height="13.9" fill="#ffff00"/><rect x="1142" y="735.2" width="3" height="16.5" fill="#ffff00"/><rect x="1147" y="728.2" width="3" height="19.5" fill="#ffff00"/><rect x="1152" y="720.8" width="3" height="22.4" fill="#ffff00"/><rect x="1157" y="713.8" width="3" height="24.4" fill="#ffff00"/><rect x="1162" y="705.4" width="3" height="27.2" fill="#ffff00"/><rect x="1167" y="699.1" width="3" height="27.8" fill="#ffff00"/><rect x="1172" y="692.9" width="3" height="28.3" fill="#ffff00"/><rect x="1177" y="686.7" width="3" height="28.6" fill="#ffff00"/><rect x="1182" y="680.6" width="3" height="28.8" fill="#ffff00"/><rect x="1187" y="676.2" width="3" height="27.5" fill="#ffff00"/><rect x="1192" y="670.8" width="3" height="27.3" fill="#ffff00"/><rect x="1197" y="666.3" width="3" height="26.5" fill="#ffff00"/><rect x="1202" y="662.4" width="3" height="25.2" fill="#ffff00"/><rect x="1207" y="659.2" width="3" height="23.5" fill="#ffff00"/><rect x="1212" y="656.7" width="3" height="21.7" fill="#ffff00"/><rect x="1217" y="653.0" width="3" height="21.0" fill="#ffff00"/><rect x="1222" y="650.9" width="3" height="19.2" fill="#ffff00"/><rect x="1227" y="648.6" width="3" height="17.9" fill="#ffff00"/><rect x="1232" y="646.0" width="3" height="16.9" fill="#ffff00"/><rect x="1237" y="644.6" width="3" height="15.3" fill="#ffff00"/><rect x="1242" y="643.9" width="3" height="13.2" fill="#ffff00"/><rect x="1247" y="642.9" width="3" height="11.8" fill="#ffff00"/><rect x="1252" y="642.2" width="3" height="10.4" fill="#ffff00"/><rect x="1257" y="641.8" width="3" height="8.9" fill="#ffff00"/><rect x="1262" y="643.5" width="3" height="6.0" fill="#ffff00"/><rect x="1267" y="642.5" width="3" height="5.8" fill="#ffff00"/><rect x="1272" y="640.9" width="3" height="6.1" fill="#ffff00"/><rect x="1277" y="643.4" width="3" height="3.1" fill="#ffff00"/><rect x="1282" y="644.0" width="3" height="2.2" fill="#ffff00"/><rect x="1287" y="645.4" width="3" height="2.2" fill="#0000ff"/><rect x="1292" y="645.4" width="3" height="2.2" fill="#0000ff"/><rect x="1297" y="645.7" width="3" height="2.2" fill="#0000ff"/><rect x="1302" y="645.9" width="3" height="2.2" fill="#0000ff"/><rect x="1307" y="647.1" width="3" height="2.4" fill="#0000ff"/><rect x="1312" y="647.6" width="3" height="2.4" fill="#0000ff"/><rect x="1317" y="648.3" width="3" height="3.7" fill="#0000ff"/><rect x="1322" y="649.1" width="3" height="3.8" fill="#0000ff"/><rect x="1327" y="650.2" width="3" height="5.5" fill="#0000ff"/><rect x="1332" y="651.7" width="3" height="7.0" fill="#0000ff"/><rect x="1337" y="653.0" width="3" height="6.5" fill="#0000ff"/><rect x="1342" y="653.9" width="3" height="4.2" fill="#0000ff"/><rect x="1347" y="654.1" width="3" height="2.2" fill="#0000ff"/><rect x="1352" y="652.7" width="3" height="2.2" fill="#ffff00"/><rect x="1357" y="652.2" width="3" height="2.2" fill="#ffff00"/><rect x="1362" y="650.0" width="3" height="3.3" fill="#ffff00"/><rect x="1367" y="649.4" width="3" height="3.2" fill="#ffff00"/><rect x="1372" y="646.5" width="3" height="5.1" fill="#ffff00"/><rect x="1377" y="642.6" width="3" height="7.4" fill="#ffff00"/><rect x="1382" y="641.3" width="3" height="7.3" fill="#ffff00"/><rect x="1387" y="641.8" width="3" height="5.6" fill="#ffff00"/><rect x="1392" y="643.1" width="3" height="3.5" fill="#ffff00"/><rect x="1397" y="644.9" width="3" height="2.2" fill="#ffff00"/><rect x="1402" y="645.8" width="3" height="2.2" fill="#0000ff"/><rect x="1407" y="647.3" width="3" height="3.6" fill="#0000ff"/><rect x="1412" y="648.2" width="3" height="4.5" fill="#0000ff"/><rect x="1417" y="649.5" width="3" height="6.2" fill="#0000ff"/><rect x="1422" y="651.1" width="3" height="7.6" fill="#0000ff"/><rect x="1427" y="653.1" width="3" height="9.8" fill="#0000ff"/><rect x="1432" y="655.7" width="3" height="12.6" fill="#0000ff"/><rect x="1437" y="658.5" width="3" height="13.8" fill="#0000ff"/><rect x="1442" y="661.7" width="3" height="15.7" fill="#0000ff"/><rect x="1447" y="665.4" width="3" height="18.1" fill="#0000ff"/><rect x="1452" y="669.5" width="3" height="19.9" fill="#0000ff"/><rect x="1457" y="673.7" width="3" height="20.5" fill="#0000ff"/><rect x="1462" y="677.9" width="3" height="20.2" fill="#0000ff"/><rect x="1467" y="682.0" width="3" height="19.9" fill="#0000ff"/><rect x="1472" y="686.6" width="3" height="22.8" fill="#0000ff"/><rect x="1477" y="691.7" width="3" height="24.7" fill="#0000ff"/><rect x="1482" y="697.0" width="3" height="26.0" fill="#0000ff"/><rect x="1487" y="701.5" width="3" height="21.9" fill="#0000ff"/><rect x="1492" y="705.8" width="3" height="21.3" fill="#0000ff"/><rect x="1497" y="710.1" width="3" height="20.7" fill="#0000ff"/><rect x="1502" y="713.8" width="3" height="18.2" fill="#0000ff"/><rect x="1507" y="717.5" width="3" height="17.9" fill="#0000ff"/><rect x="1512" y="720.9" width="3" height="16.8" fill="#0000ff"/><rect x="1517" y="723.7" width="3" height="13.9" fill="#0000ff"/><rect x="1522" y="726.5" width="3" height="13.6" fill="#0000ff"/><rect x="1527" y="728.8" width="3" height="11.2" fill="#0000ff"/><rect x="1532" y="730.7" width="3" height="9.3" fill="#0000ff"/><rect x="1537" y="732.2" width="3" height="7.2" fill="#0000ff"/><rect x="1542" y="733.5" width="3" height="6.5" fill="#0000ff"/><rect x="1547" y="734.5" width="3" height="4.9" fill="#0000ff"/><rect x="1552" y="735.7" width="3" height="5.6" fill="#0000ff"/><rect x="1557" y="736.7" width="3" height="5.0" fill="#0000ff"/><rect x="1562" y="737.6" width="3" height="4.4" fill="#0000ff"/><rect x="1567" y="738.5" width="3" height="4.4" fill="#0000ff"/><rect x="1572" y="738.8" width="3" height="2.2" fill="#0000ff"/><rect x="1577" y="736.8" width="3" height="2.2" fill="#ffff00"/><rect x="1582" y="732.4" width="3" height="5.1" fill="#ffff00"/><rect x="1587" y="726.5" width="3" height="9.2" fill="#ffff00"/><rect x="1592" y="720.7" width="3" height="12.5" fill="#ffff00"/><rect x="1597" y="717.2" width="3" height="13.2" fill="#ffff00"/><rect x="1602" y="712.6" width="3" height="14.8" fill="#ffff00"/><rect x="1607" y="707.6" width="3" height="16.4" fill="#ffff00"/><rect x="1612" y="704.2" width="3" height="16.5" fill="#ffff00"/><rect x="1617" y="701.1" width="3" height="16.2" fill="#ffff00"/><rect x="1622" y="694.2" width="3" height="19.2" fill="#ffff00"/><rect x="1627" y="687.9" width="3" height="21.1" fill="#ffff00"/><rect x="1632" y="683.8" width="3" height="20.9" fill="#ffff00"/><rect x="1637" y="679.2" width="3" height="21.2" fill="#ffff00"/><rect x="1642" y="673.9" width="3" height="22.0" fill="#ffff00"/><rect x="1647" y="668.4" width="3" height="22.9" fill="#ffff00"/><rect x="1652" y="664.3" width="3" height="22.3" fill="#ffff00"/><rect x="1657" y="660.4" width="3" height="21.8" fill="#ffff00"/><rect x="1662" y="655.4" width="3" height="22.3" fill="#ffff00"/><rect x="1667" y="652.4" width="3" height="20.9" fill="#ffff00"/><rect x="1672" y="649.5" width="3" height="19.8" fill="#ffff00"/><rect x="1677" y="646.4" width="3" height="19.0" fill="#ffff00"/><rect x="1682" y="643.3" width="3" height="18.3" fill="#ffff00"/><rect x="1687" y="640.2" width="3" height="17.8" fill="#ffff00"/><rect x="1692" y="636.5" width="3" height="17.9" fill="#ffff00"/><rect x="1697" y="633.2" width="3" height="17.5" fill="#ffff00"/><rect x="1702" y="630.0" width="3" height="17.2" fill="#ffff00"/><rect x="1707" y="625.6" width="3" height="17.9" fill="#ffff00"/><rect x="1712" y="624.3" width="3" height="16.0" fill="#ffff00"/><rect x="1717" y="621.2" width="3" height="15.9" fill="#ffff00"/><rect x="1722" y="618.5" width="3" height="15.4" fill="#ffff00"/><rect x="1727" y="616.1" width="3" height="14.7" fill="#ffff00"/><rect x="1732" y="615.0" width="3" height="13.1" fill="#ffff00"/><rect x="1737" y="614.2" width="3" height="11.6" fill="#ffff00"/><rect x="1742" y="614.2" width="3" height="9.6" fill="#ffff00"/><rect x="1747" y="613.7" width="3" height="8.4" fill="#ffff00"/><rect x="1752" y="613.0" width="3" height="7.5" fill="#ffff00"/><rect x="1757" y="612.8" width="3" height="6.5" fill="#ffff00"/><rect x="1762" y="611.0" width="3" height="6.9" fill="#ffff00"/><rect x="1767" y="609.4" width="3" height="7.0" fill="#ffff00"/><rect x="1772" y="608.9" width="3" height="6.2" fill="#ffff00"/></g>
<polyline points="3.8,828.4 4.3,828.7 4.8,828.9 5.3,829.2 5.8,829.4 6.3,829.7 6.8,830.0 7.3,830.2 7.8,830.5 8.3,830.7 8.8,831.0 9.3,832.4 9.8,833.8 10.3,835.1 10.8,836.5 11.3,837.9 11.8,839.3 12.3,840.7 12.8,842.0 13.3,843.4 13.8,844.8 14.3,845.0 14.8,845.3 15.3,845.5 15.8,845.8 16.3,846.0 16.8,846.3 17.3,846.5 17.8,846.8 18.3,847.0 18.8,847.3 19.3,847.9 19.8,848.8 20.3,849.6 20.8,850.4 21.3,851.2 21.8,852.0 22.3,852.8 22.8,853.6 23.3,854.5 23.8,855.3 24.3,856.1 24.8,856.9 25.3,857.7 25.8,858.5 26.3,859.3 26.8,860.1 27.3,861.0 27.8,861.5 28.3,861.3 28.8,861.0 29.3,860.7 29.8,860.4 30.3,860.1 30.8,859.8 31.3,859.5 31.8,859.3 32.3,859.0 32.8,858.7 33.3,858.4 33.8,858.1 34.3,858.1 34.8,858.4 35.3,858.6 35.8,858.9 36.3,859.1 36.8,859.4 37.3,859.6 37.8,859.9 38.3,860.1 38.8,860.4 39.3,860.6 39.8,860.9 40.3,861.1 40.8,861.4 41.3,861.6 41.8,861.9 42.3,862.1 42.8,862.4 43.3,862.6 43.8,862.9 44.3,862.7 44.8,862.3 45.3,861.8 45.8,861.4 46.3,860.9 46.8,860.5 47.3,860.0 47.8,859.6 48.3,859.1 48.8,858.7 49.3,858.2 49.8,857.8 50.3,857.3 50.8,857.5 51.3,857.7 51.8,857.8 52.3,858.0 52.8,858.2 53.3,858.4 53.8,858.5 54.3,859.3 54.8,860.4 55.3,861.5 55.8,862.7 56.3,863.8 56.8,864.9 57.3,866.1 57.8,867.2 58.3,868.3 58.8,869.4 59.3,870.6 59.8,871.7 60.3,872.8 60.8,874.0 61.3,875.1 61.8,876.2 62.3,877.3 62.8,878.5 63.3,879.0 63.8,879.4 64.3,879.7 64.8,880.1 65.3,880.5 65.8,880.9 66.3,881.2 66.8,881.6 67.3,882.0 67.8,882.4 68.3,882.5 68.8,882.5 69.3,882.5 69.8,882.5 70.3,882.5 70.8,882.5 71.3,882.5 71.8,882.5 72.3,882.5 72.8,882.5 73.3,882.5 73.8,882.5 74.3,882.5 74.8,882.5 75.3,882.5 75.8,882.1 76.3,881.5 76.8,880.9 77.3,880.2 77.8,879.6 78.3,879.0 78.8,878.3 79.3,877.7 79.8,877.1 80.3,876.5 80.8,875.0 81.3,873.0 81.8,870.9 82.3,868.9 82.8,866.9 83.3,864.9 83.8,862.9 84.3,860.8 84.8,858.8 85.3,856.8 85.8,854.2 86.3,851.2 86.8,848.2 87.3,845.2 87.8,842.1 88.3,839.1 88.8,836.1 89.3,833.1 89.8,830.1 90.3,827.1 90.8,824.1 91.3,821.0 91.8,818.0 92.3,815.0 92.8,812.0 93.3,809.1 93.8,806.4 94.3,803.6 94.8,800.8 95.3,798.0 95.8,795.2 96.3,792.5 96.8,789.7 97.3,786.9 97.8,784.1 98.3,782.9 98.8,782.8 99.3,782.6 99.8,782.5 100.3,782.4 100.8,782.2 101.3,782.1 101.8,781.9 102.3,781.8 102.8,781.7 103.3,781.6 103.8,781.5 104.3,781.4 104.8,781.3 105.3,781.2 105.8,781.1 106.3,781.0 106.8,780.9 107.3,780.8 107.8,780.7 108.3,780.7 108.8,781.5 109.3,782.2 109.8,783.0 110.3,783.7 110.8,784.4 111.3,785.2 111.8,785.9 112.3,786.7 112.8,787.4 113.3,788.3 113.8,789.6 114.3,791.0 114.8,792.3 115.3,793.7 115.8,795.0 116.3,796.4 116.8,797.7 117.3,799.1 117.8,800.5 118.3,801.8 118.8,803.2 119.3,804.5 119.8,805.9 120.3,807.2 120.8,808.5 121.3,809.7 121.8,810.8 122.3,812.0 122.8,813.1 123.3,814.3 123.8,815.4 124.3,816.5 124.8,816.8 125.3,816.5 125.8,816.2 126.3,815.9 126.8,815.5 127.3,815.2 127.8,814.9 128.3,814.6 128.8,816.2 129.3,817.9 129.8,819.5 130.3,821.2 130.8,822.8 131.3,824.4 131.8,826.1 132.3,827.7 132.8,829.4 133.3,831.0 133.8,828.7 134.3,826.4 134.8,824.0 135.3,821.7 135.8,819.4 136.3,817.1 136.8,814.7 137.3,812.4 137.8,810.1 138.3,807.8 138.8,805.5 139.3,803.1 139.8,800.8 140.3,798.5 140.8,796.2 141.3,792.6 141.8,788.7 142.3,784.9 142.8,781.0 143.3,777.2 143.8,773.3 144.3,769.4 144.8,765.6 145.3,761.7 145.8,757.9 146.3,754.0 146.8,750.1 147.3,746.3 147.8,742.4 148.3,738.6 148.8,734.7 149.3,730.8 149.8,727.0 150.3,723.1 150.8,719.2 151.3,715.7 151.8,712.4 152.3,709.2 152.8,705.9 153.3,702.6 153.8,699.3 154.3,696.0 154.8,692.7 155.3,689.4 155.8,686.1 156.3,682.8 156.8,679.6 157.3,676.3 157.8,673.0 158.3,669.7 158.8,666.4 159.3,663.1 159.8,659.8 160.3,656.5 160.8,653.3 161.3,650.0 161.8,646.7 162.3,643.4 162.8,640.1 163.3,636.8 163.8,634.8 164.3,633.5 164.8,632.3 165.3,631.1 165.8,629.9 166.3,628.7 166.8,627.4 167.3,626.2 167.8,625.0 168.3,623.8 168.8,622.6 169.3,621.3 169.8,620.1 170.3,618.9 170.8,617.7 171.3,616.5 171.8,615.2 172.3,614.0 172.8,612.8 173.3,611.6 173.8,610.4 174.3,609.1 174.8,607.9 175.3,606.7 175.8,605.5 176.3,604.2 176.8,602.8 177.3,601.4 177.8,600.1 178.3,598.7 178.8,597.3 179.3,596.0 179.8,594.6 180.3,593.2 180.8,591.8 181.3,590.5 181.8,589.1 182.3,587.7 182.8,586.4 183.3,585.0 183.8,583.6 184.3,582.3 184.8,580.9 185.3,579.5 185.8,578.1 186.3,577.6 186.8,577.6 187.3,577.6 187.8,577.6 188.3,577.6 188.8,577.6 189.3,577.6 189.8,577.6 190.3,577.6 190.8,577.6 191.3,578.0 191.8,578.8 192.3,579.5 192.8,580.3 193.3,581.0 193.8,581.7 194.3,582.5 194.8,583.2 195.3,584.0 195.8,584.7 196.3,587.7 196.8,592.3 197.3,596.8 197.8,601.4 198.3,605.9 198.8,610.5 199.3,615.0 199.8,619.6 200.3,624.1 200.8,628.7 201.3,631.7 201.8,633.6 202.3,635.5 202.8,637.4 203.3,639.4 203.8,641.3 204.3,643.2 204.8,645.2 205.3,647.1 205.8,649.0 206.3,651.0 206.8,652.9 207.3,654.8 207.8,656.7 208.3,658.7 208.8,660.6 209.3,660.3 209.8,660.1 210.3,659.8 210.8,659.6 211.3,659.3 211.8,659.0 212.3,658.8 212.8,658.5 213.3,658.3 213.8,658.0 214.3,658.9 214.8,659.8 215.3,660.7 215.8,661.6 216.3,662.5 216.8,663.4 217.3,664.3 217.8,665.2 218.3,666.1 218.8,667.0 219.3,666.4 219.8,665.8 220.3,665.2 220.8,664.6 221.3,664.0 221.8,663.4 222.3,662.9 222.8,662.3 223.3,661.7 223.8,661.1 224.3,660.5 224.8,659.9 225.3,659.3 225.8,658.7 226.3,658.1 226.8,657.9 227.3,657.8 227.8,657.7 228.3,657.5 228.8,657.4 229.3,657.3 229.8,657.2 230.3,657.1 230.8,656.9 231.3,656.8 231.8,656.7 232.3,656.6 232.8,656.5 233.3,656.3 233.8,656.2 234.3,656.1 234.8,656.0 235.3,655.9 235.8,655.7 236.3,655.6 236.8,654.2 237.3,652.5 237.8,650.8 238.3,649.0 238.8,647.3 239.3,645.6 239.8,643.9 240.3,642.1 240.8,640.4 241.3,638.7 241.8,636.9 242.3,635.2 242.8,633.4 243.3,631.7 243.8,629.9 244.3,628.1 244.8,626.4 245.3,624.6 245.8,622.9 246.3,621.1 246.8,619.3 247.3,617.6 247.8,615.8 248.3,614.1 248.8,612.3 249.3,611.7 249.8,612.0 250.3,612.2 250.8,612.5 251.3,612.7 251.8,612.9 252.3,613.2 252.8,613.4 253.3,613.7 253.8,613.9 254.3,615.3 254.8,617.4 255.3,619.6 255.8,621.7 256.3,623.9 256.8,626.0 257.3,628.2 257.8,630.3 258.3,632.5 258.8,634.6 259.3,637.6 259.8,641.1 260.3,644.5 260.8,648.0 261.3,651.5 261.8,655.0 262.3,658.4 262.8,661.9 263.3,665.4 263.8,668.8 264.3,672.3 264.8,675.8 265.3,679.3 265.8,682.7 266.3,686.2 266.8,690.2 267.3,694.8 267.8,699.5 268.3,704.2 268.8,708.9 269.3,713.6 269.8,718.2 270.3,722.9 270.8,727.6 271.3,732.3 271.8,736.5 272.3,739.1 272.8,741.7 273.3,744.3 273.8,746.9 274.3,749.5 274.8,752.1 275.3,754.7 275.8,757.3 276.3,759.9 276.8,762.6 277.3,765.2 277.8,767.8 278.3,767.4 278.8,765.1 279.3,762.9 279.8,760.6 280.3,758.3 280.8,756.0 281.3,753.7 281.8,751.4 282.3,749.2 282.8,746.9 283.3,744.6 283.8,742.3 284.3,740.0 284.8,737.7 285.3,735.5 285.8,733.2 286.3,730.9 286.8,728.6 287.3,724.7 287.8,720.8 288.3,716.9 288.8,713.0 289.3,709.1 289.8,705.2 290.3,701.3 290.8,697.4 291.3,693.5 291.8,689.6 292.3,685.7 292.8,681.8 293.3,677.9 293.8,674.0 294.3,670.1 294.8,666.2 295.3,662.3 295.8,658.4 296.3,654.5 296.8,650.6 297.3,646.5 297.8,642.3 298.3,638.2 298.8,634.0 299.3,629.9 299.8,625.8 300.3,621.6 300.8,617.5 301.3,613.4 301.8,609.2 302.3,605.1 302.8,600.9 303.3,596.8 303.8,592.7 304.3,588.5 304.8,586.7 305.3,585.4 305.8,584.1 306.3,582.9 306.8,581.6 307.3,580.3 307.8,579.1 308.3,577.8 308.8,576.5 309.3,575.3 309.8,574.4 310.3,573.6 310.8,572.8 311.3,572.0 311.8,571.3 312.3,570.5 312.8,569.7 313.3,568.9 313.8,568.1 314.3,567.4 314.8,566.6 315.3,565.8 315.8,565.0 316.3,564.3 316.8,563.5 317.3,562.7 317.8,561.9 318.3,561.8 318.8,564.3 319.3,566.8 319.8,569.3 320.3,571.8 320.8,574.3 321.3,576.8 321.8,579.2 322.3,581.7 322.8,584.2 323.3,586.7 323.8,589.2 324.3,591.7 324.8,594.5 325.3,597.5 325.8,600.6 326.3,603.6 326.8,606.6 327.3,609.6 327.8,612.6 328.3,615.7 328.8,618.7 329.3,621.7 329.8,624.7 330.3,627.7 330.8,630.8 331.3,633.8 331.8,636.8 332.3,638.9 332.8,640.5 333.3,642.0 333.8,643.6 334.3,645.1 334.8,646.7 335.3,648.2 335.8,649.8 336.3,651.3 336.8,652.9 337.3,654.4 337.8,656.0 338.3,657.5 338.8,659.0 339.3,660.6 339.8,662.1 340.3,663.7 340.8,665.2 341.3,666.8 341.8,668.3 342.3,669.9 342.8,671.4 343.3,673.0 343.8,674.5 344.3,676.1 344.8,677.1 345.3,677.2 345.8,677.4 346.3,677.5 346.8,677.7 347.3,677.8 347.8,678.0 348.3,678.1 348.8,678.3 349.3,678.4 349.8,678.6 350.3,678.7 350.8,678.9 351.3,679.1 351.8,679.2 352.3,679.4 352.8,679.5 353.3,679.7 353.8,679.8 354.3,680.0 354.8,680.1 355.3,680.3 355.8,680.4 356.3,680.6 356.8,680.7 357.3,680.9 357.8,681.2 358.3,681.4 358.8,681.7 359.3,681.9 359.8,682.2 360.3,682.4 360.8,682.6 361.3,682.9 361.8,683.1 362.3,683.4 362.8,683.6 363.3,683.9 363.8,684.1 364.3,684.3 364.8,684.6 365.3,684.8 365.8,685.1 366.3,685.3 366.8,685.5 367.3,685.8 367.8,686.0 368.3,686.3 368.8,686.5 369.3,686.8 369.8,687.0 370.3,687.8 370.8,688.5 371.3,689.3 371.8,690.0 372.3,690.8 372.8,691.6 373.3,692.3 373.8,693.1 374.3,693.8 374.8,694.6 375.3,695.4 375.8,696.1 376.3,696.9 376.8,697.6 377.3,698.4 377.8,699.6 378.3,700.8 378.8,702.1 379.3,703.3 379.8,704.5 380.3,705.7 380.8,706.9 381.3,708.2 381.8,709.4 382.3,710.6 382.8,711.8 383.3,713.1 383.8,714.3 384.3,715.5 384.8,716.7 385.3,717.9 385.8,719.2 386.3,720.4 386.8,721.6 387.3,722.8 387.8,724.0 388.3,725.3 388.8,724.7 389.3,721.6 389.8,718.5 390.3,715.3 390.8,712.2 391.3,709.0 391.8,705.9 392.3,702.8 392.8,699.6 393.3,696.5 393.8,693.3 394.3,690.2 394.8,687.1 395.3,683.8 395.8,680.4 396.3,677.0 396.8,673.6 397.3,670.2 397.8,666.8 398.3,663.4 398.8,660.0 399.3,656.6 399.8,653.2 400.3,651.7 400.8,651.5 401.3,651.4 401.8,651.2 402.3,651.0 402.8,650.9 403.3,650.7 403.8,650.5 404.3,650.4 404.8,650.2 405.3,650.0 405.8,649.9 406.3,649.7 406.8,649.5 407.3,649.4 407.8,649.5 408.3,649.8 408.8,650.1 409.3,650.4 409.8,650.7 410.3,651.1 410.8,651.4 411.3,651.7 411.8,652.0 412.3,652.3 412.8,652.6 413.3,653.0 413.8,653.3 414.3,653.6 414.8,653.9 415.3,654.2 415.8,654.5 416.3,654.8 416.8,655.2 417.3,655.5 417.8,657.6 418.3,661.0 418.8,664.3 419.3,667.7 419.8,671.1 420.3,674.4 420.8,677.8 421.3,681.1 421.8,684.5 422.3,687.9 422.8,691.2 423.3,694.6 423.8,697.9 424.3,701.3 424.8,704.7 425.3,708.9 425.8,713.8 426.3,718.7 426.8,723.5 427.3,728.4 427.8,733.3 428.3,738.1 428.8,743.0 429.3,747.9 429.8,752.7 430.3,757.6 430.8,762.5 431.3,767.3 431.8,772.2 432.3,777.1 432.8,781.3 433.3,784.6 433.8,787.8 434.3,791.1 434.8,794.4 435.3,797.7 435.8,800.9 436.3,804.2 436.8,807.5 437.3,810.7 437.8,814.0 438.3,817.3 438.8,820.6 439.3,823.8 439.8,827.1 440.3,830.2 440.8,833.2 441.3,836.2 441.8,839.2 442.3,842.2 442.8,845.2 443.3,848.2 443.8,851.2 444.3,854.2 444.8,857.2 445.3,860.2 445.8,863.2 446.3,866.2 446.8,869.2 447.3,872.2 447.8,875.2 448.3,878.2 448.8,881.2 449.3,881.6 449.8,882.1 450.3,882.5 450.8,882.9 451.3,883.4 451.8,883.8 452.3,884.2 452.8,884.7 453.3,885.1 453.8,885.5 454.3,886.0 454.8,886.4 455.3,886.8 455.8,887.3 456.3,887.7 456.8,888.1 457.3,888.6 457.8,889.0 458.3,889.4 458.8,889.9 459.3,890.3 459.8,890.7 460.3,891.2 460.8,891.6 461.3,892.0 461.8,892.5 462.3,892.9 462.8,893.3 463.3,893.8 463.8,894.2 464.3,893.4 464.8,892.2 465.3,891.0 465.8,889.8 466.3,888.7 466.8,887.5 467.3,886.3 467.8,885.1 468.3,884.0 468.8,882.8 469.3,881.6 469.8,880.4 470.3,879.3 470.8,878.1 471.3,876.9 471.8,875.7 472.3,874.6 472.8,873.4 473.3,872.2 473.8,871.0 474.3,869.9 474.8,868.7 475.3,867.5 475.8,866.3 476.3,865.2 476.8,864.0 477.3,862.8 477.8,861.6 478.3,860.5 478.8,859.3 479.3,858.1 479.8,856.9 480.3,855.9 480.8,855.5 481.3,855.1 481.8,854.6 482.3,854.2 482.8,853.8 483.3,853.3 483.8,852.9 484.3,852.5 484.8,852.0 485.3,851.6 485.8,851.2 486.3,850.7 486.8,850.3 487.3,849.9 487.8,849.5 488.3,849.0 488.8,848.6 489.3,848.2 489.8,847.7 490.3,847.3 490.8,846.5 491.3,845.8 491.8,845.0 492.3,844.3 492.8,843.5 493.3,842.8 493.8,842.0 494.3,841.3 494.8,840.5 495.3,839.8 495.8,839.0 496.3,838.3 496.8,837.5 497.3,836.8 497.8,836.0 498.3,835.3 498.8,834.5 499.3,833.8 499.8,833.0 500.3,832.3 500.8,831.5 501.3,830.8 501.8,830.0 502.3,829.3 502.8,828.5 503.3,828.6 503.8,829.0 504.3,829.3 504.8,829.6 505.3,829.9 505.8,830.2 506.3,830.5 506.8,830.8 507.3,831.1 507.8,831.5 508.3,831.8 508.8,832.1 509.3,832.4 509.8,832.7 510.3,833.0 510.8,833.3 511.3,833.6 511.8,834.0 512.3,834.3 512.8,834.6 513.3,835.5 513.8,836.8 514.3,838.1 514.8,839.4 515.3,840.7 515.8,842.1 516.3,843.4 516.8,844.7 517.3,846.0 517.8,847.3 518.3,848.6 518.8,849.9 519.3,851.1 519.8,851.4 520.3,851.8 520.8,852.1 521.3,852.4 521.8,852.8 522.3,853.1 522.8,853.5 523.3,853.3 523.8,852.8 524.3,852.3 524.8,851.8 525.3,851.3 525.8,850.7 526.3,850.2 526.8,849.7 527.3,849.2 527.8,848.7 528.3,844.8 528.8,838.7 529.3,832.6 529.8,826.5 530.3,820.4 530.8,814.2 531.3,808.1 531.8,802.0 532.3,795.9 532.8,789.8 533.3,783.6 533.8,777.5 534.3,771.4 534.8,765.3 535.3,759.2 535.8,753.7 536.3,749.1 536.8,744.6 537.3,740.0 537.8,735.4 538.3,733.1 538.8,732.4 539.3,731.6 539.8,730.9 540.3,730.1 540.8,729.3 541.3,728.6 541.8,727.8 542.3,727.1 542.8,726.3 543.3,725.6 543.8,725.0 544.3,724.4 544.8,723.8 545.3,723.1 545.8,722.5 546.3,721.9 546.8,721.3 547.3,720.7 547.8,720.0 548.3,718.1 548.8,715.2 549.3,712.3 549.8,709.4 550.3,706.5 550.8,703.6 551.3,700.7 551.8,697.8 552.3,694.9 552.8,692.0 553.3,690.1 553.8,689.1 554.3,688.0 554.8,686.9 555.3,685.8 555.8,684.7 556.3,683.6 556.8,682.5 557.3,681.5 557.8,680.4 558.3,680.1 558.8,683.2 559.3,686.3 559.8,689.4 560.3,692.5 560.8,695.6 561.3,698.6 561.8,701.7 562.3,704.8 562.8,707.9 563.3,711.0 563.8,714.9 564.3,718.7 564.8,722.6 565.3,726.4 565.8,730.3 566.3,734.8 566.8,739.4 567.3,743.9 567.8,748.4 568.3,752.9 568.8,757.5 569.3,762.0 569.8,766.5 570.3,771.1 570.8,775.6 571.3,780.1 571.8,784.7 572.3,789.2 572.8,793.7 573.3,798.2 573.8,802.8 574.3,807.3 574.8,811.8 575.3,816.4 575.8,820.9 576.3,822.3 576.8,823.6 577.3,825.0 577.8,826.3 578.3,827.7 578.8,829.0 579.3,830.4 579.8,831.8 580.3,833.1 580.8,834.5 581.3,835.8 581.8,837.2 582.3,838.6 582.8,839.9 583.3,841.3 583.8,842.6 584.3,844.0 584.8,844.8 585.3,844.7 585.8,844.7 586.3,844.6 586.8,844.6 587.3,844.5 587.8,844.5 588.3,844.4 588.8,844.4 589.3,844.3 589.8,844.3 590.3,844.2 590.8,844.2 591.3,844.1 591.8,844.1 592.3,844.0 592.8,844.0 593.3,843.9 593.8,843.9 594.3,843.8 594.8,843.7 595.3,843.7 595.8,843.6 596.3,843.6 596.8,843.5 597.3,843.3 597.8,842.4 598.3,841.5 598.8,840.6 599.3,839.7 599.8,838.8 600.3,837.9 600.8,837.0 601.3,836.1 601.8,835.2 602.3,834.4 602.8,833.5 603.3,832.6 603.8,831.1 604.3,829.2 604.8,827.3 605.3,825.4 605.8,823.5 606.3,821.6 606.8,819.7 607.3,817.8 607.8,815.9 608.3,814.1 608.8,813.0 609.3,812.5 609.8,812.0 610.3,811.5 610.8,811.0 611.3,810.5 611.8,810.0 612.3,809.5 612.8,809.0 613.3,808.5 613.8,808.0 614.3,807.5 614.8,807.0 615.3,806.5 615.8,806.0 616.3,805.5 616.8,805.0 617.3,804.5 617.8,805.1 618.3,805.7 618.8,806.4 619.3,807.0 619.8,807.6 620.3,808.2 620.8,808.8 621.3,809.5 621.8,810.1 622.3,810.7 622.8,811.3 623.3,811.9 623.8,812.5 624.3,813.2 624.8,813.8 625.3,814.4 625.8,815.0 626.3,815.6 626.8,816.3 627.3,816.9 627.8,816.8 628.3,816.5 628.8,816.2 629.3,815.9 629.8,815.6 630.3,815.4 630.8,815.1 631.3,814.8 631.8,814.5 632.3,814.2 632.8,813.9 633.3,813.6 633.8,813.4 634.3,813.1 634.8,812.8 635.3,812.5 635.8,812.2 636.3,811.9 636.8,811.3 637.3,810.7 637.8,810.1 638.3,809.6 638.8,809.0 639.3,808.4 639.8,807.8 640.3,807.2 640.8,806.7 641.3,806.1 641.8,805.5 642.3,804.9 642.8,804.3 643.3,803.8 643.8,802.7 644.3,799.7 644.8,796.7 645.3,793.7 645.8,790.8 646.3,787.8 646.8,784.8 647.3,781.8 647.8,775.7 648.3,767.5 648.8,759.4 649.3,751.2 649.8,743.0 650.3,734.8 650.8,726.7 651.3,718.5 651.8,714.2 652.3,709.9 652.8,705.7 653.3,701.4 653.8,697.1 654.3,692.8 654.8,688.5 655.3,684.3 655.8,680.0 656.3,675.7 656.8,674.3 657.3,672.9 657.8,671.5 658.3,670.1 658.8,668.7 659.3,667.3 659.8,665.9 660.3,664.5 660.8,663.1 661.3,661.7 661.8,660.3 662.3,658.9 662.8,657.5 663.3,656.1 663.8,654.7 664.3,654.4 664.8,654.5 665.3,654.6 665.8,654.6 666.3,654.7 666.8,654.7 667.3,654.8 667.8,654.9 668.3,654.9 668.8,655.0 669.3,655.9 669.8,657.1 670.3,658.2 670.8,659.4 671.3,660.5 671.8,661.7 672.3,662.8 672.8,664.0 673.3,665.1 673.8,666.3 674.3,667.4 674.8,668.6 675.3,669.5 675.8,669.7 676.3,669.9 676.8,670.1 677.3,670.3 677.8,670.5 678.3,670.7 678.8,670.9 679.3,671.1 679.8,671.3 680.3,671.5 680.8,671.7 681.3,671.9 681.8,672.4 682.3,673.1 682.8,673.7 683.3,674.4 683.8,675.1 684.3,675.7 684.8,676.4 685.3,677.1 685.8,677.7 686.3,678.4 686.8,679.1 687.3,679.7 687.8,680.4 688.3,681.1 688.8,681.7 689.3,681.1 689.8,679.5 690.3,677.9 690.8,676.3 691.3,674.8 691.8,673.2 692.3,671.6 692.8,670.1 693.3,668.5 693.8,666.9 694.3,665.4 694.8,663.8 695.3,662.2 695.8,660.6 696.3,659.1 696.8,657.5 697.3,655.9 697.8,654.4 698.3,652.8 698.8,651.2 699.3,650.4 699.8,650.0 700.3,649.6 700.8,649.2 701.3,648.9 701.8,648.5 702.3,648.1 702.8,647.7 703.3,647.3 703.8,647.0 704.3,646.9 704.8,647.2 705.3,647.4 705.8,647.7 706.3,647.9 706.8,648.2 707.3,648.4 707.8,648.7 708.3,648.9 708.8,649.2 709.3,649.1 709.8,648.6 710.3,648.2 710.8,647.8 711.3,647.4 711.8,647.0 712.3,646.6 712.8,646.2 713.3,645.8 713.8,645.4 714.3,645.0 714.8,644.6 715.3,644.1 715.8,643.7 716.3,643.3 716.8,642.8 717.3,642.0 717.8,641.2 718.3,640.3 718.8,639.5 719.3,638.7 719.8,637.8 720.3,637.0 720.8,636.2 721.3,635.3 721.8,634.5 722.3,633.7 722.8,632.8 723.3,632.0 723.8,631.2 724.3,630.5 724.8,630.3 725.3,630.2 725.8,630.1 726.3,630.0 726.8,629.8 727.3,629.7 727.8,629.6 728.3,629.5 728.8,629.3 729.3,629.2 729.8,629.6 730.3,630.0 730.8,630.3 731.3,630.7 731.8,631.1 732.3,631.5 732.8,631.8 733.3,632.2 733.8,632.6 734.3,633.0 734.8,633.3 735.3,633.7 735.8,634.1 736.3,634.5 736.8,634.8 737.3,635.2 737.8,635.6 738.3,636.0 738.8,636.3 739.3,636.7 739.8,638.3 740.3,639.8 740.8,641.4 741.3,643.0 741.8,644.6 742.3,646.1 742.8,647.7 743.3,649.3 743.8,650.9 744.3,652.4 744.8,654.0 745.3,655.6 745.8,657.1 746.3,658.7 746.8,660.3 747.3,660.2 747.8,659.7 748.3,659.2 748.8,658.7 749.3,658.2 749.8,657.7 750.3,657.2 750.8,656.7 751.3,656.2 751.8,655.7 752.3,656.3 752.8,657.1 753.3,658.0 753.8,658.8 754.3,659.6 754.8,660.5 755.3,661.3 755.8,662.2 756.3,663.0 756.8,663.8 757.3,664.7 757.8,665.5 758.3,666.4 758.8,667.2 759.3,668.0 759.8,671.2 760.3,674.9 760.8,678.6 761.3,682.3 761.8,686.0 762.3,689.7 762.8,693.4 763.3,697.1 763.8,700.8 764.3,704.5 764.8,709.0 765.3,713.9 765.8,718.9 766.3,723.8 766.8,728.8 767.3,733.7 767.8,738.7 768.3,743.6 768.8,748.6 769.3,753.5 769.8,758.3 770.3,763.0 770.8,767.7 771.3,772.4 771.8,777.1 772.3,781.8 772.8,786.5 773.3,791.2 773.8,795.9 774.3,800.6 774.8,805.3 775.3,810.0 775.8,814.7 776.3,819.4 776.8,824.1 777.3,827.8 777.8,830.8 778.3,833.8 778.8,836.7 779.3,839.7 779.8,842.7 780.3,845.7 780.8,848.7 781.3,851.7 781.8,854.6 782.3,857.6 782.8,860.6 783.3,863.6 783.8,863.2 784.3,862.9 784.8,862.5 785.3,862.1 785.8,861.7 786.3,861.4 786.8,861.0 787.3,860.6 787.8,860.2 788.3,859.9 788.8,860.1 789.3,860.5 789.8,860.9 790.3,861.2 790.8,861.6 791.3,862.0 791.8,862.4 792.3,862.8 792.8,863.1 793.3,863.5 793.8,863.3 794.3,862.8 794.8,862.4 795.3,861.9 795.8,861.5 796.3,861.1 796.8,860.6 797.3,860.2 797.8,859.8 798.3,859.3 798.8,858.9 799.3,858.5 799.8,858.0 800.3,857.6 800.8,857.2 801.3,856.7 801.8,856.3 802.3,855.8 802.8,855.4 803.3,855.0 803.8,854.9 804.3,855.2 804.8,855.4 805.3,855.7 805.8,855.9 806.3,856.2 806.8,856.4 807.3,856.7 807.8,856.9 808.3,857.2 808.8,858.2 809.3,859.6 809.8,861.0 810.3,862.5 810.8,863.9 811.3,865.3 811.8,866.8 812.3,868.2 812.8,869.6 813.3,871.1 813.8,872.5 814.3,874.0 814.8,875.4 815.3,876.8 815.8,878.3 816.3,879.7 816.8,881.1 817.3,882.6 817.8,884.0 818.3,885.4 818.8,886.1 819.3,885.6 819.8,885.1 820.3,884.6 820.8,884.1 821.3,883.5 821.8,883.0 822.3,882.5 822.8,882.0 823.3,881.5 823.8,880.6 824.3,879.0 824.8,877.5 825.3,875.9 825.8,874.3 826.3,872.8 826.8,871.2 827.3,869.7 827.8,868.1 828.3,866.6 828.8,865.0 829.3,863.4 829.8,861.9 830.3,860.3 830.8,858.8 831.3,857.2 831.8,855.7 832.3,854.1 832.8,852.5 833.3,851.0 833.8,849.4 834.3,847.9 834.8,846.3 835.3,846.0 835.8,846.0 836.3,846.0 836.8,846.0 837.3,846.0 837.8,846.0 838.3,846.0 838.8,846.0 839.3,846.0 839.8,846.0 840.3,846.5 840.8,847.2 841.3,848.0 841.8,848.7 842.3,849.5 842.8,850.2 843.3,851.0 843.8,851.7 844.3,852.5 844.8,853.2 845.3,854.0 845.8,854.7 846.3,855.5 846.8,856.2 847.3,857.0 847.8,858.0 848.3,859.2 848.8,860.4 849.3,861.6 849.8,862.8 850.3,864.0 850.8,865.2 851.3,866.4 851.8,867.6 852.3,868.8 852.8,870.0 853.3,871.2 853.8,872.4 854.3,871.1 854.8,869.9 855.3,868.6 855.8,867.4 856.3,866.1 856.8,864.8 857.3,863.6 857.8,862.3 858.3,861.1 858.8,859.8 859.3,856.3 859.8,852.8 860.3,849.3 860.8,845.8 861.3,842.3 861.8,838.8 862.3,835.3 862.8,831.8 863.3,828.3 863.8,824.8 864.3,821.3 864.8,817.8 865.3,814.3 865.8,810.8 866.3,807.3 866.8,803.8 867.3,800.3 867.8,797.1 868.3,794.4 868.8,791.8 869.3,789.1 869.8,786.4 870.3,783.7 870.8,781.0 871.3,778.3 871.8,775.7 872.3,773.0 872.8,770.3 873.3,767.6 873.8,764.9 874.3,762.2 874.8,759.6 875.3,756.9 875.8,754.2 876.3,751.5 876.8,748.8 877.3,746.1 877.8,744.0 878.3,743.8 878.8,743.6 879.3,743.5 879.8,743.3 880.3,743.2 880.8,743.0 881.3,742.8 881.8,742.7 882.3,742.5 882.8,742.5 883.3,742.9 883.8,743.2 884.3,743.6 884.8,744.0 885.3,744.4 885.8,744.8 886.3,745.2 886.8,745.5 887.3,745.9 887.8,746.3 888.3,746.7 888.8,747.1 889.3,747.5 889.8,747.8 890.3,748.2 890.8,748.6 891.3,748.9 891.8,749.3 892.3,749.6 892.8,750.0 893.3,750.3 893.8,750.6 894.3,751.0 894.8,751.3 895.3,751.7 895.8,752.0 896.3,752.4 896.8,752.7 897.3,753.1 897.8,753.4 898.3,753.8 898.8,754.1 899.3,756.2 899.8,758.7 900.3,761.2 900.8,763.7 901.3,766.2 901.8,768.7 902.3,771.1 902.8,773.6 903.3,776.1 903.8,778.6 904.3,781.1 904.8,783.6 905.3,786.2 905.8,789.0 906.3,791.9 906.8,794.7 907.3,797.6 907.8,800.4 908.3,803.3 908.8,806.1 909.3,809.0 909.8,811.9 910.3,814.7 910.8,817.6 911.3,820.4 911.8,823.3 912.3,826.1 912.8,828.9 913.3,831.3 913.8,833.7 914.3,836.2 914.8,838.6 915.3,841.0 915.8,843.5 916.3,845.9 916.8,848.3 917.3,850.8 917.8,853.2 918.3,855.6 918.8,858.1 919.3,860.5 919.8,862.9 920.3,865.4 920.8,867.8 921.3,870.2 921.8,872.0 922.3,873.3 922.8,874.6 923.3,875.9 923.8,877.2 924.3,878.4 924.8,879.7 925.3,881.0 925.8,882.3 926.3,883.6 926.8,884.9 927.3,886.2 927.8,887.5 928.3,888.8 928.8,887.2 929.3,885.5 929.8,883.9 930.3,882.2 930.8,880.6 931.3,879.0 931.8,877.3 932.3,875.7 932.8,874.0 933.3,872.4 933.8,870.8 934.3,869.1 934.8,867.5 935.3,865.8 935.8,864.2 936.3,862.6 936.8,860.9 937.3,859.3 937.8,857.6 938.3,855.0 938.8,852.0 939.3,849.1 939.8,846.2 940.3,843.3 940.8,840.3 941.3,837.4 941.8,834.5 942.3,831.6 942.8,828.6 943.3,825.7 943.8,822.8 944.3,819.9 944.8,816.9 945.3,814.0 945.8,811.1 946.3,808.1 946.8,805.2 947.3,802.3 947.8,799.4 948.3,796.3 948.8,793.2 949.3,790.0 949.8,786.9 950.3,783.7 950.8,780.6 951.3,777.4 951.8,774.3 952.3,771.2 952.8,768.0 953.3,764.9 953.8,761.7 954.3,759.2 954.8,759.1 955.3,758.9 955.8,758.8 956.3,758.7 956.8,758.6 957.3,758.5 957.8,758.3 958.3,758.2 958.8,758.1 959.3,758.1 959.8,758.9 960.3,759.6 960.8,760.4 961.3,761.1 961.8,761.8 962.3,762.6 962.8,763.3 963.3,764.0 963.8,764.8 964.3,765.5 964.8,765.2 965.3,765.0 965.8,764.8 966.3,764.5 966.8,764.2 967.3,764.0 967.8,763.8 968.3,763.5 968.8,763.2 969.3,763.0 969.8,762.0 970.3,761.0 970.8,760.0 971.3,759.0 971.8,758.0 972.3,757.0 972.8,756.0 973.3,755.0 973.8,754.0 974.3,753.0 974.8,752.0 975.3,751.0 975.8,749.5 976.3,747.3 976.8,745.2 977.3,743.0 977.8,740.8 978.3,738.6 978.8,736.4 979.3,734.3 979.8,732.1 980.3,729.9 980.8,727.7 981.3,725.5 981.8,723.4 982.3,721.2 982.8,719.0 983.3,717.3 983.8,716.4 984.3,715.4 984.8,714.5 985.3,713.6 985.8,712.6 986.3,711.7 986.8,710.7 987.3,709.8 987.8,708.9 988.3,707.9 988.8,707.0 989.3,706.0 989.8,705.1 990.3,704.2 990.8,703.0 991.3,701.0 991.8,699.0 992.3,696.9 992.8,694.9 993.3,692.9 993.8,690.9 994.3,688.9 994.8,686.8 995.3,684.8 995.8,682.8 996.3,680.8 996.8,678.8 997.3,676.7 997.8,674.7 998.3,672.7 998.8,670.7 999.3,668.7 999.8,666.6 1000.3,664.6 1000.8,662.9 1001.3,662.7 1001.8,662.4 1002.3,662.1 1002.8,661.8 1003.3,661.5 1003.8,661.2 1004.3,660.9 1004.8,660.6 1005.3,660.3 1005.8,660.0 1006.3,659.8 1006.8,659.5 1007.3,659.2 1007.8,658.9 1008.3,658.6 1008.8,656.8 1009.3,655.0 1009.8,653.2 1010.3,651.4 1010.8,649.5 1011.3,647.7 1011.8,645.9 1012.3,644.1 1012.8,642.3 1013.3,640.5 1013.8,637.9 1014.3,635.2 1014.8,632.6 1015.3,629.9 1015.8,627.3 1016.3,624.6 1016.8,622.0 1017.3,619.3 1017.8,616.7 1018.3,614.1 1018.8,611.4 1019.3,608.8 1019.8,606.1 1020.3,603.5 1020.8,600.8 1021.3,598.8 1021.8,596.9 1022.3,595.1 1022.8,593.2 1023.3,591.3 1023.8,589.4 1024.3,587.6 1024.8,585.7 1025.3,583.8 1025.8,582.0 1026.3,580.1 1026.8,578.2 1027.3,576.3 1027.8,574.5 1028.3,572.6 1028.8,570.7 1029.3,568.9 1029.8,567.0 1030.3,565.1 1030.8,563.2 1031.3,562.3 1031.8,561.8 1032.3,561.4 1032.8,561.0 1033.3,560.6 1033.8,560.2 1034.3,559.8 1034.8,559.4 1035.3,558.9 1035.8,558.5 1036.3,558.1 1036.8,557.7 1037.3,557.3 1037.8,556.9 1038.3,556.5 1038.8,556.6 1039.3,557.0 1039.8,557.4 1040.3,557.8 1040.8,558.3 1041.3,558.7 1041.8,559.1 1042.3,559.5 1042.8,560.0 1043.3,560.4 1043.8,560.8 1044.3,561.2 1044.8,561.7 1045.3,562.1 1045.8,562.5 1046.3,562.9 1046.8,563.4 1047.3,563.8 1047.8,563.7 1048.3,563.6 1048.8,563.5 1049.3,563.4 1049.8,563.3 1050.3,563.2 1050.8,563.1 1051.3,563.0 1051.8,562.9 1052.3,562.8 1052.8,562.7 1053.3,562.6 1053.8,563.2 1054.3,565.0 1054.8,566.7 1055.3,568.5 1055.8,570.2 1056.3,572.0 1056.8,573.7 1057.3,575.5 1057.8,577.2 1058.3,579.0 1058.8,581.8 1059.3,586.4 1059.8,590.9 1060.3,595.4 1060.8,600.0 1061.3,604.5 1061.8,609.1 1062.3,613.6 1062.8,618.1 1063.3,622.7 1063.8,628.6 1064.3,636.7 1064.8,644.7 1065.3,652.8 1065.8,660.9 1066.3,668.9 1066.8,677.0 1067.3,685.0 1067.8,693.1 1068.3,701.2 1068.8,707.9 1069.3,712.5 1069.8,717.2 1070.3,721.9 1070.8,726.6 1071.3,731.6 1071.8,738.0 1072.3,744.3 1072.8,750.7 1073.3,757.1 1073.8,763.5 1074.3,769.9 1074.8,776.2 1075.3,782.6 1075.8,789.0 1076.3,795.4 1076.8,801.8 1077.3,808.1 1077.8,814.5 1078.3,820.9 1078.8,826.7 1079.3,830.2 1079.8,833.7 1080.3,837.2 1080.8,840.7 1081.3,844.2 1081.8,847.7 1082.3,851.2 1082.8,854.7 1083.3,858.2 1083.8,861.1 1084.3,861.5 1084.8,861.9 1085.3,862.3 1085.8,862.6 1086.3,863.0 1086.8,863.4 1087.3,863.8 1087.8,864.2 1088.3,864.6 1088.8,865.0 1089.3,865.9 1089.8,866.8 1090.3,867.6 1090.8,868.5 1091.3,869.4 1091.8,870.2 1092.3,871.1 1092.8,872.0 1093.3,872.9 1093.8,873.8 1094.3,874.6 1094.8,875.5 1095.3,876.4 1095.8,877.2 1096.3,878.1 1096.8,879.0 1097.3,879.9 1097.8,880.8 1098.3,881.6 1098.8,882.5 1099.3,881.5 1099.8,880.6 1100.3,879.6 1100.8,878.7 1101.3,877.7 1101.8,876.8 1102.3,875.8 1102.8,874.8 1103.3,873.9 1103.8,872.9 1104.3,872.0 1104.8,871.0 1105.3,870.1 1105.8,869.1 1106.3,868.1 1106.8,867.2 1107.3,866.2 1107.8,865.3 1108.3,864.3 1108.8,863.4 1109.3,862.4 1109.8,861.4 1110.3,860.5 1110.8,859.5 1111.3,858.6 1111.8,857.6 1112.3,856.7 1112.8,855.7 1113.3,854.7 1113.8,853.8 1114.3,851.3 1114.8,848.5 1115.3,845.6 1115.8,842.8 1116.3,840.0 1116.8,837.1 1117.3,834.3 1117.8,831.4 1118.3,828.6 1118.8,825.7 1119.3,822.9 1119.8,820.1 1120.3,817.4 1120.8,814.6 1121.3,811.8 1121.8,809.0 1122.3,806.2 1122.8,803.4 1123.3,800.7 1123.8,797.9 1124.3,795.1 1124.8,792.3 1125.3,789.5 1125.8,786.7 1126.3,784.0 1126.8,781.2 1127.3,778.4 1127.8,775.6 1128.3,776.3 1128.8,777.1 1129.3,777.8 1129.8,778.6 1130.3,779.3 1130.8,780.0 1131.3,780.8 1131.8,781.5 1132.3,782.3 1132.8,783.0 1133.3,780.6 1133.8,778.2 1134.3,775.7 1134.8,773.3 1135.3,770.9 1135.8,768.5 1136.3,766.1 1136.8,763.6 1137.3,761.2 1137.8,758.8 1138.3,756.4 1138.8,754.0 1139.3,751.5 1139.8,749.1 1140.3,746.7 1140.8,744.3 1141.3,741.9 1141.8,738.7 1142.3,734.3 1142.8,729.9 1143.3,725.5 1143.8,721.2 1144.3,716.8 1144.8,712.4 1145.3,708.0 1145.8,703.7 1146.3,699.3 1146.8,694.9 1147.3,690.6 1147.8,686.2 1148.3,681.8 1148.8,677.4 1149.3,673.4 1149.8,669.7 1150.3,665.9 1150.8,662.2 1151.3,658.4 1151.8,654.7 1152.3,650.9 1152.8,647.2 1153.3,643.4 1153.8,639.7 1154.3,635.9 1154.8,632.2 1155.3,628.4 1155.8,624.7 1156.3,620.9 1156.8,617.3 1157.3,614.4 1157.8,611.4 1158.3,608.5 1158.8,605.6 1159.3,602.6 1159.8,599.7 1160.3,596.8 1160.8,593.8 1161.3,590.9 1161.8,588.0 1162.3,585.0 1162.8,582.1 1163.3,579.2 1163.8,576.2 1164.3,573.8 1164.8,573.1 1165.3,572.4 1165.8,571.7 1166.3,571.0 1166.8,570.3 1167.3,569.6 1167.8,568.9 1168.3,568.2 1168.8,567.5 1169.3,566.8 1169.8,566.1 1170.3,565.4 1170.8,564.7 1171.3,564.0 1171.8,563.3 1172.3,562.6 1172.8,561.9 1173.3,561.2 1173.8,560.5 1174.3,559.8 1174.8,559.1 1175.3,558.4 1175.8,557.7 1176.3,557.0 1176.8,556.3 1177.3,556.3 1177.8,556.3 1178.3,556.3 1178.8,556.3 1179.3,556.3 1179.8,556.3 1180.3,556.3 1180.8,556.3 1181.3,556.3 1181.8,556.3 1182.3,556.3 1182.8,556.3 1183.3,556.3 1183.8,556.3 1184.3,556.3 1184.8,557.1 1185.3,558.1 1185.8,559.1 1186.3,560.1 1186.8,561.1 1187.3,562.1 1187.8,563.1 1188.3,564.1 1188.8,565.1 1189.3,566.1 1189.8,566.6 1190.3,566.9 1190.8,567.2 1191.3,567.5 1191.8,567.8 1192.3,568.1 1192.8,568.4 1193.3,568.8 1193.8,569.1 1194.3,569.4 1194.8,569.7 1195.3,570.0 1195.8,570.3 1196.3,570.6 1196.8,571.0 1197.3,571.3 1197.8,571.6 1198.3,571.9 1198.8,572.2 1199.3,572.5 1199.8,573.5 1200.3,574.6 1200.8,575.8 1201.3,576.9 1201.8,578.0 1202.3,579.1 1202.8,580.3 1203.3,581.4 1203.8,582.5 1204.3,583.6 1204.8,584.8 1205.3,585.9 1205.8,587.0 1206.3,588.1 1206.8,589.3 1207.3,590.4 1207.8,591.5 1208.3,592.6 1208.8,593.8 1209.3,594.9 1209.8,596.0 1210.3,597.1 1210.8,598.3 1211.3,599.4 1211.8,600.5 1212.3,601.6 1212.8,602.8 1213.3,603.9 1213.8,605.0 1214.3,606.1 1214.8,607.2 1215.3,608.2 1215.8,609.2 1216.3,610.2 1216.8,611.2 1217.3,612.2 1217.8,613.2 1218.3,614.1 1218.8,615.1 1219.3,616.1 1219.8,617.1 1220.3,618.1 1220.8,619.1 1221.3,620.1 1221.8,621.1 1222.3,622.1 1222.8,623.1 1223.3,624.1 1223.8,625.1 1224.3,626.1 1224.8,627.1 1225.3,628.0 1225.8,629.0 1226.3,630.0 1226.8,631.0 1227.3,632.0 1227.8,633.0 1228.3,634.0 1228.8,633.6 1229.3,632.9 1229.8,632.1 1230.3,631.4 1230.8,630.6 1231.3,629.9 1231.8,629.1 1232.3,628.4 1232.8,627.6 1233.3,626.9 1233.8,627.1 1234.3,627.6 1234.8,628.1 1235.3,628.6 1235.8,629.1 1236.3,629.6 1236.8,630.1 1237.3,630.6 1237.8,631.1 1238.3,631.6 1238.8,632.1 1239.3,632.6 1239.8,633.6 1240.3,636.3 1240.8,639.1 1241.3,641.8 1241.8,644.6 1242.3,647.4 1242.8,650.1 1243.3,652.9 1243.8,655.6 1244.3,658.4 1244.8,661.1 1245.3,663.4 1245.8,665.7 1246.3,668.0 1246.8,670.4 1247.3,672.7 1247.8,675.0 1248.3,677.3 1248.8,679.6 1249.3,682.0 1249.8,684.3 1250.3,686.6 1250.8,688.9 1251.3,691.3 1251.8,693.6 1252.3,695.9 1252.8,698.8 1253.3,701.7 1253.8,704.6 1254.3,707.5 1254.8,710.5 1255.3,713.4 1255.8,716.3 1256.3,719.2 1256.8,722.1 1257.3,725.0 1257.8,729.0 1258.3,733.0 1258.8,737.0 1259.3,741.1 1259.8,745.1 1260.3,749.1 1260.8,753.1 1261.3,757.1 1261.8,761.1 1262.3,765.2 1262.8,769.2 1263.3,773.2 1263.8,776.0 1264.3,776.8 1264.8,777.7 1265.3,778.6 1265.8,779.5 1266.3,780.4 1266.8,781.2 1267.3,782.1 1267.8,783.0 1268.3,783.9 1268.8,784.2 1269.3,783.7 1269.8,783.2 1270.3,782.7 1270.8,782.2 1271.3,781.7 1271.8,781.2 1272.3,780.7 1272.8,780.2 1273.3,779.7 1273.8,779.6 1274.3,780.2 1274.8,780.7 1275.3,781.3 1275.8,781.9 1276.3,782.4 1276.8,783.0 1277.3,783.5 1277.8,784.1 1278.3,784.7 1278.8,785.2 1279.3,785.8 1279.8,786.3 1280.3,786.9 1280.8,787.5 1281.3,788.0 1281.8,788.6 1282.3,789.1 1282.8,789.7 1283.3,790.3 1283.8,791.1 1284.3,793.0 1284.8,794.8 1285.3,796.7 1285.8,798.6 1286.3,800.5 1286.8,802.4 1287.3,804.2 1287.8,806.1 1288.3,808.0 1288.8,809.3 1289.3,808.4 1289.8,807.5 1290.3,806.6 1290.8,805.7 1291.3,804.7 1291.8,803.8 1292.3,802.9 1292.8,802.0 1293.3,801.1 1293.8,800.2 1294.3,799.3 1294.8,798.4 1295.3,797.4 1295.8,796.5 1296.3,795.6 1296.8,794.7 1297.3,793.8 1297.8,792.9 1298.3,792.0 1298.8,791.0 1299.3,790.1 1299.8,789.2 1300.3,788.3 1300.8,787.4 1301.3,786.5 1301.8,785.6 1302.3,784.6 1302.8,783.7 1303.3,782.8 1303.8,781.9 1304.3,782.9 1304.8,783.9 1305.3,784.9 1305.8,785.9 1306.3,786.9 1306.8,787.8 1307.3,788.8 1307.8,789.8 1308.3,790.8 1308.8,791.8 1309.3,791.8 1309.8,791.5 1310.3,791.3 1310.8,791.0 1311.3,790.8 1311.8,790.5 1312.3,790.2 1312.8,790.0 1313.3,789.7 1313.8,789.5 1314.3,790.2 1314.8,791.2 1315.3,792.2 1315.8,793.2 1316.3,794.2 1316.8,795.3 1317.3,796.3 1317.8,797.3 1318.3,798.3 1318.8,799.3 1319.3,799.2 1319.8,798.8 1320.3,798.5 1320.8,798.1 1321.3,797.7 1321.8,797.3 1322.3,797.0 1322.8,796.6 1323.3,796.2 1323.8,795.8 1324.3,796.9 1324.8,798.9 1325.3,800.9 1325.8,802.9 1326.3,804.9 1326.8,806.9 1327.3,808.8 1327.8,810.8 1328.3,812.8 1328.8,814.8 1329.3,816.8 1329.8,818.8 1330.3,819.4 1330.8,819.1 1331.3,818.7 1331.8,818.4 1332.3,818.0 1332.8,817.7 1333.3,817.3 1333.8,817.0 1334.3,814.1 1334.8,811.1 1335.3,808.2 1335.8,805.3 1336.3,802.3 1336.8,799.4 1337.3,796.5 1337.8,793.5 1338.3,790.6 1338.8,787.6 1339.3,784.7 1339.8,781.8 1340.3,777.7 1340.8,772.7 1341.3,767.8 1341.8,762.9 1342.3,758.0 1342.8,753.1 1343.3,748.2 1343.8,743.3 1344.3,738.4 1344.8,733.5 1345.3,728.6 1345.8,723.7 1346.3,718.8 1346.8,713.9 1347.3,708.9 1347.8,704.9 1348.3,702.0 1348.8,699.2 1349.3,696.4 1349.8,693.6 1350.3,690.7 1350.8,687.9 1351.3,685.1 1351.8,682.2 1352.3,679.4 1352.8,676.6 1353.3,673.8 1353.8,670.9 1354.3,668.1 1354.8,665.3 1355.3,662.7 1355.8,661.0 1356.3,659.3 1356.8,657.7 1357.3,656.0 1357.8,654.3 1358.3,652.7 1358.8,651.0 1359.3,649.3 1359.8,647.7 1360.3,646.0 1360.8,644.3 1361.3,642.7 1361.8,641.0 1362.3,639.3 1362.8,637.8 1363.3,636.8 1363.8,635.8 1364.3,634.8 1364.8,633.8 1365.3,632.8 1365.8,631.8 1366.3,630.8 1366.8,629.8 1367.3,628.8 1367.8,627.8 1368.3,626.8 1368.8,625.8 1369.3,624.8 1369.8,623.8 1370.3,622.7 1370.8,621.1 1371.3,619.5 1371.8,617.9 1372.3,616.4 1372.8,614.8 1373.3,613.2 1373.8,611.6 1374.3,610.1 1374.8,608.5 1375.3,606.9 1375.8,605.3 1376.3,603.7 1376.8,602.2 1377.3,600.6 1377.8,599.0 1378.3,598.4 1378.8,597.7 1379.3,597.1 1379.8,596.5 1380.3,595.9 1380.8,595.2 1381.3,594.6 1381.8,594.0 1382.3,593.3 1382.8,592.7 1383.3,594.7 1383.8,596.7 1384.3,598.6 1384.8,600.6 1385.3,602.6 1385.8,604.6 1386.3,606.6 1386.8,608.5 1387.3,610.5 1387.8,612.5 1388.3,615.4 1388.8,618.6 1389.3,621.8 1389.8,625.0 1390.3,628.2 1390.8,631.3 1391.3,634.5 1391.8,637.7 1392.3,640.9 1392.8,644.1 1393.3,647.2 1393.8,650.4 1394.3,653.6 1394.8,656.8 1395.3,660.0 1395.8,662.6 1396.3,665.1 1396.8,667.6 1397.3,670.1 1397.8,672.6 1398.3,675.1 1398.8,677.6 1399.3,680.1 1399.8,682.6 1400.3,685.1 1400.8,687.5 1401.3,690.0 1401.8,692.5 1402.3,695.0 1402.8,697.5 1403.3,700.0 1403.8,702.5 1404.3,705.0 1404.8,707.5 1405.3,710.0 1405.8,712.6 1406.3,715.3 1406.8,718.0 1407.3,720.7 1407.8,723.4 1408.3,726.1 1408.8,728.8 1409.3,731.4 1409.8,734.1 1410.3,736.8 1410.8,738.7 1411.3,740.1 1411.8,741.6 1412.3,743.0 1412.8,744.4 1413.3,745.8 1413.8,747.2 1414.3,748.6 1414.8,750.0 1415.3,751.4 1415.8,752.8 1416.3,754.2 1416.8,755.6 1417.3,757.0 1417.8,758.4 1418.3,759.8 1418.8,761.2 1419.3,762.6 1419.8,764.0 1420.3,765.4 1420.8,766.8 1421.3,768.2 1421.8,769.6 1422.3,771.0 1422.8,772.4 1423.3,775.2 1423.8,778.8 1424.3,782.5 1424.8,786.1 1425.3,789.8 1425.8,793.4 1426.3,797.1 1426.8,800.7 1427.3,804.3 1427.8,808.0 1428.3,811.6 1428.8,815.3 1429.3,818.9 1429.8,822.6 1430.3,826.2 1430.8,829.5 1431.3,832.3 1431.8,835.2 1432.3,838.0 1432.8,840.8 1433.3,843.6 1433.8,846.4 1434.3,849.2 1434.8,852.1 1435.3,854.9 1435.8,857.7 1436.3,860.5 1436.8,863.3 1437.3,866.1 1437.8,868.9 1438.3,871.5 1438.8,872.7 1439.3,874.0 1439.8,875.2 1440.3,876.5 1440.8,877.7 1441.3,879.0 1441.8,880.2 1442.3,881.5 1442.8,882.7 1443.3,884.0 1443.8,885.3 1444.3,886.5 1444.8,887.8 1445.3,889.0 1445.8,890.3 1446.3,891.5 1446.8,892.8 1447.3,894.0 1447.8,895.3 1448.3,895.9 1448.8,894.1 1449.3,892.2 1449.8,890.3 1450.3,888.5 1450.8,886.6 1451.3,884.7 1451.8,882.9 1452.3,881.0 1452.8,879.1 1453.3,877.3 1453.8,875.4 1454.3,873.5 1454.8,871.7 1455.3,869.8 1455.8,867.9 1456.3,866.1 1456.8,864.2 1457.3,862.3 1457.8,860.5 1458.3,858.6 1458.8,857.1 1459.3,855.6 1459.8,854.1 1460.3,852.6 1460.8,851.0 1461.3,849.5 1461.8,848.0 1462.3,846.5 1462.8,845.0 1463.3,843.5 1463.8,842.0 1464.3,840.5 1464.8,839.0 1465.3,837.5 1465.8,836.0 1466.3,834.4 1466.8,832.9 1467.3,831.4 1467.8,829.9 1468.3,828.4 1468.8,828.9 1469.3,829.4 1469.8,829.9 1470.3,830.4 1470.8,830.9 1471.3,831.3 1471.8,831.8 1472.3,832.3 1472.8,832.8 1473.3,833.3 1473.8,834.7 1474.3,836.2 1474.8,837.8 1475.3,839.4 1475.8,841.0 1476.3,842.5 1476.8,844.1 1477.3,845.7 1477.8,847.3 1478.3,848.8 1478.8,850.4 1479.3,852.0 1479.8,853.6 1480.3,855.1 1480.8,856.7 1481.3,858.3 1481.8,859.9 1482.3,861.4 1482.8,863.0 1483.3,864.6 1483.8,862.1 1484.3,858.5 1484.8,854.9 1485.3,851.4 1485.8,847.8 1486.3,844.3 1486.8,840.7 1487.3,837.1 1487.8,833.6 1488.3,830.0 1488.8,826.5 1489.3,822.9 1489.8,819.3 1490.3,815.8 1490.8,812.2 1491.3,809.2 1491.8,806.5 1492.3,803.8 1492.8,801.1 1493.3,798.4 1493.8,795.7 1494.3,793.0 1494.8,790.3 1495.3,787.6 1495.8,784.9 1496.3,782.2 1496.8,779.5 1497.3,776.8 1497.8,774.2 1498.3,771.5 1498.8,768.8 1499.3,766.1 1499.8,763.4 1500.3,760.7 1500.8,758.0 1501.3,755.3 1501.8,752.6 1502.3,749.9 1502.8,747.2 1503.3,744.5 1503.8,742.3 1504.3,740.7 1504.8,739.1 1505.3,737.5 1505.8,735.9 1506.3,734.3 1506.8,732.7 1507.3,731.1 1507.8,729.5 1508.3,727.9 1508.8,726.3 1509.3,724.7 1509.8,723.1 1510.3,721.5 1510.8,719.9 1511.3,718.3 1511.8,716.7 1512.3,715.1 1512.8,713.6 1513.3,712.0 1513.8,710.0 1514.3,707.7 1514.8,705.3 1515.3,702.9 1515.8,700.5 1516.3,698.2 1516.8,695.8 1517.3,693.4 1517.8,691.0 1518.3,688.7 1518.8,686.3 1519.3,683.9 1519.8,681.5 1520.3,679.2 1520.8,676.8 1521.3,674.4 1521.8,672.0 1522.3,669.7 1522.8,667.3 1523.3,664.9 1523.8,662.5 1524.3,659.8 1524.8,657.1 1525.3,654.5 1525.8,651.8 1526.3,649.1 1526.8,646.5 1527.3,643.8 1527.8,641.1 1528.3,638.5 1528.8,635.8 1529.3,633.1 1529.8,630.5 1530.3,627.8 1530.8,625.1 1531.3,622.3 1531.8,618.7 1532.3,615.2 1532.8,611.6 1533.3,608.0 1533.8,604.5 1534.3,600.9 1534.8,597.3 1535.3,593.8 1535.8,590.2 1536.3,586.6 1536.8,583.1 1537.3,579.5 1537.8,575.9 1538.3,572.4 1538.8,568.8 1539.3,570.3 1539.8,571.8 1540.3,573.4 1540.8,574.9 1541.3,576.4 1541.8,577.9 1542.3,579.4 1542.8,581.0 1543.3,582.5 1543.8,584.0 1544.3,584.6 1544.8,585.2 1545.3,585.9 1545.8,586.5 1546.3,587.1 1546.8,587.7 1547.3,588.3 1547.8,589.0 1548.3,589.6 1548.8,590.2 1549.3,593.3 1549.8,596.5 1550.3,599.6 1550.8,602.8 1551.3,605.9 1551.8,609.1 1552.3,612.2 1552.8,615.4 1553.3,618.5 1553.8,621.6 1554.3,624.8 1554.8,627.9 1555.3,631.1 1555.8,634.2 1556.3,637.4 1556.8,638.8 1557.3,639.8 1557.8,640.8 1558.3,641.8 1558.8,642.8 1559.3,643.8 1559.8,644.8 1560.3,645.8 1560.8,646.8 1561.3,647.8 1561.8,648.5 1562.3,649.2 1562.8,649.9 1563.3,650.5 1563.8,651.2 1564.3,651.9 1564.8,652.5 1565.3,653.2 1565.8,653.8 1566.3,654.5 1566.8,655.2 1567.3,655.8 1567.8,656.5 1568.3,657.2 1568.8,657.8 1569.3,656.5 1569.8,653.8 1570.3,651.1 1570.8,648.5 1571.3,645.8 1571.8,643.1 1572.3,640.4 1572.8,637.7 1573.3,635.1 1573.8,632.4 1574.3,629.7 1574.8,627.0 1575.3,624.3 1575.8,621.7 1576.3,619.0 1576.8,616.2 1577.3,613.3 1577.8,610.4 1578.3,607.5 1578.8,604.6 1579.3,601.7 1579.8,598.8 1580.3,595.9 1580.8,593.0 1581.3,590.2 1581.8,588.8 1582.3,588.6 1582.8,588.3 1583.3,588.1 1583.8,587.8 1584.3,587.6 1584.8,587.3 1585.3,587.1 1585.8,586.8 1586.3,586.6 1586.8,586.6 1587.3,587.0 1587.8,587.4 1588.3,587.8 1588.8,588.3 1589.3,588.7 1589.8,589.1 1590.3,589.5 1590.8,590.0 1591.3,590.4 1591.8,590.8 1592.3,591.3 1592.8,591.7 1593.3,592.1 1593.8,592.5 1594.3,593.5 1594.8,594.9 1595.3,596.2 1595.8,597.6 1596.3,598.9 1596.8,600.3 1597.3,601.7 1597.8,603.0 1598.3,604.4 1598.8,605.7 1599.3,607.1 1599.8,608.5 1600.3,609.8 1600.8,611.2 1601.3,612.5 1601.8,613.9 1602.3,615.2 1602.8,616.6 1603.3,618.0 1603.8,619.3 1604.3,620.4 1604.8,620.2 1605.3,620.1 1605.8,620.0 1606.3,619.9 1606.8,619.7 1607.3,619.6 1607.8,619.5 1608.3,619.3 1608.8,619.2 1609.3,619.4 1609.8,620.6 1610.3,621.9 1610.8,623.2 1611.3,624.5 1611.8,625.8 1612.3,627.1 1612.8,628.4 1613.3,629.7 1613.8,631.0 1614.3,632.3 1614.8,633.5 1615.3,634.8 1615.8,636.1 1616.3,637.4 1616.8,638.7 1617.3,640.0 1617.8,641.3 1618.3,640.6 1618.8,638.6 1619.3,636.6 1619.8,634.5 1620.3,632.5 1620.8,630.5 1621.3,628.5 1621.8,626.5 1622.3,624.5 1622.8,622.5 1623.3,620.4 1623.8,618.4 1624.3,616.4 1624.8,614.4 1625.3,612.4 1625.8,610.4 1626.3,608.4 1626.8,606.3 1627.3,604.3 1627.8,602.3 1628.3,601.4 1628.8,601.3 1629.3,601.2 1629.8,601.1 1630.3,601.0 1630.8,600.9 1631.3,600.8 1631.8,600.7 1632.3,600.6 1632.8,600.4 1633.3,600.3 1633.8,600.2 1634.3,600.1 1634.8,600.0 1635.3,599.9 1635.8,599.8 1636.3,599.7 1636.8,599.6 1637.3,599.5 1637.8,599.4 1638.3,599.2 1638.8,599.1 1639.3,599.0 1639.8,598.3 1640.3,597.4 1640.8,596.5 1641.3,595.7 1641.8,594.8 1642.3,593.9 1642.8,593.0 1643.3,592.1 1643.8,591.3 1644.3,590.4 1644.8,589.5 1645.3,588.6 1645.8,587.7 1646.3,586.9 1646.8,586.0 1647.3,585.1 1647.8,584.2 1648.3,583.3 1648.8,582.5 1649.3,581.6 1649.8,581.5 1650.3,581.6 1650.8,581.8 1651.3,581.9 1651.8,582.0 1652.3,582.1 1652.8,582.3 1653.3,582.4 1653.8,582.5 1654.3,582.6 1654.8,582.5 1655.3,582.3 1655.8,582.0 1656.3,581.8 1656.8,581.5 1657.3,581.3 1657.8,581.0 1658.3,580.8 1658.8,580.5 1659.3,580.3 1659.8,580.0 1660.3,579.7 1660.8,579.5 1661.3,579.2 1661.8,579.0 1662.3,578.7 1662.8,578.5 1663.3,578.2 1663.8,578.0 1664.3,577.7 1664.8,578.1 1665.3,579.0 1665.8,579.9 1666.3,580.7 1666.8,581.6 1667.3,582.5 1667.8,583.4 1668.3,584.2 1668.8,585.1 1669.3,586.0 1669.8,586.8 1670.3,587.7 1670.8,588.6 1671.3,589.4 1671.8,590.3 1672.3,591.2 1672.8,592.1 1673.3,592.9 1673.8,593.8 1674.3,594.7 1674.8,595.2 1675.3,595.3 1675.8,595.4 1676.3,595.5 1676.8,595.6 1677.3,595.7 1677.8,595.8 1678.3,595.8 1678.8,595.9 1679.3,596.0 1679.8,596.1 1680.3,596.2 1680.8,596.3 1681.3,596.4 1681.8,596.4 1682.3,596.4 1682.8,596.2 1683.3,596.0 1683.8,595.9 1684.3,595.7 1684.8,595.5 1685.3,595.3 1685.8,595.1 1686.3,594.9 1686.8,594.7 1687.3,594.5 1687.8,594.4 1688.3,594.2 1688.8,594.0 1689.3,593.8 1689.8,593.6 1690.3,593.4 1690.8,593.2 1691.3,593.0 1691.8,592.9 1692.3,592.5 1692.8,591.7 1693.3,590.9 1693.8,590.0 1694.3,589.2 1694.8,588.4 1695.3,587.6 1695.8,586.7 1696.3,585.9 1696.8,585.1 1697.3,584.2 1697.8,583.4 1698.3,582.6 1698.8,581.8 1699.3,580.9 1699.8,580.1 1700.3,579.5 1700.8,578.8 1701.3,578.2 1701.8,577.5 1702.3,576.9 1702.8,576.2 1703.3,575.6 1703.8,575.0 1704.3,574.3 1704.8,573.7 1705.3,573.0 1705.8,572.4 1706.3,571.8 1706.8,571.1 1707.3,570.5 1707.8,569.8 1708.3,569.2 1708.8,569.0 1709.3,569.3 1709.8,569.7 1710.3,570.1 1710.8,570.5 1711.3,570.9 1711.8,571.2 1712.3,571.6 1712.8,572.0 1713.3,572.4 1713.8,572.5 1714.3,572.4 1714.8,572.2 1715.3,572.1 1715.8,571.9 1716.3,571.7 1716.8,571.6 1717.3,571.4 1717.8,571.3 1718.3,571.1 1718.8,570.9 1719.3,570.8 1719.8,570.6 1720.3,570.8 1720.8,570.9 1721.3,571.1 1721.8,571.3 1722.3,571.5 1722.8,571.7 1723.3,571.9 1723.8,572.1 1724.3,572.2 1724.8,572.4 1725.3,572.6 1725.8,572.8 1726.3,573.0 1726.8,573.2 1727.3,573.4 1727.8,573.6 1728.3,573.8 1728.8,574.2 1729.3,575.4 1729.8,576.7 1730.3,578.0 1730.8,579.3 1731.3,580.6 1731.8,581.9 1732.3,583.1 1732.8,584.4 1733.3,585.7 1733.8,587.0 1734.3,588.3 1734.8,589.6 1735.3,590.8 1735.8,592.1 1736.3,593.4 1736.8,594.7 1737.3,596.0 1737.8,597.7 1738.3,599.6 1738.8,601.5 1739.3,603.4 1739.8,605.4 1740.3,607.3 1740.8,609.2 1741.3,611.1 1741.8,613.1 1742.3,615.0 1742.8,616.9 1743.3,618.8 1743.8,620.8 1744.3,622.7 1744.8,624.6 1745.3,626.3 1745.8,627.9 1746.3,629.5 1746.8,631.0 1747.3,632.6 1747.8,634.2 1748.3,635.7 1748.8,637.3 1749.3,638.9 1749.8,640.5 1750.3,642.0 1750.8,643.6 1751.3,645.2 1751.8,646.7 1752.3,648.3 1752.8,649.9 1753.3,651.4 1753.8,653.0 1754.3,652.8 1754.8,652.7 1755.3,652.5 1755.8,652.4 1756.3,652.2 1756.8,652.1 1757.3,651.9 1757.8,651.6 1758.3,651.1 1758.8,650.6 1759.3,650.1 1759.8,649.6 1760.3,649.1 1760.8,648.6 1761.3,648.1 1761.8,647.7 1762.3,647.2 1762.8,646.7 1763.3,646.2 1763.8,645.7 1764.3,645.2 1764.8,644.7 1765.3,644.2 1765.8,643.9 1766.3,643.6 1766.8,643.2 1767.3,642.9 1767.8,642.6 1768.3,642.2 1768.8,641.9 1769.3,641.6 1769.8,641.2 1770.3,640.9 1770.8,640.6 1771.3,640.2 1771.8,639.9 1772.3,639.6" fill="none" stroke="#ff00ff" stroke-width="1.1"/>
<line x1="2" y1="558.5" x2="1773" y2="558.5" stroke="#0000ff" stroke-width="1" shape-rendering="crispEdges"/>
<line x1="2" y1="625.5" x2="1773" y2="625.5" stroke="#ffff00" stroke-width="1" shape-rendering="crispEdges"/>
<line x1="2" y1="726.5" x2="1773" y2="726.5" stroke="#ff0000" stroke-width="1" shape-rendering="crispEdges"/>
<line x1="2" y1="827.5" x2="1773" y2="827.5" stroke="#00ff00" stroke-width="1" shape-rendering="crispEdges"/>
<line x1="2" y1="895.5" x2="1773" y2="895.5" stroke="#0000ff" stroke-width="1" shape-rendering="crispEdges"/>
<line x1="1773" y1="895.5" x2="1789" y2="895.5" stroke="#a00000" stroke-dasharray="3 3" shape-rendering="crispEdges"/>
<g shape-rendering="crispEdges" stroke="#c81414" stroke-width="1"><line x1="0" y1="0.5" x2="1789" y2="0.5"/><line x1="1.5" y1="0" x2="1.5" y2="903"/><line x1="1" y1="535.5" x2="1789" y2="535.5"/><line x1="1" y1="902.5" x2="1789" y2="902.5"/></g>
<polyline points="81,7 85,11 89,7" fill="none" stroke="#ffff00" stroke-width="1.4"/>
<polyline points="81,543 85,547 89,543" fill="none" stroke="#ffff00" stroke-width="1.4"/>
<defs><linearGradient id="lg" x1="0" y1="0" x2="0" y2="1"><stop offset="0" stop-color="#f23a12"/><stop offset="0.5" stop-color="#f0300c"/><stop offset="1" stop-color="#f2380e"/></linearGradient></defs>
<rect x="1653" y="485" width="136" height="51" fill="url(#lg)"/>
</svg>
<div class="t" style="left:5px;top:3px;color:#ffff00;font-size:12px">金牛起爆通道</div>
<div class="t" style="left:97px;top:3px;color:#ffff00;font-size:12px">金牛 790.62</div>
<div class="t" style="left:173px;top:3px;color:#ff0000;font-size:12px">金钻趋势 787.15</div>
<div class="t" style="left:272px;top:3px;color:#00ffff;font-size:12px">金牛2 783.93</div>
<div class="t" style="left:353px;top:3px;color:#ffffff;font-size:12px">MA5 788.80</div>
<div class="t" style="left:429px;top:3px;color:#ffff00;font-size:12px">MA10 788.65</div>
<div class="t" style="left:5px;top:538px;color:#ffff00;font-size:12px">看涨看跌附图</div>
<div class="t" style="left:97px;top:538px;color:#ff00ff;font-size:12px;letter-spacing:-0.15px">DKX 76.22</div>
<div class="t" style="left:164px;top:538px;color:#0000ff;font-size:12px;letter-spacing:-0.15px">DDZKD 100.00</div>
<div class="t" style="left:252px;top:538px;color:#ffff00;font-size:12px;letter-spacing:-0.15px">DDZKDYJ 80.00</div>
<div class="t" style="left:347px;top:538px;color:#ff0000;font-size:12px;letter-spacing:-0.15px">DKFJ 50.00</div>
<div class="t" style="left:418px;top:538px;color:#00ff00;font-size:12px;letter-spacing:-0.15px">KDZDDYJ 20.00</div>
<div class="t" style="left:513px;top:538px;color:#0000ff;font-size:12px;letter-spacing:-0.15px">KDZDD 0.00</div>
<div class="t" style="left:2px;top:520px;color:#ffff00;font-size:12px">4天</div>
<div class="t" style="left:387px;top:182px;color:#ff5050;font-size:12px">782.0</div>
<div class="t" style="left:57px;top:427px;color:#00ffff;font-size:12px">770.0</div>
<div class="t" style="left:562px;top:407px;color:#00ffff;font-size:12px">771.0</div>
<div class="t" style="left:902px;top:522px;color:#00ffff;font-size:12px">765.0</div>
<div class="t" style="left:1317px;top:221px;color:#ff5050;font-size:12px">780.0</div>
<div class="t" style="left:1702px;top:22px;color:#ff5050;font-size:12px">790.5</div>
<div class="t" style="left:126px;top:412px;color:#ff0000;font-size:12px">起爆点</div>
<div class="t" style="left:274px;top:372px;color:#ff0000;font-size:12px">起爆点</div>
<div class="t" style="left:469px;top:307px;color:#ff0000;font-size:12px">起爆点</div>
<div class="t" style="left:935px;top:507px;color:#ff0000;font-size:12px">起爆点</div>
<div class="t" style="left:1090px;top:441px;color:#ff0000;font-size:12px">起爆点</div>
<div class="t" style="left:1315px;top:374px;color:#ff0000;font-size:12px">起爆点</div>
<div class="t" style="left:1446px;top:355px;color:#ff0000;font-size:12px">起爆点</div>
<div class="t" style="left:1486px;top:355px;color:#ff0000;font-size:12px">起爆点</div>
<div class="t" style="left:1560px;top:327px;color:#ff0000;font-size:12px">起爆点</div>
<div class="t" style="left:1755px;top:98px;color:#ff0000;font-size:12px">起爆点</div>
<div class="t" style="left:1661px;top:494px;color:#ffff00;font-size:14px;line-height:16px;font-weight:bold">股道边</div>
<div class="t" style="left:1704px;top:497px;color:#ffcc00;font-size:10px;line-height:10px">指标公式量化资源</div>
<div class="t" style="left:1659px;top:512px;color:#ffffff;font-size:15.5px;line-height:16px;font-weight:bold;letter-spacing:-0.3px">www.de6688.com</div>
</body></html>
